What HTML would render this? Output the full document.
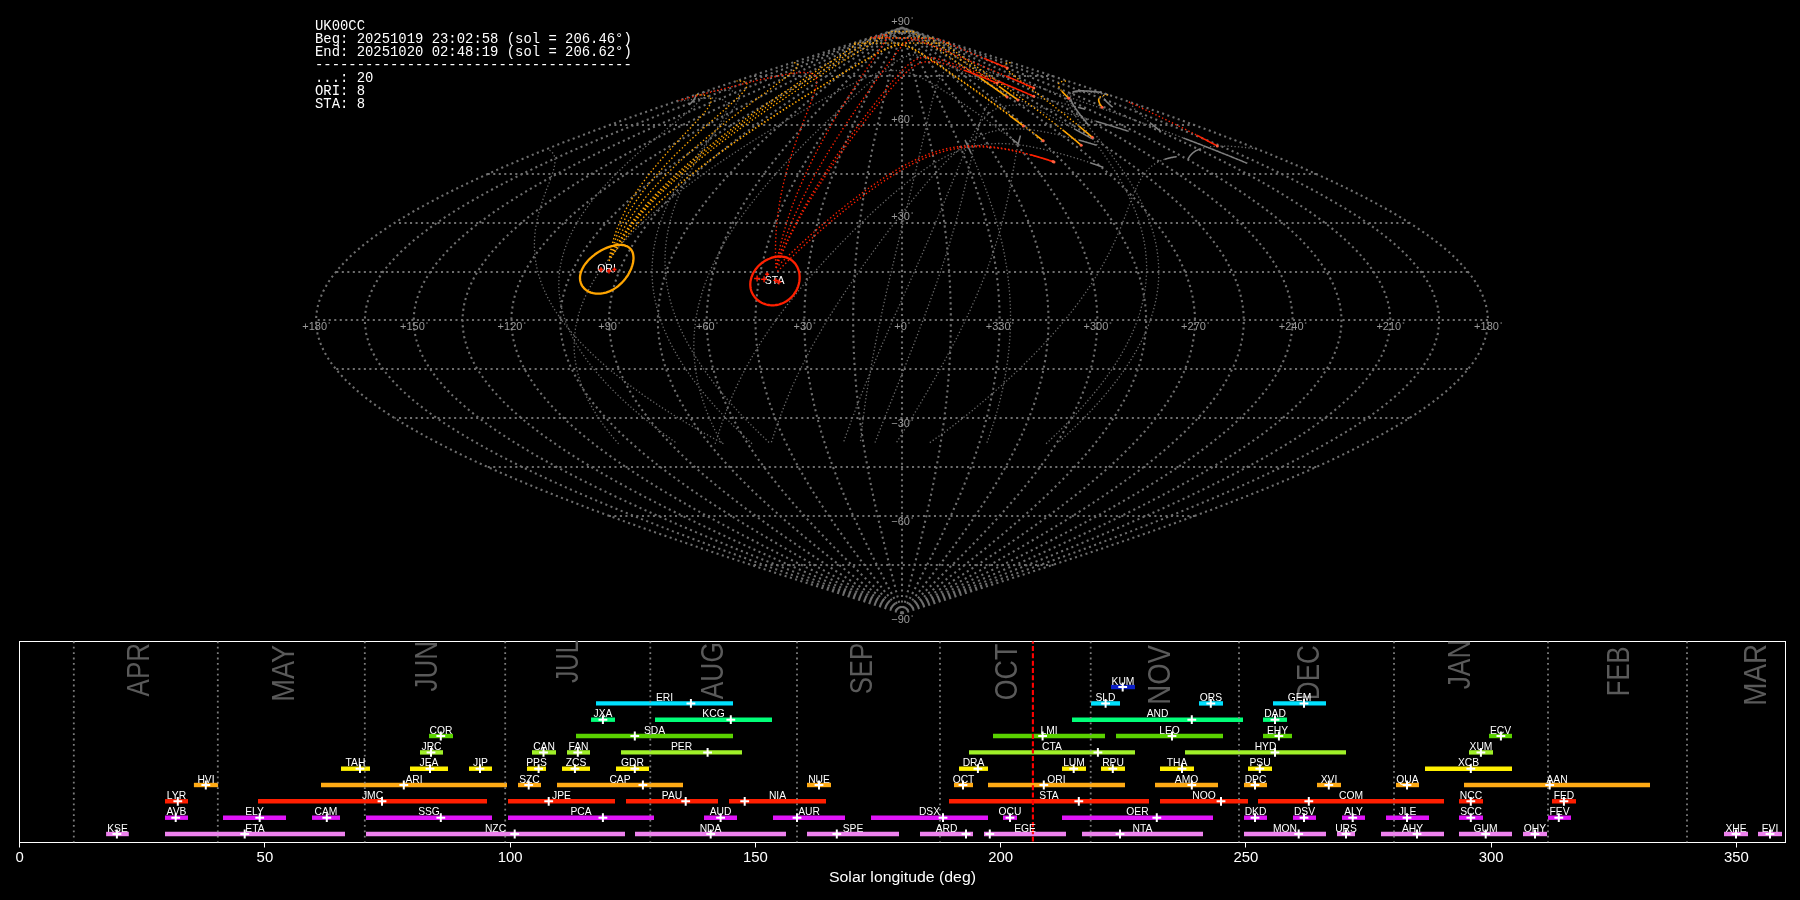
<!DOCTYPE html>
<html><head><meta charset="utf-8"><title>UK00CC</title>
<style>html,body{margin:0;padding:0;background:#000;width:1800px;height:900px;overflow:hidden}svg{display:block;will-change:transform}</style>
</head><body>
<svg width="1800" height="900" viewBox="0 0 1800 900">
<rect width="1800" height="900" fill="#000"/>
<path d="M902.0 613.5 L912.2 610.2 L922.4 606.9 L932.7 603.7 L942.9 600.4 L953.1 597.2 L963.2 593.9 L973.4 590.7 L983.5 587.4 L993.7 584.2 L1003.7 580.9 L1013.8 577.6 L1023.8 574.4 L1033.8 571.1 L1043.7 567.9 L1053.6 564.6 L1063.5 561.4 L1073.3 558.1 L1083.1 554.9 L1092.8 551.6 L1102.4 548.4 L1112.0 545.1 L1121.5 541.8 L1130.9 538.6 L1140.3 535.3 L1149.6 532.1 L1158.8 528.8 L1168.0 525.6 L1177.1 522.3 L1186.0 519.1 L1195.0 515.8 L1203.8 512.5 L1212.5 509.3 L1221.1 506.0 L1229.6 502.8 L1238.1 499.5 L1246.4 496.3 L1254.6 493.0 L1262.7 489.8 L1270.7 486.5 L1278.6 483.2 L1286.4 480.0 L1294.0 476.7 L1301.6 473.5 L1309.0 470.2 L1316.3 467.0 L1323.5 463.7 L1330.5 460.5 L1337.4 457.2 L1344.2 454.0 L1350.8 450.7 L1357.3 447.4 L1363.7 444.2 L1369.9 440.9 L1376.0 437.7 L1381.9 434.4 L1387.7 431.2 L1393.4 427.9 L1398.9 424.7 L1404.2 421.4 L1409.4 418.1 L1414.4 414.9 L1419.3 411.6 L1424.0 408.4 L1428.6 405.1 L1433.0 401.9 L1437.2 398.6 L1441.3 395.4 L1445.2 392.1 L1449.0 388.9 L1452.6 385.6 L1456.0 382.3 L1459.2 379.1 L1462.3 375.8 L1465.2 372.6 L1467.9 369.3 L1470.5 366.1 L1472.9 362.8 L1475.1 359.6 L1477.1 356.3 L1479.0 353.1 L1480.7 349.8 L1482.2 346.5 L1483.5 343.3 L1484.7 340.0 L1485.7 336.8 L1486.5 333.5 L1487.1 330.3 L1487.5 327.0 L1487.8 323.8 L1487.9 320.5 L1487.8 317.2 L1487.5 314.0 L1487.1 310.7 L1486.5 307.5 L1485.7 304.2 L1484.7 301.0 L1483.5 297.7 L1482.2 294.5 L1480.7 291.2 L1479.0 287.9 L1477.1 284.7 L1475.1 281.4 L1472.9 278.2 L1470.5 274.9 L1467.9 271.7 L1465.2 268.4 L1462.3 265.2 L1459.2 261.9 L1456.0 258.7 L1452.6 255.4 L1449.0 252.1 L1445.2 248.9 L1441.3 245.6 L1437.2 242.4 L1433.0 239.1 L1428.6 235.9 L1424.0 232.6 L1419.3 229.4 L1414.4 226.1 L1409.4 222.9 L1404.2 219.6 L1398.9 216.3 L1393.4 213.1 L1387.7 209.8 L1381.9 206.6 L1376.0 203.3 L1369.9 200.1 L1363.7 196.8 L1357.3 193.6 L1350.8 190.3 L1344.2 187.0 L1337.4 183.8 L1330.5 180.5 L1323.5 177.3 L1316.3 174.0 L1309.0 170.8 L1301.6 167.5 L1294.0 164.3 L1286.4 161.0 L1278.6 157.8 L1270.7 154.5 L1262.7 151.2 L1254.6 148.0 L1246.4 144.7 L1238.1 141.5 L1229.6 138.2 L1221.1 135.0 L1212.5 131.7 L1203.8 128.5 L1195.0 125.2 L1186.0 121.9 L1177.1 118.7 L1168.0 115.4 L1158.8 112.2 L1149.6 108.9 L1140.3 105.7 L1130.9 102.4 L1121.5 99.2 L1112.0 95.9 L1102.4 92.7 L1092.8 89.4 L1083.1 86.1 L1073.3 82.9 L1063.5 79.6 L1053.6 76.4 L1043.7 73.1 L1033.8 69.9 L1023.8 66.6 L1013.8 63.4 L1003.7 60.1 L993.7 56.8 L983.5 53.6 L973.4 50.3 L963.2 47.1 L953.1 43.8 L942.9 40.6 L932.7 37.3 L922.4 34.1 L912.2 30.8 L902.0 27.6 M902.0 613.5 L911.4 610.2 L920.7 606.9 L930.1 603.7 L939.5 600.4 L948.8 597.2 L958.1 593.9 L967.5 590.7 L976.7 587.4 L986.0 584.2 L995.3 580.9 L1004.5 577.6 L1013.7 574.4 L1022.8 571.1 L1031.9 567.9 L1041.0 564.6 L1050.0 561.4 L1059.0 558.1 L1068.0 554.9 L1076.9 551.6 L1085.7 548.4 L1094.5 545.1 L1103.2 541.8 L1111.9 538.6 L1120.4 535.3 L1129.0 532.1 L1137.4 528.8 L1145.8 525.6 L1154.1 522.3 L1162.4 519.1 L1170.5 515.8 L1178.6 512.5 L1186.6 509.3 L1194.5 506.0 L1202.3 502.8 L1210.1 499.5 L1217.7 496.3 L1225.2 493.0 L1232.7 489.8 L1240.0 486.5 L1247.2 483.2 L1254.4 480.0 L1261.4 476.7 L1268.3 473.5 L1275.1 470.2 L1281.8 467.0 L1288.3 463.7 L1294.8 460.5 L1301.1 457.2 L1307.3 454.0 L1313.4 450.7 L1319.4 447.4 L1325.2 444.2 L1330.9 440.9 L1336.5 437.7 L1341.9 434.4 L1347.3 431.2 L1352.4 427.9 L1357.5 424.7 L1362.4 421.4 L1367.1 418.1 L1371.7 414.9 L1376.2 411.6 L1380.5 408.4 L1384.7 405.1 L1388.8 401.9 L1392.6 398.6 L1396.4 395.4 L1400.0 392.1 L1403.4 388.9 L1406.7 385.6 L1409.8 382.3 L1412.8 379.1 L1415.6 375.8 L1418.3 372.6 L1420.8 369.3 L1423.1 366.1 L1425.3 362.8 L1427.3 359.6 L1429.2 356.3 L1430.9 353.1 L1432.5 349.8 L1433.8 346.5 L1435.1 343.3 L1436.1 340.0 L1437.0 336.8 L1437.8 333.5 L1438.3 330.3 L1438.7 327.0 L1439.0 323.8 L1439.1 320.5 L1439.0 317.2 L1438.7 314.0 L1438.3 310.7 L1437.8 307.5 L1437.0 304.2 L1436.1 301.0 L1435.1 297.7 L1433.8 294.5 L1432.5 291.2 L1430.9 287.9 L1429.2 284.7 L1427.3 281.4 L1425.3 278.2 L1423.1 274.9 L1420.8 271.7 L1418.3 268.4 L1415.6 265.2 L1412.8 261.9 L1409.8 258.7 L1406.7 255.4 L1403.4 252.1 L1400.0 248.9 L1396.4 245.6 L1392.6 242.4 L1388.8 239.1 L1384.7 235.9 L1380.5 232.6 L1376.2 229.4 L1371.7 226.1 L1367.1 222.9 L1362.4 219.6 L1357.5 216.3 L1352.4 213.1 L1347.3 209.8 L1341.9 206.6 L1336.5 203.3 L1330.9 200.1 L1325.2 196.8 L1319.4 193.6 L1313.4 190.3 L1307.3 187.0 L1301.1 183.8 L1294.8 180.5 L1288.3 177.3 L1281.8 174.0 L1275.1 170.8 L1268.3 167.5 L1261.4 164.3 L1254.4 161.0 L1247.2 157.8 L1240.0 154.5 L1232.7 151.2 L1225.2 148.0 L1217.7 144.7 L1210.1 141.5 L1202.3 138.2 L1194.5 135.0 L1186.6 131.7 L1178.6 128.5 L1170.5 125.2 L1162.4 121.9 L1154.1 118.7 L1145.8 115.4 L1137.4 112.2 L1129.0 108.9 L1120.4 105.7 L1111.9 102.4 L1103.2 99.2 L1094.5 95.9 L1085.7 92.7 L1076.9 89.4 L1068.0 86.1 L1059.0 82.9 L1050.0 79.6 L1041.0 76.4 L1031.9 73.1 L1022.8 69.9 L1013.7 66.6 L1004.5 63.4 L995.3 60.1 L986.0 56.8 L976.7 53.6 L967.5 50.3 L958.1 47.1 L948.8 43.8 L939.5 40.6 L930.1 37.3 L920.7 34.1 L911.4 30.8 L902.0 27.6 M902.0 613.5 L910.5 610.2 L919.0 606.9 L927.6 603.7 L936.1 600.4 L944.6 597.2 L953.0 593.9 L961.5 590.7 L970.0 587.4 L978.4 584.2 L986.8 580.9 L995.2 577.6 L1003.5 574.4 L1011.8 571.1 L1020.1 567.9 L1028.4 564.6 L1036.6 561.4 L1044.8 558.1 L1052.9 554.9 L1061.0 551.6 L1069.0 548.4 L1077.0 545.1 L1084.9 541.8 L1092.8 538.6 L1100.6 535.3 L1108.3 532.1 L1116.0 528.8 L1123.7 525.6 L1131.2 522.3 L1138.7 519.1 L1146.1 515.8 L1153.5 512.5 L1160.7 509.3 L1167.9 506.0 L1175.0 502.8 L1182.0 499.5 L1189.0 496.3 L1195.8 493.0 L1202.6 489.8 L1209.3 486.5 L1215.8 483.2 L1222.3 480.0 L1228.7 476.7 L1235.0 473.5 L1241.2 470.2 L1247.2 467.0 L1253.2 463.7 L1259.1 460.5 L1264.8 457.2 L1270.5 454.0 L1276.0 450.7 L1281.4 447.4 L1286.7 444.2 L1291.9 440.9 L1297.0 437.7 L1302.0 434.4 L1306.8 431.2 L1311.5 427.9 L1316.1 424.7 L1320.5 421.4 L1324.8 418.1 L1329.0 414.9 L1333.1 411.6 L1337.0 408.4 L1340.8 405.1 L1344.5 401.9 L1348.0 398.6 L1351.4 395.4 L1354.7 392.1 L1357.8 388.9 L1360.8 385.6 L1363.6 382.3 L1366.4 379.1 L1368.9 375.8 L1371.3 372.6 L1373.6 369.3 L1375.7 366.1 L1377.7 362.8 L1379.6 359.6 L1381.3 356.3 L1382.8 353.1 L1384.2 349.8 L1385.5 346.5 L1386.6 343.3 L1387.6 340.0 L1388.4 336.8 L1389.1 333.5 L1389.6 330.3 L1390.0 327.0 L1390.2 323.8 L1390.2 320.5 L1390.2 317.2 L1390.0 314.0 L1389.6 310.7 L1389.1 307.5 L1388.4 304.2 L1387.6 301.0 L1386.6 297.7 L1385.5 294.5 L1384.2 291.2 L1382.8 287.9 L1381.3 284.7 L1379.6 281.4 L1377.7 278.2 L1375.7 274.9 L1373.6 271.7 L1371.3 268.4 L1368.9 265.2 L1366.4 261.9 L1363.6 258.7 L1360.8 255.4 L1357.8 252.1 L1354.7 248.9 L1351.4 245.6 L1348.0 242.4 L1344.5 239.1 L1340.8 235.9 L1337.0 232.6 L1333.1 229.4 L1329.0 226.1 L1324.8 222.9 L1320.5 219.6 L1316.1 216.3 L1311.5 213.1 L1306.8 209.8 L1302.0 206.6 L1297.0 203.3 L1291.9 200.1 L1286.7 196.8 L1281.4 193.6 L1276.0 190.3 L1270.5 187.0 L1264.8 183.8 L1259.1 180.5 L1253.2 177.3 L1247.2 174.0 L1241.2 170.8 L1235.0 167.5 L1228.7 164.3 L1222.3 161.0 L1215.8 157.8 L1209.3 154.5 L1202.6 151.2 L1195.8 148.0 L1189.0 144.7 L1182.0 141.5 L1175.0 138.2 L1167.9 135.0 L1160.7 131.7 L1153.5 128.5 L1146.1 125.2 L1138.7 121.9 L1131.2 118.7 L1123.7 115.4 L1116.0 112.2 L1108.3 108.9 L1100.6 105.7 L1092.8 102.4 L1084.9 99.2 L1077.0 95.9 L1069.0 92.7 L1061.0 89.4 L1052.9 86.1 L1044.8 82.9 L1036.6 79.6 L1028.4 76.4 L1020.1 73.1 L1011.8 69.9 L1003.5 66.6 L995.2 63.4 L986.8 60.1 L978.4 56.8 L970.0 53.6 L961.5 50.3 L953.0 47.1 L944.6 43.8 L936.1 40.6 L927.6 37.3 L919.0 34.1 L910.5 30.8 L902.0 27.6 M902.0 613.5 L909.7 610.2 L917.3 606.9 L925.0 603.7 L932.7 600.4 L940.3 597.2 L947.9 593.9 L955.6 590.7 L963.2 587.4 L970.7 584.2 L978.3 580.9 L985.8 577.6 L993.4 574.4 L1000.8 571.1 L1008.3 567.9 L1015.7 564.6 L1023.1 561.4 L1030.5 558.1 L1037.8 554.9 L1045.1 551.6 L1052.3 548.4 L1059.5 545.1 L1066.6 541.8 L1073.7 538.6 L1080.7 535.3 L1087.7 532.1 L1094.6 528.8 L1101.5 525.6 L1108.3 522.3 L1115.0 519.1 L1121.7 515.8 L1128.3 512.5 L1134.9 509.3 L1141.3 506.0 L1147.7 502.8 L1154.0 499.5 L1160.3 496.3 L1166.5 493.0 L1172.5 489.8 L1178.5 486.5 L1184.5 483.2 L1190.3 480.0 L1196.0 476.7 L1201.7 473.5 L1207.3 470.2 L1212.7 467.0 L1218.1 463.7 L1223.4 460.5 L1228.6 457.2 L1233.6 454.0 L1238.6 450.7 L1243.5 447.4 L1248.3 444.2 L1252.9 440.9 L1257.5 437.7 L1262.0 434.4 L1266.3 431.2 L1270.5 427.9 L1274.7 424.7 L1278.7 421.4 L1282.6 418.1 L1286.3 414.9 L1290.0 411.6 L1293.5 408.4 L1297.0 405.1 L1300.3 401.9 L1303.4 398.6 L1306.5 395.4 L1309.4 392.1 L1312.2 388.9 L1314.9 385.6 L1317.5 382.3 L1319.9 379.1 L1322.2 375.8 L1324.4 372.6 L1326.5 369.3 L1328.4 366.1 L1330.2 362.8 L1331.8 359.6 L1333.4 356.3 L1334.7 353.1 L1336.0 349.8 L1337.1 346.5 L1338.1 343.3 L1339.0 340.0 L1339.8 336.8 L1340.4 333.5 L1340.8 330.3 L1341.2 327.0 L1341.4 323.8 L1341.4 320.5 L1341.4 317.2 L1341.2 314.0 L1340.8 310.7 L1340.4 307.5 L1339.8 304.2 L1339.0 301.0 L1338.1 297.7 L1337.1 294.5 L1336.0 291.2 L1334.7 287.9 L1333.4 284.7 L1331.8 281.4 L1330.2 278.2 L1328.4 274.9 L1326.5 271.7 L1324.4 268.4 L1322.2 265.2 L1319.9 261.9 L1317.5 258.7 L1314.9 255.4 L1312.2 252.1 L1309.4 248.9 L1306.5 245.6 L1303.4 242.4 L1300.3 239.1 L1297.0 235.9 L1293.5 232.6 L1290.0 229.4 L1286.3 226.1 L1282.6 222.9 L1278.7 219.6 L1274.7 216.3 L1270.5 213.1 L1266.3 209.8 L1262.0 206.6 L1257.5 203.3 L1252.9 200.1 L1248.3 196.8 L1243.5 193.6 L1238.6 190.3 L1233.6 187.0 L1228.6 183.8 L1223.4 180.5 L1218.1 177.3 L1212.7 174.0 L1207.3 170.8 L1201.7 167.5 L1196.0 164.3 L1190.3 161.0 L1184.5 157.8 L1178.5 154.5 L1172.5 151.2 L1166.5 148.0 L1160.3 144.7 L1154.0 141.5 L1147.7 138.2 L1141.3 135.0 L1134.9 131.7 L1128.3 128.5 L1121.7 125.2 L1115.0 121.9 L1108.3 118.7 L1101.5 115.4 L1094.6 112.2 L1087.7 108.9 L1080.7 105.7 L1073.7 102.4 L1066.6 99.2 L1059.5 95.9 L1052.3 92.7 L1045.1 89.4 L1037.8 86.1 L1030.5 82.9 L1023.1 79.6 L1015.7 76.4 L1008.3 73.1 L1000.8 69.9 L993.4 66.6 L985.8 63.4 L978.3 60.1 L970.7 56.8 L963.2 53.6 L955.6 50.3 L947.9 47.1 L940.3 43.8 L932.7 40.6 L925.0 37.3 L917.3 34.1 L909.7 30.8 L902.0 27.6 M902.0 613.5 L908.8 610.2 L915.6 606.9 L922.4 603.7 L929.2 600.4 L936.0 597.2 L942.8 593.9 L949.6 590.7 L956.4 587.4 L963.1 584.2 L969.8 580.9 L976.5 577.6 L983.2 574.4 L989.9 571.1 L996.5 567.9 L1003.1 564.6 L1009.7 561.4 L1016.2 558.1 L1022.7 554.9 L1029.2 551.6 L1035.6 548.4 L1042.0 545.1 L1048.3 541.8 L1054.6 538.6 L1060.9 535.3 L1067.1 532.1 L1073.2 528.8 L1079.3 525.6 L1085.4 522.3 L1091.4 519.1 L1097.3 515.8 L1103.2 512.5 L1109.0 509.3 L1114.7 506.0 L1120.4 502.8 L1126.0 499.5 L1131.6 496.3 L1137.1 493.0 L1142.5 489.8 L1147.8 486.5 L1153.1 483.2 L1158.3 480.0 L1163.4 476.7 L1168.4 473.5 L1173.3 470.2 L1178.2 467.0 L1183.0 463.7 L1187.7 460.5 L1192.3 457.2 L1196.8 454.0 L1201.2 450.7 L1205.6 447.4 L1209.8 444.2 L1213.9 440.9 L1218.0 437.7 L1222.0 434.4 L1225.8 431.2 L1229.6 427.9 L1233.2 424.7 L1236.8 421.4 L1240.3 418.1 L1243.6 414.9 L1246.9 411.6 L1250.0 408.4 L1253.1 405.1 L1256.0 401.9 L1258.8 398.6 L1261.5 395.4 L1264.2 392.1 L1266.7 388.9 L1269.0 385.6 L1271.3 382.3 L1273.5 379.1 L1275.5 375.8 L1277.5 372.6 L1279.3 369.3 L1281.0 366.1 L1282.6 362.8 L1284.1 359.6 L1285.4 356.3 L1286.7 353.1 L1287.8 349.8 L1288.8 346.5 L1289.7 343.3 L1290.5 340.0 L1291.1 336.8 L1291.6 333.5 L1292.1 330.3 L1292.4 327.0 L1292.5 323.8 L1292.6 320.5 L1292.5 317.2 L1292.4 314.0 L1292.1 310.7 L1291.6 307.5 L1291.1 304.2 L1290.5 301.0 L1289.7 297.7 L1288.8 294.5 L1287.8 291.2 L1286.7 287.9 L1285.4 284.7 L1284.1 281.4 L1282.6 278.2 L1281.0 274.9 L1279.3 271.7 L1277.5 268.4 L1275.5 265.2 L1273.5 261.9 L1271.3 258.7 L1269.0 255.4 L1266.7 252.1 L1264.2 248.9 L1261.5 245.6 L1258.8 242.4 L1256.0 239.1 L1253.1 235.9 L1250.0 232.6 L1246.9 229.4 L1243.6 226.1 L1240.3 222.9 L1236.8 219.6 L1233.2 216.3 L1229.6 213.1 L1225.8 209.8 L1222.0 206.6 L1218.0 203.3 L1213.9 200.1 L1209.8 196.8 L1205.6 193.6 L1201.2 190.3 L1196.8 187.0 L1192.3 183.8 L1187.7 180.5 L1183.0 177.3 L1178.2 174.0 L1173.3 170.8 L1168.4 167.5 L1163.4 164.3 L1158.3 161.0 L1153.1 157.8 L1147.8 154.5 L1142.5 151.2 L1137.1 148.0 L1131.6 144.7 L1126.0 141.5 L1120.4 138.2 L1114.7 135.0 L1109.0 131.7 L1103.2 128.5 L1097.3 125.2 L1091.4 121.9 L1085.4 118.7 L1079.3 115.4 L1073.2 112.2 L1067.1 108.9 L1060.9 105.7 L1054.6 102.4 L1048.3 99.2 L1042.0 95.9 L1035.6 92.7 L1029.2 89.4 L1022.7 86.1 L1016.2 82.9 L1009.7 79.6 L1003.1 76.4 L996.5 73.1 L989.9 69.9 L983.2 66.6 L976.5 63.4 L969.8 60.1 L963.1 56.8 L956.4 53.6 L949.6 50.3 L942.8 47.1 L936.0 43.8 L929.2 40.6 L922.4 37.3 L915.6 34.1 L908.8 30.8 L902.0 27.6 M902.0 613.5 L908.0 610.2 L913.9 606.9 L919.9 603.7 L925.8 600.4 L931.8 597.2 L937.7 593.9 L943.7 590.7 L949.6 587.4 L955.5 584.2 L961.3 580.9 L967.2 577.6 L973.1 574.4 L978.9 571.1 L984.7 567.9 L990.5 564.6 L996.2 561.4 L1001.9 558.1 L1007.6 554.9 L1013.3 551.6 L1018.9 548.4 L1024.5 545.1 L1030.0 541.8 L1035.5 538.6 L1041.0 535.3 L1046.4 532.1 L1051.8 528.8 L1057.2 525.6 L1062.5 522.3 L1067.7 519.1 L1072.9 515.8 L1078.0 512.5 L1083.1 509.3 L1088.1 506.0 L1093.1 502.8 L1098.0 499.5 L1102.9 496.3 L1107.7 493.0 L1112.4 489.8 L1117.1 486.5 L1121.7 483.2 L1126.2 480.0 L1130.7 476.7 L1135.1 473.5 L1139.4 470.2 L1143.7 467.0 L1147.9 463.7 L1152.0 460.5 L1156.0 457.2 L1159.9 454.0 L1163.8 450.7 L1167.6 447.4 L1171.3 444.2 L1175.0 440.9 L1178.5 437.7 L1182.0 434.4 L1185.3 431.2 L1188.6 427.9 L1191.8 424.7 L1195.0 421.4 L1198.0 418.1 L1200.9 414.9 L1203.8 411.6 L1206.5 408.4 L1209.2 405.1 L1211.8 401.9 L1214.2 398.6 L1216.6 395.4 L1218.9 392.1 L1221.1 388.9 L1223.2 385.6 L1225.2 382.3 L1227.0 379.1 L1228.8 375.8 L1230.5 372.6 L1232.1 369.3 L1233.6 366.1 L1235.0 362.8 L1236.3 359.6 L1237.5 356.3 L1238.6 353.1 L1239.6 349.8 L1240.4 346.5 L1241.2 343.3 L1241.9 340.0 L1242.5 336.8 L1242.9 333.5 L1243.3 330.3 L1243.6 327.0 L1243.7 323.8 L1243.8 320.5 L1243.7 317.2 L1243.6 314.0 L1243.3 310.7 L1242.9 307.5 L1242.5 304.2 L1241.9 301.0 L1241.2 297.7 L1240.4 294.5 L1239.6 291.2 L1238.6 287.9 L1237.5 284.7 L1236.3 281.4 L1235.0 278.2 L1233.6 274.9 L1232.1 271.7 L1230.5 268.4 L1228.8 265.2 L1227.0 261.9 L1225.2 258.7 L1223.2 255.4 L1221.1 252.1 L1218.9 248.9 L1216.6 245.6 L1214.2 242.4 L1211.8 239.1 L1209.2 235.9 L1206.5 232.6 L1203.8 229.4 L1200.9 226.1 L1198.0 222.9 L1195.0 219.6 L1191.8 216.3 L1188.6 213.1 L1185.3 209.8 L1182.0 206.6 L1178.5 203.3 L1175.0 200.1 L1171.3 196.8 L1167.6 193.6 L1163.8 190.3 L1159.9 187.0 L1156.0 183.8 L1152.0 180.5 L1147.9 177.3 L1143.7 174.0 L1139.4 170.8 L1135.1 167.5 L1130.7 164.3 L1126.2 161.0 L1121.7 157.8 L1117.1 154.5 L1112.4 151.2 L1107.7 148.0 L1102.9 144.7 L1098.0 141.5 L1093.1 138.2 L1088.1 135.0 L1083.1 131.7 L1078.0 128.5 L1072.9 125.2 L1067.7 121.9 L1062.5 118.7 L1057.2 115.4 L1051.8 112.2 L1046.4 108.9 L1041.0 105.7 L1035.5 102.4 L1030.0 99.2 L1024.5 95.9 L1018.9 92.7 L1013.3 89.4 L1007.6 86.1 L1001.9 82.9 L996.2 79.6 L990.5 76.4 L984.7 73.1 L978.9 69.9 L973.1 66.6 L967.2 63.4 L961.3 60.1 L955.5 56.8 L949.6 53.6 L943.7 50.3 L937.7 47.1 L931.8 43.8 L925.8 40.6 L919.9 37.3 L913.9 34.1 L908.0 30.8 L902.0 27.6 M902.0 613.5 L907.1 610.2 L912.2 606.9 L917.3 603.7 L922.4 600.4 L927.5 597.2 L932.6 593.9 L937.7 590.7 L942.8 587.4 L947.8 584.2 L952.9 580.9 L957.9 577.6 L962.9 574.4 L967.9 571.1 L972.9 567.9 L977.8 564.6 L982.7 561.4 L987.7 558.1 L992.5 554.9 L997.4 551.6 L1002.2 548.4 L1007.0 545.1 L1011.7 541.8 L1016.5 538.6 L1021.2 535.3 L1025.8 532.1 L1030.4 528.8 L1035.0 525.6 L1039.5 522.3 L1044.0 519.1 L1048.5 515.8 L1052.9 512.5 L1057.2 509.3 L1061.6 506.0 L1065.8 502.8 L1070.0 499.5 L1074.2 496.3 L1078.3 493.0 L1082.4 489.8 L1086.4 486.5 L1090.3 483.2 L1094.2 480.0 L1098.0 476.7 L1101.8 473.5 L1105.5 470.2 L1109.1 467.0 L1112.7 463.7 L1116.3 460.5 L1119.7 457.2 L1123.1 454.0 L1126.4 450.7 L1129.7 447.4 L1132.8 444.2 L1136.0 440.9 L1139.0 437.7 L1142.0 434.4 L1144.9 431.2 L1147.7 427.9 L1150.4 424.7 L1153.1 421.4 L1155.7 418.1 L1158.2 414.9 L1160.7 411.6 L1163.0 408.4 L1165.3 405.1 L1167.5 401.9 L1169.6 398.6 L1171.7 395.4 L1173.6 392.1 L1175.5 388.9 L1177.3 385.6 L1179.0 382.3 L1180.6 379.1 L1182.1 375.8 L1183.6 372.6 L1185.0 369.3 L1186.2 366.1 L1187.4 362.8 L1188.5 359.6 L1189.6 356.3 L1190.5 353.1 L1191.3 349.8 L1192.1 346.5 L1192.8 343.3 L1193.3 340.0 L1193.8 336.8 L1194.2 333.5 L1194.5 330.3 L1194.8 327.0 L1194.9 323.8 L1195.0 320.5 L1194.9 317.2 L1194.8 314.0 L1194.5 310.7 L1194.2 307.5 L1193.8 304.2 L1193.3 301.0 L1192.8 297.7 L1192.1 294.5 L1191.3 291.2 L1190.5 287.9 L1189.6 284.7 L1188.5 281.4 L1187.4 278.2 L1186.2 274.9 L1185.0 271.7 L1183.6 268.4 L1182.1 265.2 L1180.6 261.9 L1179.0 258.7 L1177.3 255.4 L1175.5 252.1 L1173.6 248.9 L1171.7 245.6 L1169.6 242.4 L1167.5 239.1 L1165.3 235.9 L1163.0 232.6 L1160.7 229.4 L1158.2 226.1 L1155.7 222.9 L1153.1 219.6 L1150.4 216.3 L1147.7 213.1 L1144.9 209.8 L1142.0 206.6 L1139.0 203.3 L1136.0 200.1 L1132.8 196.8 L1129.7 193.6 L1126.4 190.3 L1123.1 187.0 L1119.7 183.8 L1116.3 180.5 L1112.7 177.3 L1109.1 174.0 L1105.5 170.8 L1101.8 167.5 L1098.0 164.3 L1094.2 161.0 L1090.3 157.8 L1086.4 154.5 L1082.4 151.2 L1078.3 148.0 L1074.2 144.7 L1070.0 141.5 L1065.8 138.2 L1061.6 135.0 L1057.2 131.7 L1052.9 128.5 L1048.5 125.2 L1044.0 121.9 L1039.5 118.7 L1035.0 115.4 L1030.4 112.2 L1025.8 108.9 L1021.2 105.7 L1016.5 102.4 L1011.7 99.2 L1007.0 95.9 L1002.2 92.7 L997.4 89.4 L992.5 86.1 L987.7 82.9 L982.7 79.6 L977.8 76.4 L972.9 73.1 L967.9 69.9 L962.9 66.6 L957.9 63.4 L952.9 60.1 L947.8 56.8 L942.8 53.6 L937.7 50.3 L932.6 47.1 L927.5 43.8 L922.4 40.6 L917.3 37.3 L912.2 34.1 L907.1 30.8 L902.0 27.6 M902.0 613.5 L906.3 610.2 L910.5 606.9 L914.8 603.7 L919.0 600.4 L923.3 597.2 L927.5 593.9 L931.8 590.7 L936.0 587.4 L940.2 584.2 L944.4 580.9 L948.6 577.6 L952.8 574.4 L956.9 571.1 L961.1 567.9 L965.2 564.6 L969.3 561.4 L973.4 558.1 L977.4 554.9 L981.5 551.6 L985.5 548.4 L989.5 545.1 L993.5 541.8 L997.4 538.6 L1001.3 535.3 L1005.2 532.1 L1009.0 528.8 L1012.8 525.6 L1016.6 522.3 L1020.4 519.1 L1024.1 515.8 L1027.7 512.5 L1031.4 509.3 L1035.0 506.0 L1038.5 502.8 L1042.0 499.5 L1045.5 496.3 L1048.9 493.0 L1052.3 489.8 L1055.6 486.5 L1058.9 483.2 L1062.2 480.0 L1065.4 476.7 L1068.5 473.5 L1071.6 470.2 L1074.6 467.0 L1077.6 463.7 L1080.5 460.5 L1083.4 457.2 L1086.2 454.0 L1089.0 450.7 L1091.7 447.4 L1094.4 444.2 L1097.0 440.9 L1099.5 437.7 L1102.0 434.4 L1104.4 431.2 L1106.7 427.9 L1109.0 424.7 L1111.3 421.4 L1113.4 418.1 L1115.5 414.9 L1117.5 411.6 L1119.5 408.4 L1121.4 405.1 L1123.3 401.9 L1125.0 398.6 L1126.7 395.4 L1128.3 392.1 L1129.9 388.9 L1131.4 385.6 L1132.8 382.3 L1134.2 379.1 L1135.5 375.8 L1136.7 372.6 L1137.8 369.3 L1138.9 366.1 L1139.9 362.8 L1140.8 359.6 L1141.6 356.3 L1142.4 353.1 L1143.1 349.8 L1143.7 346.5 L1144.3 343.3 L1144.8 340.0 L1145.2 336.8 L1145.5 333.5 L1145.8 330.3 L1146.0 327.0 L1146.1 323.8 L1146.1 320.5 L1146.1 317.2 L1146.0 314.0 L1145.8 310.7 L1145.5 307.5 L1145.2 304.2 L1144.8 301.0 L1144.3 297.7 L1143.7 294.5 L1143.1 291.2 L1142.4 287.9 L1141.6 284.7 L1140.8 281.4 L1139.9 278.2 L1138.9 274.9 L1137.8 271.7 L1136.7 268.4 L1135.5 265.2 L1134.2 261.9 L1132.8 258.7 L1131.4 255.4 L1129.9 252.1 L1128.3 248.9 L1126.7 245.6 L1125.0 242.4 L1123.3 239.1 L1121.4 235.9 L1119.5 232.6 L1117.5 229.4 L1115.5 226.1 L1113.4 222.9 L1111.3 219.6 L1109.0 216.3 L1106.7 213.1 L1104.4 209.8 L1102.0 206.6 L1099.5 203.3 L1097.0 200.1 L1094.4 196.8 L1091.7 193.6 L1089.0 190.3 L1086.2 187.0 L1083.4 183.8 L1080.5 180.5 L1077.6 177.3 L1074.6 174.0 L1071.6 170.8 L1068.5 167.5 L1065.4 164.3 L1062.2 161.0 L1058.9 157.8 L1055.6 154.5 L1052.3 151.2 L1048.9 148.0 L1045.5 144.7 L1042.0 141.5 L1038.5 138.2 L1035.0 135.0 L1031.4 131.7 L1027.7 128.5 L1024.1 125.2 L1020.4 121.9 L1016.6 118.7 L1012.8 115.4 L1009.0 112.2 L1005.2 108.9 L1001.3 105.7 L997.4 102.4 L993.5 99.2 L989.5 95.9 L985.5 92.7 L981.5 89.4 L977.4 86.1 L973.4 82.9 L969.3 79.6 L965.2 76.4 L961.1 73.1 L956.9 69.9 L952.8 66.6 L948.6 63.4 L944.4 60.1 L940.2 56.8 L936.0 53.6 L931.8 50.3 L927.5 47.1 L923.3 43.8 L919.0 40.6 L914.8 37.3 L910.5 34.1 L906.3 30.8 L902.0 27.6 M902.0 613.5 L905.4 610.2 L908.8 606.9 L912.2 603.7 L915.6 600.4 L919.0 597.2 L922.4 593.9 L925.8 590.7 L929.2 587.4 L932.6 584.2 L935.9 580.9 L939.3 577.6 L942.6 574.4 L945.9 571.1 L949.2 567.9 L952.5 564.6 L955.8 561.4 L959.1 558.1 L962.4 554.9 L965.6 551.6 L968.8 548.4 L972.0 545.1 L975.2 541.8 L978.3 538.6 L981.4 535.3 L984.5 532.1 L987.6 528.8 L990.7 525.6 L993.7 522.3 L996.7 519.1 L999.6 515.8 L1002.6 512.5 L1005.5 509.3 L1008.4 506.0 L1011.2 502.8 L1014.0 499.5 L1016.8 496.3 L1019.5 493.0 L1022.2 489.8 L1024.9 486.5 L1027.5 483.2 L1030.1 480.0 L1032.7 476.7 L1035.2 473.5 L1037.7 470.2 L1040.1 467.0 L1042.5 463.7 L1044.8 460.5 L1047.1 457.2 L1049.4 454.0 L1051.6 450.7 L1053.8 447.4 L1055.9 444.2 L1058.0 440.9 L1060.0 437.7 L1062.0 434.4 L1063.9 431.2 L1065.8 427.9 L1067.6 424.7 L1069.4 421.4 L1071.1 418.1 L1072.8 414.9 L1074.4 411.6 L1076.0 408.4 L1077.5 405.1 L1079.0 401.9 L1080.4 398.6 L1081.8 395.4 L1083.1 392.1 L1084.3 388.9 L1085.5 385.6 L1086.7 382.3 L1087.7 379.1 L1088.8 375.8 L1089.7 372.6 L1090.6 369.3 L1091.5 366.1 L1092.3 362.8 L1093.0 359.6 L1093.7 356.3 L1094.3 353.1 L1094.9 349.8 L1095.4 346.5 L1095.8 343.3 L1096.2 340.0 L1096.6 336.8 L1096.8 333.5 L1097.0 330.3 L1097.2 327.0 L1097.3 323.8 L1097.3 320.5 L1097.3 317.2 L1097.2 314.0 L1097.0 310.7 L1096.8 307.5 L1096.6 304.2 L1096.2 301.0 L1095.8 297.7 L1095.4 294.5 L1094.9 291.2 L1094.3 287.9 L1093.7 284.7 L1093.0 281.4 L1092.3 278.2 L1091.5 274.9 L1090.6 271.7 L1089.7 268.4 L1088.8 265.2 L1087.7 261.9 L1086.7 258.7 L1085.5 255.4 L1084.3 252.1 L1083.1 248.9 L1081.8 245.6 L1080.4 242.4 L1079.0 239.1 L1077.5 235.9 L1076.0 232.6 L1074.4 229.4 L1072.8 226.1 L1071.1 222.9 L1069.4 219.6 L1067.6 216.3 L1065.8 213.1 L1063.9 209.8 L1062.0 206.6 L1060.0 203.3 L1058.0 200.1 L1055.9 196.8 L1053.8 193.6 L1051.6 190.3 L1049.4 187.0 L1047.1 183.8 L1044.8 180.5 L1042.5 177.3 L1040.1 174.0 L1037.7 170.8 L1035.2 167.5 L1032.7 164.3 L1030.1 161.0 L1027.5 157.8 L1024.9 154.5 L1022.2 151.2 L1019.5 148.0 L1016.8 144.7 L1014.0 141.5 L1011.2 138.2 L1008.4 135.0 L1005.5 131.7 L1002.6 128.5 L999.6 125.2 L996.7 121.9 L993.7 118.7 L990.7 115.4 L987.6 112.2 L984.5 108.9 L981.4 105.7 L978.3 102.4 L975.2 99.2 L972.0 95.9 L968.8 92.7 L965.6 89.4 L962.4 86.1 L959.1 82.9 L955.8 79.6 L952.5 76.4 L949.2 73.1 L945.9 69.9 L942.6 66.6 L939.3 63.4 L935.9 60.1 L932.6 56.8 L929.2 53.6 L925.8 50.3 L922.4 47.1 L919.0 43.8 L915.6 40.6 L912.2 37.3 L908.8 34.1 L905.4 30.8 L902.0 27.6 M902.0 613.5 L904.6 610.2 L907.1 606.9 L909.7 603.7 L912.2 600.4 L914.8 597.2 L917.3 593.9 L919.9 590.7 L922.4 587.4 L924.9 584.2 L927.4 580.9 L929.9 577.6 L932.5 574.4 L934.9 571.1 L937.4 567.9 L939.9 564.6 L942.4 561.4 L944.8 558.1 L947.3 554.9 L949.7 551.6 L952.1 548.4 L954.5 545.1 L956.9 541.8 L959.2 538.6 L961.6 535.3 L963.9 532.1 L966.2 528.8 L968.5 525.6 L970.8 522.3 L973.0 519.1 L975.2 515.8 L977.4 512.5 L979.6 509.3 L981.8 506.0 L983.9 502.8 L986.0 499.5 L988.1 496.3 L990.2 493.0 L992.2 489.8 L994.2 486.5 L996.2 483.2 L998.1 480.0 L1000.0 476.7 L1001.9 473.5 L1003.8 470.2 L1005.6 467.0 L1007.4 463.7 L1009.1 460.5 L1010.9 457.2 L1012.5 454.0 L1014.2 450.7 L1015.8 447.4 L1017.4 444.2 L1019.0 440.9 L1020.5 437.7 L1022.0 434.4 L1023.4 431.2 L1024.8 427.9 L1026.2 424.7 L1027.6 421.4 L1028.9 418.1 L1030.1 414.9 L1031.3 411.6 L1032.5 408.4 L1033.7 405.1 L1034.8 401.9 L1035.8 398.6 L1036.8 395.4 L1037.8 392.1 L1038.7 388.9 L1039.6 385.6 L1040.5 382.3 L1041.3 379.1 L1042.1 375.8 L1042.8 372.6 L1043.5 369.3 L1044.1 366.1 L1044.7 362.8 L1045.3 359.6 L1045.8 356.3 L1046.2 353.1 L1046.7 349.8 L1047.0 346.5 L1047.4 343.3 L1047.7 340.0 L1047.9 336.8 L1048.1 333.5 L1048.3 330.3 L1048.4 327.0 L1048.5 323.8 L1048.5 320.5 L1048.5 317.2 L1048.4 314.0 L1048.3 310.7 L1048.1 307.5 L1047.9 304.2 L1047.7 301.0 L1047.4 297.7 L1047.0 294.5 L1046.7 291.2 L1046.2 287.9 L1045.8 284.7 L1045.3 281.4 L1044.7 278.2 L1044.1 274.9 L1043.5 271.7 L1042.8 268.4 L1042.1 265.2 L1041.3 261.9 L1040.5 258.7 L1039.6 255.4 L1038.7 252.1 L1037.8 248.9 L1036.8 245.6 L1035.8 242.4 L1034.8 239.1 L1033.7 235.9 L1032.5 232.6 L1031.3 229.4 L1030.1 226.1 L1028.9 222.9 L1027.6 219.6 L1026.2 216.3 L1024.8 213.1 L1023.4 209.8 L1022.0 206.6 L1020.5 203.3 L1019.0 200.1 L1017.4 196.8 L1015.8 193.6 L1014.2 190.3 L1012.5 187.0 L1010.9 183.8 L1009.1 180.5 L1007.4 177.3 L1005.6 174.0 L1003.8 170.8 L1001.9 167.5 L1000.0 164.3 L998.1 161.0 L996.2 157.8 L994.2 154.5 L992.2 151.2 L990.2 148.0 L988.1 144.7 L986.0 141.5 L983.9 138.2 L981.8 135.0 L979.6 131.7 L977.4 128.5 L975.2 125.2 L973.0 121.9 L970.8 118.7 L968.5 115.4 L966.2 112.2 L963.9 108.9 L961.6 105.7 L959.2 102.4 L956.9 99.2 L954.5 95.9 L952.1 92.7 L949.7 89.4 L947.3 86.1 L944.8 82.9 L942.4 79.6 L939.9 76.4 L937.4 73.1 L934.9 69.9 L932.5 66.6 L929.9 63.4 L927.4 60.1 L924.9 56.8 L922.4 53.6 L919.9 50.3 L917.3 47.1 L914.8 43.8 L912.2 40.6 L909.7 37.3 L907.1 34.1 L904.6 30.8 L902.0 27.6 M902.0 613.5 L903.7 610.2 L905.4 606.9 L907.1 603.7 L908.8 600.4 L910.5 597.2 L912.2 593.9 L913.9 590.7 L915.6 587.4 L917.3 584.2 L919.0 580.9 L920.6 577.6 L922.3 574.4 L924.0 571.1 L925.6 567.9 L927.3 564.6 L928.9 561.4 L930.6 558.1 L932.2 554.9 L933.8 551.6 L935.4 548.4 L937.0 545.1 L938.6 541.8 L940.2 538.6 L941.7 535.3 L943.3 532.1 L944.8 528.8 L946.3 525.6 L947.8 522.3 L949.3 519.1 L950.8 515.8 L952.3 512.5 L953.7 509.3 L955.2 506.0 L956.6 502.8 L958.0 499.5 L959.4 496.3 L960.8 493.0 L962.1 489.8 L963.5 486.5 L964.8 483.2 L966.1 480.0 L967.3 476.7 L968.6 473.5 L969.8 470.2 L971.0 467.0 L972.2 463.7 L973.4 460.5 L974.6 457.2 L975.7 454.0 L976.8 450.7 L977.9 447.4 L978.9 444.2 L980.0 440.9 L981.0 437.7 L982.0 434.4 L983.0 431.2 L983.9 427.9 L984.8 424.7 L985.7 421.4 L986.6 418.1 L987.4 414.9 L988.2 411.6 L989.0 408.4 L989.8 405.1 L990.5 401.9 L991.2 398.6 L991.9 395.4 L992.5 392.1 L993.2 388.9 L993.8 385.6 L994.3 382.3 L994.9 379.1 L995.4 375.8 L995.9 372.6 L996.3 369.3 L996.7 366.1 L997.1 362.8 L997.5 359.6 L997.9 356.3 L998.2 353.1 L998.4 349.8 L998.7 346.5 L998.9 343.3 L999.1 340.0 L999.3 336.8 L999.4 333.5 L999.5 330.3 L999.6 327.0 L999.6 323.8 L999.6 320.5 L999.6 317.2 L999.6 314.0 L999.5 310.7 L999.4 307.5 L999.3 304.2 L999.1 301.0 L998.9 297.7 L998.7 294.5 L998.4 291.2 L998.2 287.9 L997.9 284.7 L997.5 281.4 L997.1 278.2 L996.7 274.9 L996.3 271.7 L995.9 268.4 L995.4 265.2 L994.9 261.9 L994.3 258.7 L993.8 255.4 L993.2 252.1 L992.5 248.9 L991.9 245.6 L991.2 242.4 L990.5 239.1 L989.8 235.9 L989.0 232.6 L988.2 229.4 L987.4 226.1 L986.6 222.9 L985.7 219.6 L984.8 216.3 L983.9 213.1 L983.0 209.8 L982.0 206.6 L981.0 203.3 L980.0 200.1 L978.9 196.8 L977.9 193.6 L976.8 190.3 L975.7 187.0 L974.6 183.8 L973.4 180.5 L972.2 177.3 L971.0 174.0 L969.8 170.8 L968.6 167.5 L967.3 164.3 L966.1 161.0 L964.8 157.8 L963.5 154.5 L962.1 151.2 L960.8 148.0 L959.4 144.7 L958.0 141.5 L956.6 138.2 L955.2 135.0 L953.7 131.7 L952.3 128.5 L950.8 125.2 L949.3 121.9 L947.8 118.7 L946.3 115.4 L944.8 112.2 L943.3 108.9 L941.7 105.7 L940.2 102.4 L938.6 99.2 L937.0 95.9 L935.4 92.7 L933.8 89.4 L932.2 86.1 L930.6 82.9 L928.9 79.6 L927.3 76.4 L925.6 73.1 L924.0 69.9 L922.3 66.6 L920.6 63.4 L919.0 60.1 L917.3 56.8 L915.6 53.6 L913.9 50.3 L912.2 47.1 L910.5 43.8 L908.8 40.6 L907.1 37.3 L905.4 34.1 L903.7 30.8 L902.0 27.6 M902.0 613.5 L902.9 610.2 L903.7 606.9 L904.6 603.7 L905.4 600.4 L906.3 597.2 L907.1 593.9 L908.0 590.7 L908.8 587.4 L909.6 584.2 L910.5 580.9 L911.3 577.6 L912.2 574.4 L913.0 571.1 L913.8 567.9 L914.6 564.6 L915.5 561.4 L916.3 558.1 L917.1 554.9 L917.9 551.6 L918.7 548.4 L919.5 545.1 L920.3 541.8 L921.1 538.6 L921.9 535.3 L922.6 532.1 L923.4 528.8 L924.2 525.6 L924.9 522.3 L925.7 519.1 L926.4 515.8 L927.1 512.5 L927.9 509.3 L928.6 506.0 L929.3 502.8 L930.0 499.5 L930.7 496.3 L931.4 493.0 L932.1 489.8 L932.7 486.5 L933.4 483.2 L934.0 480.0 L934.7 476.7 L935.3 473.5 L935.9 470.2 L936.5 467.0 L937.1 463.7 L937.7 460.5 L938.3 457.2 L938.8 454.0 L939.4 450.7 L939.9 447.4 L940.5 444.2 L941.0 440.9 L941.5 437.7 L942.0 434.4 L942.5 431.2 L942.9 427.9 L943.4 424.7 L943.9 421.4 L944.3 418.1 L944.7 414.9 L945.1 411.6 L945.5 408.4 L945.9 405.1 L946.3 401.9 L946.6 398.6 L946.9 395.4 L947.3 392.1 L947.6 388.9 L947.9 385.6 L948.2 382.3 L948.4 379.1 L948.7 375.8 L948.9 372.6 L949.2 369.3 L949.4 366.1 L949.6 362.8 L949.8 359.6 L949.9 356.3 L950.1 353.1 L950.2 349.8 L950.3 346.5 L950.5 343.3 L950.6 340.0 L950.6 336.8 L950.7 333.5 L950.8 330.3 L950.8 327.0 L950.8 323.8 L950.8 320.5 L950.8 317.2 L950.8 314.0 L950.8 310.7 L950.7 307.5 L950.6 304.2 L950.6 301.0 L950.5 297.7 L950.3 294.5 L950.2 291.2 L950.1 287.9 L949.9 284.7 L949.8 281.4 L949.6 278.2 L949.4 274.9 L949.2 271.7 L948.9 268.4 L948.7 265.2 L948.4 261.9 L948.2 258.7 L947.9 255.4 L947.6 252.1 L947.3 248.9 L946.9 245.6 L946.6 242.4 L946.3 239.1 L945.9 235.9 L945.5 232.6 L945.1 229.4 L944.7 226.1 L944.3 222.9 L943.9 219.6 L943.4 216.3 L942.9 213.1 L942.5 209.8 L942.0 206.6 L941.5 203.3 L941.0 200.1 L940.5 196.8 L939.9 193.6 L939.4 190.3 L938.8 187.0 L938.3 183.8 L937.7 180.5 L937.1 177.3 L936.5 174.0 L935.9 170.8 L935.3 167.5 L934.7 164.3 L934.0 161.0 L933.4 157.8 L932.7 154.5 L932.1 151.2 L931.4 148.0 L930.7 144.7 L930.0 141.5 L929.3 138.2 L928.6 135.0 L927.9 131.7 L927.1 128.5 L926.4 125.2 L925.7 121.9 L924.9 118.7 L924.2 115.4 L923.4 112.2 L922.6 108.9 L921.9 105.7 L921.1 102.4 L920.3 99.2 L919.5 95.9 L918.7 92.7 L917.9 89.4 L917.1 86.1 L916.3 82.9 L915.5 79.6 L914.6 76.4 L913.8 73.1 L913.0 69.9 L912.2 66.6 L911.3 63.4 L910.5 60.1 L909.6 56.8 L908.8 53.6 L908.0 50.3 L907.1 47.1 L906.3 43.8 L905.4 40.6 L904.6 37.3 L903.7 34.1 L902.9 30.8 L902.0 27.6 M902.0 613.5 L902.0 610.2 L902.0 606.9 L902.0 603.7 L902.0 600.4 L902.0 597.2 L902.0 593.9 L902.0 590.7 L902.0 587.4 L902.0 584.2 L902.0 580.9 L902.0 577.6 L902.0 574.4 L902.0 571.1 L902.0 567.9 L902.0 564.6 L902.0 561.4 L902.0 558.1 L902.0 554.9 L902.0 551.6 L902.0 548.4 L902.0 545.1 L902.0 541.8 L902.0 538.6 L902.0 535.3 L902.0 532.1 L902.0 528.8 L902.0 525.6 L902.0 522.3 L902.0 519.1 L902.0 515.8 L902.0 512.5 L902.0 509.3 L902.0 506.0 L902.0 502.8 L902.0 499.5 L902.0 496.3 L902.0 493.0 L902.0 489.8 L902.0 486.5 L902.0 483.2 L902.0 480.0 L902.0 476.7 L902.0 473.5 L902.0 470.2 L902.0 467.0 L902.0 463.7 L902.0 460.5 L902.0 457.2 L902.0 454.0 L902.0 450.7 L902.0 447.4 L902.0 444.2 L902.0 440.9 L902.0 437.7 L902.0 434.4 L902.0 431.2 L902.0 427.9 L902.0 424.7 L902.0 421.4 L902.0 418.1 L902.0 414.9 L902.0 411.6 L902.0 408.4 L902.0 405.1 L902.0 401.9 L902.0 398.6 L902.0 395.4 L902.0 392.1 L902.0 388.9 L902.0 385.6 L902.0 382.3 L902.0 379.1 L902.0 375.8 L902.0 372.6 L902.0 369.3 L902.0 366.1 L902.0 362.8 L902.0 359.6 L902.0 356.3 L902.0 353.1 L902.0 349.8 L902.0 346.5 L902.0 343.3 L902.0 340.0 L902.0 336.8 L902.0 333.5 L902.0 330.3 L902.0 327.0 L902.0 323.8 L902.0 320.5 L902.0 317.2 L902.0 314.0 L902.0 310.7 L902.0 307.5 L902.0 304.2 L902.0 301.0 L902.0 297.7 L902.0 294.5 L902.0 291.2 L902.0 287.9 L902.0 284.7 L902.0 281.4 L902.0 278.2 L902.0 274.9 L902.0 271.7 L902.0 268.4 L902.0 265.2 L902.0 261.9 L902.0 258.7 L902.0 255.4 L902.0 252.1 L902.0 248.9 L902.0 245.6 L902.0 242.4 L902.0 239.1 L902.0 235.9 L902.0 232.6 L902.0 229.4 L902.0 226.1 L902.0 222.9 L902.0 219.6 L902.0 216.3 L902.0 213.1 L902.0 209.8 L902.0 206.6 L902.0 203.3 L902.0 200.1 L902.0 196.8 L902.0 193.6 L902.0 190.3 L902.0 187.0 L902.0 183.8 L902.0 180.5 L902.0 177.3 L902.0 174.0 L902.0 170.8 L902.0 167.5 L902.0 164.3 L902.0 161.0 L902.0 157.8 L902.0 154.5 L902.0 151.2 L902.0 148.0 L902.0 144.7 L902.0 141.5 L902.0 138.2 L902.0 135.0 L902.0 131.7 L902.0 128.5 L902.0 125.2 L902.0 121.9 L902.0 118.7 L902.0 115.4 L902.0 112.2 L902.0 108.9 L902.0 105.7 L902.0 102.4 L902.0 99.2 L902.0 95.9 L902.0 92.7 L902.0 89.4 L902.0 86.1 L902.0 82.9 L902.0 79.6 L902.0 76.4 L902.0 73.1 L902.0 69.9 L902.0 66.6 L902.0 63.4 L902.0 60.1 L902.0 56.8 L902.0 53.6 L902.0 50.3 L902.0 47.1 L902.0 43.8 L902.0 40.6 L902.0 37.3 L902.0 34.1 L902.0 30.8 L902.0 27.6 M902.0 613.5 L901.1 610.2 L900.3 606.9 L899.4 603.7 L898.6 600.4 L897.7 597.2 L896.9 593.9 L896.0 590.7 L895.2 587.4 L894.4 584.2 L893.5 580.9 L892.7 577.6 L891.8 574.4 L891.0 571.1 L890.2 567.9 L889.4 564.6 L888.5 561.4 L887.7 558.1 L886.9 554.9 L886.1 551.6 L885.3 548.4 L884.5 545.1 L883.7 541.8 L882.9 538.6 L882.1 535.3 L881.4 532.1 L880.6 528.8 L879.8 525.6 L879.1 522.3 L878.3 519.1 L877.6 515.8 L876.9 512.5 L876.1 509.3 L875.4 506.0 L874.7 502.8 L874.0 499.5 L873.3 496.3 L872.6 493.0 L871.9 489.8 L871.3 486.5 L870.6 483.2 L870.0 480.0 L869.3 476.7 L868.7 473.5 L868.1 470.2 L867.5 467.0 L866.9 463.7 L866.3 460.5 L865.7 457.2 L865.2 454.0 L864.6 450.7 L864.1 447.4 L863.5 444.2 L863.0 440.9 L862.5 437.7 L862.0 434.4 L861.5 431.2 L861.1 427.9 L860.6 424.7 L860.1 421.4 L859.7 418.1 L859.3 414.9 L858.9 411.6 L858.5 408.4 L858.1 405.1 L857.7 401.9 L857.4 398.6 L857.1 395.4 L856.7 392.1 L856.4 388.9 L856.1 385.6 L855.8 382.3 L855.6 379.1 L855.3 375.8 L855.1 372.6 L854.8 369.3 L854.6 366.1 L854.4 362.8 L854.2 359.6 L854.1 356.3 L853.9 353.1 L853.8 349.8 L853.7 346.5 L853.5 343.3 L853.4 340.0 L853.4 336.8 L853.3 333.5 L853.2 330.3 L853.2 327.0 L853.2 323.8 L853.2 320.5 L853.2 317.2 L853.2 314.0 L853.2 310.7 L853.3 307.5 L853.4 304.2 L853.4 301.0 L853.5 297.7 L853.7 294.5 L853.8 291.2 L853.9 287.9 L854.1 284.7 L854.2 281.4 L854.4 278.2 L854.6 274.9 L854.8 271.7 L855.1 268.4 L855.3 265.2 L855.6 261.9 L855.8 258.7 L856.1 255.4 L856.4 252.1 L856.7 248.9 L857.1 245.6 L857.4 242.4 L857.7 239.1 L858.1 235.9 L858.5 232.6 L858.9 229.4 L859.3 226.1 L859.7 222.9 L860.1 219.6 L860.6 216.3 L861.1 213.1 L861.5 209.8 L862.0 206.6 L862.5 203.3 L863.0 200.1 L863.5 196.8 L864.1 193.6 L864.6 190.3 L865.2 187.0 L865.7 183.8 L866.3 180.5 L866.9 177.3 L867.5 174.0 L868.1 170.8 L868.7 167.5 L869.3 164.3 L870.0 161.0 L870.6 157.8 L871.3 154.5 L871.9 151.2 L872.6 148.0 L873.3 144.7 L874.0 141.5 L874.7 138.2 L875.4 135.0 L876.1 131.7 L876.9 128.5 L877.6 125.2 L878.3 121.9 L879.1 118.7 L879.8 115.4 L880.6 112.2 L881.4 108.9 L882.1 105.7 L882.9 102.4 L883.7 99.2 L884.5 95.9 L885.3 92.7 L886.1 89.4 L886.9 86.1 L887.7 82.9 L888.5 79.6 L889.4 76.4 L890.2 73.1 L891.0 69.9 L891.8 66.6 L892.7 63.4 L893.5 60.1 L894.4 56.8 L895.2 53.6 L896.0 50.3 L896.9 47.1 L897.7 43.8 L898.6 40.6 L899.4 37.3 L900.3 34.1 L901.1 30.8 L902.0 27.6 M902.0 613.5 L900.3 610.2 L898.6 606.9 L896.9 603.7 L895.2 600.4 L893.5 597.2 L891.8 593.9 L890.1 590.7 L888.4 587.4 L886.7 584.2 L885.0 580.9 L883.4 577.6 L881.7 574.4 L880.0 571.1 L878.4 567.9 L876.7 564.6 L875.1 561.4 L873.4 558.1 L871.8 554.9 L870.2 551.6 L868.6 548.4 L867.0 545.1 L865.4 541.8 L863.8 538.6 L862.3 535.3 L860.7 532.1 L859.2 528.8 L857.7 525.6 L856.2 522.3 L854.7 519.1 L853.2 515.8 L851.7 512.5 L850.3 509.3 L848.8 506.0 L847.4 502.8 L846.0 499.5 L844.6 496.3 L843.2 493.0 L841.9 489.8 L840.5 486.5 L839.2 483.2 L837.9 480.0 L836.7 476.7 L835.4 473.5 L834.2 470.2 L833.0 467.0 L831.8 463.7 L830.6 460.5 L829.4 457.2 L828.3 454.0 L827.2 450.7 L826.1 447.4 L825.1 444.2 L824.0 440.9 L823.0 437.7 L822.0 434.4 L821.0 431.2 L820.1 427.9 L819.2 424.7 L818.3 421.4 L817.4 418.1 L816.6 414.9 L815.8 411.6 L815.0 408.4 L814.2 405.1 L813.5 401.9 L812.8 398.6 L812.1 395.4 L811.5 392.1 L810.8 388.9 L810.2 385.6 L809.7 382.3 L809.1 379.1 L808.6 375.8 L808.1 372.6 L807.7 369.3 L807.3 366.1 L806.9 362.8 L806.5 359.6 L806.1 356.3 L805.8 353.1 L805.6 349.8 L805.3 346.5 L805.1 343.3 L804.9 340.0 L804.7 336.8 L804.6 333.5 L804.5 330.3 L804.4 327.0 L804.4 323.8 L804.4 320.5 L804.4 317.2 L804.4 314.0 L804.5 310.7 L804.6 307.5 L804.7 304.2 L804.9 301.0 L805.1 297.7 L805.3 294.5 L805.6 291.2 L805.8 287.9 L806.1 284.7 L806.5 281.4 L806.9 278.2 L807.3 274.9 L807.7 271.7 L808.1 268.4 L808.6 265.2 L809.1 261.9 L809.7 258.7 L810.2 255.4 L810.8 252.1 L811.5 248.9 L812.1 245.6 L812.8 242.4 L813.5 239.1 L814.2 235.9 L815.0 232.6 L815.8 229.4 L816.6 226.1 L817.4 222.9 L818.3 219.6 L819.2 216.3 L820.1 213.1 L821.0 209.8 L822.0 206.6 L823.0 203.3 L824.0 200.1 L825.1 196.8 L826.1 193.6 L827.2 190.3 L828.3 187.0 L829.4 183.8 L830.6 180.5 L831.8 177.3 L833.0 174.0 L834.2 170.8 L835.4 167.5 L836.7 164.3 L837.9 161.0 L839.2 157.8 L840.5 154.5 L841.9 151.2 L843.2 148.0 L844.6 144.7 L846.0 141.5 L847.4 138.2 L848.8 135.0 L850.3 131.7 L851.7 128.5 L853.2 125.2 L854.7 121.9 L856.2 118.7 L857.7 115.4 L859.2 112.2 L860.7 108.9 L862.3 105.7 L863.8 102.4 L865.4 99.2 L867.0 95.9 L868.6 92.7 L870.2 89.4 L871.8 86.1 L873.4 82.9 L875.1 79.6 L876.7 76.4 L878.4 73.1 L880.0 69.9 L881.7 66.6 L883.4 63.4 L885.0 60.1 L886.7 56.8 L888.4 53.6 L890.1 50.3 L891.8 47.1 L893.5 43.8 L895.2 40.6 L896.9 37.3 L898.6 34.1 L900.3 30.8 L902.0 27.6 M902.0 613.5 L899.4 610.2 L896.9 606.9 L894.3 603.7 L891.8 600.4 L889.2 597.2 L886.7 593.9 L884.1 590.7 L881.6 587.4 L879.1 584.2 L876.6 580.9 L874.1 577.6 L871.5 574.4 L869.1 571.1 L866.6 567.9 L864.1 564.6 L861.6 561.4 L859.2 558.1 L856.7 554.9 L854.3 551.6 L851.9 548.4 L849.5 545.1 L847.1 541.8 L844.8 538.6 L842.4 535.3 L840.1 532.1 L837.8 528.8 L835.5 525.6 L833.2 522.3 L831.0 519.1 L828.8 515.8 L826.6 512.5 L824.4 509.3 L822.2 506.0 L820.1 502.8 L818.0 499.5 L815.9 496.3 L813.8 493.0 L811.8 489.8 L809.8 486.5 L807.8 483.2 L805.9 480.0 L804.0 476.7 L802.1 473.5 L800.2 470.2 L798.4 467.0 L796.6 463.7 L794.9 460.5 L793.1 457.2 L791.5 454.0 L789.8 450.7 L788.2 447.4 L786.6 444.2 L785.0 440.9 L783.5 437.7 L782.0 434.4 L780.6 431.2 L779.2 427.9 L777.8 424.7 L776.4 421.4 L775.1 418.1 L773.9 414.9 L772.7 411.6 L771.5 408.4 L770.3 405.1 L769.2 401.9 L768.2 398.6 L767.2 395.4 L766.2 392.1 L765.3 388.9 L764.4 385.6 L763.5 382.3 L762.7 379.1 L761.9 375.8 L761.2 372.6 L760.5 369.3 L759.9 366.1 L759.3 362.8 L758.7 359.6 L758.2 356.3 L757.8 353.1 L757.3 349.8 L757.0 346.5 L756.6 343.3 L756.3 340.0 L756.1 336.8 L755.9 333.5 L755.7 330.3 L755.6 327.0 L755.5 323.8 L755.5 320.5 L755.5 317.2 L755.6 314.0 L755.7 310.7 L755.9 307.5 L756.1 304.2 L756.3 301.0 L756.6 297.7 L757.0 294.5 L757.3 291.2 L757.8 287.9 L758.2 284.7 L758.7 281.4 L759.3 278.2 L759.9 274.9 L760.5 271.7 L761.2 268.4 L761.9 265.2 L762.7 261.9 L763.5 258.7 L764.4 255.4 L765.3 252.1 L766.2 248.9 L767.2 245.6 L768.2 242.4 L769.2 239.1 L770.3 235.9 L771.5 232.6 L772.7 229.4 L773.9 226.1 L775.1 222.9 L776.4 219.6 L777.8 216.3 L779.2 213.1 L780.6 209.8 L782.0 206.6 L783.5 203.3 L785.0 200.1 L786.6 196.8 L788.2 193.6 L789.8 190.3 L791.5 187.0 L793.1 183.8 L794.9 180.5 L796.6 177.3 L798.4 174.0 L800.2 170.8 L802.1 167.5 L804.0 164.3 L805.9 161.0 L807.8 157.8 L809.8 154.5 L811.8 151.2 L813.8 148.0 L815.9 144.7 L818.0 141.5 L820.1 138.2 L822.2 135.0 L824.4 131.7 L826.6 128.5 L828.8 125.2 L831.0 121.9 L833.2 118.7 L835.5 115.4 L837.8 112.2 L840.1 108.9 L842.4 105.7 L844.8 102.4 L847.1 99.2 L849.5 95.9 L851.9 92.7 L854.3 89.4 L856.7 86.1 L859.2 82.9 L861.6 79.6 L864.1 76.4 L866.6 73.1 L869.1 69.9 L871.5 66.6 L874.1 63.4 L876.6 60.1 L879.1 56.8 L881.6 53.6 L884.1 50.3 L886.7 47.1 L889.2 43.8 L891.8 40.6 L894.3 37.3 L896.9 34.1 L899.4 30.8 L902.0 27.6 M902.0 613.5 L898.6 610.2 L895.2 606.9 L891.8 603.7 L888.4 600.4 L885.0 597.2 L881.6 593.9 L878.2 590.7 L874.8 587.4 L871.4 584.2 L868.1 580.9 L864.7 577.6 L861.4 574.4 L858.1 571.1 L854.8 567.9 L851.5 564.6 L848.2 561.4 L844.9 558.1 L841.6 554.9 L838.4 551.6 L835.2 548.4 L832.0 545.1 L828.8 541.8 L825.7 538.6 L822.6 535.3 L819.5 532.1 L816.4 528.8 L813.3 525.6 L810.3 522.3 L807.3 519.1 L804.4 515.8 L801.4 512.5 L798.5 509.3 L795.6 506.0 L792.8 502.8 L790.0 499.5 L787.2 496.3 L784.5 493.0 L781.8 489.8 L779.1 486.5 L776.5 483.2 L773.9 480.0 L771.3 476.7 L768.8 473.5 L766.3 470.2 L763.9 467.0 L761.5 463.7 L759.2 460.5 L756.9 457.2 L754.6 454.0 L752.4 450.7 L750.2 447.4 L748.1 444.2 L746.0 440.9 L744.0 437.7 L742.0 434.4 L740.1 431.2 L738.2 427.9 L736.4 424.7 L734.6 421.4 L732.9 418.1 L731.2 414.9 L729.6 411.6 L728.0 408.4 L726.5 405.1 L725.0 401.9 L723.6 398.6 L722.2 395.4 L720.9 392.1 L719.7 388.9 L718.5 385.6 L717.3 382.3 L716.3 379.1 L715.2 375.8 L714.3 372.6 L713.4 369.3 L712.5 366.1 L711.7 362.8 L711.0 359.6 L710.3 356.3 L709.7 353.1 L709.1 349.8 L708.6 346.5 L708.2 343.3 L707.8 340.0 L707.4 336.8 L707.2 333.5 L707.0 330.3 L706.8 327.0 L706.7 323.8 L706.7 320.5 L706.7 317.2 L706.8 314.0 L707.0 310.7 L707.2 307.5 L707.4 304.2 L707.8 301.0 L708.2 297.7 L708.6 294.5 L709.1 291.2 L709.7 287.9 L710.3 284.7 L711.0 281.4 L711.7 278.2 L712.5 274.9 L713.4 271.7 L714.3 268.4 L715.2 265.2 L716.3 261.9 L717.3 258.7 L718.5 255.4 L719.7 252.1 L720.9 248.9 L722.2 245.6 L723.6 242.4 L725.0 239.1 L726.5 235.9 L728.0 232.6 L729.6 229.4 L731.2 226.1 L732.9 222.9 L734.6 219.6 L736.4 216.3 L738.2 213.1 L740.1 209.8 L742.0 206.6 L744.0 203.3 L746.0 200.1 L748.1 196.8 L750.2 193.6 L752.4 190.3 L754.6 187.0 L756.9 183.8 L759.2 180.5 L761.5 177.3 L763.9 174.0 L766.3 170.8 L768.8 167.5 L771.3 164.3 L773.9 161.0 L776.5 157.8 L779.1 154.5 L781.8 151.2 L784.5 148.0 L787.2 144.7 L790.0 141.5 L792.8 138.2 L795.6 135.0 L798.5 131.7 L801.4 128.5 L804.4 125.2 L807.3 121.9 L810.3 118.7 L813.3 115.4 L816.4 112.2 L819.5 108.9 L822.6 105.7 L825.7 102.4 L828.8 99.2 L832.0 95.9 L835.2 92.7 L838.4 89.4 L841.6 86.1 L844.9 82.9 L848.2 79.6 L851.5 76.4 L854.8 73.1 L858.1 69.9 L861.4 66.6 L864.7 63.4 L868.1 60.1 L871.4 56.8 L874.8 53.6 L878.2 50.3 L881.6 47.1 L885.0 43.8 L888.4 40.6 L891.8 37.3 L895.2 34.1 L898.6 30.8 L902.0 27.6 M902.0 613.5 L897.7 610.2 L893.5 606.9 L889.2 603.7 L885.0 600.4 L880.7 597.2 L876.5 593.9 L872.2 590.7 L868.0 587.4 L863.8 584.2 L859.6 580.9 L855.4 577.6 L851.2 574.4 L847.1 571.1 L842.9 567.9 L838.8 564.6 L834.7 561.4 L830.6 558.1 L826.6 554.9 L822.5 551.6 L818.5 548.4 L814.5 545.1 L810.5 541.8 L806.6 538.6 L802.7 535.3 L798.8 532.1 L795.0 528.8 L791.2 525.6 L787.4 522.3 L783.6 519.1 L779.9 515.8 L776.3 512.5 L772.6 509.3 L769.0 506.0 L765.5 502.8 L762.0 499.5 L758.5 496.3 L755.1 493.0 L751.7 489.8 L748.4 486.5 L745.1 483.2 L741.8 480.0 L738.6 476.7 L735.5 473.5 L732.4 470.2 L729.4 467.0 L726.4 463.7 L723.5 460.5 L720.6 457.2 L717.8 454.0 L715.0 450.7 L712.3 447.4 L709.6 444.2 L707.0 440.9 L704.5 437.7 L702.0 434.4 L699.6 431.2 L697.3 427.9 L695.0 424.7 L692.7 421.4 L690.6 418.1 L688.5 414.9 L686.5 411.6 L684.5 408.4 L682.6 405.1 L680.7 401.9 L679.0 398.6 L677.3 395.4 L675.7 392.1 L674.1 388.9 L672.6 385.6 L671.2 382.3 L669.8 379.1 L668.5 375.8 L667.3 372.6 L666.2 369.3 L665.1 366.1 L664.1 362.8 L663.2 359.6 L662.4 356.3 L661.6 353.1 L660.9 349.8 L660.3 346.5 L659.7 343.3 L659.2 340.0 L658.8 336.8 L658.5 333.5 L658.2 330.3 L658.0 327.0 L657.9 323.8 L657.9 320.5 L657.9 317.2 L658.0 314.0 L658.2 310.7 L658.5 307.5 L658.8 304.2 L659.2 301.0 L659.7 297.7 L660.3 294.5 L660.9 291.2 L661.6 287.9 L662.4 284.7 L663.2 281.4 L664.1 278.2 L665.1 274.9 L666.2 271.7 L667.3 268.4 L668.5 265.2 L669.8 261.9 L671.2 258.7 L672.6 255.4 L674.1 252.1 L675.7 248.9 L677.3 245.6 L679.0 242.4 L680.7 239.1 L682.6 235.9 L684.5 232.6 L686.5 229.4 L688.5 226.1 L690.6 222.9 L692.7 219.6 L695.0 216.3 L697.3 213.1 L699.6 209.8 L702.0 206.6 L704.5 203.3 L707.0 200.1 L709.6 196.8 L712.3 193.6 L715.0 190.3 L717.8 187.0 L720.6 183.8 L723.5 180.5 L726.4 177.3 L729.4 174.0 L732.4 170.8 L735.5 167.5 L738.6 164.3 L741.8 161.0 L745.1 157.8 L748.4 154.5 L751.7 151.2 L755.1 148.0 L758.5 144.7 L762.0 141.5 L765.5 138.2 L769.0 135.0 L772.6 131.7 L776.3 128.5 L779.9 125.2 L783.6 121.9 L787.4 118.7 L791.2 115.4 L795.0 112.2 L798.8 108.9 L802.7 105.7 L806.6 102.4 L810.5 99.2 L814.5 95.9 L818.5 92.7 L822.5 89.4 L826.6 86.1 L830.6 82.9 L834.7 79.6 L838.8 76.4 L842.9 73.1 L847.1 69.9 L851.2 66.6 L855.4 63.4 L859.6 60.1 L863.8 56.8 L868.0 53.6 L872.2 50.3 L876.5 47.1 L880.7 43.8 L885.0 40.6 L889.2 37.3 L893.5 34.1 L897.7 30.8 L902.0 27.6 M902.0 613.5 L896.9 610.2 L891.8 606.9 L886.7 603.7 L881.6 600.4 L876.5 597.2 L871.4 593.9 L866.3 590.7 L861.2 587.4 L856.2 584.2 L851.1 580.9 L846.1 577.6 L841.1 574.4 L836.1 571.1 L831.1 567.9 L826.2 564.6 L821.3 561.4 L816.3 558.1 L811.5 554.9 L806.6 551.6 L801.8 548.4 L797.0 545.1 L792.3 541.8 L787.5 538.6 L782.8 535.3 L778.2 532.1 L773.6 528.8 L769.0 525.6 L764.5 522.3 L760.0 519.1 L755.5 515.8 L751.1 512.5 L746.8 509.3 L742.4 506.0 L738.2 502.8 L734.0 499.5 L729.8 496.3 L725.7 493.0 L721.6 489.8 L717.6 486.5 L713.7 483.2 L709.8 480.0 L706.0 476.7 L702.2 473.5 L698.5 470.2 L694.9 467.0 L691.3 463.7 L687.7 460.5 L684.3 457.2 L680.9 454.0 L677.6 450.7 L674.3 447.4 L671.2 444.2 L668.0 440.9 L665.0 437.7 L662.0 434.4 L659.1 431.2 L656.3 427.9 L653.6 424.7 L650.9 421.4 L648.3 418.1 L645.8 414.9 L643.3 411.6 L641.0 408.4 L638.7 405.1 L636.5 401.9 L634.4 398.6 L632.3 395.4 L630.4 392.1 L628.5 388.9 L626.7 385.6 L625.0 382.3 L623.4 379.1 L621.9 375.8 L620.4 372.6 L619.0 369.3 L617.8 366.1 L616.6 362.8 L615.5 359.6 L614.4 356.3 L613.5 353.1 L612.7 349.8 L611.9 346.5 L611.2 343.3 L610.7 340.0 L610.2 336.8 L609.8 333.5 L609.5 330.3 L609.2 327.0 L609.1 323.8 L609.0 320.5 L609.1 317.2 L609.2 314.0 L609.5 310.7 L609.8 307.5 L610.2 304.2 L610.7 301.0 L611.2 297.7 L611.9 294.5 L612.7 291.2 L613.5 287.9 L614.4 284.7 L615.5 281.4 L616.6 278.2 L617.8 274.9 L619.0 271.7 L620.4 268.4 L621.9 265.2 L623.4 261.9 L625.0 258.7 L626.7 255.4 L628.5 252.1 L630.4 248.9 L632.3 245.6 L634.4 242.4 L636.5 239.1 L638.7 235.9 L641.0 232.6 L643.3 229.4 L645.8 226.1 L648.3 222.9 L650.9 219.6 L653.6 216.3 L656.3 213.1 L659.1 209.8 L662.0 206.6 L665.0 203.3 L668.0 200.1 L671.2 196.8 L674.3 193.6 L677.6 190.3 L680.9 187.0 L684.3 183.8 L687.7 180.5 L691.3 177.3 L694.9 174.0 L698.5 170.8 L702.2 167.5 L706.0 164.3 L709.8 161.0 L713.7 157.8 L717.6 154.5 L721.6 151.2 L725.7 148.0 L729.8 144.7 L734.0 141.5 L738.2 138.2 L742.4 135.0 L746.8 131.7 L751.1 128.5 L755.5 125.2 L760.0 121.9 L764.5 118.7 L769.0 115.4 L773.6 112.2 L778.2 108.9 L782.8 105.7 L787.5 102.4 L792.3 99.2 L797.0 95.9 L801.8 92.7 L806.6 89.4 L811.5 86.1 L816.3 82.9 L821.3 79.6 L826.2 76.4 L831.1 73.1 L836.1 69.9 L841.1 66.6 L846.1 63.4 L851.1 60.1 L856.2 56.8 L861.2 53.6 L866.3 50.3 L871.4 47.1 L876.5 43.8 L881.6 40.6 L886.7 37.3 L891.8 34.1 L896.9 30.8 L902.0 27.6 M902.0 613.5 L896.0 610.2 L890.1 606.9 L884.1 603.7 L878.2 600.4 L872.2 597.2 L866.3 593.9 L860.3 590.7 L854.4 587.4 L848.5 584.2 L842.7 580.9 L836.8 577.6 L830.9 574.4 L825.1 571.1 L819.3 567.9 L813.5 564.6 L807.8 561.4 L802.1 558.1 L796.4 554.9 L790.7 551.6 L785.1 548.4 L779.5 545.1 L774.0 541.8 L768.5 538.6 L763.0 535.3 L757.6 532.1 L752.2 528.8 L746.8 525.6 L741.5 522.3 L736.3 519.1 L731.1 515.8 L726.0 512.5 L720.9 509.3 L715.9 506.0 L710.9 502.8 L706.0 499.5 L701.1 496.3 L696.3 493.0 L691.6 489.8 L686.9 486.5 L682.3 483.2 L677.8 480.0 L673.3 476.7 L668.9 473.5 L664.6 470.2 L660.3 467.0 L656.1 463.7 L652.0 460.5 L648.0 457.2 L644.1 454.0 L640.2 450.7 L636.4 447.4 L632.7 444.2 L629.0 440.9 L625.5 437.7 L622.0 434.4 L618.7 431.2 L615.4 427.9 L612.2 424.7 L609.0 421.4 L606.0 418.1 L603.1 414.9 L600.2 411.6 L597.5 408.4 L594.8 405.1 L592.2 401.9 L589.8 398.6 L587.4 395.4 L585.1 392.1 L582.9 388.9 L580.8 385.6 L578.8 382.3 L577.0 379.1 L575.2 375.8 L573.5 372.6 L571.9 369.3 L570.4 366.1 L569.0 362.8 L567.7 359.6 L566.5 356.3 L565.4 353.1 L564.4 349.8 L563.6 346.5 L562.8 343.3 L562.1 340.0 L561.5 336.8 L561.1 333.5 L560.7 330.3 L560.4 327.0 L560.3 323.8 L560.2 320.5 L560.3 317.2 L560.4 314.0 L560.7 310.7 L561.1 307.5 L561.5 304.2 L562.1 301.0 L562.8 297.7 L563.6 294.5 L564.4 291.2 L565.4 287.9 L566.5 284.7 L567.7 281.4 L569.0 278.2 L570.4 274.9 L571.9 271.7 L573.5 268.4 L575.2 265.2 L577.0 261.9 L578.8 258.7 L580.8 255.4 L582.9 252.1 L585.1 248.9 L587.4 245.6 L589.8 242.4 L592.2 239.1 L594.8 235.9 L597.5 232.6 L600.2 229.4 L603.1 226.1 L606.0 222.9 L609.0 219.6 L612.2 216.3 L615.4 213.1 L618.7 209.8 L622.0 206.6 L625.5 203.3 L629.0 200.1 L632.7 196.8 L636.4 193.6 L640.2 190.3 L644.1 187.0 L648.0 183.8 L652.0 180.5 L656.1 177.3 L660.3 174.0 L664.6 170.8 L668.9 167.5 L673.3 164.3 L677.8 161.0 L682.3 157.8 L686.9 154.5 L691.6 151.2 L696.3 148.0 L701.1 144.7 L706.0 141.5 L710.9 138.2 L715.9 135.0 L720.9 131.7 L726.0 128.5 L731.1 125.2 L736.3 121.9 L741.5 118.7 L746.8 115.4 L752.2 112.2 L757.6 108.9 L763.0 105.7 L768.5 102.4 L774.0 99.2 L779.5 95.9 L785.1 92.7 L790.7 89.4 L796.4 86.1 L802.1 82.9 L807.8 79.6 L813.5 76.4 L819.3 73.1 L825.1 69.9 L830.9 66.6 L836.8 63.4 L842.7 60.1 L848.5 56.8 L854.4 53.6 L860.3 50.3 L866.3 47.1 L872.2 43.8 L878.2 40.6 L884.1 37.3 L890.1 34.1 L896.0 30.8 L902.0 27.6 M902.0 613.5 L895.2 610.2 L888.4 606.9 L881.6 603.7 L874.8 600.4 L868.0 597.2 L861.2 593.9 L854.4 590.7 L847.6 587.4 L840.9 584.2 L834.2 580.9 L827.5 577.6 L820.8 574.4 L814.1 571.1 L807.5 567.9 L800.9 564.6 L794.3 561.4 L787.8 558.1 L781.3 554.9 L774.8 551.6 L768.4 548.4 L762.0 545.1 L755.7 541.8 L749.4 538.6 L743.1 535.3 L736.9 532.1 L730.8 528.8 L724.7 525.6 L718.6 522.3 L712.6 519.1 L706.7 515.8 L700.8 512.5 L695.0 509.3 L689.3 506.0 L683.6 502.8 L678.0 499.5 L672.4 496.3 L666.9 493.0 L661.5 489.8 L656.2 486.5 L650.9 483.2 L645.7 480.0 L640.6 476.7 L635.6 473.5 L630.7 470.2 L625.8 467.0 L621.0 463.7 L616.3 460.5 L611.7 457.2 L607.2 454.0 L602.8 450.7 L598.4 447.4 L594.2 444.2 L590.1 440.9 L586.0 437.7 L582.0 434.4 L578.2 431.2 L574.4 427.9 L570.8 424.7 L567.2 421.4 L563.7 418.1 L560.4 414.9 L557.1 411.6 L554.0 408.4 L550.9 405.1 L548.0 401.9 L545.2 398.6 L542.5 395.4 L539.8 392.1 L537.3 388.9 L535.0 385.6 L532.7 382.3 L530.5 379.1 L528.5 375.8 L526.5 372.6 L524.7 369.3 L523.0 366.1 L521.4 362.8 L519.9 359.6 L518.6 356.3 L517.3 353.1 L516.2 349.8 L515.2 346.5 L514.3 343.3 L513.5 340.0 L512.9 336.8 L512.4 333.5 L511.9 330.3 L511.6 327.0 L511.5 323.8 L511.4 320.5 L511.5 317.2 L511.6 314.0 L511.9 310.7 L512.4 307.5 L512.9 304.2 L513.5 301.0 L514.3 297.7 L515.2 294.5 L516.2 291.2 L517.3 287.9 L518.6 284.7 L519.9 281.4 L521.4 278.2 L523.0 274.9 L524.7 271.7 L526.5 268.4 L528.5 265.2 L530.5 261.9 L532.7 258.7 L535.0 255.4 L537.3 252.1 L539.8 248.9 L542.5 245.6 L545.2 242.4 L548.0 239.1 L550.9 235.9 L554.0 232.6 L557.1 229.4 L560.4 226.1 L563.7 222.9 L567.2 219.6 L570.8 216.3 L574.4 213.1 L578.2 209.8 L582.0 206.6 L586.0 203.3 L590.1 200.1 L594.2 196.8 L598.4 193.6 L602.8 190.3 L607.2 187.0 L611.7 183.8 L616.3 180.5 L621.0 177.3 L625.8 174.0 L630.7 170.8 L635.6 167.5 L640.6 164.3 L645.7 161.0 L650.9 157.8 L656.2 154.5 L661.5 151.2 L666.9 148.0 L672.4 144.7 L678.0 141.5 L683.6 138.2 L689.3 135.0 L695.0 131.7 L700.8 128.5 L706.7 125.2 L712.6 121.9 L718.6 118.7 L724.7 115.4 L730.8 112.2 L736.9 108.9 L743.1 105.7 L749.4 102.4 L755.7 99.2 L762.0 95.9 L768.4 92.7 L774.8 89.4 L781.3 86.1 L787.8 82.9 L794.3 79.6 L800.9 76.4 L807.5 73.1 L814.1 69.9 L820.8 66.6 L827.5 63.4 L834.2 60.1 L840.9 56.8 L847.6 53.6 L854.4 50.3 L861.2 47.1 L868.0 43.8 L874.8 40.6 L881.6 37.3 L888.4 34.1 L895.2 30.8 L902.0 27.6 M902.0 613.5 L894.3 610.2 L886.7 606.9 L879.0 603.7 L871.3 600.4 L863.7 597.2 L856.1 593.9 L848.4 590.7 L840.8 587.4 L833.3 584.2 L825.7 580.9 L818.2 577.6 L810.6 574.4 L803.2 571.1 L795.7 567.9 L788.3 564.6 L780.9 561.4 L773.5 558.1 L766.2 554.9 L758.9 551.6 L751.7 548.4 L744.5 545.1 L737.4 541.8 L730.3 538.6 L723.3 535.3 L716.3 532.1 L709.4 528.8 L702.5 525.6 L695.7 522.3 L689.0 519.1 L682.3 515.8 L675.7 512.5 L669.1 509.3 L662.7 506.0 L656.3 502.8 L650.0 499.5 L643.7 496.3 L637.5 493.0 L631.5 489.8 L625.5 486.5 L619.5 483.2 L613.7 480.0 L608.0 476.7 L602.3 473.5 L596.7 470.2 L591.3 467.0 L585.9 463.7 L580.6 460.5 L575.4 457.2 L570.4 454.0 L565.4 450.7 L560.5 447.4 L555.7 444.2 L551.1 440.9 L546.5 437.7 L542.0 434.4 L537.7 431.2 L533.5 427.9 L529.3 424.7 L525.3 421.4 L521.4 418.1 L517.7 414.9 L514.0 411.6 L510.5 408.4 L507.0 405.1 L503.7 401.9 L500.6 398.6 L497.5 395.4 L494.6 392.1 L491.8 388.9 L489.1 385.6 L486.5 382.3 L484.1 379.1 L481.8 375.8 L479.6 372.6 L477.5 369.3 L475.6 366.1 L473.8 362.8 L472.2 359.6 L470.6 356.3 L469.3 353.1 L468.0 349.8 L466.9 346.5 L465.9 343.3 L465.0 340.0 L464.2 336.8 L463.6 333.5 L463.2 330.3 L462.8 327.0 L462.6 323.8 L462.6 320.5 L462.6 317.2 L462.8 314.0 L463.2 310.7 L463.6 307.5 L464.2 304.2 L465.0 301.0 L465.9 297.7 L466.9 294.5 L468.0 291.2 L469.3 287.9 L470.6 284.7 L472.2 281.4 L473.8 278.2 L475.6 274.9 L477.5 271.7 L479.6 268.4 L481.8 265.2 L484.1 261.9 L486.5 258.7 L489.1 255.4 L491.8 252.1 L494.6 248.9 L497.5 245.6 L500.6 242.4 L503.7 239.1 L507.0 235.9 L510.5 232.6 L514.0 229.4 L517.7 226.1 L521.4 222.9 L525.3 219.6 L529.3 216.3 L533.5 213.1 L537.7 209.8 L542.0 206.6 L546.5 203.3 L551.1 200.1 L555.7 196.8 L560.5 193.6 L565.4 190.3 L570.4 187.0 L575.4 183.8 L580.6 180.5 L585.9 177.3 L591.3 174.0 L596.7 170.8 L602.3 167.5 L608.0 164.3 L613.7 161.0 L619.5 157.8 L625.5 154.5 L631.5 151.2 L637.5 148.0 L643.7 144.7 L650.0 141.5 L656.3 138.2 L662.7 135.0 L669.1 131.7 L675.7 128.5 L682.3 125.2 L689.0 121.9 L695.7 118.7 L702.5 115.4 L709.4 112.2 L716.3 108.9 L723.3 105.7 L730.3 102.4 L737.4 99.2 L744.5 95.9 L751.7 92.7 L758.9 89.4 L766.2 86.1 L773.5 82.9 L780.9 79.6 L788.3 76.4 L795.7 73.1 L803.2 69.9 L810.6 66.6 L818.2 63.4 L825.7 60.1 L833.3 56.8 L840.8 53.6 L848.4 50.3 L856.1 47.1 L863.7 43.8 L871.3 40.6 L879.0 37.3 L886.7 34.1 L894.3 30.8 L902.0 27.6 M902.0 613.5 L893.5 610.2 L885.0 606.9 L876.4 603.7 L867.9 600.4 L859.4 597.2 L851.0 593.9 L842.5 590.7 L834.0 587.4 L825.6 584.2 L817.2 580.9 L808.8 577.6 L800.5 574.4 L792.2 571.1 L783.9 567.9 L775.6 564.6 L767.4 561.4 L759.2 558.1 L751.1 554.9 L743.0 551.6 L735.0 548.4 L727.0 545.1 L719.1 541.8 L711.2 538.6 L703.4 535.3 L695.7 532.1 L688.0 528.8 L680.3 525.6 L672.8 522.3 L665.3 519.1 L657.9 515.8 L650.5 512.5 L643.3 509.3 L636.1 506.0 L629.0 502.8 L622.0 499.5 L615.0 496.3 L608.2 493.0 L601.4 489.8 L594.7 486.5 L588.2 483.2 L581.7 480.0 L575.3 476.7 L569.0 473.5 L562.8 470.2 L556.8 467.0 L550.8 463.7 L544.9 460.5 L539.2 457.2 L533.5 454.0 L528.0 450.7 L522.6 447.4 L517.3 444.2 L512.1 440.9 L507.0 437.7 L502.0 434.4 L497.2 431.2 L492.5 427.9 L487.9 424.7 L483.5 421.4 L479.2 418.1 L475.0 414.9 L470.9 411.6 L467.0 408.4 L463.2 405.1 L459.5 401.9 L456.0 398.6 L452.6 395.4 L449.3 392.1 L446.2 388.9 L443.2 385.6 L440.4 382.3 L437.6 379.1 L435.1 375.8 L432.7 372.6 L430.4 369.3 L428.3 366.1 L426.3 362.8 L424.4 359.6 L422.7 356.3 L421.2 353.1 L419.8 349.8 L418.5 346.5 L417.4 343.3 L416.4 340.0 L415.6 336.8 L414.9 333.5 L414.4 330.3 L414.0 327.0 L413.8 323.8 L413.8 320.5 L413.8 317.2 L414.0 314.0 L414.4 310.7 L414.9 307.5 L415.6 304.2 L416.4 301.0 L417.4 297.7 L418.5 294.5 L419.8 291.2 L421.2 287.9 L422.7 284.7 L424.4 281.4 L426.3 278.2 L428.3 274.9 L430.4 271.7 L432.7 268.4 L435.1 265.2 L437.6 261.9 L440.4 258.7 L443.2 255.4 L446.2 252.1 L449.3 248.9 L452.6 245.6 L456.0 242.4 L459.5 239.1 L463.2 235.9 L467.0 232.6 L470.9 229.4 L475.0 226.1 L479.2 222.9 L483.5 219.6 L487.9 216.3 L492.5 213.1 L497.2 209.8 L502.0 206.6 L507.0 203.3 L512.1 200.1 L517.3 196.8 L522.6 193.6 L528.0 190.3 L533.5 187.0 L539.2 183.8 L544.9 180.5 L550.8 177.3 L556.8 174.0 L562.8 170.8 L569.0 167.5 L575.3 164.3 L581.7 161.0 L588.2 157.8 L594.7 154.5 L601.4 151.2 L608.2 148.0 L615.0 144.7 L622.0 141.5 L629.0 138.2 L636.1 135.0 L643.3 131.7 L650.5 128.5 L657.9 125.2 L665.3 121.9 L672.8 118.7 L680.3 115.4 L688.0 112.2 L695.7 108.9 L703.4 105.7 L711.2 102.4 L719.1 99.2 L727.0 95.9 L735.0 92.7 L743.0 89.4 L751.1 86.1 L759.2 82.9 L767.4 79.6 L775.6 76.4 L783.9 73.1 L792.2 69.9 L800.5 66.6 L808.8 63.4 L817.2 60.1 L825.6 56.8 L834.0 53.6 L842.5 50.3 L851.0 47.1 L859.4 43.8 L867.9 40.6 L876.4 37.3 L885.0 34.1 L893.5 30.8 L902.0 27.6 M902.0 613.5 L892.6 610.2 L883.3 606.9 L873.9 603.7 L864.5 600.4 L855.2 597.2 L845.9 593.9 L836.5 590.7 L827.3 587.4 L818.0 584.2 L808.7 580.9 L799.5 577.6 L790.3 574.4 L781.2 571.1 L772.1 567.9 L763.0 564.6 L754.0 561.4 L745.0 558.1 L736.0 554.9 L727.1 551.6 L718.3 548.4 L709.5 545.1 L700.8 541.8 L692.1 538.6 L683.6 535.3 L675.0 532.1 L666.6 528.8 L658.2 525.6 L649.9 522.3 L641.6 519.1 L633.5 515.8 L625.4 512.5 L617.4 509.3 L609.5 506.0 L601.7 502.8 L593.9 499.5 L586.3 496.3 L578.8 493.0 L571.3 489.8 L564.0 486.5 L556.8 483.2 L549.6 480.0 L542.6 476.7 L535.7 473.5 L528.9 470.2 L522.2 467.0 L515.7 463.7 L509.2 460.5 L502.9 457.2 L496.7 454.0 L490.6 450.7 L484.6 447.4 L478.8 444.2 L473.1 440.9 L467.5 437.7 L462.1 434.4 L456.7 431.2 L451.6 427.9 L446.5 424.7 L441.6 421.4 L436.9 418.1 L432.3 414.9 L427.8 411.6 L423.5 408.4 L419.3 405.1 L415.2 401.9 L411.4 398.6 L407.6 395.4 L404.0 392.1 L400.6 388.9 L397.3 385.6 L394.2 382.3 L391.2 379.1 L388.4 375.8 L385.7 372.6 L383.2 369.3 L380.9 366.1 L378.7 362.8 L376.7 359.6 L374.8 356.3 L373.1 353.1 L371.5 349.8 L370.2 346.5 L368.9 343.3 L367.9 340.0 L367.0 336.8 L366.2 333.5 L365.7 330.3 L365.3 327.0 L365.0 323.8 L364.9 320.5 L365.0 317.2 L365.3 314.0 L365.7 310.7 L366.2 307.5 L367.0 304.2 L367.9 301.0 L368.9 297.7 L370.2 294.5 L371.5 291.2 L373.1 287.9 L374.8 284.7 L376.7 281.4 L378.7 278.2 L380.9 274.9 L383.2 271.7 L385.7 268.4 L388.4 265.2 L391.2 261.9 L394.2 258.7 L397.3 255.4 L400.6 252.1 L404.0 248.9 L407.6 245.6 L411.4 242.4 L415.2 239.1 L419.3 235.9 L423.5 232.6 L427.8 229.4 L432.3 226.1 L436.9 222.9 L441.6 219.6 L446.5 216.3 L451.6 213.1 L456.7 209.8 L462.1 206.6 L467.5 203.3 L473.1 200.1 L478.8 196.8 L484.6 193.6 L490.6 190.3 L496.7 187.0 L502.9 183.8 L509.2 180.5 L515.7 177.3 L522.2 174.0 L528.9 170.8 L535.7 167.5 L542.6 164.3 L549.6 161.0 L556.8 157.8 L564.0 154.5 L571.3 151.2 L578.8 148.0 L586.3 144.7 L593.9 141.5 L601.7 138.2 L609.5 135.0 L617.4 131.7 L625.4 128.5 L633.5 125.2 L641.6 121.9 L649.9 118.7 L658.2 115.4 L666.6 112.2 L675.0 108.9 L683.6 105.7 L692.1 102.4 L700.8 99.2 L709.5 95.9 L718.3 92.7 L727.1 89.4 L736.0 86.1 L745.0 82.9 L754.0 79.6 L763.0 76.4 L772.1 73.1 L781.2 69.9 L790.3 66.6 L799.5 63.4 L808.7 60.1 L818.0 56.8 L827.3 53.6 L836.5 50.3 L845.9 47.1 L855.2 43.8 L864.5 40.6 L873.9 37.3 L883.3 34.1 L892.6 30.8 L902.0 27.6 M902.0 613.5 L891.8 610.2 L881.6 606.9 L871.3 603.7 L861.1 600.4 L850.9 597.2 L840.8 593.9 L830.6 590.7 L820.5 587.4 L810.3 584.2 L800.3 580.9 L790.2 577.6 L780.2 574.4 L770.2 571.1 L760.3 567.9 L750.4 564.6 L740.5 561.4 L730.7 558.1 L720.9 554.9 L711.2 551.6 L701.6 548.4 L692.0 545.1 L682.5 541.8 L673.1 538.6 L663.7 535.3 L654.4 532.1 L645.2 528.8 L636.0 525.6 L626.9 522.3 L618.0 519.1 L609.0 515.8 L600.2 512.5 L591.5 509.3 L582.9 506.0 L574.4 502.8 L565.9 499.5 L557.6 496.3 L549.4 493.0 L541.3 489.8 L533.3 486.5 L525.4 483.2 L517.6 480.0 L510.0 476.7 L502.4 473.5 L495.0 470.2 L487.7 467.0 L480.5 463.7 L473.5 460.5 L466.6 457.2 L459.8 454.0 L453.2 450.7 L446.7 447.4 L440.3 444.2 L434.1 440.9 L428.0 437.7 L422.1 434.4 L416.3 431.2 L410.6 427.9 L405.1 424.7 L399.8 421.4 L394.6 418.1 L389.6 414.9 L384.7 411.6 L380.0 408.4 L375.4 405.1 L371.0 401.9 L366.8 398.6 L362.7 395.4 L358.8 392.1 L355.0 388.9 L351.4 385.6 L348.0 382.3 L344.8 379.1 L341.7 375.8 L338.8 372.6 L336.1 369.3 L333.5 366.1 L331.1 362.8 L328.9 359.6 L326.9 356.3 L325.0 353.1 L323.3 349.8 L321.8 346.5 L320.5 343.3 L319.3 340.0 L318.3 336.8 L317.5 333.5 L316.9 330.3 L316.5 327.0 L316.2 323.8 L316.1 320.5 L316.2 317.2 L316.5 314.0 L316.9 310.7 L317.5 307.5 L318.3 304.2 L319.3 301.0 L320.5 297.7 L321.8 294.5 L323.3 291.2 L325.0 287.9 L326.9 284.7 L328.9 281.4 L331.1 278.2 L333.5 274.9 L336.1 271.7 L338.8 268.4 L341.7 265.2 L344.8 261.9 L348.0 258.7 L351.4 255.4 L355.0 252.1 L358.8 248.9 L362.7 245.6 L366.8 242.4 L371.0 239.1 L375.4 235.9 L380.0 232.6 L384.7 229.4 L389.6 226.1 L394.6 222.9 L399.8 219.6 L405.1 216.3 L410.6 213.1 L416.3 209.8 L422.1 206.6 L428.0 203.3 L434.1 200.1 L440.3 196.8 L446.7 193.6 L453.2 190.3 L459.8 187.0 L466.6 183.8 L473.5 180.5 L480.5 177.3 L487.7 174.0 L495.0 170.8 L502.4 167.5 L510.0 164.3 L517.6 161.0 L525.4 157.8 L533.3 154.5 L541.3 151.2 L549.4 148.0 L557.6 144.7 L565.9 141.5 L574.4 138.2 L582.9 135.0 L591.5 131.7 L600.2 128.5 L609.0 125.2 L618.0 121.9 L626.9 118.7 L636.0 115.4 L645.2 112.2 L654.4 108.9 L663.7 105.7 L673.1 102.4 L682.5 99.2 L692.0 95.9 L701.6 92.7 L711.2 89.4 L720.9 86.1 L730.7 82.9 L740.5 79.6 L750.4 76.4 L760.3 73.1 L770.2 69.9 L780.2 66.6 L790.2 63.4 L800.3 60.1 L810.3 56.8 L820.5 53.6 L830.6 50.3 L840.8 47.1 L850.9 43.8 L861.1 40.6 L871.3 37.3 L881.6 34.1 L891.8 30.8 L902.0 27.6 M1053.6 565.0 L1052.0 565.0 L1050.3 565.0 L1048.6 565.0 L1046.9 565.0 L1045.2 565.0 L1043.5 565.0 L1041.8 565.0 L1040.2 565.0 L1038.5 565.0 L1036.8 565.0 L1035.1 565.0 L1033.4 565.0 L1031.7 565.0 L1030.1 565.0 L1028.4 565.0 L1026.7 565.0 L1025.0 565.0 L1023.3 565.0 L1021.6 565.0 L1019.9 565.0 L1018.3 565.0 L1016.6 565.0 L1014.9 565.0 L1013.2 565.0 L1011.5 565.0 L1009.8 565.0 L1008.1 565.0 L1006.5 565.0 L1004.8 565.0 L1003.1 565.0 L1001.4 565.0 L999.7 565.0 L998.0 565.0 L996.4 565.0 L994.7 565.0 L993.0 565.0 L991.3 565.0 L989.6 565.0 L987.9 565.0 L986.2 565.0 L984.6 565.0 L982.9 565.0 L981.2 565.0 L979.5 565.0 L977.8 565.0 L976.1 565.0 L974.5 565.0 L972.8 565.0 L971.1 565.0 L969.4 565.0 L967.7 565.0 L966.0 565.0 L964.3 565.0 L962.7 565.0 L961.0 565.0 L959.3 565.0 L957.6 565.0 L955.9 565.0 L954.2 565.0 L952.5 565.0 L950.9 565.0 L949.2 565.0 L947.5 565.0 L945.8 565.0 L944.1 565.0 L942.4 565.0 L940.8 565.0 L939.1 565.0 L937.4 565.0 L935.7 565.0 L934.0 565.0 L932.3 565.0 L930.6 565.0 L929.0 565.0 L927.3 565.0 L925.6 565.0 L923.9 565.0 L922.2 565.0 L920.5 565.0 L918.8 565.0 L917.2 565.0 L915.5 565.0 L913.8 565.0 L912.1 565.0 L910.4 565.0 L908.7 565.0 L907.1 565.0 L905.4 565.0 L903.7 565.0 L902.0 565.0 L900.3 565.0 L898.6 565.0 L896.9 565.0 L895.3 565.0 L893.6 565.0 L891.9 565.0 L890.2 565.0 L888.5 565.0 L886.8 565.0 L885.2 565.0 L883.5 565.0 L881.8 565.0 L880.1 565.0 L878.4 565.0 L876.7 565.0 L875.0 565.0 L873.4 565.0 L871.7 565.0 L870.0 565.0 L868.3 565.0 L866.6 565.0 L864.9 565.0 L863.2 565.0 L861.6 565.0 L859.9 565.0 L858.2 565.0 L856.5 565.0 L854.8 565.0 L853.1 565.0 L851.5 565.0 L849.8 565.0 L848.1 565.0 L846.4 565.0 L844.7 565.0 L843.0 565.0 L841.3 565.0 L839.7 565.0 L838.0 565.0 L836.3 565.0 L834.6 565.0 L832.9 565.0 L831.2 565.0 L829.5 565.0 L827.9 565.0 L826.2 565.0 L824.5 565.0 L822.8 565.0 L821.1 565.0 L819.4 565.0 L817.8 565.0 L816.1 565.0 L814.4 565.0 L812.7 565.0 L811.0 565.0 L809.3 565.0 L807.6 565.0 L806.0 565.0 L804.3 565.0 L802.6 565.0 L800.9 565.0 L799.2 565.0 L797.5 565.0 L795.9 565.0 L794.2 565.0 L792.5 565.0 L790.8 565.0 L789.1 565.0 L787.4 565.0 L785.7 565.0 L784.1 565.0 L782.4 565.0 L780.7 565.0 L779.0 565.0 L777.3 565.0 L775.6 565.0 L773.9 565.0 L772.3 565.0 L770.6 565.0 L768.9 565.0 L767.2 565.0 L765.5 565.0 L763.8 565.0 L762.2 565.0 L760.5 565.0 L758.8 565.0 L757.1 565.0 L755.4 565.0 L753.7 565.0 L752.0 565.0 L750.4 565.0 M1195.0 516.0 L1191.7 516.0 L1188.4 516.0 L1185.2 516.0 L1181.9 516.0 L1178.7 516.0 L1175.4 516.0 L1172.2 516.0 L1168.9 516.0 L1165.7 516.0 L1162.4 516.0 L1159.1 516.0 L1155.9 516.0 L1152.6 516.0 L1149.4 516.0 L1146.1 516.0 L1142.9 516.0 L1139.6 516.0 L1136.4 516.0 L1133.1 516.0 L1129.9 516.0 L1126.6 516.0 L1123.3 516.0 L1120.1 516.0 L1116.8 516.0 L1113.6 516.0 L1110.3 516.0 L1107.1 516.0 L1103.8 516.0 L1100.6 516.0 L1097.3 516.0 L1094.0 516.0 L1090.8 516.0 L1087.5 516.0 L1084.3 516.0 L1081.0 516.0 L1077.8 516.0 L1074.5 516.0 L1071.3 516.0 L1068.0 516.0 L1064.8 516.0 L1061.5 516.0 L1058.2 516.0 L1055.0 516.0 L1051.7 516.0 L1048.5 516.0 L1045.2 516.0 L1042.0 516.0 L1038.7 516.0 L1035.5 516.0 L1032.2 516.0 L1028.9 516.0 L1025.7 516.0 L1022.4 516.0 L1019.2 516.0 L1015.9 516.0 L1012.7 516.0 L1009.4 516.0 L1006.2 516.0 L1002.9 516.0 L999.6 516.0 L996.4 516.0 L993.1 516.0 L989.9 516.0 L986.6 516.0 L983.4 516.0 L980.1 516.0 L976.9 516.0 L973.6 516.0 L970.4 516.0 L967.1 516.0 L963.8 516.0 L960.6 516.0 L957.3 516.0 L954.1 516.0 L950.8 516.0 L947.6 516.0 L944.3 516.0 L941.1 516.0 L937.8 516.0 L934.5 516.0 L931.3 516.0 L928.0 516.0 L924.8 516.0 L921.5 516.0 L918.3 516.0 L915.0 516.0 L911.8 516.0 L908.5 516.0 L905.3 516.0 L902.0 516.0 L898.7 516.0 L895.5 516.0 L892.2 516.0 L889.0 516.0 L885.7 516.0 L882.5 516.0 L879.2 516.0 L876.0 516.0 L872.7 516.0 L869.5 516.0 L866.2 516.0 L862.9 516.0 L859.7 516.0 L856.4 516.0 L853.2 516.0 L849.9 516.0 L846.7 516.0 L843.4 516.0 L840.2 516.0 L836.9 516.0 L833.6 516.0 L830.4 516.0 L827.1 516.0 L823.9 516.0 L820.6 516.0 L817.4 516.0 L814.1 516.0 L810.9 516.0 L807.6 516.0 L804.4 516.0 L801.1 516.0 L797.8 516.0 L794.6 516.0 L791.3 516.0 L788.1 516.0 L784.8 516.0 L781.6 516.0 L778.3 516.0 L775.1 516.0 L771.8 516.0 L768.5 516.0 L765.3 516.0 L762.0 516.0 L758.8 516.0 L755.5 516.0 L752.3 516.0 L749.0 516.0 L745.8 516.0 L742.5 516.0 L739.2 516.0 L736.0 516.0 L732.7 516.0 L729.5 516.0 L726.2 516.0 L723.0 516.0 L719.7 516.0 L716.5 516.0 L713.2 516.0 L710.0 516.0 L706.7 516.0 L703.4 516.0 L700.2 516.0 L696.9 516.0 L693.7 516.0 L690.4 516.0 L687.2 516.0 L683.9 516.0 L680.7 516.0 L677.4 516.0 L674.1 516.0 L670.9 516.0 L667.6 516.0 L664.4 516.0 L661.1 516.0 L657.9 516.0 L654.6 516.0 L651.4 516.0 L648.1 516.0 L644.9 516.0 L641.6 516.0 L638.3 516.0 L635.1 516.0 L631.8 516.0 L628.6 516.0 L625.3 516.0 L622.1 516.0 L618.8 516.0 L615.6 516.0 L612.3 516.0 L609.0 516.0 M1316.3 467.0 L1311.7 467.0 L1307.1 467.0 L1302.5 467.0 L1297.9 467.0 L1293.3 467.0 L1288.7 467.0 L1284.1 467.0 L1279.5 467.0 L1274.9 467.0 L1270.3 467.0 L1265.7 467.0 L1261.1 467.0 L1256.5 467.0 L1251.8 467.0 L1247.2 467.0 L1242.6 467.0 L1238.0 467.0 L1233.4 467.0 L1228.8 467.0 L1224.2 467.0 L1219.6 467.0 L1215.0 467.0 L1210.4 467.0 L1205.8 467.0 L1201.2 467.0 L1196.6 467.0 L1192.0 467.0 L1187.4 467.0 L1182.8 467.0 L1178.2 467.0 L1173.6 467.0 L1169.0 467.0 L1164.4 467.0 L1159.8 467.0 L1155.2 467.0 L1150.6 467.0 L1146.0 467.0 L1141.4 467.0 L1136.8 467.0 L1132.2 467.0 L1127.6 467.0 L1123.0 467.0 L1118.4 467.0 L1113.8 467.0 L1109.1 467.0 L1104.5 467.0 L1099.9 467.0 L1095.3 467.0 L1090.7 467.0 L1086.1 467.0 L1081.5 467.0 L1076.9 467.0 L1072.3 467.0 L1067.7 467.0 L1063.1 467.0 L1058.5 467.0 L1053.9 467.0 L1049.3 467.0 L1044.7 467.0 L1040.1 467.0 L1035.5 467.0 L1030.9 467.0 L1026.3 467.0 L1021.7 467.0 L1017.1 467.0 L1012.5 467.0 L1007.9 467.0 L1003.3 467.0 L998.7 467.0 L994.1 467.0 L989.5 467.0 L984.9 467.0 L980.3 467.0 L975.7 467.0 L971.0 467.0 L966.4 467.0 L961.8 467.0 L957.2 467.0 L952.6 467.0 L948.0 467.0 L943.4 467.0 L938.8 467.0 L934.2 467.0 L929.6 467.0 L925.0 467.0 L920.4 467.0 L915.8 467.0 L911.2 467.0 L906.6 467.0 L902.0 467.0 L897.4 467.0 L892.8 467.0 L888.2 467.0 L883.6 467.0 L879.0 467.0 L874.4 467.0 L869.8 467.0 L865.2 467.0 L860.6 467.0 L856.0 467.0 L851.4 467.0 L846.8 467.0 L842.2 467.0 L837.6 467.0 L833.0 467.0 L828.3 467.0 L823.7 467.0 L819.1 467.0 L814.5 467.0 L809.9 467.0 L805.3 467.0 L800.7 467.0 L796.1 467.0 L791.5 467.0 L786.9 467.0 L782.3 467.0 L777.7 467.0 L773.1 467.0 L768.5 467.0 L763.9 467.0 L759.3 467.0 L754.7 467.0 L750.1 467.0 L745.5 467.0 L740.9 467.0 L736.3 467.0 L731.7 467.0 L727.1 467.0 L722.5 467.0 L717.9 467.0 L713.3 467.0 L708.7 467.0 L704.1 467.0 L699.5 467.0 L694.9 467.0 L690.2 467.0 L685.6 467.0 L681.0 467.0 L676.4 467.0 L671.8 467.0 L667.2 467.0 L662.6 467.0 L658.0 467.0 L653.4 467.0 L648.8 467.0 L644.2 467.0 L639.6 467.0 L635.0 467.0 L630.4 467.0 L625.8 467.0 L621.2 467.0 L616.6 467.0 L612.0 467.0 L607.4 467.0 L602.8 467.0 L598.2 467.0 L593.6 467.0 L589.0 467.0 L584.4 467.0 L579.8 467.0 L575.2 467.0 L570.6 467.0 L566.0 467.0 L561.4 467.0 L556.8 467.0 L552.2 467.0 L547.5 467.0 L542.9 467.0 L538.3 467.0 L533.7 467.0 L529.1 467.0 L524.5 467.0 L519.9 467.0 L515.3 467.0 L510.7 467.0 L506.1 467.0 L501.5 467.0 L496.9 467.0 L492.3 467.0 L487.7 467.0 M1409.4 418.0 L1403.8 418.0 L1398.1 418.0 L1392.5 418.0 L1386.9 418.0 L1381.2 418.0 L1375.6 418.0 L1369.9 418.0 L1364.3 418.0 L1358.7 418.0 L1353.0 418.0 L1347.4 418.0 L1341.8 418.0 L1336.1 418.0 L1330.5 418.0 L1324.8 418.0 L1319.2 418.0 L1313.6 418.0 L1307.9 418.0 L1302.3 418.0 L1296.6 418.0 L1291.0 418.0 L1285.4 418.0 L1279.7 418.0 L1274.1 418.0 L1268.5 418.0 L1262.8 418.0 L1257.2 418.0 L1251.5 418.0 L1245.9 418.0 L1240.3 418.0 L1234.6 418.0 L1229.0 418.0 L1223.4 418.0 L1217.7 418.0 L1212.1 418.0 L1206.4 418.0 L1200.8 418.0 L1195.2 418.0 L1189.5 418.0 L1183.9 418.0 L1178.3 418.0 L1172.6 418.0 L1167.0 418.0 L1161.3 418.0 L1155.7 418.0 L1150.1 418.0 L1144.4 418.0 L1138.8 418.0 L1133.2 418.0 L1127.5 418.0 L1121.9 418.0 L1116.2 418.0 L1110.6 418.0 L1105.0 418.0 L1099.3 418.0 L1093.7 418.0 L1088.0 418.0 L1082.4 418.0 L1076.8 418.0 L1071.1 418.0 L1065.5 418.0 L1059.9 418.0 L1054.2 418.0 L1048.6 418.0 L1042.9 418.0 L1037.3 418.0 L1031.7 418.0 L1026.0 418.0 L1020.4 418.0 L1014.8 418.0 L1009.1 418.0 L1003.5 418.0 L997.8 418.0 L992.2 418.0 L986.6 418.0 L980.9 418.0 L975.3 418.0 L969.7 418.0 L964.0 418.0 L958.4 418.0 L952.7 418.0 L947.1 418.0 L941.5 418.0 L935.8 418.0 L930.2 418.0 L924.6 418.0 L918.9 418.0 L913.3 418.0 L907.6 418.0 L902.0 418.0 L896.4 418.0 L890.7 418.0 L885.1 418.0 L879.4 418.0 L873.8 418.0 L868.2 418.0 L862.5 418.0 L856.9 418.0 L851.3 418.0 L845.6 418.0 L840.0 418.0 L834.3 418.0 L828.7 418.0 L823.1 418.0 L817.4 418.0 L811.8 418.0 L806.2 418.0 L800.5 418.0 L794.9 418.0 L789.2 418.0 L783.6 418.0 L778.0 418.0 L772.3 418.0 L766.7 418.0 L761.1 418.0 L755.4 418.0 L749.8 418.0 L744.1 418.0 L738.5 418.0 L732.9 418.0 L727.2 418.0 L721.6 418.0 L716.0 418.0 L710.3 418.0 L704.7 418.0 L699.0 418.0 L693.4 418.0 L687.8 418.0 L682.1 418.0 L676.5 418.0 L670.8 418.0 L665.2 418.0 L659.6 418.0 L653.9 418.0 L648.3 418.0 L642.7 418.0 L637.0 418.0 L631.4 418.0 L625.7 418.0 L620.1 418.0 L614.5 418.0 L608.8 418.0 L603.2 418.0 L597.6 418.0 L591.9 418.0 L586.3 418.0 L580.6 418.0 L575.0 418.0 L569.4 418.0 L563.7 418.0 L558.1 418.0 L552.5 418.0 L546.8 418.0 L541.2 418.0 L535.5 418.0 L529.9 418.0 L524.3 418.0 L518.6 418.0 L513.0 418.0 L507.4 418.0 L501.7 418.0 L496.1 418.0 L490.4 418.0 L484.8 418.0 L479.2 418.0 L473.5 418.0 L467.9 418.0 L462.2 418.0 L456.6 418.0 L451.0 418.0 L445.3 418.0 L439.7 418.0 L434.1 418.0 L428.4 418.0 L422.8 418.0 L417.1 418.0 L411.5 418.0 L405.9 418.0 L400.2 418.0 L394.6 418.0 M1467.9 369.0 L1461.6 369.0 L1455.4 369.0 L1449.1 369.0 L1442.8 369.0 L1436.5 369.0 L1430.2 369.0 L1423.9 369.0 L1417.6 369.0 L1411.3 369.0 L1405.1 369.0 L1398.8 369.0 L1392.5 369.0 L1386.2 369.0 L1379.9 369.0 L1373.6 369.0 L1367.3 369.0 L1361.0 369.0 L1354.7 369.0 L1348.5 369.0 L1342.2 369.0 L1335.9 369.0 L1329.6 369.0 L1323.3 369.0 L1317.0 369.0 L1310.7 369.0 L1304.4 369.0 L1298.2 369.0 L1291.9 369.0 L1285.6 369.0 L1279.3 369.0 L1273.0 369.0 L1266.7 369.0 L1260.4 369.0 L1254.1 369.0 L1247.8 369.0 L1241.6 369.0 L1235.3 369.0 L1229.0 369.0 L1222.7 369.0 L1216.4 369.0 L1210.1 369.0 L1203.8 369.0 L1197.5 369.0 L1191.3 369.0 L1185.0 369.0 L1178.7 369.0 L1172.4 369.0 L1166.1 369.0 L1159.8 369.0 L1153.5 369.0 L1147.2 369.0 L1141.0 369.0 L1134.7 369.0 L1128.4 369.0 L1122.1 369.0 L1115.8 369.0 L1109.5 369.0 L1103.2 369.0 L1096.9 369.0 L1090.6 369.0 L1084.4 369.0 L1078.1 369.0 L1071.8 369.0 L1065.5 369.0 L1059.2 369.0 L1052.9 369.0 L1046.6 369.0 L1040.3 369.0 L1034.1 369.0 L1027.8 369.0 L1021.5 369.0 L1015.2 369.0 L1008.9 369.0 L1002.6 369.0 L996.3 369.0 L990.0 369.0 L983.7 369.0 L977.5 369.0 L971.2 369.0 L964.9 369.0 L958.6 369.0 L952.3 369.0 L946.0 369.0 L939.7 369.0 L933.4 369.0 L927.2 369.0 L920.9 369.0 L914.6 369.0 L908.3 369.0 L902.0 369.0 L895.7 369.0 L889.4 369.0 L883.1 369.0 L876.8 369.0 L870.6 369.0 L864.3 369.0 L858.0 369.0 L851.7 369.0 L845.4 369.0 L839.1 369.0 L832.8 369.0 L826.5 369.0 L820.3 369.0 L814.0 369.0 L807.7 369.0 L801.4 369.0 L795.1 369.0 L788.8 369.0 L782.5 369.0 L776.2 369.0 L769.9 369.0 L763.7 369.0 L757.4 369.0 L751.1 369.0 L744.8 369.0 L738.5 369.0 L732.2 369.0 L725.9 369.0 L719.6 369.0 L713.4 369.0 L707.1 369.0 L700.8 369.0 L694.5 369.0 L688.2 369.0 L681.9 369.0 L675.6 369.0 L669.3 369.0 L663.0 369.0 L656.8 369.0 L650.5 369.0 L644.2 369.0 L637.9 369.0 L631.6 369.0 L625.3 369.0 L619.0 369.0 L612.7 369.0 L606.5 369.0 L600.2 369.0 L593.9 369.0 L587.6 369.0 L581.3 369.0 L575.0 369.0 L568.7 369.0 L562.4 369.0 L556.2 369.0 L549.9 369.0 L543.6 369.0 L537.3 369.0 L531.0 369.0 L524.7 369.0 L518.4 369.0 L512.1 369.0 L505.8 369.0 L499.6 369.0 L493.3 369.0 L487.0 369.0 L480.7 369.0 L474.4 369.0 L468.1 369.0 L461.8 369.0 L455.5 369.0 L449.3 369.0 L443.0 369.0 L436.7 369.0 L430.4 369.0 L424.1 369.0 L417.8 369.0 L411.5 369.0 L405.2 369.0 L398.9 369.0 L392.7 369.0 L386.4 369.0 L380.1 369.0 L373.8 369.0 L367.5 369.0 L361.2 369.0 L354.9 369.0 L348.6 369.0 L342.4 369.0 L336.1 369.0 M1487.9 320.0 L1481.4 320.0 L1474.9 320.0 L1468.4 320.0 L1461.9 320.0 L1455.3 320.0 L1448.8 320.0 L1442.3 320.0 L1435.8 320.0 L1429.3 320.0 L1422.8 320.0 L1416.3 320.0 L1409.8 320.0 L1403.3 320.0 L1396.8 320.0 L1390.2 320.0 L1383.7 320.0 L1377.2 320.0 L1370.7 320.0 L1364.2 320.0 L1357.7 320.0 L1351.2 320.0 L1344.7 320.0 L1338.2 320.0 L1331.7 320.0 L1325.2 320.0 L1318.6 320.0 L1312.1 320.0 L1305.6 320.0 L1299.1 320.0 L1292.6 320.0 L1286.1 320.0 L1279.6 320.0 L1273.1 320.0 L1266.6 320.0 L1260.0 320.0 L1253.5 320.0 L1247.0 320.0 L1240.5 320.0 L1234.0 320.0 L1227.5 320.0 L1221.0 320.0 L1214.5 320.0 L1208.0 320.0 L1201.5 320.0 L1195.0 320.0 L1188.4 320.0 L1181.9 320.0 L1175.4 320.0 L1168.9 320.0 L1162.4 320.0 L1155.9 320.0 L1149.4 320.0 L1142.9 320.0 L1136.4 320.0 L1129.8 320.0 L1123.3 320.0 L1116.8 320.0 L1110.3 320.0 L1103.8 320.0 L1097.3 320.0 L1090.8 320.0 L1084.3 320.0 L1077.8 320.0 L1071.3 320.0 L1064.8 320.0 L1058.2 320.0 L1051.7 320.0 L1045.2 320.0 L1038.7 320.0 L1032.2 320.0 L1025.7 320.0 L1019.2 320.0 L1012.7 320.0 L1006.2 320.0 L999.6 320.0 L993.1 320.0 L986.6 320.0 L980.1 320.0 L973.6 320.0 L967.1 320.0 L960.6 320.0 L954.1 320.0 L947.6 320.0 L941.1 320.0 L934.5 320.0 L928.0 320.0 L921.5 320.0 L915.0 320.0 L908.5 320.0 L902.0 320.0 L895.5 320.0 L889.0 320.0 L882.5 320.0 L876.0 320.0 L869.5 320.0 L862.9 320.0 L856.4 320.0 L849.9 320.0 L843.4 320.0 L836.9 320.0 L830.4 320.0 L823.9 320.0 L817.4 320.0 L810.9 320.0 L804.4 320.0 L797.8 320.0 L791.3 320.0 L784.8 320.0 L778.3 320.0 L771.8 320.0 L765.3 320.0 L758.8 320.0 L752.3 320.0 L745.8 320.0 L739.2 320.0 L732.7 320.0 L726.2 320.0 L719.7 320.0 L713.2 320.0 L706.7 320.0 L700.2 320.0 L693.7 320.0 L687.2 320.0 L680.7 320.0 L674.1 320.0 L667.6 320.0 L661.1 320.0 L654.6 320.0 L648.1 320.0 L641.6 320.0 L635.1 320.0 L628.6 320.0 L622.1 320.0 L615.6 320.0 L609.0 320.0 L602.5 320.0 L596.0 320.0 L589.5 320.0 L583.0 320.0 L576.5 320.0 L570.0 320.0 L563.5 320.0 L557.0 320.0 L550.5 320.0 L544.0 320.0 L537.4 320.0 L530.9 320.0 L524.4 320.0 L517.9 320.0 L511.4 320.0 L504.9 320.0 L498.4 320.0 L491.9 320.0 L485.4 320.0 L478.9 320.0 L472.3 320.0 L465.8 320.0 L459.3 320.0 L452.8 320.0 L446.3 320.0 L439.8 320.0 L433.3 320.0 L426.8 320.0 L420.3 320.0 L413.8 320.0 L407.2 320.0 L400.7 320.0 L394.2 320.0 L387.7 320.0 L381.2 320.0 L374.7 320.0 L368.2 320.0 L361.7 320.0 L355.2 320.0 L348.6 320.0 L342.1 320.0 L335.6 320.0 L329.1 320.0 L322.6 320.0 L316.1 320.0 M1467.9 272.0 L1461.6 272.0 L1455.4 272.0 L1449.1 272.0 L1442.8 272.0 L1436.5 272.0 L1430.2 272.0 L1423.9 272.0 L1417.6 272.0 L1411.3 272.0 L1405.1 272.0 L1398.8 272.0 L1392.5 272.0 L1386.2 272.0 L1379.9 272.0 L1373.6 272.0 L1367.3 272.0 L1361.0 272.0 L1354.7 272.0 L1348.5 272.0 L1342.2 272.0 L1335.9 272.0 L1329.6 272.0 L1323.3 272.0 L1317.0 272.0 L1310.7 272.0 L1304.4 272.0 L1298.2 272.0 L1291.9 272.0 L1285.6 272.0 L1279.3 272.0 L1273.0 272.0 L1266.7 272.0 L1260.4 272.0 L1254.1 272.0 L1247.8 272.0 L1241.6 272.0 L1235.3 272.0 L1229.0 272.0 L1222.7 272.0 L1216.4 272.0 L1210.1 272.0 L1203.8 272.0 L1197.5 272.0 L1191.3 272.0 L1185.0 272.0 L1178.7 272.0 L1172.4 272.0 L1166.1 272.0 L1159.8 272.0 L1153.5 272.0 L1147.2 272.0 L1141.0 272.0 L1134.7 272.0 L1128.4 272.0 L1122.1 272.0 L1115.8 272.0 L1109.5 272.0 L1103.2 272.0 L1096.9 272.0 L1090.6 272.0 L1084.4 272.0 L1078.1 272.0 L1071.8 272.0 L1065.5 272.0 L1059.2 272.0 L1052.9 272.0 L1046.6 272.0 L1040.3 272.0 L1034.1 272.0 L1027.8 272.0 L1021.5 272.0 L1015.2 272.0 L1008.9 272.0 L1002.6 272.0 L996.3 272.0 L990.0 272.0 L983.7 272.0 L977.5 272.0 L971.2 272.0 L964.9 272.0 L958.6 272.0 L952.3 272.0 L946.0 272.0 L939.7 272.0 L933.4 272.0 L927.2 272.0 L920.9 272.0 L914.6 272.0 L908.3 272.0 L902.0 272.0 L895.7 272.0 L889.4 272.0 L883.1 272.0 L876.8 272.0 L870.6 272.0 L864.3 272.0 L858.0 272.0 L851.7 272.0 L845.4 272.0 L839.1 272.0 L832.8 272.0 L826.5 272.0 L820.3 272.0 L814.0 272.0 L807.7 272.0 L801.4 272.0 L795.1 272.0 L788.8 272.0 L782.5 272.0 L776.2 272.0 L769.9 272.0 L763.7 272.0 L757.4 272.0 L751.1 272.0 L744.8 272.0 L738.5 272.0 L732.2 272.0 L725.9 272.0 L719.6 272.0 L713.4 272.0 L707.1 272.0 L700.8 272.0 L694.5 272.0 L688.2 272.0 L681.9 272.0 L675.6 272.0 L669.3 272.0 L663.0 272.0 L656.8 272.0 L650.5 272.0 L644.2 272.0 L637.9 272.0 L631.6 272.0 L625.3 272.0 L619.0 272.0 L612.7 272.0 L606.5 272.0 L600.2 272.0 L593.9 272.0 L587.6 272.0 L581.3 272.0 L575.0 272.0 L568.7 272.0 L562.4 272.0 L556.2 272.0 L549.9 272.0 L543.6 272.0 L537.3 272.0 L531.0 272.0 L524.7 272.0 L518.4 272.0 L512.1 272.0 L505.8 272.0 L499.6 272.0 L493.3 272.0 L487.0 272.0 L480.7 272.0 L474.4 272.0 L468.1 272.0 L461.8 272.0 L455.5 272.0 L449.3 272.0 L443.0 272.0 L436.7 272.0 L430.4 272.0 L424.1 272.0 L417.8 272.0 L411.5 272.0 L405.2 272.0 L398.9 272.0 L392.7 272.0 L386.4 272.0 L380.1 272.0 L373.8 272.0 L367.5 272.0 L361.2 272.0 L354.9 272.0 L348.6 272.0 L342.4 272.0 L336.1 272.0 M1409.4 223.0 L1403.8 223.0 L1398.1 223.0 L1392.5 223.0 L1386.9 223.0 L1381.2 223.0 L1375.6 223.0 L1369.9 223.0 L1364.3 223.0 L1358.7 223.0 L1353.0 223.0 L1347.4 223.0 L1341.8 223.0 L1336.1 223.0 L1330.5 223.0 L1324.8 223.0 L1319.2 223.0 L1313.6 223.0 L1307.9 223.0 L1302.3 223.0 L1296.6 223.0 L1291.0 223.0 L1285.4 223.0 L1279.7 223.0 L1274.1 223.0 L1268.5 223.0 L1262.8 223.0 L1257.2 223.0 L1251.5 223.0 L1245.9 223.0 L1240.3 223.0 L1234.6 223.0 L1229.0 223.0 L1223.4 223.0 L1217.7 223.0 L1212.1 223.0 L1206.4 223.0 L1200.8 223.0 L1195.2 223.0 L1189.5 223.0 L1183.9 223.0 L1178.3 223.0 L1172.6 223.0 L1167.0 223.0 L1161.3 223.0 L1155.7 223.0 L1150.1 223.0 L1144.4 223.0 L1138.8 223.0 L1133.2 223.0 L1127.5 223.0 L1121.9 223.0 L1116.2 223.0 L1110.6 223.0 L1105.0 223.0 L1099.3 223.0 L1093.7 223.0 L1088.0 223.0 L1082.4 223.0 L1076.8 223.0 L1071.1 223.0 L1065.5 223.0 L1059.9 223.0 L1054.2 223.0 L1048.6 223.0 L1042.9 223.0 L1037.3 223.0 L1031.7 223.0 L1026.0 223.0 L1020.4 223.0 L1014.8 223.0 L1009.1 223.0 L1003.5 223.0 L997.8 223.0 L992.2 223.0 L986.6 223.0 L980.9 223.0 L975.3 223.0 L969.7 223.0 L964.0 223.0 L958.4 223.0 L952.7 223.0 L947.1 223.0 L941.5 223.0 L935.8 223.0 L930.2 223.0 L924.6 223.0 L918.9 223.0 L913.3 223.0 L907.6 223.0 L902.0 223.0 L896.4 223.0 L890.7 223.0 L885.1 223.0 L879.4 223.0 L873.8 223.0 L868.2 223.0 L862.5 223.0 L856.9 223.0 L851.3 223.0 L845.6 223.0 L840.0 223.0 L834.3 223.0 L828.7 223.0 L823.1 223.0 L817.4 223.0 L811.8 223.0 L806.2 223.0 L800.5 223.0 L794.9 223.0 L789.2 223.0 L783.6 223.0 L778.0 223.0 L772.3 223.0 L766.7 223.0 L761.1 223.0 L755.4 223.0 L749.8 223.0 L744.1 223.0 L738.5 223.0 L732.9 223.0 L727.2 223.0 L721.6 223.0 L716.0 223.0 L710.3 223.0 L704.7 223.0 L699.0 223.0 L693.4 223.0 L687.8 223.0 L682.1 223.0 L676.5 223.0 L670.8 223.0 L665.2 223.0 L659.6 223.0 L653.9 223.0 L648.3 223.0 L642.7 223.0 L637.0 223.0 L631.4 223.0 L625.7 223.0 L620.1 223.0 L614.5 223.0 L608.8 223.0 L603.2 223.0 L597.6 223.0 L591.9 223.0 L586.3 223.0 L580.6 223.0 L575.0 223.0 L569.4 223.0 L563.7 223.0 L558.1 223.0 L552.5 223.0 L546.8 223.0 L541.2 223.0 L535.5 223.0 L529.9 223.0 L524.3 223.0 L518.6 223.0 L513.0 223.0 L507.4 223.0 L501.7 223.0 L496.1 223.0 L490.4 223.0 L484.8 223.0 L479.2 223.0 L473.5 223.0 L467.9 223.0 L462.2 223.0 L456.6 223.0 L451.0 223.0 L445.3 223.0 L439.7 223.0 L434.1 223.0 L428.4 223.0 L422.8 223.0 L417.1 223.0 L411.5 223.0 L405.9 223.0 L400.2 223.0 L394.6 223.0 M1316.3 174.0 L1311.7 174.0 L1307.1 174.0 L1302.5 174.0 L1297.9 174.0 L1293.3 174.0 L1288.7 174.0 L1284.1 174.0 L1279.5 174.0 L1274.9 174.0 L1270.3 174.0 L1265.7 174.0 L1261.1 174.0 L1256.5 174.0 L1251.8 174.0 L1247.2 174.0 L1242.6 174.0 L1238.0 174.0 L1233.4 174.0 L1228.8 174.0 L1224.2 174.0 L1219.6 174.0 L1215.0 174.0 L1210.4 174.0 L1205.8 174.0 L1201.2 174.0 L1196.6 174.0 L1192.0 174.0 L1187.4 174.0 L1182.8 174.0 L1178.2 174.0 L1173.6 174.0 L1169.0 174.0 L1164.4 174.0 L1159.8 174.0 L1155.2 174.0 L1150.6 174.0 L1146.0 174.0 L1141.4 174.0 L1136.8 174.0 L1132.2 174.0 L1127.6 174.0 L1123.0 174.0 L1118.4 174.0 L1113.8 174.0 L1109.1 174.0 L1104.5 174.0 L1099.9 174.0 L1095.3 174.0 L1090.7 174.0 L1086.1 174.0 L1081.5 174.0 L1076.9 174.0 L1072.3 174.0 L1067.7 174.0 L1063.1 174.0 L1058.5 174.0 L1053.9 174.0 L1049.3 174.0 L1044.7 174.0 L1040.1 174.0 L1035.5 174.0 L1030.9 174.0 L1026.3 174.0 L1021.7 174.0 L1017.1 174.0 L1012.5 174.0 L1007.9 174.0 L1003.3 174.0 L998.7 174.0 L994.1 174.0 L989.5 174.0 L984.9 174.0 L980.3 174.0 L975.7 174.0 L971.0 174.0 L966.4 174.0 L961.8 174.0 L957.2 174.0 L952.6 174.0 L948.0 174.0 L943.4 174.0 L938.8 174.0 L934.2 174.0 L929.6 174.0 L925.0 174.0 L920.4 174.0 L915.8 174.0 L911.2 174.0 L906.6 174.0 L902.0 174.0 L897.4 174.0 L892.8 174.0 L888.2 174.0 L883.6 174.0 L879.0 174.0 L874.4 174.0 L869.8 174.0 L865.2 174.0 L860.6 174.0 L856.0 174.0 L851.4 174.0 L846.8 174.0 L842.2 174.0 L837.6 174.0 L833.0 174.0 L828.3 174.0 L823.7 174.0 L819.1 174.0 L814.5 174.0 L809.9 174.0 L805.3 174.0 L800.7 174.0 L796.1 174.0 L791.5 174.0 L786.9 174.0 L782.3 174.0 L777.7 174.0 L773.1 174.0 L768.5 174.0 L763.9 174.0 L759.3 174.0 L754.7 174.0 L750.1 174.0 L745.5 174.0 L740.9 174.0 L736.3 174.0 L731.7 174.0 L727.1 174.0 L722.5 174.0 L717.9 174.0 L713.3 174.0 L708.7 174.0 L704.1 174.0 L699.5 174.0 L694.9 174.0 L690.2 174.0 L685.6 174.0 L681.0 174.0 L676.4 174.0 L671.8 174.0 L667.2 174.0 L662.6 174.0 L658.0 174.0 L653.4 174.0 L648.8 174.0 L644.2 174.0 L639.6 174.0 L635.0 174.0 L630.4 174.0 L625.8 174.0 L621.2 174.0 L616.6 174.0 L612.0 174.0 L607.4 174.0 L602.8 174.0 L598.2 174.0 L593.6 174.0 L589.0 174.0 L584.4 174.0 L579.8 174.0 L575.2 174.0 L570.6 174.0 L566.0 174.0 L561.4 174.0 L556.8 174.0 L552.2 174.0 L547.5 174.0 L542.9 174.0 L538.3 174.0 L533.7 174.0 L529.1 174.0 L524.5 174.0 L519.9 174.0 L515.3 174.0 L510.7 174.0 L506.1 174.0 L501.5 174.0 L496.9 174.0 L492.3 174.0 L487.7 174.0 M1195.0 125.0 L1191.7 125.0 L1188.4 125.0 L1185.2 125.0 L1181.9 125.0 L1178.7 125.0 L1175.4 125.0 L1172.2 125.0 L1168.9 125.0 L1165.7 125.0 L1162.4 125.0 L1159.1 125.0 L1155.9 125.0 L1152.6 125.0 L1149.4 125.0 L1146.1 125.0 L1142.9 125.0 L1139.6 125.0 L1136.4 125.0 L1133.1 125.0 L1129.9 125.0 L1126.6 125.0 L1123.3 125.0 L1120.1 125.0 L1116.8 125.0 L1113.6 125.0 L1110.3 125.0 L1107.1 125.0 L1103.8 125.0 L1100.6 125.0 L1097.3 125.0 L1094.0 125.0 L1090.8 125.0 L1087.5 125.0 L1084.3 125.0 L1081.0 125.0 L1077.8 125.0 L1074.5 125.0 L1071.3 125.0 L1068.0 125.0 L1064.8 125.0 L1061.5 125.0 L1058.2 125.0 L1055.0 125.0 L1051.7 125.0 L1048.5 125.0 L1045.2 125.0 L1042.0 125.0 L1038.7 125.0 L1035.5 125.0 L1032.2 125.0 L1028.9 125.0 L1025.7 125.0 L1022.4 125.0 L1019.2 125.0 L1015.9 125.0 L1012.7 125.0 L1009.4 125.0 L1006.2 125.0 L1002.9 125.0 L999.6 125.0 L996.4 125.0 L993.1 125.0 L989.9 125.0 L986.6 125.0 L983.4 125.0 L980.1 125.0 L976.9 125.0 L973.6 125.0 L970.4 125.0 L967.1 125.0 L963.8 125.0 L960.6 125.0 L957.3 125.0 L954.1 125.0 L950.8 125.0 L947.6 125.0 L944.3 125.0 L941.1 125.0 L937.8 125.0 L934.5 125.0 L931.3 125.0 L928.0 125.0 L924.8 125.0 L921.5 125.0 L918.3 125.0 L915.0 125.0 L911.8 125.0 L908.5 125.0 L905.3 125.0 L902.0 125.0 L898.7 125.0 L895.5 125.0 L892.2 125.0 L889.0 125.0 L885.7 125.0 L882.5 125.0 L879.2 125.0 L876.0 125.0 L872.7 125.0 L869.5 125.0 L866.2 125.0 L862.9 125.0 L859.7 125.0 L856.4 125.0 L853.2 125.0 L849.9 125.0 L846.7 125.0 L843.4 125.0 L840.2 125.0 L836.9 125.0 L833.6 125.0 L830.4 125.0 L827.1 125.0 L823.9 125.0 L820.6 125.0 L817.4 125.0 L814.1 125.0 L810.9 125.0 L807.6 125.0 L804.4 125.0 L801.1 125.0 L797.8 125.0 L794.6 125.0 L791.3 125.0 L788.1 125.0 L784.8 125.0 L781.6 125.0 L778.3 125.0 L775.1 125.0 L771.8 125.0 L768.5 125.0 L765.3 125.0 L762.0 125.0 L758.8 125.0 L755.5 125.0 L752.3 125.0 L749.0 125.0 L745.8 125.0 L742.5 125.0 L739.2 125.0 L736.0 125.0 L732.7 125.0 L729.5 125.0 L726.2 125.0 L723.0 125.0 L719.7 125.0 L716.5 125.0 L713.2 125.0 L710.0 125.0 L706.7 125.0 L703.4 125.0 L700.2 125.0 L696.9 125.0 L693.7 125.0 L690.4 125.0 L687.2 125.0 L683.9 125.0 L680.7 125.0 L677.4 125.0 L674.1 125.0 L670.9 125.0 L667.6 125.0 L664.4 125.0 L661.1 125.0 L657.9 125.0 L654.6 125.0 L651.4 125.0 L648.1 125.0 L644.9 125.0 L641.6 125.0 L638.3 125.0 L635.1 125.0 L631.8 125.0 L628.6 125.0 L625.3 125.0 L622.1 125.0 L618.8 125.0 L615.6 125.0 L612.3 125.0 L609.0 125.0 M1053.6 76.0 L1052.0 76.0 L1050.3 76.0 L1048.6 76.0 L1046.9 76.0 L1045.2 76.0 L1043.5 76.0 L1041.8 76.0 L1040.2 76.0 L1038.5 76.0 L1036.8 76.0 L1035.1 76.0 L1033.4 76.0 L1031.7 76.0 L1030.1 76.0 L1028.4 76.0 L1026.7 76.0 L1025.0 76.0 L1023.3 76.0 L1021.6 76.0 L1019.9 76.0 L1018.3 76.0 L1016.6 76.0 L1014.9 76.0 L1013.2 76.0 L1011.5 76.0 L1009.8 76.0 L1008.1 76.0 L1006.5 76.0 L1004.8 76.0 L1003.1 76.0 L1001.4 76.0 L999.7 76.0 L998.0 76.0 L996.4 76.0 L994.7 76.0 L993.0 76.0 L991.3 76.0 L989.6 76.0 L987.9 76.0 L986.2 76.0 L984.6 76.0 L982.9 76.0 L981.2 76.0 L979.5 76.0 L977.8 76.0 L976.1 76.0 L974.5 76.0 L972.8 76.0 L971.1 76.0 L969.4 76.0 L967.7 76.0 L966.0 76.0 L964.3 76.0 L962.7 76.0 L961.0 76.0 L959.3 76.0 L957.6 76.0 L955.9 76.0 L954.2 76.0 L952.5 76.0 L950.9 76.0 L949.2 76.0 L947.5 76.0 L945.8 76.0 L944.1 76.0 L942.4 76.0 L940.8 76.0 L939.1 76.0 L937.4 76.0 L935.7 76.0 L934.0 76.0 L932.3 76.0 L930.6 76.0 L929.0 76.0 L927.3 76.0 L925.6 76.0 L923.9 76.0 L922.2 76.0 L920.5 76.0 L918.8 76.0 L917.2 76.0 L915.5 76.0 L913.8 76.0 L912.1 76.0 L910.4 76.0 L908.7 76.0 L907.1 76.0 L905.4 76.0 L903.7 76.0 L902.0 76.0 L900.3 76.0 L898.6 76.0 L896.9 76.0 L895.3 76.0 L893.6 76.0 L891.9 76.0 L890.2 76.0 L888.5 76.0 L886.8 76.0 L885.2 76.0 L883.5 76.0 L881.8 76.0 L880.1 76.0 L878.4 76.0 L876.7 76.0 L875.0 76.0 L873.4 76.0 L871.7 76.0 L870.0 76.0 L868.3 76.0 L866.6 76.0 L864.9 76.0 L863.2 76.0 L861.6 76.0 L859.9 76.0 L858.2 76.0 L856.5 76.0 L854.8 76.0 L853.1 76.0 L851.5 76.0 L849.8 76.0 L848.1 76.0 L846.4 76.0 L844.7 76.0 L843.0 76.0 L841.3 76.0 L839.7 76.0 L838.0 76.0 L836.3 76.0 L834.6 76.0 L832.9 76.0 L831.2 76.0 L829.5 76.0 L827.9 76.0 L826.2 76.0 L824.5 76.0 L822.8 76.0 L821.1 76.0 L819.4 76.0 L817.8 76.0 L816.1 76.0 L814.4 76.0 L812.7 76.0 L811.0 76.0 L809.3 76.0 L807.6 76.0 L806.0 76.0 L804.3 76.0 L802.6 76.0 L800.9 76.0 L799.2 76.0 L797.5 76.0 L795.9 76.0 L794.2 76.0 L792.5 76.0 L790.8 76.0 L789.1 76.0 L787.4 76.0 L785.7 76.0 L784.1 76.0 L782.4 76.0 L780.7 76.0 L779.0 76.0 L777.3 76.0 L775.6 76.0 L773.9 76.0 L772.3 76.0 L770.6 76.0 L768.9 76.0 L767.2 76.0 L765.5 76.0 L763.8 76.0 L762.2 76.0 L760.5 76.0 L758.8 76.0 L757.1 76.0 L755.4 76.0 L753.7 76.0 L752.0 76.0 L750.4 76.0" fill="none" stroke="#6e6e6e" stroke-width="2.08" stroke-dasharray="2.08 3.43"/>
<text x="902.3" y="25.1" text-anchor="middle" style="font-family:&quot;Liberation Sans&quot;,sans-serif;font-size:11px;fill:#9a9a9a">+90<tspan dx="1" dy="-4" style="font-size:6px">&#176;</tspan></text>
<text x="902.3" y="122.7" text-anchor="middle" style="font-family:&quot;Liberation Sans&quot;,sans-serif;font-size:11px;fill:#9a9a9a">+60<tspan dx="1" dy="-4" style="font-size:6px">&#176;</tspan></text>
<text x="902.3" y="220.4" text-anchor="middle" style="font-family:&quot;Liberation Sans&quot;,sans-serif;font-size:11px;fill:#9a9a9a">+30<tspan dx="1" dy="-4" style="font-size:6px">&#176;</tspan></text>
<text x="902.3" y="329.7" text-anchor="middle" style="font-family:&quot;Liberation Sans&quot;,sans-serif;font-size:11px;fill:#9a9a9a">+0<tspan dx="1" dy="-4" style="font-size:6px">&#176;</tspan></text>
<text x="902.3" y="427.3" text-anchor="middle" style="font-family:&quot;Liberation Sans&quot;,sans-serif;font-size:11px;fill:#9a9a9a">&#8722;30<tspan dx="1" dy="-4" style="font-size:6px">&#176;</tspan></text>
<text x="902.3" y="525.0" text-anchor="middle" style="font-family:&quot;Liberation Sans&quot;,sans-serif;font-size:11px;fill:#9a9a9a">&#8722;60<tspan dx="1" dy="-4" style="font-size:6px">&#176;</tspan></text>
<text x="902.3" y="622.7" text-anchor="middle" style="font-family:&quot;Liberation Sans&quot;,sans-serif;font-size:11px;fill:#9a9a9a">&#8722;90<tspan dx="1" dy="-4" style="font-size:6px">&#176;</tspan></text>
<text x="1488.2" y="329.7" text-anchor="middle" style="font-family:&quot;Liberation Sans&quot;,sans-serif;font-size:11px;fill:#9a9a9a">+180<tspan dx="1" dy="-4" style="font-size:6px">&#176;</tspan></text>
<text x="1390.5" y="329.7" text-anchor="middle" style="font-family:&quot;Liberation Sans&quot;,sans-serif;font-size:11px;fill:#9a9a9a">+210<tspan dx="1" dy="-4" style="font-size:6px">&#176;</tspan></text>
<text x="1292.9" y="329.7" text-anchor="middle" style="font-family:&quot;Liberation Sans&quot;,sans-serif;font-size:11px;fill:#9a9a9a">+240<tspan dx="1" dy="-4" style="font-size:6px">&#176;</tspan></text>
<text x="1195.2" y="329.7" text-anchor="middle" style="font-family:&quot;Liberation Sans&quot;,sans-serif;font-size:11px;fill:#9a9a9a">+270<tspan dx="1" dy="-4" style="font-size:6px">&#176;</tspan></text>
<text x="1097.6" y="329.7" text-anchor="middle" style="font-family:&quot;Liberation Sans&quot;,sans-serif;font-size:11px;fill:#9a9a9a">+300<tspan dx="1" dy="-4" style="font-size:6px">&#176;</tspan></text>
<text x="999.9" y="329.7" text-anchor="middle" style="font-family:&quot;Liberation Sans&quot;,sans-serif;font-size:11px;fill:#9a9a9a">+330<tspan dx="1" dy="-4" style="font-size:6px">&#176;</tspan></text>
<text x="804.6" y="329.7" text-anchor="middle" style="font-family:&quot;Liberation Sans&quot;,sans-serif;font-size:11px;fill:#9a9a9a">+30<tspan dx="1" dy="-4" style="font-size:6px">&#176;</tspan></text>
<text x="707.0" y="329.7" text-anchor="middle" style="font-family:&quot;Liberation Sans&quot;,sans-serif;font-size:11px;fill:#9a9a9a">+60<tspan dx="1" dy="-4" style="font-size:6px">&#176;</tspan></text>
<text x="609.3" y="329.7" text-anchor="middle" style="font-family:&quot;Liberation Sans&quot;,sans-serif;font-size:11px;fill:#9a9a9a">+90<tspan dx="1" dy="-4" style="font-size:6px">&#176;</tspan></text>
<text x="511.7" y="329.7" text-anchor="middle" style="font-family:&quot;Liberation Sans&quot;,sans-serif;font-size:11px;fill:#9a9a9a">+120<tspan dx="1" dy="-4" style="font-size:6px">&#176;</tspan></text>
<text x="414.1" y="329.7" text-anchor="middle" style="font-family:&quot;Liberation Sans&quot;,sans-serif;font-size:11px;fill:#9a9a9a">+150<tspan dx="1" dy="-4" style="font-size:6px">&#176;</tspan></text>
<text x="316.4" y="329.7" text-anchor="middle" style="font-family:&quot;Liberation Sans&quot;,sans-serif;font-size:11px;fill:#9a9a9a">+180<tspan dx="1" dy="-4" style="font-size:6px">&#176;</tspan></text>
<path d="M1059.5 441.5 L1061.1 440.0 L1062.7 438.6 L1064.3 437.1 L1065.9 435.6 L1067.5 434.1 L1069.0 432.6 L1070.6 431.1 L1072.2 429.7 L1073.7 428.2 L1075.2 426.7 L1076.7 425.2 L1078.3 423.7 L1079.8 422.2 L1081.2 420.7 L1082.7 419.2 L1084.2 417.7 L1085.6 416.2 L1087.1 414.7 L1088.5 413.2 L1090.0 411.7 L1091.4 410.2 L1092.8 408.7 L1094.1 407.2 L1095.5 405.7 L1096.9 404.2 L1098.2 402.7 L1099.6 401.2 L1100.9 399.7 L1102.2 398.2 L1103.5 396.7 L1104.8 395.2 L1106.1 393.6 L1107.3 392.1 L1108.6 390.6 L1109.8 389.1 L1111.0 387.6 L1112.3 386.1 L1113.4 384.6 L1114.6 383.0 L1115.8 381.5 L1117.0 380.0 L1118.1 378.5 L1119.2 377.0 L1120.3 375.4 L1121.4 373.9 L1122.5 372.4 L1123.6 370.9 L1124.6 369.4 L1125.7 367.8 L1126.7 366.3 L1127.7 364.8 L1128.7 363.3 L1129.7 361.8 L1130.6 360.2 L1131.6 358.7 L1132.5 357.2 L1133.4 355.7 L1134.3 354.1 L1135.2 352.6 L1136.1 351.1 L1136.9 349.5 L1137.8 348.0 L1138.6 346.5 L1139.4 345.0 L1140.2 343.4 L1141.0 341.9 L1141.8 340.4 L1142.5 338.9 L1143.2 337.3 L1143.9 335.8 L1144.6 334.3 L1145.3 332.7 L1146.0 331.2 L1146.6 329.7 L1147.3 328.2 L1147.9 326.6 L1148.5 325.1 L1149.0 323.6 L1149.6 322.0 L1150.2 320.5 L1150.7 319.0 L1151.2 317.5 L1151.7 315.9 L1152.2 314.4 L1152.6 312.9 L1153.1 311.3 L1153.5 309.8 L1153.9 308.3 L1154.3 306.8 L1154.7 305.2 L1155.1 303.7 L1155.4 302.2 L1155.8 300.7 L1156.1 299.1 L1156.4 297.6 L1156.6 296.1 L1156.9 294.5 L1157.1 293.0 L1157.4 291.5 L1157.6 290.0 L1157.8 288.4 L1158.0 286.9 L1158.1 285.4 L1158.3 283.9 L1158.4 282.3 L1158.5 280.8 L1158.6 279.3 L1158.6 277.8 L1158.7 276.2 L1158.7 274.7 L1158.8 273.2 L1158.8 271.7 L1158.8 270.2 L1158.7 268.6 L1158.7 267.1 L1158.6 265.6 L1158.5 264.1 L1158.4 262.6 L1158.3 261.0 L1158.2 259.5 L1158.1 258.0 L1157.9 256.5 L1157.7 255.0 L1157.5 253.4 L1157.3 251.9 L1157.1 250.4 L1156.8 248.9 L1156.6 247.4 L1156.3 245.9 L1156.0 244.4 L1155.7 242.9 L1155.4 241.4 L1155.0 239.8 L1154.7 238.3 L1154.3 236.8 L1153.9 235.3 L1153.5 233.8 L1153.1 232.3 L1152.6 230.8 L1152.2 229.3 L1151.7 227.8 L1151.2 226.3 L1150.7 224.8 L1150.2 223.3 L1149.7 221.8 L1149.1 220.3 L1148.6 218.8 L1148.0 217.3 L1147.4 215.8 L1146.8 214.4 L1146.2 212.9 L1145.6 211.4 L1144.9 209.9 L1144.3 208.4 L1143.6 206.9 L1142.9 205.4 L1142.2 204.0 L1141.5 202.5 L1140.8 201.0 L1140.0 199.5 L1139.3 198.1 L1138.5 196.6 L1137.7 195.1 L1136.9 193.7 L1136.1 192.2 L1135.3 190.7 L1134.5 189.3 L1133.6 187.8 L1132.8 186.4 L1131.9 184.9 L1131.0 183.5 L1130.2 182.0 L1129.3 180.6 L1128.3 179.1 L1127.4 177.7 L1126.5 176.2 L1125.6 174.8 L1124.6 173.4 L1123.7 172.0 L1122.7 170.5 L1121.7 169.1 L1120.7 167.7 L1119.7 166.3 L1118.7 164.9 L1117.7 163.5 L1116.7 162.1 L1115.7 160.7 L1114.7 159.3 L1113.7 157.9 L1112.6 156.5 L1111.6 155.1 L1110.5 153.7 L1109.5 152.4 L1108.4 151.0 L1107.4 149.6 L1106.3 148.3 L1105.2 146.9 L1104.2 145.6 L1103.1 144.3 L1102.0 142.9 L1101.0 141.6 L1099.9 140.3 L1098.8 139.0 L1097.7 137.7 L1096.7 136.4 L1095.6 135.1 L1094.6 133.8 L1093.5 132.5 L1092.5 131.3 L1091.4 130.0 L1090.4 128.8 L1089.4 127.5 L1088.3 126.3 L1087.3 125.1 L1086.3 123.9 L1085.3 122.7 L1084.4 121.5 L1083.4 120.4 L1082.5 119.2 L1081.5 118.1 L1080.6 116.9 L1079.7 115.8 L1078.9 114.7 L1078.0 113.6 L1077.2 112.6 L1076.4 111.5 L1075.6 110.5 L1074.9 109.5 L1074.2 108.5 L1073.5 107.5 L1072.9 106.5 L1072.3 105.6 L1071.7 104.7 L1071.2 103.8 L1070.7 102.9 L1070.3 102.0 L1069.9 101.2 L1069.6 100.4 L1069.3 99.6 L1069.1 98.9 L1068.9 98.2 L1068.8 97.5 L1068.8 96.8 L1068.8 96.2 L1069.0 95.6 L1069.1 95.0 L1069.4 94.5 L1069.7 94.0 L1070.1 93.5 L1070.7 93.1 L1071.2 92.7 L1071.9 92.3 L1072.7 92.0 M675.4 442.2 L673.4 440.8 L671.3 439.3 L669.3 437.8 L667.3 436.3 L665.3 434.9 L663.3 433.4 L661.4 431.9 L659.4 430.4 L657.5 428.9 L655.5 427.5 L653.6 426.0 L651.7 424.5 L649.9 423.0 L648.0 421.5 L646.1 420.0 L644.3 418.5 L642.5 417.0 L640.7 415.5 L638.9 414.0 L637.1 412.5 L635.4 411.0 L633.6 409.5 L631.9 408.0 L630.2 406.5 L628.5 405.0 L626.8 403.5 L625.2 402.0 L623.6 400.5 L621.9 399.0 L620.3 397.5 L618.8 396.0 L617.2 394.5 L615.6 392.9 L614.1 391.4 L612.6 389.9 L611.1 388.4 L609.6 386.9 L608.2 385.4 L606.7 383.9 L605.3 382.3 L603.9 380.8 L602.6 379.3 L601.2 377.8 L599.9 376.3 L598.5 374.8 L597.2 373.2 L596.0 371.7 L594.7 370.2 L593.5 368.7 L592.3 367.2 L591.1 365.6 L589.9 364.1 L588.7 362.6 L587.6 361.1 L586.5 359.5 L585.4 358.0 L584.3 356.5 L583.3 355.0 L582.2 353.5 L581.2 351.9 L580.2 350.4 L579.3 348.9 L578.3 347.4 L577.4 345.8 L576.5 344.3 L575.6 342.8 L574.8 341.2 L573.9 339.7 L573.1 338.2 L572.3 336.7 L571.5 335.1 L570.8 333.6 L570.1 332.1 L569.4 330.6 L568.7 329.0 L568.0 327.5 L567.4 326.0 L566.8 324.4 L566.2 322.9 L565.6 321.4 L565.1 319.9 L564.5 318.3 L564.0 316.8 L563.6 315.3 L563.1 313.8 L562.7 312.2 L562.3 310.7 L561.9 309.2 L561.5 307.6 L561.2 306.1 L560.9 304.6 L560.6 303.1 L560.3 301.5 L560.0 300.0 L559.8 298.5 L559.6 297.0 L559.4 295.4 L559.3 293.9 L559.1 292.4 L559.0 290.9 L558.9 289.3 L558.9 287.8 L558.8 286.3 L558.8 284.8 L558.8 283.2 L558.8 281.7 L558.9 280.2 L558.9 278.7 L559.0 277.1 L559.1 275.6 L559.3 274.1 L559.4 272.6 L559.6 271.1 L559.8 269.5 L560.1 268.0 L560.3 266.5 L560.6 265.0 L560.9 263.5 L561.2 261.9 L561.5 260.4 L561.9 258.9 L562.3 257.4 L562.7 255.9 L563.1 254.4 L563.6 252.9 L564.0 251.3 L564.5 249.8 L565.0 248.3 L565.6 246.8 L566.1 245.3 L566.7 243.8 L567.3 242.3 L567.9 240.8 L568.6 239.3 L569.2 237.8 L569.9 236.2 L570.6 234.7 L571.4 233.2 L572.1 231.7 L572.9 230.2 L573.7 228.7 L574.5 227.2 L575.3 225.7 L576.1 224.2 L577.0 222.7 L577.9 221.3 L578.8 219.8 L579.7 218.3 L580.7 216.8 L581.6 215.3 L582.6 213.8 L583.6 212.3 L584.6 210.8 L585.7 209.3 L586.7 207.9 L587.8 206.4 L588.9 204.9 L590.0 203.4 L591.1 202.0 L592.3 200.5 L593.4 199.0 L594.6 197.5 L595.8 196.1 L597.0 194.6 L598.3 193.1 L599.5 191.7 L600.8 190.2 L602.0 188.8 L603.3 187.3 L604.6 185.9 L605.9 184.4 L607.3 183.0 L608.6 181.5 L610.0 180.1 L611.4 178.6 L612.7 177.2 L614.1 175.8 L615.6 174.3 L617.0 172.9 L618.4 171.5 L619.9 170.1 L621.3 168.7 L622.8 167.2 L624.3 165.8 L625.7 164.4 L627.2 163.0 L628.7 161.6 L630.3 160.2 L631.8 158.9 L633.3 157.5 L634.8 156.1 L636.4 154.7 L637.9 153.3 L639.5 152.0 L641.0 150.6 L642.6 149.3 L644.2 147.9 L645.7 146.6 L647.3 145.2 L648.9 143.9 L650.4 142.6 L652.0 141.3 L653.6 140.0 L655.2 138.7 L656.7 137.4 L658.3 136.1 L659.8 134.8 L661.4 133.5 L662.9 132.3 L664.5 131.0 L666.0 129.8 L667.5 128.5 L669.0 127.3 L670.5 126.1 L672.0 124.9 L673.5 123.7 L675.0 122.5 L676.4 121.3 L677.8 120.2 L679.2 119.0 L680.6 117.9 L682.0 116.8 L683.3 115.7 L684.6 114.6 L685.9 113.5 L687.1 112.5 L688.3 111.4 L689.5 110.4 L690.6 109.4 L691.7 108.4 L692.8 107.4 L693.8 106.5 L694.8 105.6 L695.7 104.7 L696.6 103.8 L697.4 102.9 L698.1 102.1 L698.8 101.3 L699.5 100.5 L700.0 99.8 L700.5 99.0 L700.9 98.3 L701.3 97.7 L701.6 97.0 L701.7 96.4 L701.8 95.8 L701.9 95.3 L701.8 94.8 L701.6 94.3 L701.3 93.8 L701.0 93.4 L700.5 93.0 M1101.0 92.7 L1098.6 92.4 L1096.2 92.1 L1093.9 91.9 L1091.8 91.7 L1089.8 91.6 L1087.8 91.5 L1086.0 91.4 L1084.3 91.4 L1082.7 91.4 L1081.3 91.4 L1079.9 91.5 L1078.6 91.7 L1077.4 91.8 L1076.4 92.0 L1075.4 92.3 L1074.5 92.6 L1073.7 92.9 L1073.1 93.2 L1072.5 93.6 L1072.0 94.1 L1071.5 94.5 L1071.2 95.0 L1070.9 95.6 L1070.7 96.1 L1070.6 96.7 L1070.6 97.4 L1070.6 98.0 L1070.7 98.7 M843.9 441.4 L844.3 440.0 L844.8 438.6 L845.3 437.2 L845.8 435.8 L846.3 434.4 L846.8 433.0 L847.4 431.6 L847.9 430.2 L848.4 428.7 L848.9 427.3 L849.4 425.9 L849.9 424.5 L850.5 423.1 L851.0 421.6 L851.5 420.2 L852.1 418.8 L852.6 417.3 L853.1 415.9 L853.7 414.4 L854.2 413.0 L854.8 411.6 L855.3 410.1 L855.9 408.7 L856.4 407.2 L857.0 405.8 L857.5 404.3 L858.1 402.9 L858.7 401.4 L859.2 400.0 L859.8 398.5 L860.4 397.1 L860.9 395.6 L861.5 394.2 L862.1 392.7 L862.7 391.2 L863.3 389.8 L863.9 388.3 L864.4 386.8 L865.0 385.4 L865.6 383.9 L866.2 382.5 L866.8 381.0 L867.4 379.5 L868.0 378.1 L868.6 376.6 L869.2 375.1 L869.8 373.6 L870.4 372.2 L871.1 370.7 L871.7 369.2 L872.3 367.7 L872.9 366.3 L873.5 364.8 L874.1 363.3 L874.8 361.8 L875.4 360.4 L876.0 358.9 L876.6 357.4 L877.3 355.9 L877.9 354.5 L878.5 353.0 L879.2 351.5 L879.8 350.0 L880.4 348.5 L881.1 347.1 L881.7 345.6 L882.3 344.1 L883.0 342.6 L883.6 341.1 L884.3 339.7 L884.9 338.2 L885.6 336.7 L886.2 335.2 L886.9 333.7 L887.5 332.2 L888.2 330.8 L888.8 329.3 L889.5 327.8 L890.1 326.3 L890.8 324.8 L891.4 323.3 L892.1 321.9 L892.7 320.4 L893.4 318.9 L894.0 317.4 L894.7 315.9 L895.3 314.4 L896.0 312.9 L896.7 311.5 L897.3 310.0 L898.0 308.5 L898.6 307.0 L899.3 305.5 L900.0 304.1 L900.6 302.6 L901.3 301.1 L901.9 299.6 L902.6 298.1 L903.3 296.6 L903.9 295.2 L904.6 293.7 L905.2 292.2 L905.9 290.7 L906.5 289.2 L907.2 287.8 L907.9 286.3 L908.5 284.8 L909.2 283.3 L909.8 281.8 L910.5 280.4 L911.1 278.9 L911.8 277.4 L912.5 275.9 L913.1 274.5 L913.8 273.0 L914.4 271.5 L915.1 270.0 L915.7 268.6 L916.4 267.1 L917.0 265.6 L917.7 264.2 L918.3 262.7 L919.0 261.2 L919.6 259.8 L920.2 258.3 L920.9 256.8 L921.5 255.4 L922.2 253.9 L922.8 252.4 L923.5 251.0 L924.1 249.5 L924.7 248.0 L925.4 246.6 L926.0 245.1 L926.6 243.7 L927.3 242.2 L927.9 240.8 L928.5 239.3 L929.1 237.9 L929.8 236.4 L930.4 235.0 L931.0 233.5 L931.6 232.1 L932.2 230.6 L932.9 229.2 L933.5 227.7 L934.1 226.3 L934.7 224.9 L935.3 223.4 L935.9 222.0 L936.5 220.6 L937.1 219.1 L937.7 217.7 L938.3 216.3 L938.9 214.8 L939.5 213.4 L940.1 212.0 L940.7 210.6 L941.3 209.2 L941.9 207.7 L942.5 206.3 L943.1 204.9 L943.6 203.5 L944.2 202.1 L944.8 200.7 L945.4 199.3 L945.9 197.9 L946.5 196.5 L947.1 195.1 L947.7 193.7 L948.2 192.4 L948.8 191.0 L949.4 189.6 L949.9 188.2 L950.5 186.9 L951.0 185.5 L951.6 184.1 L952.1 182.8 L952.7 181.4 L953.2 180.1 L953.8 178.7 L954.3 177.4 L954.9 176.0 L955.4 174.7 L956.0 173.4 L956.5 172.0 L957.1 170.7 L957.6 169.4 L958.1 168.1 L958.7 166.8 L959.2 165.5 L959.7 164.2 L960.3 162.9 L960.8 161.6 L961.3 160.3 L961.9 159.0 L962.4 157.8 L962.9 156.5 L963.5 155.3 L964.0 154.0 L964.5 152.8 L965.1 151.6 L965.6 150.3 L966.1 149.1 L966.7 147.9 L967.2 146.7 L967.7 145.5 L968.3 144.4 L968.8 143.2 L969.4 142.0 L969.9 140.9 L970.5 139.7 L971.0 138.6 L971.6 137.5 L972.1 136.4 L972.7 135.3 L973.3 134.2 L973.8 133.1 L974.4 132.1 L975.0 131.0 L975.6 130.0 L976.2 128.9 L976.8 127.9 L977.4 126.9 L978.0 126.0 L978.6 125.0 L979.3 124.1 L979.9 123.1 L980.6 122.2 L981.3 121.3 L981.9 120.5 L982.6 119.6 L983.3 118.8 L984.1 117.9 L984.8 117.1 L985.6 116.4 L986.3 115.6 L987.1 114.9 L987.9 114.2 L988.8 113.5 L989.6 112.8 L990.5 112.2 L991.4 111.5 L992.3 111.0 L993.2 110.4 L994.2 109.8 L995.2 109.3 L996.2 108.8 L997.3 108.4 L998.4 108.0 L999.5 107.6 L1000.6 107.2 L1001.8 106.8 L1003.0 106.5 L1004.3 106.2 L1005.6 106.0 L1006.9 105.8 L1008.3 105.6 L1009.7 105.4 L1011.1 105.3 L1012.6 105.2 L1014.1 105.1 L1015.7 105.1 L1017.3 105.1 L1019.0 105.1 L1020.7 105.2 L1022.5 105.3 L1024.3 105.4 L1026.1 105.6 L1028.0 105.8 L1030.0 106.0 L1032.0 106.2 L1034.0 106.5 L1036.1 106.8 L1038.2 107.2 L1040.4 107.5 L1042.6 107.9 L1044.9 108.4 L1047.2 108.8 L1049.6 109.3 L1052.0 109.8 L1054.4 110.4 L1056.9 110.9 L1059.5 111.5 L1062.0 112.1 L1064.7 112.8 L1067.3 113.4 L1070.0 114.1 L1072.8 114.8 L1075.6 115.6 L1078.4 116.3 L1081.2 117.1 L1084.1 117.9 L1087.0 118.7 L1090.0 119.6 L1093.0 120.4 L1096.0 121.3 M752.0 443.7 L750.4 442.2 L748.9 440.7 L747.3 439.2 L745.7 437.7 L744.1 436.3 L742.6 434.8 L741.1 433.3 L739.5 431.8 L738.0 430.3 L736.5 428.8 L735.0 427.3 L733.5 425.9 L732.0 424.4 L730.5 422.9 L729.1 421.4 L727.6 419.9 L726.2 418.4 L724.7 416.9 L723.3 415.4 L721.9 413.9 L720.5 412.4 L719.1 410.9 L717.7 409.4 L716.4 407.9 L715.0 406.3 L713.7 404.8 L712.3 403.3 L711.0 401.8 L709.7 400.3 L708.4 398.8 L707.1 397.3 L705.9 395.8 L704.6 394.3 L703.4 392.7 L702.1 391.2 L700.9 389.7 L699.7 388.2 L698.5 386.7 L697.4 385.2 L696.2 383.6 L695.0 382.1 L693.9 380.6 L692.8 379.1 L691.7 377.6 L690.6 376.0 L689.5 374.5 L688.4 373.0 L687.4 371.5 L686.3 370.0 L685.3 368.4 L684.3 366.9 L683.3 365.4 L682.3 363.9 L681.3 362.3 L680.4 360.8 L679.4 359.3 L678.5 357.7 L677.6 356.2 L676.7 354.7 L675.8 353.2 L675.0 351.6 L674.1 350.1 L673.3 348.6 L672.5 347.1 L671.7 345.5 L670.9 344.0 L670.1 342.5 L669.3 340.9 L668.6 339.4 L667.9 337.9 L667.2 336.3 L666.5 334.8 L665.8 333.3 L665.1 331.8 L664.5 330.2 L663.8 328.7 L663.2 327.2 L662.6 325.6 L662.1 324.1 L661.5 322.6 L660.9 321.0 L660.4 319.5 L659.9 318.0 L659.4 316.5 L658.9 314.9 L658.4 313.4 L658.0 311.9 L657.5 310.3 L657.1 308.8 L656.7 307.3 L656.3 305.7 L656.0 304.2 L655.6 302.7 L655.3 301.2 L655.0 299.6 L654.7 298.1 L654.4 296.6 L654.1 295.0 L653.8 293.5 L653.6 292.0 L653.4 290.4 L653.2 288.9 L653.0 287.4 L652.8 285.9 L652.7 284.3 L652.5 282.8 L652.4 281.3 L652.3 279.8 L652.2 278.2 L652.2 276.7 L652.1 275.2 L652.1 273.7 L652.0 272.1 L652.0 270.6 L652.1 269.1 L652.1 267.6 L652.1 266.0 L652.2 264.5 L652.3 263.0 L652.4 261.5 L652.5 260.0 L652.6 258.4 L652.7 256.9 L652.9 255.4 L653.1 253.9 L653.3 252.4 L653.5 250.8 L653.7 249.3 L653.9 247.8 L654.2 246.3 L654.5 244.8 L654.8 243.3 L655.1 241.8 L655.4 240.3 L655.7 238.7 L656.1 237.2 L656.4 235.7 L656.8 234.2 L657.2 232.7 L657.6 231.2 L658.0 229.7 L658.5 228.2 L658.9 226.7 L659.4 225.2 L659.9 223.7 L660.4 222.2 L660.9 220.7 L661.5 219.2 L662.0 217.7 L662.6 216.2 L663.1 214.7 L663.7 213.2 L664.3 211.7 L664.9 210.2 L665.6 208.8 L666.2 207.3 L666.9 205.8 L667.6 204.3 L668.2 202.8 L668.9 201.4 L669.6 199.9 L670.4 198.4 L671.1 196.9 L671.9 195.5 L672.6 194.0 L673.4 192.5 L674.2 191.1 L675.0 189.6 L675.8 188.1 L676.6 186.7 L677.4 185.2 L678.3 183.8 L679.1 182.3 L680.0 180.9 L680.9 179.4 L681.8 178.0 L682.6 176.5 L683.6 175.1 L684.5 173.7 L685.4 172.2 L686.3 170.8 L687.3 169.4 L688.2 168.0 L689.2 166.5 L690.1 165.1 L691.1 163.7 L692.1 162.3 L693.1 160.9 L694.1 159.5 L695.1 158.1 L696.1 156.7 L697.1 155.3 L698.1 154.0 L699.1 152.6 L700.1 151.2 L701.2 149.8 L702.2 148.5 L703.2 147.1 L704.3 145.8 L705.3 144.4 L706.3 143.1 L707.4 141.8 L708.4 140.4 L709.4 139.1 L710.5 137.8 L711.5 136.5 L712.6 135.2 L713.6 133.9 L714.6 132.7 L715.6 131.4 L716.6 130.1 L717.6 128.9 L718.6 127.6 L719.6 126.4 L720.6 125.2 L721.6 124.0 L722.6 122.8 L723.5 121.6 L724.4 120.4 L725.4 119.2 L726.3 118.1 L727.2 116.9 L728.0 115.8 L728.9 114.7 L729.7 113.6 L730.5 112.5 L731.3 111.5 L732.0 110.4 L732.8 109.4 L733.5 108.4 L734.1 107.4 L734.7 106.4 L735.3 105.5 L735.9 104.5 L736.4 103.6 L736.9 102.8 L737.3 101.9 L737.7 101.1 L738.0 100.2 L738.3 99.5 L738.5 98.7 L738.7 98.0 L738.8 97.3 L738.8 96.6 L738.8 95.9 L738.7 95.3 L738.5 94.7 L738.3 94.2 L737.9 93.7 L737.5 93.2 L737.0 92.8 L736.5 92.3 L735.8 92.0 L735.1 91.6 L734.2 91.3 L733.3 91.1 L732.2 90.9 L731.1 90.7 L729.8 90.5 L728.5 90.4 L727.0 90.4 L725.4 90.4 L723.8 90.4 L722.0 90.4 L720.1 90.6 L718.1 90.7 L715.9 90.9 L713.7 91.1 L711.4 91.3 L708.9 91.6 L706.4 92.0 L703.7 92.4 M1102.4 92.8 L1102.1 93.2 L1102.0 93.7 L1101.9 94.2 L1101.9 94.7 L1102.1 95.3 L1102.3 95.9 L1102.6 96.6 L1103.0 97.3 L1103.5 98.0 L1104.0 98.7 M875.0 442.6 L875.6 441.1 L876.1 439.7 L876.7 438.2 L877.3 436.7 L877.8 435.3 L878.4 433.8 L879.0 432.3 L879.6 430.9 L880.1 429.4 L880.7 427.9 L881.3 426.5 L881.9 425.0 L882.4 423.5 L883.0 422.0 L883.6 420.6 L884.2 419.1 L884.8 417.6 L885.3 416.1 L885.9 414.6 L886.5 413.2 L887.1 411.7 L887.7 410.2 L888.3 408.7 L888.9 407.2 L889.4 405.7 L890.0 404.2 L890.6 402.7 L891.2 401.2 L891.8 399.8 L892.4 398.3 L893.0 396.8 L893.6 395.3 L894.2 393.8 L894.8 392.3 L895.4 390.8 L896.0 389.3 L896.6 387.8 L897.2 386.3 L897.8 384.8 L898.4 383.3 L899.0 381.8 L899.6 380.2 L900.2 378.7 L900.7 377.2 L901.3 375.7 L901.9 374.2 L902.5 372.7 L903.1 371.2 L903.7 369.7 L904.3 368.2 L904.9 366.7 L905.5 365.2 L906.1 363.7 L906.7 362.1 L907.3 360.6 L907.9 359.1 L908.5 357.6 L909.1 356.1 L909.7 354.6 L910.3 353.1 L910.9 351.6 L911.5 350.0 L912.1 348.5 L912.7 347.0 L913.3 345.5 L913.9 344.0 L914.4 342.5 L915.0 341.0 L915.6 339.4 L916.2 337.9 L916.8 336.4 L917.4 334.9 L918.0 333.4 L918.5 331.9 L919.1 330.3 L919.7 328.8 L920.3 327.3 L920.9 325.8 L921.4 324.3 L922.0 322.8 L922.6 321.2 L923.2 319.7 L923.7 318.2 L924.3 316.7 L924.9 315.2 L925.4 313.6 L926.0 312.1 L926.6 310.6 L927.1 309.1 L927.7 307.6 L928.3 306.1 L928.8 304.5 L929.4 303.0 L929.9 301.5 L930.5 300.0 L931.0 298.5 L931.6 297.0 L932.1 295.5 L932.7 293.9 L933.2 292.4 L933.8 290.9 L934.3 289.4 L934.8 287.9 L935.4 286.4 L935.9 284.9 L936.4 283.3 L937.0 281.8 L937.5 280.3 L938.0 278.8 L938.5 277.3 L939.0 275.8 L939.6 274.3 L940.1 272.8 L940.6 271.3 L941.1 269.7 L941.6 268.2 L942.1 266.7 L942.6 265.2 L943.1 263.7 L943.6 262.2 L944.1 260.7 L944.6 259.2 L945.1 257.7 L945.5 256.2 L946.0 254.7 L946.5 253.2 L947.0 251.7 L947.5 250.2 L947.9 248.7 L948.4 247.2 L948.9 245.7 L949.3 244.2 L949.8 242.7 L950.2 241.2 L950.7 239.7 L951.1 238.2 L951.6 236.7 L952.0 235.2 L952.5 233.7 L952.9 232.3 L953.3 230.8 L953.8 229.3 L954.2 227.8 L954.6 226.3 L955.0 224.8 L955.5 223.3 L955.9 221.9 L956.3 220.4 L956.7 218.9 L957.1 217.4 L957.5 216.0 L957.9 214.5 L958.3 213.0 L958.7 211.5 L959.1 210.1 L959.5 208.6 L959.9 207.1 L960.2 205.7 L960.6 204.2 L961.0 202.8 L961.4 201.3 L961.7 199.8 L962.1 198.4 L962.5 196.9 L962.8 195.5 L963.2 194.0 L963.5 192.6 L963.9 191.2 L964.2 189.7 L964.6 188.3 L964.9 186.9 L965.3 185.4 L965.6 184.0 L965.9 182.6 L966.3 181.1 L966.6 179.7 L966.9 178.3 L967.2 176.9 L967.5 175.5 L967.9 174.1 L968.2 172.7 L968.5 171.3 L968.8 169.9 L969.1 168.5 L969.4 167.1 L969.7 165.7 L970.0 164.3 L970.3 163.0 L970.6 161.6 L970.9 160.2 L971.2 158.9 L971.5 157.5 L971.8 156.2 L972.1 154.8 L972.3 153.5 L972.6 152.1 L972.9 150.8 L973.2 149.5 L973.5 148.2 L973.8 146.9 L974.1 145.6 L974.3 144.3 L974.6 143.0 L974.9 141.7 L975.2 140.4 L975.5 139.1 L975.8 137.9 L976.1 136.6 L976.4 135.4 L976.7 134.2 L977.0 132.9 L977.3 131.7 L977.6 130.5 L977.9 129.3 L978.2 128.2 L978.5 127.0 L978.8 125.8 L979.1 124.7 L979.5 123.5 L979.8 122.4 L980.2 121.3 L980.5 120.2 L980.9 119.1 L981.2 118.1 L981.6 117.0 L982.0 116.0 L982.4 115.0 L982.8 114.0 L983.3 113.0 L983.7 112.0 L984.2 111.1 L984.6 110.1 L985.1 109.2 L985.6 108.4 L986.2 107.5 L986.7 106.6 L987.3 105.8 L987.9 105.0 L988.5 104.3 L989.1 103.5 L989.8 102.8 L990.5 102.1 L991.2 101.4 L992.0 100.8 L992.8 100.2 L993.6 99.6 L994.5 99.1 L995.4 98.6 L996.3 98.1 L997.3 97.6 L998.3 97.2 L999.4 96.8 L1000.5 96.5 L1001.6 96.2 L1002.8 95.9 L1004.1 95.6 L1005.4 95.4 L1006.8 95.3 L1008.2 95.1 L1009.7 95.0 L1011.2 95.0 L1012.8 94.9 L1014.4 95.0 L1016.1 95.0 L1017.9 95.1 L1019.7 95.2 L1021.6 95.4 L1023.5 95.6 L1025.6 95.8 L1027.6 96.1 L1029.8 96.4 L1032.0 96.7 L1034.2 97.1 L1036.5 97.5 L1038.9 98.0 L1041.3 98.5 L1043.8 99.0 L1046.4 99.5 L1049.0 100.1 L1051.7 100.7 L1054.4 101.3 L1057.2 102.0 L1060.0 102.6 L1062.9 103.4 L1065.8 104.1 L1068.8 104.9 L1071.8 105.7 L1074.9 106.5 L1078.0 107.3 M721.4 442.6 L720.6 441.0 L719.7 439.4 L718.8 437.8 L718.0 436.2 L717.2 434.6 L716.4 433.0 L715.6 431.4 L714.8 429.8 L714.0 428.2 L713.3 426.6 L712.5 425.0 L711.8 423.4 L711.1 421.8 L710.4 420.2 L709.7 418.6 L709.0 417.0 L708.3 415.4 L707.7 413.8 L707.1 412.2 L706.4 410.6 L705.8 409.0 L705.2 407.4 L704.7 405.8 L704.1 404.2 L703.6 402.6 L703.0 401.0 L702.5 399.4 L702.0 397.8 L701.5 396.2 L701.0 394.6 L700.6 393.0 L700.1 391.4 L699.7 389.8 L699.3 388.2 L698.9 386.6 L698.5 385.0 L698.1 383.4 L697.8 381.8 L697.4 380.2 L697.1 378.6 L696.8 377.0 L696.5 375.4 L696.2 373.8 L696.0 372.2 L695.7 370.6 L695.5 369.0 L695.3 367.3 L695.1 365.7 L694.9 364.1 L694.7 362.5 L694.6 360.9 L694.4 359.3 L694.3 357.7 L694.2 356.1 L694.1 354.5 L694.0 352.9 L693.9 351.3 L693.9 349.7 L693.9 348.1 L693.8 346.5 L693.8 344.9 L693.8 343.3 L693.9 341.7 L693.9 340.1 L694.0 338.5 L694.0 336.9 L694.1 335.3 L694.2 333.7 L694.4 332.1 L694.5 330.4 L694.6 328.8 L694.8 327.2 L695.0 325.6 L695.2 324.0 L695.4 322.4 L695.6 320.8 L695.9 319.2 L696.1 317.6 L696.4 316.0 L696.7 314.4 L697.0 312.8 L697.3 311.2 L697.6 309.6 L698.0 308.0 L698.4 306.4 L698.7 304.8 L699.1 303.2 L699.5 301.6 L700.0 300.0 L700.4 298.4 L700.9 296.7 L701.3 295.1 L701.8 293.5 L702.3 291.9 L702.8 290.3 L703.3 288.7 L703.9 287.1 L704.4 285.5 L705.0 283.9 L705.6 282.3 L706.2 280.7 L706.8 279.1 L707.5 277.5 L708.1 275.9 L708.8 274.3 L709.4 272.7 L710.1 271.1 L710.8 269.5 L711.5 267.9 L712.3 266.3 L713.0 264.7 L713.8 263.1 L714.5 261.5 L715.3 259.9 L716.1 258.3 L716.9 256.7 L717.8 255.1 L718.6 253.5 L719.4 251.8 L720.3 250.2 L721.2 248.6 L722.1 247.0 L723.0 245.4 L723.9 243.8 L724.8 242.2 L725.8 240.6 L726.7 239.0 L727.7 237.4 L728.7 235.8 L729.7 234.2 L730.7 232.6 L731.7 231.0 L732.8 229.4 L733.8 227.8 L734.9 226.2 L735.9 224.6 L737.0 223.0 L738.1 221.4 L739.2 219.8 L740.3 218.2 L741.5 216.6 L742.6 215.0 L743.8 213.4 L744.9 211.8 L746.1 210.3 L747.3 208.7 L748.5 207.1 L749.7 205.5 L750.9 203.9 L752.2 202.3 L753.4 200.7 L754.7 199.1 L755.9 197.5 L757.2 195.9 L758.5 194.3 L759.8 192.7 L761.1 191.1 L762.4 189.5 L763.7 187.9 L765.1 186.3 L766.4 184.7 L767.8 183.2 L769.1 181.6 L770.5 180.0 L771.9 178.4 L773.3 176.8 L774.7 175.2 L776.1 173.6 L777.5 172.0 L778.9 170.5 L780.4 168.9 L781.8 167.3 L783.3 165.7 L784.7 164.1 L786.2 162.5 L787.7 160.9 L789.1 159.4 L790.6 157.8 L792.1 156.2 L793.6 154.6 L795.1 153.1 L796.7 151.5 L798.2 149.9 L799.7 148.3 L801.3 146.8 L802.8 145.2 L804.4 143.6 L805.9 142.0 L807.5 140.5 L809.0 138.9 L810.6 137.3 L812.2 135.8 L813.8 134.2 L815.4 132.7 L817.0 131.1 L818.6 129.5 L820.2 128.0 L821.8 126.4 L823.4 124.9 L825.0 123.3 L826.6 121.8 L828.2 120.2 L829.9 118.7 L831.5 117.2 L833.1 115.6 L834.8 114.1 L836.4 112.6 L838.0 111.0 L839.7 109.5 L841.3 108.0 L843.0 106.5 L844.6 104.9 L846.3 103.4 L847.9 101.9 L849.6 100.4 L851.2 98.9 L852.8 97.4 L854.5 96.0 L856.1 94.5 L857.8 93.0 L859.4 91.6 L861.1 90.1 L862.7 88.6 L864.3 87.2 L866.0 85.8 L867.6 84.4 L869.2 82.9 L870.8 81.5 L872.4 80.2 L874.0 78.8 L875.6 77.4 L877.2 76.1 L878.8 74.8 L880.4 73.5 L882.0 72.2 L883.5 70.9 L885.1 69.7 L886.6 68.5 L888.1 67.3 L889.7 66.1 L891.2 65.0 L892.7 63.9 L894.2 62.9 L895.7 61.9 L897.1 60.9 L898.6 60.0 L900.1 59.2 L901.5 58.4 L903.0 57.7 L904.4 57.1 L905.9 56.5 L907.4 56.1 L908.8 55.7 L910.4 55.4 L911.9 55.1 L913.5 55.0 L915.1 55.0 L916.7 55.1 L918.4 55.2 L920.2 55.5 L922.0 55.8 L923.9 56.3 L925.8 56.8 L927.8 57.4 L929.9 58.0 L932.0 58.8 L934.2 59.6 L936.5 60.5 L938.8 61.4 L941.2 62.3 L943.6 63.4 L946.0 64.4 L948.5 65.5 L951.1 66.7 L953.7 67.8 L956.3 69.0 L959.0 70.2 L961.6 71.5 L964.4 72.8 L967.1 74.1 L969.9 75.4 L972.6 76.7 L975.4 78.1 L978.3 79.4 L981.1 80.8 L984.0 82.2 L986.8 83.6 L989.7 85.0 L992.6 86.4 L995.5 87.9 L998.4 89.3 L1001.3 90.8 L1004.2 92.2 L1007.1 93.7 L1010.1 95.2 L1013.0 96.6 L1015.9 98.1 L1018.9 99.6 L1021.8 101.1 L1024.7 102.6 L1027.7 104.1 L1030.6 105.6 L1033.5 107.2 L1036.4 108.7 L1039.4 110.2 L1042.3 111.7 L1045.2 113.3 L1048.1 114.8 L1051.0 116.3 L1053.9 117.9 L1056.8 119.4 L1059.7 120.9 L1062.6 122.5 L1065.4 124.0 L1068.3 125.6 L1071.2 127.1 L1074.0 128.7 M771.4 442.2 L771.8 440.9 L772.2 439.7 L772.6 438.5 L773.0 437.2 L773.4 436.0 L773.8 434.7 L774.3 433.4 L774.7 432.2 L775.1 430.9 L775.5 429.6 L776.0 428.4 L776.4 427.1 L776.9 425.8 L777.3 424.5 L777.8 423.2 L778.2 421.9 L778.7 420.7 L779.1 419.4 L779.6 418.1 L780.1 416.8 L780.6 415.4 L781.1 414.1 L781.6 412.8 L782.1 411.5 L782.6 410.2 L783.1 408.9 L783.6 407.6 L784.1 406.2 L784.6 404.9 L785.2 403.6 L785.7 402.2 L786.2 400.9 L786.8 399.6 L787.3 398.2 L787.9 396.9 L788.4 395.6 L789.0 394.2 L789.6 392.9 L790.1 391.5 L790.7 390.2 L791.3 388.8 L791.9 387.5 L792.5 386.1 L793.1 384.8 L793.7 383.4 L794.3 382.0 L795.0 380.7 L795.6 379.3 L796.2 378.0 L796.8 376.6 L797.5 375.2 L798.1 373.9 L798.8 372.5 L799.4 371.1 L800.1 369.8 L800.8 368.4 L801.5 367.0 L802.1 365.7 L802.8 364.3 L803.5 362.9 L804.2 361.5 L804.9 360.2 L805.6 358.8 L806.3 357.4 L807.0 356.0 L807.8 354.6 L808.5 353.3 L809.2 351.9 L809.9 350.5 L810.7 349.1 L811.4 347.7 L812.2 346.3 L812.9 345.0 L813.7 343.6 L814.5 342.2 L815.2 340.8 L816.0 339.4 L816.8 338.0 L817.6 336.6 L818.4 335.3 L819.2 333.9 L820.0 332.5 L820.8 331.1 L821.6 329.7 L822.4 328.3 L823.2 326.9 L824.0 325.5 L824.8 324.2 L825.7 322.8 L826.5 321.4 L827.3 320.0 L828.2 318.6 L829.0 317.2 L829.9 315.8 L830.7 314.4 L831.6 313.0 L832.5 311.7 L833.3 310.3 L834.2 308.9 L835.1 307.5 L835.9 306.1 L836.8 304.7 L837.7 303.3 L838.6 301.9 L839.5 300.6 L840.4 299.2 L841.3 297.8 L842.2 296.4 L843.1 295.0 L844.0 293.6 L844.9 292.3 L845.8 290.9 L846.7 289.5 L847.6 288.1 L848.6 286.7 L849.5 285.3 L850.4 284.0 L851.4 282.6 L852.3 281.2 L853.2 279.8 L854.2 278.5 L855.1 277.1 L856.1 275.7 L857.0 274.3 L858.0 273.0 L858.9 271.6 L859.9 270.2 L860.8 268.9 L861.8 267.5 L862.7 266.1 L863.7 264.8 L864.7 263.4 L865.6 262.0 L866.6 260.7 L867.6 259.3 L868.5 257.9 L869.5 256.6 L870.5 255.2 L871.5 253.9 L872.4 252.5 L873.4 251.2 L874.4 249.8 L875.4 248.5 L876.4 247.1 L877.4 245.8 L878.3 244.5 L879.3 243.1 L880.3 241.8 L881.3 240.4 L882.3 239.1 L883.3 237.8 L884.3 236.4 L885.3 235.1 L886.3 233.8 L887.3 232.5 L888.2 231.2 L889.2 229.8 L890.2 228.5 L891.2 227.2 L892.2 225.9 L893.2 224.6 L894.2 223.3 L895.2 222.0 L896.2 220.7 L897.2 219.4 L898.2 218.1 L899.2 216.8 L900.2 215.5 L901.2 214.2 L902.2 213.0 L903.2 211.7 L904.2 210.4 L905.2 209.1 L906.2 207.9 L907.2 206.6 L908.2 205.4 L909.2 204.1 L910.2 202.9 L911.2 201.6 L912.2 200.4 L913.2 199.1 L914.2 197.9 L915.2 196.7 L916.2 195.5 L917.2 194.2 L918.2 193.0 L919.2 191.8 L920.2 190.6 L921.2 189.4 L922.2 188.2 L923.2 187.1 L924.1 185.9 L925.1 184.7 L926.1 183.5 L927.1 182.4 L928.1 181.2 L929.1 180.1 L930.1 178.9 L931.1 177.8 L932.1 176.7 L933.1 175.5 L934.1 174.4 L935.1 173.3 L936.1 172.2 L937.1 171.1 L938.0 170.0 L939.0 169.0 L940.0 167.9 L941.0 166.9 L942.0 165.8 L943.0 164.8 L944.0 163.7 L945.0 162.7 L946.0 161.7 L947.0 160.7 L948.0 159.7 L949.0 158.7 L950.0 157.8 L951.0 156.8 L952.1 155.8 L953.1 154.9 L954.1 154.0 L955.1 153.1 L956.1 152.2 L957.2 151.3 L958.2 150.4 L959.2 149.5 L960.3 148.7 L961.3 147.9 L962.3 147.0 L963.4 146.2 L964.4 145.4 L965.5 144.7 L966.6 143.9 L967.7 143.1 L968.7 142.4 L969.8 141.7 L970.9 141.0 L972.0 140.3 L973.1 139.6 L974.3 139.0 L975.4 138.4 L976.5 137.7 L977.7 137.1 L978.8 136.6 L980.0 136.0 L981.2 135.5 L982.4 134.9 L983.6 134.4 L984.8 134.0 L986.0 133.5 L987.3 133.1 L988.5 132.6 L989.8 132.2 L991.1 131.9 L992.4 131.5 L993.7 131.2 L995.1 130.8 L996.4 130.6 L997.8 130.3 L999.2 130.0 L1000.6 129.8 L1002.0 129.6 L1003.5 129.4 L1005.0 129.3 L1006.5 129.1 L1008.0 129.0 L1009.5 128.9 L1011.1 128.9 L1012.7 128.8 L1014.3 128.8 L1015.9 128.8 L1017.6 128.9 L1019.2 128.9 L1020.9 129.0 L1022.7 129.1 L1024.4 129.2 L1026.2 129.4 L1028.0 129.5 L1029.8 129.7 L1031.7 129.9 L1033.5 130.2 L1035.4 130.4 L1037.4 130.7 L1039.3 131.0 L1041.3 131.3 L1043.3 131.7 L1045.3 132.1 L1047.4 132.4 L1049.5 132.9 L1051.6 133.3 L1053.7 133.7 L1055.8 134.2 L1058.0 134.7 L1060.2 135.2 L1062.5 135.8 L1064.7 136.3 L1067.0 136.9 L1069.3 137.5 L1071.6 138.1 L1073.9 138.7 L1076.3 139.3 L1078.7 140.0 M769.0 442.4 L767.5 441.0 L766.0 439.5 L764.5 438.1 L763.0 436.6 L761.4 435.2 L759.9 433.7 L758.5 432.3 L757.0 430.8 L755.5 429.4 L754.0 427.9 L752.6 426.5 L751.1 425.0 L749.7 423.6 L748.2 422.1 L746.8 420.6 L745.4 419.2 L744.0 417.7 L742.6 416.2 L741.2 414.8 L739.8 413.3 L738.4 411.8 L737.1 410.3 L735.7 408.9 L734.4 407.4 L733.1 405.9 L731.7 404.4 L730.4 402.9 L729.1 401.5 L727.8 400.0 L726.5 398.5 L725.3 397.0 L724.0 395.5 L722.8 394.0 L721.5 392.6 L720.3 391.1 L719.1 389.6 L717.9 388.1 L716.7 386.6 L715.5 385.1 L714.3 383.6 L713.2 382.1 L712.0 380.6 L710.9 379.1 L709.8 377.6 L708.7 376.1 L707.6 374.6 L706.5 373.1 L705.4 371.6 L704.4 370.1 L703.3 368.6 L702.3 367.1 L701.3 365.6 L700.3 364.1 L699.3 362.6 L698.3 361.1 L697.3 359.6 L696.4 358.1 L695.4 356.6 L694.5 355.1 L693.6 353.6 L692.7 352.1 L691.8 350.6 L690.9 349.1 L690.0 347.6 L689.2 346.1 L688.4 344.6 L687.5 343.1 L686.7 341.6 L685.9 340.1 L685.2 338.6 L684.4 337.1 L683.6 335.6 L682.9 334.0 L682.2 332.5 L681.5 331.0 L680.8 329.5 L680.1 328.0 L679.4 326.5 L678.8 325.0 L678.2 323.5 L677.5 322.0 L676.9 320.5 L676.3 319.0 L675.8 317.5 L675.2 316.0 L674.7 314.5 L674.1 312.9 L673.6 311.4 L673.1 309.9 L672.6 308.4 L672.1 306.9 L671.7 305.4 L671.2 303.9 L670.8 302.4 L670.4 300.9 L670.0 299.4 L669.6 297.9 L669.3 296.4 L668.9 294.9 L668.6 293.4 L668.3 291.9 L667.9 290.3 L667.7 288.8 L667.4 287.3 L667.1 285.8 L666.9 284.3 L666.6 282.8 L666.4 281.3 L666.2 279.8 L666.0 278.3 L665.9 276.8 L665.7 275.3 L665.6 273.8 L665.5 272.3 L665.4 270.8 L665.3 269.3 L665.2 267.8 L665.1 266.3 L665.1 264.8 L665.0 263.3 L665.0 261.8 L665.0 260.3 L665.0 258.9 L665.1 257.4 L665.1 255.9 L665.1 254.4 L665.2 252.9 L665.3 251.4 L665.4 249.9 L665.5 248.4 L665.6 246.9 L665.8 245.4 L665.9 244.0 L666.1 242.5 L666.3 241.0 L666.5 239.5 L666.7 238.0 L667.0 236.5 L667.2 235.1 L667.5 233.6 L667.7 232.1 L668.0 230.6 L668.3 229.2 L668.6 227.7 L669.0 226.2 L669.3 224.7 L669.6 223.3 L670.0 221.8 L670.4 220.3 L670.8 218.9 L671.2 217.4 L671.6 216.0 L672.0 214.5 L672.5 213.0 L673.0 211.6 L673.4 210.1 L673.9 208.7 L674.4 207.2 L674.9 205.8 L675.4 204.3 L676.0 202.9 L676.5 201.4 L677.0 200.0 L677.6 198.6 L678.2 197.1 L678.8 195.7 L679.4 194.3 L680.0 192.8 L680.6 191.4 L681.2 190.0 L681.9 188.6 L682.5 187.2 L683.2 185.7 L683.8 184.3 L684.5 182.9 L685.2 181.5 L685.9 180.1 L686.6 178.7 L687.3 177.3 L688.0 175.9 L688.8 174.5 L689.5 173.2 L690.2 171.8 L691.0 170.4 L691.8 169.0 L692.5 167.7 L693.3 166.3 L694.1 164.9 L694.8 163.6 L695.6 162.2 L696.4 160.9 L697.2 159.6 L698.0 158.2 L698.8 156.9 L699.6 155.6 L700.4 154.3 L701.2 153.0 L702.0 151.6 L702.8 150.4 L703.6 149.1 L704.4 147.8 L705.2 146.5 L706.1 145.2 L706.9 144.0 L707.7 142.7 L708.5 141.5 L709.3 140.2 L710.0 139.0 L710.8 137.8 L711.6 136.6 L712.4 135.4 L713.2 134.2 L713.9 133.0 L714.7 131.8 L715.4 130.7 L716.1 129.5 L716.8 128.4 L717.5 127.3 L718.2 126.1 L718.9 125.0 L719.6 124.0 L720.2 122.9 L720.8 121.8 L721.4 120.8 L722.0 119.7 L722.5 118.7 L723.1 117.7 L723.6 116.8 L724.1 115.8 L724.5 114.9 L724.9 113.9 L725.3 113.0 L725.7 112.1 L726.0 111.3 L726.3 110.4 L726.5 109.6 L726.7 108.8 L726.8 108.0 L726.9 107.3 L727.0 106.5 L727.0 105.8 L727.0 105.2 L726.9 104.5 L726.7 103.9 L726.5 103.3 L726.2 102.7 L725.9 102.2 L725.5 101.7 L725.0 101.2 L724.5 100.8 L723.9 100.3 L723.2 100.0 L722.4 99.6 L721.6 99.3 L720.7 99.0 L719.7 98.8 L718.6 98.6 L717.4 98.4 L716.2 98.2 L714.8 98.1 L713.4 98.0 L711.9 98.0 L710.3 98.0 L708.5 98.0 L706.7 98.1 L704.9 98.2 L702.9 98.3 L700.8 98.5 L698.6 98.7 L696.3 99.0 L694.0 99.2 L691.5 99.6 L689.0 99.9 L686.4 100.3 L683.6 100.7 L680.8 101.1 L677.9 101.6 L674.9 102.1 M1131.0 102.6 L1131.1 103.2 L1131.3 103.8 L1131.5 104.4 L1131.9 105.1 L1132.3 105.7 L1132.7 106.4 L1133.3 107.2 L1133.8 107.9 L1134.5 108.7 L1135.2 109.5 L1136.0 110.3 L1136.8 111.1 L1137.7 112.0 L1138.6 112.9 L1139.6 113.8 L1140.6 114.7 L1141.6 115.6 L1142.7 116.6 L1143.9 117.6 L1145.0 118.6 L1146.2 119.6 L1147.5 120.6 L1148.7 121.6 L1150.0 122.7 M860.5 441.1 L860.7 439.5 L860.9 438.0 L861.0 436.4 L861.2 434.8 L861.4 433.3 L861.5 431.7 L861.7 430.1 L861.9 428.6 L862.1 427.0 L862.3 425.4 L862.5 423.8 L862.7 422.3 L862.9 420.7 L863.1 419.1 L863.3 417.6 L863.5 416.0 L863.7 414.4 L863.9 412.8 L864.1 411.2 L864.3 409.7 L864.5 408.1 L864.7 406.5 L865.0 404.9 L865.2 403.4 L865.4 401.8 L865.6 400.2 L865.9 398.6 L866.1 397.0 L866.4 395.5 L866.6 393.9 L866.8 392.3 L867.1 390.7 L867.3 389.1 L867.6 387.6 L867.8 386.0 L868.1 384.4 L868.3 382.8 L868.6 381.2 L868.9 379.6 L869.1 378.1 L869.4 376.5 L869.7 374.9 L869.9 373.3 L870.2 371.7 L870.5 370.1 L870.8 368.6 L871.1 367.0 L871.3 365.4 L871.6 363.8 L871.9 362.2 L872.2 360.6 L872.5 359.1 L872.8 357.5 L873.1 355.9 L873.4 354.3 L873.7 352.7 L874.0 351.1 L874.3 349.5 L874.6 348.0 L874.9 346.4 L875.2 344.8 L875.5 343.2 L875.8 341.6 L876.2 340.0 L876.5 338.4 L876.8 336.9 L877.1 335.3 L877.4 333.7 L877.8 332.1 L878.1 330.5 L878.4 328.9 L878.8 327.3 L879.1 325.7 L879.4 324.2 L879.8 322.6 L880.1 321.0 L880.4 319.4 L880.8 317.8 L881.1 316.2 L881.5 314.6 L881.8 313.1 L882.2 311.5 L882.5 309.9 L882.8 308.3 L883.2 306.7 L883.6 305.1 L883.9 303.5 L884.3 301.9 L884.6 300.4 L885.0 298.8 L885.3 297.2 L885.7 295.6 L886.1 294.0 L886.4 292.4 L886.8 290.8 L887.1 289.3 L887.5 287.7 L887.9 286.1 L888.2 284.5 L888.6 282.9 L889.0 281.3 L889.3 279.7 L889.7 278.2 L890.1 276.6 L890.5 275.0 L890.8 273.4 L891.2 271.8 L891.6 270.2 L892.0 268.7 L892.3 267.1 L892.7 265.5 L893.1 263.9 L893.5 262.3 L893.9 260.7 L894.2 259.2 L894.6 257.6 L895.0 256.0 L895.4 254.4 L895.8 252.8 L896.1 251.2 L896.5 249.7 L896.9 248.1 L897.3 246.5 L897.7 244.9 L898.1 243.3 L898.4 241.8 L898.8 240.2 L899.2 238.6 L899.6 237.0 L900.0 235.4 L900.4 233.9 L900.8 232.3 L901.1 230.7 L901.5 229.1 L901.9 227.6 L902.3 226.0 L902.7 224.4 L903.1 222.8 L903.5 221.3 L903.8 219.7 L904.2 218.1 L904.6 216.5 L905.0 215.0 L905.4 213.4 L905.8 211.8 L906.1 210.3 L906.5 208.7 L906.9 207.1 L907.3 205.5 L907.7 204.0 L908.1 202.4 L908.4 200.8 L908.8 199.3 L909.2 197.7 L909.6 196.2 L910.0 194.6 L910.3 193.0 L910.7 191.5 L911.1 189.9 L911.5 188.3 L911.9 186.8 L912.2 185.2 L912.6 183.7 L913.0 182.1 L913.4 180.6 L913.7 179.0 L914.1 177.4 L914.5 175.9 L914.9 174.3 L915.2 172.8 L915.6 171.2 L916.0 169.7 L916.3 168.1 L916.7 166.6 L917.1 165.1 L917.4 163.5 L917.8 162.0 L918.2 160.4 L918.5 158.9 L918.9 157.4 L919.3 155.8 L919.6 154.3 L920.0 152.8 L920.3 151.2 L920.7 149.7 L921.0 148.2 L921.4 146.7 L921.8 145.2 L922.1 143.6 L922.5 142.1 L922.8 140.6 L923.2 139.1 L923.5 137.6 L923.9 136.1 L924.2 134.6 L924.6 133.1 L924.9 131.6 L925.2 130.1 L925.6 128.6 L925.9 127.2 L926.3 125.7 L926.6 124.2 L927.0 122.7 L927.3 121.3 L927.6 119.8 L928.0 118.4 L928.3 116.9 L928.7 115.5 L929.0 114.0 L929.4 112.6 L929.7 111.2 L930.0 109.7 L930.4 108.3 L930.7 106.9 L931.1 105.5 L931.4 104.1 L931.8 102.8 L932.1 101.4 L932.5 100.0 L932.8 98.7 L933.2 97.4 L933.5 96.0 L933.9 94.7 L934.3 93.4 L934.6 92.1 L935.0 90.9 L935.4 89.6 L935.8 88.4 L936.2 87.1 L936.6 85.9 L937.0 84.7 L937.5 83.6 L937.9 82.4 L938.4 81.3 L938.8 80.2 L939.3 79.2 L939.8 78.1 L940.4 77.1 L940.9 76.2 L941.5 75.2 L942.1 74.3 L942.8 73.5 L943.4 72.7 L944.1 71.9 L944.9 71.2 L945.7 70.5 L946.6 69.8 L947.5 69.3 L948.4 68.7 L949.5 68.3 L950.6 67.9 L951.7 67.5 L953.0 67.2 L954.3 67.0 L955.7 66.9 L957.2 66.8 L958.8 66.7 L960.5 66.8 L962.2 66.9 L964.1 67.1 L966.1 67.3 L968.2 67.6 L970.4 68.0 L972.6 68.4 L975.0 68.9 L977.5 69.4 L980.1 70.0 L982.7 70.7 L985.5 71.3 L988.3 72.1 L991.2 72.9 L994.3 73.7 L997.3 74.6 L1000.5 75.5 L1003.7 76.4 L1007.0 77.4 L1010.4 78.4 L1013.8 79.5 L1017.3 80.5 L1020.8 81.6 L1024.4 82.7 L1028.0 83.9 L1031.7 85.1 L1035.4 86.2 L1039.1 87.5 L1042.9 88.7 L1046.7 89.9 L1050.6 91.2 L1054.4 92.5 L1058.3 93.8 L1062.2 95.1 L1066.2 96.4 L1070.1 97.7 L1074.1 99.0 L1078.1 100.4 L1082.1 101.8 L1086.1 103.1 L1090.2 104.5 L1094.2 105.9 L1098.3 107.3 L1102.3 108.7 L1106.4 110.1 L1110.5 111.5 L1114.5 113.0 L1118.6 114.4 L1122.7 115.8 L1126.7 117.3 L1130.8 118.7 L1134.9 120.2 L1139.0 121.7 L1143.0 123.1 L1147.1 124.6 L1151.1 126.1 L1155.2 127.5 L1159.2 129.0 L1163.3 130.5 L1167.3 132.0 L1171.3 133.5 L1175.3 135.0 L1179.3 136.5 L1183.3 138.0 M723.4 443.7 L721.4 442.6 L719.4 441.5 L717.4 440.5 L715.4 439.4 L713.4 438.3 L711.4 437.2 L709.4 436.1 L707.4 434.9 L705.4 433.8 L703.4 432.7 L701.4 431.6 L699.4 430.4 L697.4 429.3 L695.4 428.2 L693.5 427.0 L691.5 425.9 L689.5 424.7 L687.6 423.5 L685.6 422.4 L683.7 421.2 L681.7 420.0 L679.8 418.9 L677.9 417.7 L676.0 416.5 L674.0 415.3 L672.1 414.1 L670.2 412.9 L668.3 411.7 L666.4 410.5 L664.6 409.3 L662.7 408.1 L660.8 406.9 L659.0 405.7 L657.1 404.5 L655.3 403.2 L653.5 402.0 L651.6 400.8 L649.8 399.6 L648.0 398.3 L646.2 397.1 L644.4 395.9 L642.7 394.6 L640.9 393.4 L639.2 392.1 L637.4 390.9 L635.7 389.6 L634.0 388.4 L632.3 387.1 L630.6 385.9 L628.9 384.6 L627.2 383.4 L625.5 382.1 L623.9 380.8 L622.2 379.6 L620.6 378.3 L619.0 377.0 L617.4 375.8 L615.8 374.5 L614.2 373.2 L612.6 371.9 L611.1 370.7 L609.5 369.4 L608.0 368.1 L606.5 366.8 L605.0 365.5 L603.5 364.2 L602.0 363.0 L600.6 361.7 L599.1 360.4 L597.7 359.1 L596.3 357.8 L594.9 356.5 L593.5 355.2 L592.1 353.9 L590.7 352.6 L589.4 351.3 L588.1 350.0 L586.7 348.7 L585.4 347.4 L584.2 346.2 L582.9 344.9 L581.6 343.6 L580.4 342.3 L579.2 341.0 L578.0 339.6 L576.8 338.3 L575.6 337.0 L574.4 335.7 L573.3 334.4 L572.2 333.1 L571.0 331.8 L569.9 330.5 L568.9 329.2 L567.8 327.9 L566.7 326.6 L565.7 325.3 L564.7 324.0 L563.7 322.7 L562.7 321.4 L561.8 320.1 L560.8 318.8 L559.9 317.5 L559.0 316.2 L558.1 314.9 L557.2 313.6 L556.3 312.3 L555.5 311.0 L554.6 309.6 L553.8 308.3 L553.0 307.0 L552.2 305.7 L551.5 304.4 L550.7 303.1 L550.0 301.8 L549.3 300.5 L548.6 299.2 L547.9 297.9 L547.3 296.6 L546.6 295.3 L546.0 294.0 L545.4 292.7 L544.8 291.4 L544.2 290.1 L543.6 288.8 L543.1 287.5 L542.6 286.3 L542.1 285.0 L541.6 283.7 L541.1 282.4 L540.6 281.1 L540.2 279.8 L539.8 278.5 L539.4 277.2 L539.0 275.9 L538.6 274.7 L538.3 273.4 L537.9 272.1 L537.6 270.8 L537.3 269.5 L537.0 268.3 L536.7 267.0 L536.5 265.7 L536.2 264.4 L536.0 263.2 L535.8 261.9 L535.6 260.6 L535.4 259.4 L535.2 258.1 L535.1 256.8 L535.0 255.6 L534.8 254.3 L534.7 253.1 L534.6 251.8 L534.6 250.6 L534.5 249.3 L534.5 248.1 L534.4 246.8 L534.4 245.6 L534.4 244.4 L534.4 243.1 L534.5 241.9 L534.5 240.7 L534.6 239.4 L534.6 238.2 L534.7 237.0 L534.8 235.8 L534.9 234.5 L535.0 233.3 L535.2 232.1 L535.3 230.9 L535.4 229.7 L535.6 228.5 L535.8 227.3 L536.0 226.1 L536.2 224.9 L536.4 223.7 L536.6 222.6 L536.8 221.4 L537.1 220.2 L537.3 219.0 L537.6 217.9 L537.9 216.7 L538.2 215.6 L538.4 214.4 L538.7 213.3 L539.0 212.1 L539.4 211.0 L539.7 209.8 L540.0 208.7 L540.3 207.6 L540.7 206.5 L541.0 205.3 L541.4 204.2 L541.7 203.1 L542.1 202.0 L542.4 200.9 L542.8 199.9 L543.2 198.8 L543.6 197.7 L543.9 196.6 L544.3 195.6 L544.7 194.5 L545.1 193.5 L545.5 192.4 L545.9 191.4 L546.2 190.4 L546.6 189.3 L547.0 188.3 L547.4 187.3 L547.8 186.3 L548.1 185.3 L548.5 184.3 L548.9 183.4 L549.3 182.4 L549.6 181.4 L550.0 180.5 L550.3 179.5 L550.7 178.6 L551.0 177.7 L551.3 176.8 L551.6 175.9 L551.9 175.0 L552.2 174.1 L552.5 173.2 L552.8 172.3 L553.1 171.5 L553.3 170.6 L553.6 169.8 L553.8 169.0 L554.0 168.1 L554.2 167.3 L554.3 166.6 L554.5 165.8 L554.6 165.0 L554.8 164.3 L554.9 163.5 L554.9 162.8 L555.0 162.1 L555.0 161.4 L555.0 160.7 L555.0 160.0 L555.0 159.3 L554.9 158.7 L554.8 158.0 L554.7 157.4 L554.6 156.8 L554.4 156.2 L554.2 155.6 L554.0 155.1 L553.7 154.5 L553.4 154.0 L553.1 153.5 L552.7 153.0 L552.3 152.5 L551.8 152.0 L551.4 151.6 L550.9 151.1 L550.3 150.7 L549.7 150.3 L549.1 149.9 L548.4 149.6 L547.7 149.2 M1256.6 148.9 L1254.3 148.6 L1251.9 148.3 L1249.6 148.0 L1247.4 147.7 L1245.2 147.5 L1243.0 147.3 L1240.9 147.1 L1238.9 146.9 L1236.9 146.7 L1234.9 146.6 L1233.0 146.4 L1231.1 146.3 L1229.2 146.2 L1227.4 146.2 L1225.7 146.1 L1224.0 146.1 L1222.3 146.1 L1220.7 146.1 L1219.2 146.1 L1217.6 146.1 L1216.2 146.2 L1214.7 146.3 L1213.3 146.4 L1212.0 146.5 L1210.7 146.6 L1209.4 146.8 L1208.2 147.0 L1207.0 147.2 L1205.8 147.4 L1204.7 147.6 L1203.7 147.8 L1202.6 148.1 L1201.7 148.4 L1200.7 148.7 M929.8 442.6 L931.2 441.7 L932.6 440.7 L934.0 439.7 L935.4 438.7 L936.8 437.7 L938.2 436.7 L939.7 435.7 L941.1 434.6 L942.5 433.6 L943.9 432.6 L945.3 431.6 L946.7 430.5 L948.1 429.5 L949.5 428.4 L950.9 427.3 L952.3 426.3 L953.7 425.2 L955.1 424.1 L956.5 423.1 L957.9 422.0 L959.3 420.9 L960.7 419.8 L962.1 418.7 L963.5 417.6 L964.9 416.5 L966.3 415.4 L967.7 414.3 L969.1 413.1 L970.5 412.0 L971.9 410.9 L973.2 409.8 L974.6 408.6 L976.0 407.5 L977.4 406.3 L978.8 405.2 L980.1 404.1 L981.5 402.9 L982.9 401.7 L984.3 400.6 L985.6 399.4 L987.0 398.3 L988.3 397.1 L989.7 395.9 L991.1 394.7 L992.4 393.6 L993.8 392.4 L995.1 391.2 L996.4 390.0 L997.8 388.8 L999.1 387.6 L1000.5 386.5 L1001.8 385.3 L1003.1 384.1 L1004.4 382.9 L1005.7 381.7 L1007.1 380.5 L1008.4 379.2 L1009.7 378.0 L1011.0 376.8 L1012.3 375.6 L1013.6 374.4 L1014.8 373.2 L1016.1 372.0 L1017.4 370.8 L1018.7 369.5 L1020.0 368.3 L1021.2 367.1 L1022.5 365.9 L1023.7 364.6 L1025.0 363.4 L1026.2 362.2 L1027.5 360.9 L1028.7 359.7 L1029.9 358.5 L1031.2 357.2 L1032.4 356.0 L1033.6 354.8 L1034.8 353.5 L1036.0 352.3 L1037.2 351.1 L1038.4 349.8 L1039.6 348.6 L1040.7 347.3 L1041.9 346.1 L1043.1 344.8 L1044.2 343.6 L1045.4 342.3 L1046.5 341.1 L1047.7 339.9 L1048.8 338.6 L1049.9 337.4 L1051.1 336.1 L1052.2 334.9 L1053.3 333.6 L1054.4 332.4 L1055.5 331.1 L1056.6 329.9 L1057.6 328.6 L1058.7 327.4 L1059.8 326.1 L1060.8 324.8 L1061.9 323.6 L1062.9 322.3 L1064.0 321.1 L1065.0 319.8 L1066.0 318.6 L1067.0 317.3 L1068.0 316.1 L1069.0 314.8 L1070.0 313.6 L1071.0 312.3 L1072.0 311.1 L1073.0 309.8 L1073.9 308.6 L1074.9 307.3 L1075.8 306.1 L1076.8 304.8 L1077.7 303.6 L1078.6 302.3 L1079.5 301.1 L1080.4 299.8 L1081.3 298.6 L1082.2 297.3 L1083.1 296.1 L1084.0 294.8 L1084.8 293.6 L1085.7 292.4 L1086.6 291.1 L1087.4 289.9 L1088.2 288.6 L1089.1 287.4 L1089.9 286.2 L1090.7 284.9 L1091.5 283.7 L1092.3 282.4 L1093.1 281.2 L1093.9 280.0 L1094.6 278.7 L1095.4 277.5 L1096.1 276.3 L1096.9 275.1 L1097.6 273.8 L1098.4 272.6 L1099.1 271.4 L1099.8 270.2 L1100.5 269.0 L1101.2 267.7 L1101.9 266.5 L1102.6 265.3 L1103.2 264.1 L1103.9 262.9 L1104.6 261.7 L1105.2 260.5 L1105.9 259.3 L1106.5 258.1 L1107.1 256.9 L1107.8 255.7 L1108.4 254.5 L1109.0 253.3 L1109.6 252.1 L1110.2 250.9 L1110.7 249.7 L1111.3 248.5 L1111.9 247.4 L1112.5 246.2 L1113.0 245.0 L1113.6 243.8 L1114.1 242.7 L1114.6 241.5 L1115.2 240.3 L1115.7 239.2 L1116.2 238.0 L1116.7 236.9 L1117.2 235.7 L1117.7 234.6 L1118.2 233.4 L1118.7 232.3 L1119.2 231.2 L1119.6 230.0 L1120.1 228.9 L1120.6 227.8 L1121.0 226.7 L1121.5 225.6 L1121.9 224.4 L1122.4 223.3 L1122.8 222.2 L1123.2 221.1 L1123.6 220.0 L1124.1 219.0 L1124.5 217.9 L1124.9 216.8 L1125.3 215.7 L1125.7 214.7 L1126.1 213.6 L1126.5 212.5 L1126.9 211.5 L1127.3 210.4 L1127.7 209.4 L1128.1 208.3 L1128.5 207.3 L1128.9 206.3 L1129.3 205.3 L1129.6 204.3 L1130.0 203.2 L1130.4 202.2 L1130.8 201.3 L1131.2 200.3 L1131.5 199.3 L1131.9 198.3 L1132.3 197.3 L1132.7 196.4 L1133.0 195.4 L1133.4 194.5 L1133.8 193.5 L1134.2 192.6 L1134.6 191.7 L1135.0 190.8 L1135.4 189.9 L1135.8 189.0 L1136.2 188.1 L1136.6 187.2 L1137.0 186.3 L1137.4 185.5 L1137.8 184.6 L1138.2 183.8 L1138.7 182.9 L1139.1 182.1 L1139.5 181.3 L1140.0 180.5 L1140.4 179.7 L1140.9 178.9 L1141.4 178.1 L1141.8 177.3 L1142.3 176.6 L1142.8 175.8 L1143.3 175.1 L1143.9 174.4 L1144.4 173.7 L1144.9 173.0 L1145.5 172.3 L1146.1 171.6 L1146.6 170.9 L1147.2 170.3 L1147.8 169.6 L1148.5 169.0 L1149.1 168.4 L1149.7 167.8 L1150.4 167.2 L1151.1 166.6 L1151.8 166.0 L1152.5 165.5 L1153.2 165.0 L1154.0 164.4 L1154.8 163.9 L1155.6 163.4 L1156.4 163.0 L1157.2 162.5 L1158.1 162.0 L1159.0 161.6 L1159.9 161.2 L1160.8 160.8 L1161.7 160.4 L1162.7 160.0 L1163.7 159.6 L1164.7 159.3 M715.2 443.9 L715.5 442.8 L715.9 441.7 L716.2 440.6 L716.6 439.5 L716.9 438.3 L717.3 437.2 L717.7 436.1 L718.0 434.9 L718.4 433.8 L718.8 432.7 L719.1 431.5 L719.5 430.3 L719.9 429.2 L720.3 428.0 L720.7 426.9 L721.1 425.7 L721.5 424.5 L721.9 423.3 L722.3 422.1 L722.7 420.9 L723.1 419.8 L723.5 418.6 L724.0 417.4 L724.4 416.2 L724.8 414.9 L725.3 413.7 L725.7 412.5 L726.2 411.3 L726.7 410.1 L727.1 408.9 L727.6 407.6 L728.1 406.4 L728.6 405.2 L729.1 403.9 L729.6 402.7 L730.1 401.4 L730.6 400.2 L731.1 398.9 L731.6 397.7 L732.2 396.4 L732.7 395.2 L733.2 393.9 L733.8 392.7 L734.4 391.4 L734.9 390.1 L735.5 388.9 L736.1 387.6 L736.7 386.3 L737.3 385.1 L737.9 383.8 L738.5 382.5 L739.1 381.2 L739.7 380.0 L740.4 378.7 L741.0 377.4 L741.6 376.1 L742.3 374.8 L743.0 373.5 L743.6 372.2 L744.3 370.9 L745.0 369.7 L745.7 368.4 L746.4 367.1 L747.1 365.8 L747.8 364.5 L748.5 363.2 L749.2 361.9 L749.9 360.6 L750.7 359.3 L751.4 358.0 L752.2 356.7 L752.9 355.3 L753.7 354.0 L754.5 352.7 L755.3 351.4 L756.1 350.1 L756.9 348.8 L757.7 347.5 L758.5 346.2 L759.3 344.9 L760.1 343.6 L760.9 342.2 L761.8 340.9 L762.6 339.6 L763.5 338.3 L764.3 337.0 L765.2 335.7 L766.1 334.3 L767.0 333.0 L767.9 331.7 L768.7 330.4 L769.6 329.1 L770.6 327.8 L771.5 326.4 L772.4 325.1 L773.3 323.8 L774.2 322.5 L775.2 321.2 L776.1 319.8 L777.1 318.5 L778.0 317.2 L779.0 315.9 L780.0 314.6 L780.9 313.3 L781.9 311.9 L782.9 310.6 L783.9 309.3 L784.9 308.0 L785.9 306.7 L786.9 305.3 L787.9 304.0 L789.0 302.7 L790.0 301.4 L791.0 300.1 L792.1 298.8 L793.1 297.5 L794.2 296.1 L795.2 294.8 L796.3 293.5 L797.3 292.2 L798.4 290.9 L799.5 289.6 L800.6 288.3 L801.7 287.0 L802.8 285.7 L803.8 284.4 L805.0 283.1 L806.1 281.7 L807.2 280.4 L808.3 279.1 L809.4 277.8 L810.5 276.5 L811.6 275.2 L812.8 273.9 L813.9 272.7 L815.1 271.4 L816.2 270.1 L817.3 268.8 L818.5 267.5 L819.7 266.2 L820.8 264.9 L822.0 263.6 L823.1 262.3 L824.3 261.1 L825.5 259.8 L826.7 258.5 L827.8 257.2 L829.0 255.9 L830.2 254.7 L831.4 253.4 L832.6 252.1 L833.8 250.9 L835.0 249.6 L836.2 248.3 L837.4 247.1 L838.6 245.8 L839.8 244.6 L841.0 243.3 L842.2 242.1 L843.4 240.8 L844.7 239.6 L845.9 238.3 L847.1 237.1 L848.3 235.9 L849.6 234.6 L850.8 233.4 L852.0 232.2 L853.2 230.9 L854.5 229.7 L855.7 228.5 L856.9 227.3 L858.2 226.1 L859.4 224.9 L860.7 223.7 L861.9 222.5 L863.1 221.3 L864.4 220.1 L865.6 218.9 L866.9 217.7 L868.1 216.5 L869.4 215.3 L870.6 214.2 L871.9 213.0 L873.1 211.8 L874.4 210.7 L875.6 209.5 L876.9 208.4 L878.1 207.2 L879.4 206.1 L880.6 204.9 L881.9 203.8 L883.2 202.7 L884.4 201.6 L885.7 200.4 L886.9 199.3 L888.2 198.2 L889.4 197.1 L890.7 196.0 L891.9 195.0 L893.2 193.9 L894.4 192.8 L895.7 191.7 L897.0 190.7 L898.2 189.6 L899.5 188.6 L900.7 187.5 L902.0 186.5 L903.2 185.5 L904.5 184.5 L905.7 183.5 L907.0 182.5 L908.3 181.5 L909.5 180.5 L910.8 179.5 L912.0 178.5 L913.3 177.6 L914.5 176.6 L915.8 175.7 L917.1 174.8 L918.3 173.8 L919.6 172.9 L920.8 172.0 L922.1 171.1 L923.3 170.2 L924.6 169.4 L925.9 168.5 L927.1 167.7 L928.4 166.8 L929.7 166.0 L930.9 165.2 L932.2 164.4 L933.5 163.6 L934.7 162.8 L936.0 162.0 L937.3 161.3 L938.6 160.5 L939.8 159.8 L941.1 159.1 L942.4 158.4 L943.7 157.7 L945.0 157.0 L946.3 156.3 L947.6 155.7 L948.9 155.1 L950.2 154.4 L951.5 153.8 L952.8 153.2 L954.1 152.7 L955.4 152.1 L956.8 151.6 L958.1 151.0 L959.4 150.5 L960.8 150.0 L962.1 149.6 L963.5 149.1 L964.9 148.7 L966.2 148.2 L967.6 147.8 L969.0 147.4 L970.4 147.1 L971.8 146.7 L973.2 146.4 L974.7 146.0 L976.1 145.7 L977.5 145.5 L979.0 145.2 L980.5 145.0 L981.9 144.7 L983.4 144.5 L984.9 144.3 L986.4 144.2 L987.9 144.0 L989.5 143.9 L991.0 143.8 L992.6 143.7 L994.2 143.6 L995.8 143.6 L997.4 143.5 L999.0 143.5 L1000.6 143.5 L1002.2 143.6 L1003.9 143.6 L1005.6 143.7 L1007.3 143.8 L1009.0 143.9 L1010.7 144.0 L1012.4 144.2 L1014.2 144.3 L1015.9 144.5 L1017.7 144.7 L1019.5 144.9 L1021.3 145.2 L1023.2 145.4 L1025.0 145.7 L1026.9 146.0 L1028.8 146.3 L1030.6 146.7 L1032.6 147.0 L1034.5 147.4 L1036.4 147.8 L1038.4 148.2 L1040.4 148.6 L1042.4 149.0 L1044.4 149.5 L1046.4 150.0 L1048.5 150.5 L1050.5 151.0 L1052.6 151.5 L1054.7 152.0 L1056.8 152.6 L1058.9 153.2 L1061.0 153.8 L1063.2 154.4 L1065.3 155.0 L1067.5 155.6 L1069.7 156.3 L1071.9 156.9 L1074.1 157.6 L1076.4 158.3 L1078.6 159.0 L1080.9 159.7 L1083.1 160.4 L1085.4 161.2 L1087.7 161.9 L1090.0 162.7 M1046.1 443.7 L1047.7 442.2 L1049.3 440.8 L1050.8 439.3 L1052.4 437.8 L1053.9 436.3 L1055.4 434.9 L1057.0 433.4 L1058.5 431.9 L1060.0 430.4 L1061.5 428.9 L1063.0 427.5 L1064.4 426.0 L1065.9 424.5 L1067.4 423.0 L1068.8 421.5 L1070.2 420.0 L1071.7 418.5 L1073.1 417.0 L1074.5 415.5 L1075.9 414.0 L1077.3 412.5 L1078.6 411.0 L1080.0 409.5 L1081.3 408.0 L1082.7 406.5 L1084.0 405.0 L1085.3 403.5 L1086.6 402.0 L1087.9 400.5 L1089.2 399.0 L1090.5 397.5 L1091.8 396.0 L1093.0 394.5 L1094.2 393.0 L1095.5 391.5 L1096.7 390.0 L1097.9 388.5 L1099.1 386.9 L1100.2 385.4 L1101.4 383.9 L1102.5 382.4 L1103.7 380.9 L1104.8 379.4 L1105.9 377.9 L1107.0 376.3 L1108.1 374.8 L1109.1 373.3 L1110.2 371.8 L1111.2 370.3 L1112.3 368.7 L1113.3 367.2 L1114.3 365.7 L1115.3 364.2 L1116.2 362.7 L1117.2 361.1 L1118.1 359.6 L1119.1 358.1 L1120.0 356.6 L1120.9 355.1 L1121.8 353.5 L1122.6 352.0 L1123.5 350.5 L1124.3 349.0 L1125.1 347.4 L1126.0 345.9 L1126.8 344.4 L1127.5 342.9 L1128.3 341.3 L1129.0 339.8 L1129.8 338.3 L1130.5 336.8 L1131.2 335.2 L1131.9 333.7 L1132.6 332.2 L1133.2 330.7 L1133.9 329.1 L1134.5 327.6 L1135.1 326.1 L1135.7 324.6 L1136.3 323.0 L1136.9 321.5 L1137.4 320.0 L1138.0 318.5 L1138.5 316.9 L1139.0 315.4 L1139.5 313.9 L1139.9 312.3 L1140.4 310.8 L1140.8 309.3 L1141.2 307.8 L1141.7 306.2 L1142.0 304.7 L1142.4 303.2 L1142.8 301.7 L1143.1 300.1 L1143.4 298.6 L1143.8 297.1 L1144.1 295.6 L1144.3 294.0 L1144.6 292.5 L1144.8 291.0 L1145.1 289.5 L1145.3 287.9 L1145.5 286.4 L1145.7 284.9 L1145.8 283.4 L1146.0 281.9 L1146.1 280.3 L1146.2 278.8 L1146.3 277.3 L1146.4 275.8 L1146.5 274.3 L1146.5 272.7 L1146.6 271.2 L1146.6 269.7 L1146.6 268.2 L1146.6 266.7 L1146.6 265.1 L1146.5 263.6 L1146.5 262.1 L1146.4 260.6 L1146.3 259.1 L1146.2 257.6 L1146.1 256.1 L1145.9 254.5 L1145.8 253.0 L1145.6 251.5 L1145.4 250.0 L1145.2 248.5 L1145.0 247.0 L1144.8 245.5 L1144.5 244.0 L1144.2 242.5 L1144.0 241.0 L1143.7 239.4 L1143.4 237.9 L1143.0 236.4 L1142.7 234.9 L1142.3 233.4 L1142.0 231.9 L1141.6 230.4 L1141.2 228.9 L1140.8 227.4 L1140.3 225.9 L1139.9 224.4 L1139.4 223.0 L1139.0 221.5 L1138.5 220.0 L1138.0 218.5 L1137.5 217.0 L1137.0 215.5 L1136.4 214.0 L1135.9 212.5 L1135.3 211.0 L1134.7 209.6 L1134.1 208.1 L1133.5 206.6 L1132.9 205.1 L1132.2 203.7 L1131.6 202.2 L1130.9 200.7 L1130.3 199.2 L1129.6 197.8 L1128.9 196.3 L1128.2 194.8 L1127.5 193.4 L1126.7 191.9 L1126.0 190.5 L1125.2 189.0 L1124.5 187.6 L1123.7 186.1 L1122.9 184.7 L1122.1 183.2 L1121.3 181.8 L1120.5 180.3 L1119.6 178.9 L1118.8 177.5 L1117.9 176.0 L1117.1 174.6 L1116.2 173.2 L1115.3 171.8 L1114.5 170.4 L1113.6 168.9 L1112.7 167.5 L1111.8 166.1 L1110.8 164.7 L1109.9 163.3 L1109.0 161.9 L1108.1 160.5 L1107.1 159.1 L1106.2 157.8 L1105.2 156.4 L1104.3 155.0 L1103.3 153.6 L1102.3 152.3 L1101.4 150.9 L1100.4 149.6 L1099.4 148.2 L1098.5 146.9 L1097.5 145.6 L1096.5 144.2 L1095.5 142.9 L1094.6 141.6 L1093.6 140.3 L1092.6 139.0 L1091.6 137.7 L1090.7 136.4 L1089.7 135.1 L1088.7 133.9 L1087.8 132.6 L1086.8 131.3 L1085.9 130.1 L1084.9 128.9 L1084.0 127.6 L1083.1 126.4 L1082.2 125.2 L1081.3 124.0 L1080.4 122.9 L1079.5 121.7 L1078.7 120.5 L1077.8 119.4 L1077.0 118.3 L1076.2 117.2 L1075.4 116.1 L1074.6 115.0 L1073.9 113.9 L1073.2 112.9 L1072.5 111.8 L1071.8 110.8 L1071.2 109.8 L1070.5 108.8 L1070.0 107.8 L1069.4 106.9 L1068.9 106.0 L1068.5 105.1 L1068.0 104.2 L1067.7 103.4 L1067.3 102.5 L1067.1 101.7 L1066.8 100.9 L1066.6 100.2 L1066.5 99.5 L1066.5 98.8 L1066.5 98.1 L1066.5 97.4 L1066.6 96.8 L1066.8 96.3 L1067.1 95.7 L1067.4 95.2 L1067.9 94.7 L1068.4 94.3 L1069.0 93.9 L1069.6 93.5 L1070.4 93.1 L1071.2 92.8 L1072.2 92.6 L1073.2 92.4 L1074.3 92.2 L1075.6 92.0 L1076.9 91.9 L1078.3 91.8 L1079.9 91.8 L1081.5 91.8 L1083.2 91.9 L1085.1 91.9 L1087.1 92.1 L1089.1 92.2 L1091.3 92.4 L1093.6 92.7 L1096.0 92.9 L1098.4 93.3 L1101.0 93.6 L1103.7 94.0 M986.9 442.7 L987.5 441.1 L988.1 439.4 L988.7 437.8 L989.2 436.2 L989.8 434.6 L990.3 433.0 L990.9 431.3 L991.4 429.7 L991.9 428.1 L992.5 426.5 L993.0 424.9 L993.5 423.3 L994.0 421.6 L994.5 420.0 L995.0 418.4 L995.5 416.8 L995.9 415.2 L996.4 413.5 L996.9 411.9 L997.3 410.3 L997.8 408.7 L998.2 407.1 L998.6 405.5 L999.1 403.8 L999.5 402.2 L999.9 400.6 L1000.3 399.0 L1000.7 397.4 L1001.1 395.7 L1001.5 394.1 L1001.8 392.5 L1002.2 390.9 L1002.6 389.3 L1002.9 387.7 L1003.2 386.0 L1003.6 384.4 L1003.9 382.8 L1004.2 381.2 L1004.5 379.6 L1004.8 377.9 L1005.1 376.3 L1005.4 374.7 L1005.7 373.1 L1006.0 371.5 L1006.2 369.9 L1006.5 368.2 L1006.8 366.6 L1007.0 365.0 L1007.2 363.4 L1007.5 361.8 L1007.7 360.1 L1007.9 358.5 L1008.1 356.9 L1008.3 355.3 L1008.5 353.7 L1008.6 352.1 L1008.8 350.4 L1009.0 348.8 L1009.1 347.2 L1009.3 345.6 L1009.4 344.0 L1009.5 342.3 L1009.7 340.7 L1009.8 339.1 L1009.9 337.5 L1010.0 335.9 L1010.1 334.3 L1010.1 332.6 L1010.2 331.0 L1010.3 329.4 L1010.3 327.8 L1010.4 326.2 L1010.4 324.5 L1010.5 322.9 L1010.5 321.3 L1010.5 319.7 L1010.5 318.1 L1010.5 316.4 L1010.5 314.8 L1010.5 313.2 L1010.5 311.6 L1010.4 310.0 L1010.4 308.4 L1010.3 306.7 L1010.3 305.1 L1010.2 303.5 L1010.1 301.9 L1010.0 300.3 L1010.0 298.6 L1009.9 297.0 L1009.8 295.4 L1009.6 293.8 L1009.5 292.2 L1009.4 290.6 L1009.2 288.9 L1009.1 287.3 L1008.9 285.7 L1008.8 284.1 L1008.6 282.5 L1008.4 280.8 L1008.2 279.2 L1008.0 277.6 L1007.8 276.0 L1007.6 274.4 L1007.4 272.8 L1007.2 271.1 L1006.9 269.5 L1006.7 267.9 L1006.5 266.3 L1006.2 264.7 L1005.9 263.0 L1005.7 261.4 L1005.4 259.8 L1005.1 258.2 L1004.8 256.6 L1004.5 255.0 L1004.2 253.3 L1003.8 251.7 L1003.5 250.1 L1003.2 248.5 L1002.8 246.9 L1002.5 245.2 L1002.1 243.6 L1001.8 242.0 L1001.4 240.4 L1001.0 238.8 L1000.6 237.2 L1000.2 235.5 L999.8 233.9 L999.4 232.3 L999.0 230.7 L998.6 229.1 L998.1 227.4 L997.7 225.8 L997.2 224.2 L996.8 222.6 L996.3 221.0 L995.8 219.3 L995.4 217.7 L994.9 216.1 L994.4 214.5 L993.9 212.9 L993.4 211.3 L992.9 209.6 L992.4 208.0 L991.8 206.4 L991.3 204.8 L990.8 203.2 L990.2 201.5 L989.7 199.9 L989.1 198.3 L988.6 196.7 L988.0 195.1 L987.4 193.5 L986.8 191.8 L986.2 190.2 L985.6 188.6 L985.0 187.0 L984.4 185.4 L983.8 183.7 L983.2 182.1 L982.6 180.5 L981.9 178.9 L981.3 177.3 L980.6 175.7 L980.0 174.0 L979.3 172.4 L978.7 170.8 L978.0 169.2 L977.3 167.6 L976.6 165.9 L976.0 164.3 L975.3 162.7 L974.6 161.1 L973.9 159.5 L973.2 157.9 L972.4 156.2 L971.7 154.6 L971.0 153.0 M618.6 443.8 L617.3 442.3 L615.9 440.7 L614.6 439.2 L613.3 437.6 L612.0 436.1 L610.8 434.5 L609.5 432.9 L608.3 431.4 L607.1 429.8 L605.9 428.3 L604.7 426.7 L603.6 425.1 L602.5 423.6 L601.4 422.0 L600.3 420.4 L599.2 418.9 L598.2 417.3 L597.1 415.8 L596.1 414.2 L595.2 412.6 L594.2 411.1 L593.3 409.5 L592.4 407.9 L591.5 406.3 L590.6 404.8 L589.7 403.2 L588.9 401.6 L588.1 400.1 L587.3 398.5 L586.6 396.9 L585.8 395.4 L585.1 393.8 L584.4 392.2 L583.7 390.6 L583.1 389.1 L582.5 387.5 L581.8 385.9 L581.3 384.3 L580.7 382.8 L580.2 381.2 L579.6 379.6 L579.2 378.0 L578.7 376.5 L578.2 374.9 L577.8 373.3 L577.4 371.7 L577.0 370.2 L576.7 368.6 L576.4 367.0 L576.0 365.4 L575.8 363.9 L575.5 362.3 L575.3 360.7 L575.0 359.1 L574.9 357.5 L574.7 356.0 L574.5 354.4 L574.4 352.8 L574.3 351.2 L574.2 349.7 L574.2 348.1 L574.2 346.5 L574.2 344.9 L574.2 343.3 L574.2 341.8 L574.3 340.2 L574.4 338.6 L574.5 337.0 L574.6 335.4 L574.8 333.9 L575.0 332.3 L575.2 330.7 L575.4 329.1 L575.7 327.5 L575.9 326.0 L576.2 324.4 L576.6 322.8 L576.9 321.2 L577.3 319.6 L577.7 318.1 L578.1 316.5 L578.5 314.9 L579.0 313.3 L579.5 311.7 L580.0 310.2 L580.5 308.6 L581.1 307.0 L581.7 305.4 L582.3 303.8 L582.9 302.3 L583.5 300.7 L584.2 299.1 L584.9 297.5 L585.6 296.0 L586.4 294.4 L587.1 292.8 L587.9 291.2 L588.7 289.6 L589.5 288.1 L590.4 286.5 L591.3 284.9 L592.2 283.3 L593.1 281.7 L594.0 280.2 L595.0 278.6 L596.0 277.0 L597.0 275.4 L598.0 273.9 L599.1 272.3 L600.1 270.7 L601.2 269.1 L602.3 267.6 L603.5 266.0 L604.6 264.4 L605.8 262.8 L607.0 261.2 L608.2 259.7 L609.5 258.1 L610.7 256.5 L612.0 255.0 L613.3 253.4 L614.6 251.8 L616.0 250.2 L617.3 248.7 L618.7 247.1 L620.1 245.5 L621.5 243.9 L623.0 242.4 L624.4 240.8 L625.9 239.2 L627.4 237.7 L628.9 236.1 L630.5 234.5 L632.0 233.0 L633.6 231.4 L635.2 229.8 L636.8 228.2 L638.4 226.7 L640.1 225.1 L641.8 223.5 L643.4 222.0 L645.1 220.4 L646.9 218.9 L648.6 217.3 L650.4 215.7 L652.1 214.2 L653.9 212.6 L655.7 211.0 L657.6 209.5 L659.4 207.9 L661.2 206.4 L663.1 204.8 L665.0 203.3 L666.9 201.7 L668.8 200.1 L670.8 198.6 L672.7 197.0 L674.7 195.5 L676.7 193.9 L678.7 192.4 L680.7 190.8 L682.7 189.3 L684.7 187.7 L686.8 186.2 L688.8 184.6 L690.9 183.1 L693.0 181.5 L695.1 180.0 L697.2 178.5 L699.4 176.9 L701.5 175.4 L703.6 173.9 L705.8 172.3 L708.0 170.8 L710.2 169.3 L712.4 167.7 L714.6 166.2 L716.8 164.7 L719.0 163.1 L721.3 161.6 L723.5 160.1 L725.8 158.6 L728.1 157.1 L730.4 155.5 L732.6 154.0 L734.9 152.5 L737.2 151.0 L739.6 149.5 L741.9 148.0 L744.2 146.5 L746.5 145.0 L748.9 143.5 L751.2 142.0 L753.6 140.5 L755.9 139.0 L758.3 137.6 L760.7 136.1 L763.1 134.6 L765.4 133.1 L767.8 131.7 L770.2 130.2 L772.6 128.8 L775.0 127.3 L777.4 125.9 L779.8 124.4 L782.2 123.0 L784.6 121.5 L787.0 120.1 L789.4 118.7 L791.8 117.3 L794.2 115.9 L796.6 114.5 L799.0 113.1 L801.4 111.7 L803.7 110.3 L806.1 108.9 L808.5 107.6 L810.9 106.2 L813.2 104.9 L815.6 103.5 L818.0 102.2 L820.3 100.9 L822.6 99.6 L825.0 98.3 L827.3 97.1 L829.6 95.8 L831.9 94.6 L834.2 93.3 L836.4 92.1 L838.7 90.9 L840.9 89.7 L843.2 88.6 L845.4 87.5 L847.5 86.3 L849.7 85.3 L851.9 84.2 L854.0 83.2 L856.1 82.1 L858.2 81.2 L860.2 80.2 L862.3 79.3 L864.3 78.4 L866.3 77.6 L868.2 76.8 L870.2 76.0 L872.1 75.3 L873.9 74.6 L875.8 73.9 L877.6 73.4 L879.4 72.8 L881.2 72.3 L883.0 71.9 L884.7 71.5 L886.4 71.2 L888.1 70.9 L889.8 70.7 L891.4 70.6 L893.1 70.5 L894.7 70.4 L896.3 70.5 L897.9 70.6 L899.5 70.7 L901.1 70.9 L902.7 71.2 L904.3 71.5 L905.9 71.9 L907.5 72.3 L909.1 72.8 L910.8 73.3 L912.4 73.9 L914.0 74.6 L915.7 75.2 L917.4 76.0 L919.0 76.7 L920.7 77.5 L922.4 78.4 L924.2 79.3 L925.9 80.2 L927.6 81.1 L929.4 82.1 L931.2 83.1 L933.0 84.2 L934.8 85.2 L936.6 86.3 L938.4 87.4 L940.2 88.6 L942.1 89.7 L943.9 90.9 L945.8 92.1 L947.7 93.3 L949.6 94.5 L951.5 95.8 L953.4 97.0 L955.3 98.3 L957.2 99.6 L959.1 100.9 L961.1 102.2 L963.0 103.5 L964.9 104.8 L966.9 106.2 L968.8 107.5 L970.8 108.9 L972.7 110.3 L974.7 111.6 L976.7 113.0 L978.6 114.4 L980.6 115.8 L982.6 117.2 L984.5 118.6 L986.5 120.1 L988.5 121.5 L990.5 122.9 L992.4 124.4 L994.4 125.8 L996.4 127.3 L998.3 128.7 L1000.3 130.2 L1002.2 131.6 L1004.2 133.1 L1006.2 134.6 L1008.1 136.0 L1010.1 137.5 L1012.0 139.0 M896.7 442.3 L897.5 440.9 L898.4 439.6 L899.2 438.2 L900.1 436.8 L900.9 435.5 L901.8 434.1 L902.6 432.7 L903.5 431.3 L904.3 430.0 L905.2 428.6 L906.0 427.2 L906.9 425.8 L907.7 424.4 L908.6 423.0 L909.4 421.6 L910.3 420.2 L911.1 418.8 L912.0 417.4 L912.8 416.0 L913.7 414.6 L914.5 413.2 L915.4 411.8 L916.2 410.3 L917.1 408.9 L917.9 407.5 L918.8 406.1 L919.6 404.7 L920.5 403.3 L921.3 401.8 L922.1 400.4 L923.0 399.0 L923.8 397.6 L924.6 396.1 L925.5 394.7 L926.3 393.3 L927.1 391.8 L928.0 390.4 L928.8 389.0 L929.6 387.5 L930.5 386.1 L931.3 384.6 L932.1 383.2 L932.9 381.8 L933.8 380.3 L934.6 378.9 L935.4 377.4 L936.2 376.0 L937.0 374.5 L937.8 373.1 L938.6 371.7 L939.4 370.2 L940.2 368.8 L941.0 367.3 L941.8 365.9 L942.6 364.4 L943.4 363.0 L944.2 361.5 L945.0 360.0 L945.8 358.6 L946.6 357.1 L947.4 355.7 L948.1 354.2 L948.9 352.8 L949.7 351.3 L950.5 349.9 L951.2 348.4 L952.0 346.9 L952.8 345.5 L953.5 344.0 L954.3 342.6 L955.0 341.1 L955.8 339.7 L956.5 338.2 L957.2 336.7 L958.0 335.3 L958.7 333.8 L959.5 332.4 L960.2 330.9 L960.9 329.4 L961.6 328.0 L962.3 326.5 L963.1 325.1 L963.8 323.6 L964.5 322.1 L965.2 320.7 L965.9 319.2 L966.6 317.7 L967.3 316.3 L967.9 314.8 L968.6 313.4 L969.3 311.9 L970.0 310.4 L970.6 309.0 L971.3 307.5 L972.0 306.1 L972.6 304.6 L973.3 303.1 L973.9 301.7 L974.6 300.2 L975.2 298.8 L975.9 297.3 L976.5 295.8 L977.1 294.4 L977.7 292.9 L978.3 291.5 L979.0 290.0 L979.6 288.6 L980.2 287.1 L980.8 285.7 L981.4 284.2 L981.9 282.7 L982.5 281.3 L983.1 279.8 L983.7 278.4 L984.3 276.9 L984.8 275.5 L985.4 274.0 L985.9 272.6 L986.5 271.1 L987.0 269.7 L987.6 268.2 L988.1 266.8 L988.6 265.3 L989.2 263.9 L989.7 262.5 L990.2 261.0 L990.7 259.6 L991.2 258.1 L991.7 256.7 L992.2 255.2 L992.7 253.8 L993.2 252.4 L993.6 250.9 L994.1 249.5 L994.6 248.1 L995.0 246.6 L995.5 245.2 L996.0 243.8 L996.4 242.3 L996.8 240.9 L997.3 239.5 L997.7 238.1 L998.1 236.7 L998.6 235.2 L999.0 233.8 L999.4 232.4 L999.8 231.0 L1000.2 229.6 L1000.6 228.2 L1001.0 226.7 L1001.4 225.3 L1001.7 223.9 L1002.1 222.5 L1002.5 221.1 L1002.8 219.7 L1003.2 218.3 L1003.6 216.9 L1003.9 215.5 L1004.2 214.1 L1004.6 212.8 L1004.9 211.4 L1005.3 210.0 L1005.6 208.6 L1005.9 207.2 L1006.2 205.8 L1006.5 204.5 L1006.8 203.1 L1007.1 201.7 L1007.4 200.4 L1007.7 199.0 L1008.0 197.6 L1008.3 196.3 L1008.6 194.9 L1008.9 193.6 L1009.1 192.2 L1009.4 190.9 L1009.7 189.6 L1009.9 188.2 L1010.2 186.9 L1010.4 185.6 L1010.7 184.3 L1010.9 182.9 L1011.2 181.6 L1011.4 180.3 L1011.7 179.0 L1011.9 177.7 L1012.1 176.4 L1012.4 175.1 L1012.6 173.8 L1012.8 172.6 L1013.1 171.3 L1013.3 170.0 L1013.5 168.8 L1013.7 167.5 L1013.9 166.3 L1014.2 165.0 L1014.4 163.8 L1014.6 162.5 L1014.8 161.3 L1015.0 160.1 L1015.3 158.9 L1015.5 157.7 L1015.7 156.5 L1015.9 155.3 L1016.1 154.1 L1016.4 152.9 L1016.6 151.8 L1016.8 150.6 L1017.0 149.5 L1017.3 148.3 L1017.5 147.2 L1017.8 146.1 L1018.0 145.0" fill="none" stroke="#6a6a6a" stroke-width="1.3" stroke-dasharray="1.3 2.2"/>
<path d="M1072.7 92.0 L1072.9 91.9 L1073.0 91.9 L1073.2 91.8 L1073.4 91.8 L1073.6 91.7 L1073.8 91.7 L1074.0 91.6 L1074.1 91.6 L1074.3 91.5 L1074.5 91.5 L1074.8 91.4 L1075.0 91.4 L1075.2 91.3 L1075.4 91.3 L1075.6 91.3 L1075.8 91.2 L1076.1 91.2 L1076.3 91.2 L1076.6 91.1 L1076.8 91.1 L1077.0 91.1 L1077.3 91.0 L1077.6 91.0 L1077.8 91.0 L1078.1 91.0 L1078.3 90.9 L1078.6 90.9 L1078.9 90.9 L1079.2 90.9 L1079.5 90.9 L1079.8 90.9 L1080.1 90.9 L1080.4 90.8 L1080.7 90.8 L1081.0 90.8 L1081.3 90.8 L1081.6 90.8 L1081.9 90.8 L1082.2 90.8 L1082.6 90.8 L1082.9 90.8 L1083.2 90.8 L1083.6 90.8 L1083.9 90.8 L1084.3 90.9 L1084.6 90.9 L1085.0 90.9 L1085.4 90.9 L1085.7 90.9 L1086.1 90.9 L1086.5 90.9 L1086.9 91.0 L1087.3 91.0 L1087.7 91.0 L1088.1 91.0 L1088.5 91.1 L1088.9 91.1 L1089.3 91.1 L1089.7 91.2 L1090.1 91.2 L1090.5 91.2 L1091.0 91.3 L1091.4 91.3 L1091.8 91.3 L1092.3 91.4 L1092.7 91.4 L1093.2 91.5 L1093.6 91.5 L1094.1 91.6 L1094.5 91.6 L1095.0 91.7 L1095.5 91.7 L1096.0 91.8 L1096.4 91.8 L1096.9 91.9 L1097.4 91.9 L1097.9 92.0 L1098.4 92.1 L1098.9 92.1 L1099.4 92.2 L1099.9 92.3 L1100.5 92.3 L1101.0 92.4 L1101.5 92.5 L1102.0 92.5 M702.0 92.6 L702.1 92.7 L702.2 92.8 L702.3 92.8 L702.4 92.9 L702.5 93.0 M1070.7 98.7 L1070.7 98.8 L1070.8 99.0 L1070.8 99.1 L1070.8 99.3 L1070.9 99.4 L1070.9 99.6 L1070.9 99.7 L1071.0 99.9 L1071.0 100.0 L1071.1 100.2 L1071.1 100.3 L1071.2 100.5 L1071.2 100.6 L1071.3 100.8 L1071.3 100.9 L1071.4 101.1 L1071.5 101.2 L1071.5 101.4 L1071.6 101.6 L1071.7 101.7 L1071.7 101.9 L1071.8 102.1 L1071.9 102.2 L1071.9 102.4 L1072.0 102.6 L1072.1 102.7 L1072.2 102.9 L1072.3 103.1 L1072.4 103.2 L1072.4 103.4 L1072.5 103.6 L1072.6 103.7 L1072.7 103.9 L1072.8 104.1 L1072.9 104.3 L1073.0 104.4 L1073.1 104.6 L1073.2 104.8 L1073.3 105.0 L1073.4 105.2 L1073.5 105.3 L1073.6 105.5 L1073.8 105.7 L1073.9 105.9 L1074.0 106.1 L1074.1 106.3 L1074.2 106.4 L1074.3 106.6 L1074.5 106.8 L1074.6 107.0 L1074.7 107.2 L1074.8 107.4 L1074.9 107.6 L1075.1 107.8 L1075.2 108.0 L1075.3 108.2 L1075.5 108.4 L1075.6 108.6 L1075.7 108.8 L1075.9 108.9 L1076.0 109.1 L1076.1 109.3 L1076.3 109.5 L1076.4 109.7 L1076.6 109.9 L1076.7 110.1 L1076.9 110.3 L1077.0 110.5 L1077.2 110.8 L1077.3 111.0 L1077.5 111.2 L1077.6 111.4 L1077.8 111.6 L1077.9 111.8 L1078.1 112.0 L1078.2 112.2 L1078.4 112.4 L1078.5 112.6 L1078.7 112.8 L1078.9 113.0 L1079.0 113.2 L1079.2 113.5 L1079.3 113.7 L1079.5 113.9 L1079.7 114.1 L1079.8 114.3 L1080.0 114.5 L1080.2 114.8 L1080.3 115.0 L1080.5 115.2 L1080.7 115.4 L1080.8 115.6 L1081.0 115.8 L1081.2 116.1 L1081.4 116.3 L1081.5 116.5 L1081.7 116.7 L1081.9 116.9 L1082.1 117.2 L1082.2 117.4 L1082.4 117.6 L1082.6 117.8 L1082.8 118.1 L1083.0 118.3 L1083.1 118.5 L1083.3 118.7 L1083.5 119.0 L1083.7 119.2 L1083.9 119.4 L1084.1 119.7 L1084.3 119.9 L1084.4 120.1 L1084.6 120.3 L1084.8 120.6 L1085.0 120.8 L1085.2 121.0 L1085.4 121.3 L1085.6 121.5 L1085.8 121.7 L1086.0 122.0 L1086.2 122.2 L1086.3 122.4 L1086.5 122.7 L1086.7 122.9 L1086.9 123.2 L1087.1 123.4 L1087.3 123.6 L1087.5 123.9 L1087.7 124.1 L1087.9 124.3 L1088.1 124.6 L1088.3 124.8 L1088.5 125.1 L1088.7 125.3 M1096.0 121.3 L1096.6 121.5 L1097.2 121.7 L1097.8 121.8 L1098.4 122.0 L1099.0 122.2 L1099.6 122.4 L1100.2 122.5 L1100.9 122.7 L1101.5 122.9 L1102.1 123.1 L1102.7 123.3 L1103.3 123.5 L1103.9 123.6 L1104.5 123.8 L1105.2 124.0 L1105.8 124.2 L1106.4 124.4 L1107.0 124.6 L1107.6 124.8 L1108.3 124.9 L1108.9 125.1 L1109.5 125.3 L1110.1 125.5 L1110.8 125.7 L1111.4 125.9 L1112.0 126.1 L1112.7 126.3 L1113.3 126.5 L1113.9 126.7 L1114.6 126.9 L1115.2 127.1 L1115.8 127.3 L1116.5 127.5 L1117.1 127.7 L1117.7 127.9 L1118.4 128.1 L1119.0 128.2 L1119.7 128.4 L1120.3 128.6 L1120.9 128.8 L1121.6 129.1 L1122.2 129.3 L1122.9 129.5 L1123.5 129.7 L1124.2 129.9 L1124.8 130.1 L1125.5 130.3 L1126.1 130.5 L1126.7 130.7 L1127.4 130.9 L1128.0 131.1 L1128.7 131.3 M1104.0 98.7 L1104.1 98.8 L1104.2 99.0 L1104.4 99.1 L1104.5 99.3 L1104.6 99.5 L1104.7 99.6 L1104.9 99.8 L1105.0 99.9 L1105.1 100.1 L1105.3 100.2 L1105.4 100.4 L1105.6 100.5 L1105.7 100.7 L1105.9 100.9 L1106.0 101.0 L1106.2 101.2 L1106.3 101.4 L1106.5 101.5 L1106.6 101.7 L1106.8 101.9 L1107.0 102.0 L1107.1 102.2 L1107.3 102.4 L1107.5 102.5 L1107.7 102.7 L1107.8 102.9 L1108.0 103.1 L1108.2 103.2 L1108.4 103.4 L1108.6 103.6 L1108.8 103.8 L1108.9 103.9 L1109.1 104.1 L1109.3 104.3 L1109.5 104.5 L1109.7 104.7 L1109.9 104.8 L1110.1 105.0 L1110.3 105.2 L1110.5 105.4 L1110.7 105.6 L1111.0 105.8 L1111.2 106.0 L1111.4 106.2 L1111.6 106.3 L1111.8 106.5 L1112.0 106.7 L1112.3 106.9 L1112.5 107.1 L1112.7 107.3 M1078.0 107.3 L1078.6 107.5 L1079.2 107.6 L1079.8 107.8 L1080.4 108.0 L1081.0 108.1 L1081.6 108.3 L1082.2 108.5 L1082.8 108.6 L1083.5 108.8 L1084.1 109.0 L1084.7 109.1 L1085.3 109.3 M1074.0 128.7 L1074.6 129.0 L1075.1 129.3 L1075.7 129.6 L1076.3 129.9 L1076.8 130.3 L1077.4 130.6 L1078.0 130.9 L1078.5 131.2 L1079.1 131.5 L1079.7 131.8 L1080.2 132.1 L1080.8 132.4 L1081.4 132.8 L1081.9 133.1 L1082.5 133.4 L1083.1 133.7 L1083.6 134.0 L1084.2 134.3 L1084.7 134.6 L1085.3 134.9 L1085.9 135.3 L1086.4 135.6 L1087.0 135.9 L1087.5 136.2 L1088.1 136.5 L1088.7 136.8 L1089.2 137.1 L1089.8 137.4 L1090.3 137.8 L1090.9 138.1 L1091.4 138.4 L1092.0 138.7 M1078.7 140.0 L1079.2 140.1 L1079.6 140.3 L1080.1 140.4 L1080.6 140.5 L1081.1 140.7 L1081.5 140.8 L1082.0 140.9 L1082.5 141.1 L1083.0 141.2 L1083.5 141.3 L1083.9 141.5 L1084.4 141.6 L1084.9 141.8 L1085.4 141.9 L1085.9 142.0 L1086.4 142.2 L1086.8 142.3 L1087.3 142.5 L1087.8 142.6 L1088.3 142.8 L1088.8 142.9 L1089.3 143.1 L1089.8 143.2 L1090.3 143.3 L1090.8 143.5 L1091.2 143.6 L1091.7 143.8 L1092.2 143.9 L1092.7 144.1 L1093.2 144.2 L1093.7 144.4 L1094.2 144.5 L1094.7 144.7 L1095.2 144.8 L1095.7 145.0 L1096.2 145.1 L1096.7 145.3 M1150.0 122.7 L1150.3 122.9 L1150.5 123.1 L1150.8 123.3 L1151.0 123.5 L1151.3 123.8 L1151.6 124.0 L1151.8 124.2 L1152.1 124.4 L1152.4 124.6 L1152.6 124.8 L1152.9 125.0 L1153.2 125.3 L1153.4 125.5 L1153.7 125.7 L1154.0 125.9 L1154.2 126.1 L1154.5 126.4 L1154.8 126.6 L1155.1 126.8 L1155.3 127.0 L1155.6 127.2 L1155.9 127.5 L1156.2 127.7 L1156.4 127.9 L1156.7 128.1 L1157.0 128.4 L1157.3 128.6 L1157.6 128.8 L1157.8 129.0 L1158.1 129.3 L1158.4 129.5 L1158.7 129.7 L1159.0 129.9 L1159.3 130.2 L1159.6 130.4 L1159.8 130.6 L1160.1 130.8 L1160.4 131.1 L1160.7 131.3 M1183.3 138.0 L1184.1 138.3 L1184.9 138.6 L1185.7 138.9 L1186.5 139.2 L1187.3 139.5 L1188.1 139.8 L1188.9 140.1 L1189.7 140.4 L1190.4 140.7 L1191.2 141.0 L1192.0 141.3 L1192.8 141.6 L1193.6 141.9 L1194.4 142.2 L1195.2 142.5 L1196.0 142.8 L1196.8 143.1 L1197.5 143.4 L1198.3 143.7 L1199.1 144.0 L1199.9 144.3 L1200.7 144.6 L1201.5 144.9 L1202.3 145.3 L1203.0 145.6 L1203.8 145.9 L1204.6 146.2 L1205.4 146.5 L1206.2 146.8 L1206.9 147.1 L1207.7 147.4 L1208.5 147.7 L1209.3 148.0 L1210.1 148.3 L1210.8 148.6 L1211.6 148.9 L1212.4 149.2 L1213.2 149.5 L1213.9 149.8 L1214.7 150.1 L1215.5 150.4 L1216.2 150.7 L1217.0 151.0 L1217.8 151.3 L1218.6 151.6 L1219.3 152.0 L1220.1 152.3 L1220.9 152.6 L1221.6 152.9 L1222.4 153.2 L1223.2 153.5 L1223.9 153.8 L1224.7 154.1 L1225.5 154.4 L1226.2 154.7 L1227.0 155.0 L1227.8 155.3 L1228.5 155.6 L1229.3 155.9 L1230.0 156.2 L1230.8 156.5 L1231.6 156.8 L1232.3 157.2 L1233.1 157.5 L1233.8 157.8 L1234.6 158.1 L1235.3 158.4 L1236.1 158.7 L1236.8 159.0 L1237.6 159.3 L1238.3 159.6 L1239.1 159.9 L1239.8 160.2 L1240.6 160.5 L1241.3 160.8 L1242.1 161.1 L1242.8 161.5 L1243.6 161.8 L1244.3 162.1 L1245.1 162.4 L1245.8 162.7 L1246.6 163.0 L1247.3 163.3 M1200.7 148.7 L1200.5 148.8 L1200.3 148.8 L1200.1 148.9 L1200.0 149.0 L1199.8 149.0 L1199.6 149.1 L1199.4 149.2 L1199.3 149.2 L1199.1 149.3 L1198.9 149.4 L1198.7 149.4 L1198.6 149.5 L1198.4 149.6 L1198.2 149.6 L1198.1 149.7 L1197.9 149.8 L1197.7 149.9 L1197.6 149.9 L1197.4 150.0 L1197.3 150.1 L1197.1 150.2 L1197.0 150.2 L1196.8 150.3 L1196.6 150.4 L1196.5 150.5 L1196.3 150.6 L1196.2 150.6 L1196.0 150.7 L1195.9 150.8 L1195.8 150.9 L1195.6 151.0 L1195.5 151.1 L1195.3 151.1 L1195.2 151.2 L1195.0 151.3 L1194.9 151.4 L1194.8 151.5 L1194.6 151.6 L1194.5 151.7 L1194.4 151.7 L1194.2 151.8 L1194.1 151.9 L1194.0 152.0 L1193.9 152.1 L1193.7 152.2 L1193.6 152.3 L1193.5 152.4 L1193.4 152.5 L1193.2 152.6 L1193.1 152.7 L1193.0 152.8 L1192.9 152.9 L1192.8 153.0 L1192.7 153.1 L1192.5 153.2 L1192.4 153.3 L1192.3 153.4 L1192.2 153.5 L1192.1 153.6 L1192.0 153.7 L1191.9 153.8 L1191.8 153.9 L1191.7 154.0 L1191.6 154.1 L1191.5 154.2 L1191.4 154.3 L1191.3 154.4 L1191.2 154.5 L1191.1 154.6 L1191.0 154.7 L1190.9 154.8 L1190.8 155.0 L1190.7 155.1 L1190.6 155.2 L1190.5 155.3 L1190.4 155.4 L1190.3 155.5 L1190.2 155.6 L1190.1 155.7 L1190.0 155.9 L1190.0 156.0 L1189.9 156.1 L1189.8 156.2 L1189.7 156.3 L1189.6 156.4 L1189.5 156.6 L1189.5 156.7 L1189.4 156.8 L1189.3 156.9 L1189.2 157.0 L1189.2 157.2 L1189.1 157.3 L1189.0 157.4 L1188.9 157.5 L1188.9 157.6 L1188.8 157.8 L1188.7 157.9 L1188.6 158.0 L1188.6 158.1 L1188.5 158.3 L1188.4 158.4 L1188.4 158.5 L1188.3 158.7 L1188.2 158.8 L1188.2 158.9 L1188.1 159.0 L1188.1 159.2 L1188.0 159.3 M1164.7 159.3 L1164.9 159.2 L1165.1 159.2 L1165.3 159.1 L1165.5 159.0 L1165.7 159.0 L1165.9 158.9 L1166.1 158.9 L1166.4 158.8 L1166.6 158.7 L1166.8 158.7 L1167.0 158.6 L1167.2 158.5 L1167.4 158.5 L1167.6 158.4 L1167.9 158.4 L1168.1 158.3 L1168.3 158.3 L1168.5 158.2 L1168.8 158.2 L1169.0 158.1 L1169.2 158.0 L1169.4 158.0 L1169.7 157.9 L1169.9 157.9 L1170.1 157.8 L1170.3 157.8 L1170.6 157.7 L1170.8 157.7 L1171.0 157.6 L1171.3 157.6 L1171.5 157.5 L1171.7 157.5 L1172.0 157.4 L1172.2 157.4 L1172.5 157.4 L1172.7 157.3 L1172.9 157.3 L1173.2 157.2 L1173.4 157.2 L1173.7 157.1 L1173.9 157.1 L1174.2 157.1 L1174.4 157.0 L1174.7 157.0 L1174.9 156.9 L1175.2 156.9 L1175.4 156.9 L1175.7 156.8 L1175.9 156.8 L1176.2 156.8 L1176.4 156.7 L1176.7 156.7 M1090.0 162.7 L1090.5 162.9 L1090.9 163.0 L1091.4 163.2 L1091.8 163.3 L1092.3 163.5 L1092.7 163.6 L1093.2 163.8 L1093.6 163.9 L1094.1 164.1 L1094.5 164.2 L1095.0 164.4 L1095.5 164.6 L1095.9 164.7 L1096.4 164.9 L1096.8 165.0 L1097.3 165.2 L1097.8 165.4 L1098.2 165.5 L1098.7 165.7 L1099.1 165.8 L1099.6 166.0 L1100.1 166.2 L1100.5 166.3 L1101.0 166.5 L1101.4 166.6 L1101.9 166.8 L1102.4 167.0 L1102.8 167.1 L1103.3 167.3 M1103.7 94.0 L1104.3 94.1 L1104.8 94.2 L1105.4 94.2 L1106.0 94.3 L1106.5 94.4 L1107.1 94.5 L1107.7 94.6 L1108.3 94.7 M695.5 94.8 L695.5 94.9 L695.5 95.0 L695.6 95.1 L695.6 95.2 L695.6 95.3 L695.6 95.4 L695.6 95.5 L695.6 95.6 L695.6 95.7 L695.6 95.8 L695.6 95.9 L695.6 96.0 L695.6 96.1 L695.6 96.2 L695.6 96.3 L695.6 96.4 L695.5 96.6 L695.5 96.7 L695.5 96.8 L695.4 96.9 L695.4 97.0 L695.3 97.2 L695.3 97.3 L695.2 97.4 L695.2 97.5 L695.1 97.7 L695.1 97.8 L695.0 97.9 L694.9 98.0 L694.9 98.2 L694.8 98.3 L694.7 98.4 L694.6 98.6 L694.6 98.7 L694.5 98.8 L694.4 99.0 L694.3 99.1 L694.2 99.3 L694.1 99.4 L694.0 99.5 L693.9 99.7 L693.8 99.8 L693.7 100.0 L693.6 100.1 L693.5 100.3 L693.3 100.4 L693.2 100.6 L693.1 100.7 L693.0 100.9 L692.8 101.0 L692.7 101.2 L692.6 101.3 L692.4 101.5 L692.3 101.6 L692.2 101.8 L692.0 102.0 L691.9 102.1 L691.7 102.3 L691.6 102.5 L691.4 102.6 L691.3 102.8 L691.1 102.9 L690.9 103.1 L690.8 103.3 L690.6 103.4 L690.4 103.6 L690.3 103.8 L690.1 104.0 L689.9 104.1 L689.7 104.3 L689.6 104.5 L689.4 104.6 L689.2 104.8 L689.0 105.0 M971.0 153.0 L970.9 152.7 L970.7 152.3 L970.6 152.0 L970.4 151.7 L970.3 151.4 L970.1 151.0 L970.0 150.7 L969.8 150.4 L969.7 150.1 L969.5 149.7 L969.4 149.4 L969.2 149.1 L969.1 148.8 L968.9 148.4 L968.8 148.1 L968.6 147.8 L968.5 147.5 L968.3 147.1 L968.2 146.8 L968.0 146.5 L967.9 146.2 L967.7 145.8 L967.6 145.5 L967.4 145.2 L967.3 144.9 L967.1 144.5 L967.0 144.2 L966.8 143.9 L966.7 143.6 L966.5 143.2 L966.4 142.9 L966.2 142.6 L966.1 142.3 L965.9 141.9 L965.8 141.6 L965.6 141.3 L965.5 141.0 L965.3 140.6 L965.2 140.3 L965.0 140.0 M1012.0 139.0 L1012.4 139.3 L1012.8 139.6 L1013.2 139.9 L1013.5 140.2 L1013.9 140.5 L1014.3 140.8 L1014.7 141.1 L1015.1 141.3 L1015.4 141.6 L1015.8 141.9 L1016.2 142.2 L1016.6 142.5 L1017.0 142.8 L1017.4 143.1 L1017.7 143.4 L1018.1 143.7 L1018.5 144.0 M1018.0 145.0 L1018.0 144.8 L1018.1 144.6 L1018.1 144.4 L1018.2 144.1 L1018.2 143.9 L1018.3 143.7 L1018.3 143.5 L1018.4 143.3 L1018.4 143.1 L1018.5 142.9 L1018.5 142.6 L1018.6 142.4 L1018.7 142.2 L1018.7 142.0 L1018.8 141.8 L1018.8 141.6 L1018.9 141.4 L1018.9 141.2 L1019.0 141.0 L1019.0 140.8 L1019.1 140.5 L1019.1 140.3 L1019.2 140.1 L1019.2 139.9 L1019.3 139.7 L1019.3 139.5 L1019.4 139.3 L1019.5 139.1 L1019.5 138.9 L1019.6 138.7 L1019.6 138.5 L1019.7 138.3 L1019.7 138.1 L1019.8 137.9 L1019.8 137.7 L1019.9 137.5 L1020.0 137.3 L1020.0 137.1 L1020.1 136.9 L1020.1 136.7 L1020.2 136.5 L1020.3 136.3 L1020.3 136.1 L1020.4 135.9 L1020.4 135.7 L1020.5 135.5" fill="none" stroke="#808080" stroke-width="1.5"/>
<path d="M609.0 261.0 L609.8 259.4 L610.7 257.8 L611.5 256.1 L612.4 254.5 L613.3 252.9 L614.2 251.3 L615.2 249.6 L616.2 248.0 L617.2 246.4 L618.2 244.8 L619.2 243.1 L620.3 241.5 L621.3 239.9 L622.4 238.3 L623.6 236.7 L624.7 235.0 L625.9 233.4 L627.1 231.8 L628.3 230.2 L629.5 228.5 L630.7 226.9 L632.0 225.3 L633.3 223.7 L634.6 222.0 L635.9 220.4 L637.3 218.8 L638.6 217.2 L640.0 215.6 L641.4 213.9 L642.9 212.3 L644.3 210.7 L645.8 209.1 L647.3 207.4 L648.8 205.8 L650.3 204.2 L651.8 202.6 L653.4 201.0 L655.0 199.3 L656.6 197.7 L658.2 196.1 L659.8 194.5 L661.5 192.8 L663.2 191.2 L664.9 189.6 L666.6 188.0 L668.3 186.3 L670.0 184.7 L671.8 183.1 L673.6 181.5 L675.4 179.9 L677.2 178.2 L679.0 176.6 L680.9 175.0 L682.7 173.4 L684.6 171.7 L686.5 170.1 L688.4 168.5 L690.4 166.9 L692.3 165.3 L694.3 163.6 L696.3 162.0 L698.2 160.4 L700.3 158.8 L702.3 157.1 L704.3 155.5 L706.4 153.9 L708.4 152.3 L710.5 150.7 L712.6 149.0 L714.7 147.4 L716.9 145.8 L719.0 144.2 L721.2 142.5 L723.3 140.9 L725.5 139.3 L727.7 137.7 L729.9 136.0 L732.1 134.4 L734.4 132.8 L736.6 131.2 L738.9 129.6 L741.1 127.9 L743.4 126.3 L745.7 124.7 L748.0 123.1 L750.4 121.5 L752.7 119.8 L755.0 118.2 L757.4 116.6 L759.7 115.0 L762.1 113.3 L764.5 111.7 L766.9 110.1 L769.3 108.5 L771.7 106.9 L774.1 105.2 L776.6 103.6 L779.0 102.0 L781.5 100.4 L783.9 98.8 L786.4 97.1 L788.9 95.5 L791.4 93.9 L793.9 92.3 L796.4 90.6 L798.9 89.0 L801.4 87.4 L803.9 85.8 L806.5 84.2 L809.0 82.5 L811.5 80.9 L814.1 79.3 L816.6 77.7 L819.2 76.1 L821.8 74.5 L824.4 72.8 L826.9 71.2 L829.5 69.6 L832.1 68.0 L834.7 66.4 L837.3 64.8 L839.9 63.1 L842.5 61.5 L845.1 59.9 L847.7 58.3 L850.3 56.7 L853.0 55.1 L855.6 53.5 L858.2 51.9 L860.8 50.3 L863.4 48.7 L866.0 47.1 L868.6 45.5 L871.2 43.9 L873.8 42.3 L876.3 40.8 L878.8 39.2 L881.3 37.7 L883.7 36.2 L886.0 34.8 L888.0 33.5 L889.6 32.4 L890.2 31.6 L913.5 31.4 L913.2 31.9 L914.2 32.8 L915.8 34.0 L917.7 35.4 L919.8 36.8 L922.0 38.3 L924.3 39.9 L926.6 41.4 L928.9 43.0 L931.2 44.6 L933.6 46.1 L935.9 47.7 L938.3 49.3 L940.7 50.9 L943.0 52.5 L945.4 54.1 L947.8 55.7 L950.1 57.3 L952.5 59.0 L954.9 60.6 L957.2 62.2 L959.6 63.8 L961.9 65.4 L964.3 67.0 L966.7 68.6 L969.0 70.3 L971.3 71.9 L973.7 73.5 L976.0 75.1 L978.3 76.7 L980.7 78.3 M609.0 261.0 L609.8 259.4 L610.5 257.8 L611.3 256.1 L612.2 254.5 L613.0 252.9 L613.9 251.3 L614.8 249.6 L615.7 248.0 L616.6 246.4 L617.6 244.8 L618.6 243.1 L619.6 241.5 L620.6 239.9 L621.6 238.3 L622.7 236.6 L623.8 235.0 L624.9 233.4 L626.0 231.8 L627.2 230.1 L628.3 228.5 L629.5 226.9 L630.7 225.3 L632.0 223.6 L633.2 222.0 L634.5 220.4 L635.8 218.8 L637.1 217.1 L638.4 215.5 L639.8 213.9 L641.1 212.3 L642.5 210.7 L643.9 209.0 L645.4 207.4 L646.8 205.8 L648.3 204.2 L649.8 202.5 L651.3 200.9 L652.8 199.3 L654.4 197.7 L655.9 196.0 L657.5 194.4 L659.1 192.8 L660.7 191.2 L662.4 189.6 L664.0 187.9 L665.7 186.3 L667.4 184.7 L669.1 183.1 L670.8 181.4 L672.6 179.8 L674.3 178.2 L676.1 176.6 L677.9 175.0 L679.7 173.3 L681.5 171.7 L683.4 170.1 L685.2 168.5 L687.1 166.8 L689.0 165.2 L690.9 163.6 L692.9 162.0 L694.8 160.4 L696.7 158.7 L698.7 157.1 L700.7 155.5 L702.7 153.9 L704.7 152.2 L706.8 150.6 L708.8 149.0 L710.9 147.4 L712.9 145.8 L715.0 144.1 L717.1 142.5 L719.3 140.9 L721.4 139.3 L723.5 137.7 L725.7 136.1 L727.9 134.4 L730.0 132.8 L732.2 131.2 L734.4 129.6 L736.7 128.0 L738.9 126.3 L741.1 124.7 L743.4 123.1 L745.7 121.5 L747.9 119.9 L750.2 118.3 L752.5 116.6 L754.8 115.0 L757.2 113.4 L759.5 111.8 L761.8 110.2 L764.2 108.6 L766.5 107.0 L768.9 105.3 L771.3 103.7 L773.7 102.1 L776.1 100.5 L778.5 98.9 L780.9 97.3 L783.3 95.7 L785.7 94.1 L788.2 92.5 L790.6 90.9 L793.1 89.3 L795.5 87.7 L798.0 86.1 L800.4 84.5 L802.9 82.9 L805.4 81.3 L807.9 79.7 L810.3 78.1 L812.8 76.5 L815.3 74.9 L817.8 73.3 L820.3 71.7 L822.8 70.1 L825.3 68.6 L827.7 67.0 L830.2 65.4 L832.7 63.9 L835.2 62.3 L837.6 60.8 L840.1 59.2 L842.5 57.7 L845.0 56.2 L847.4 54.7 L849.7 53.2 L852.1 51.7 L854.4 50.2 L856.7 48.8 L858.9 47.4 L861.0 46.0 L863.0 44.7 L864.9 43.4 L866.7 42.2 L868.2 41.1 L869.4 40.1 L870.3 39.2 L870.7 38.6 L870.5 38.1 L869.6 37.9 L932.8 37.9 L932.0 38.2 L931.9 38.7 L932.3 39.4 L933.1 40.3 L934.3 41.3 L935.7 42.4 L937.3 43.6 L939.0 44.9 L940.9 46.2 L942.9 47.6 L944.9 49.0 L947.0 50.5 L949.1 51.9 L951.3 53.4 L953.5 54.9 L955.7 56.4 L957.9 57.9 L960.2 59.5 L962.4 61.0 L964.7 62.6 L967.0 64.1 L969.2 65.7 L971.5 67.3 L973.8 68.8 L976.1 70.4 L978.4 72.0 L980.7 73.6 L982.9 75.2 L985.2 76.8 L987.5 78.3 L989.8 79.9 L992.1 81.5 L994.3 83.1 L996.6 84.7 L998.9 86.3 M609.0 261.0 L610.0 259.4 L611.0 257.8 L612.1 256.2 L613.2 254.5 L614.3 252.9 L615.4 251.3 L616.5 249.7 L617.7 248.1 L618.9 246.5 L620.1 244.8 L621.3 243.2 L622.6 241.6 L623.8 240.0 L625.1 238.4 L626.4 236.8 L627.7 235.2 L629.1 233.5 L630.5 231.9 L631.9 230.3 L633.3 228.7 L634.7 227.1 L636.2 225.5 L637.6 223.9 L639.1 222.3 L640.6 220.6 L642.2 219.0 L643.7 217.4 L645.3 215.8 L646.9 214.2 L648.5 212.6 L650.1 211.0 L651.7 209.3 L653.4 207.7 L655.1 206.1 L656.8 204.5 L658.5 202.9 L660.2 201.3 L662.0 199.7 L663.8 198.1 L665.5 196.4 L667.3 194.8 L669.2 193.2 L671.0 191.6 L672.9 190.0 L674.7 188.4 L676.6 186.8 L678.5 185.2 L680.5 183.6 L682.4 182.0 L684.4 180.3 L686.3 178.7 L688.3 177.1 L690.3 175.5 L692.4 173.9 L694.4 172.3 L696.4 170.7 L698.5 169.1 L700.6 167.5 L702.7 165.9 L704.8 164.3 L706.9 162.6 L709.1 161.0 L711.2 159.4 L713.4 157.8 L715.5 156.2 L717.7 154.6 L719.9 153.0 L722.2 151.4 L724.4 149.8 L726.6 148.2 L728.9 146.6 L731.2 145.0 L733.4 143.4 L735.7 141.8 L738.0 140.2 L740.4 138.6 L742.7 137.0 L745.0 135.4 L747.4 133.8 L749.7 132.2 L752.1 130.6 L754.5 129.0 L756.9 127.4 L759.3 125.8 L761.7 124.2 L764.1 122.6 L766.5 121.0 L768.9 119.4 L771.4 117.9 L773.8 116.3 L776.3 114.7 L778.8 113.1 L781.2 111.5 L783.7 109.9 L786.2 108.3 L788.7 106.8 L791.2 105.2 L793.7 103.6 L796.2 102.0 L798.7 100.4 L801.2 98.9 L803.8 97.3 L806.3 95.7 L808.8 94.2 L811.3 92.6 L813.9 91.1 L816.4 89.5 L818.9 87.9 L821.5 86.4 L824.0 84.9 L826.6 83.3 L829.1 81.8 L831.6 80.3 L834.2 78.7 L836.7 77.2 L839.2 75.7 L841.7 74.2 L844.3 72.7 L846.8 71.2 L849.3 69.7 L851.8 68.3 L854.2 66.8 L856.7 65.4 L859.1 63.9 L861.6 62.5 L864.0 61.1 L866.4 59.8 L868.7 58.4 L871.1 57.1 L873.4 55.8 L875.6 54.6 L877.9 53.4 L880.1 52.2 L882.2 51.1 L884.3 50.1 L886.3 49.1 L888.3 48.2 L890.2 47.4 L892.1 46.7 L893.9 46.1 L895.6 45.7 L897.3 45.4 L898.9 45.2 L900.6 45.2 L902.2 45.3 L903.8 45.6 L905.4 46.0 L907.1 46.6 L908.8 47.2 L910.5 48.0 L912.2 48.8 L914.0 49.8 L915.9 50.8 L917.8 51.9 L919.7 53.0 L921.6 54.2 L923.6 55.5 L925.6 56.8 L927.6 58.1 L929.7 59.4 L931.8 60.8 L933.8 62.1 L936.0 63.5 L938.1 65.0 L940.2 66.4 L942.4 67.9 L944.5 69.3 L946.7 70.8 L948.8 72.3 L951.0 73.8 L953.2 75.3 L955.4 76.8 L957.6 78.3 L959.8 79.8 L962.0 81.4 L964.2 82.9 L966.4 84.4 L968.6 86.0 L970.8 87.5 L973.0 89.1 L975.2 90.6 L977.4 92.2 L979.6 93.7 L981.8 95.3 L984.0 96.9 L986.1 98.4 L988.3 100.0 L990.5 101.6 L992.7 103.2 L994.9 104.7 L997.0 106.3 L999.2 107.9 L1001.3 109.5 L1003.5 111.1 L1005.6 112.6 L1007.8 114.2 L1009.9 115.8 M609.0 261.0 L610.0 259.4 L611.0 257.8 L612.1 256.2 L613.1 254.5 L614.2 252.9 L615.3 251.3 L616.5 249.7 L617.6 248.1 L618.8 246.5 L620.0 244.9 L621.2 243.2 L622.5 241.6 L623.7 240.0 L625.0 238.4 L626.3 236.8 L627.6 235.2 L629.0 233.6 L630.3 231.9 L631.7 230.3 L633.1 228.7 L634.5 227.1 L636.0 225.5 L637.4 223.9 L638.9 222.3 L640.4 220.6 L641.9 219.0 L643.5 217.4 L645.0 215.8 L646.6 214.2 L648.2 212.6 L649.8 211.0 L651.5 209.4 L653.1 207.7 L654.8 206.1 L656.5 204.5 L658.2 202.9 L659.9 201.3 L661.7 199.7 L663.4 198.1 L665.2 196.5 L667.0 194.8 L668.8 193.2 L670.7 191.6 L672.5 190.0 L674.4 188.4 L676.3 186.8 L678.2 185.2 L680.1 183.6 L682.0 182.0 L684.0 180.3 L685.9 178.7 L687.9 177.1 L689.9 175.5 L691.9 173.9 L694.0 172.3 L696.0 170.7 L698.1 169.1 L700.1 167.5 L702.2 165.9 L704.3 164.3 L706.5 162.7 L708.6 161.0 L710.7 159.4 L712.9 157.8 L715.1 156.2 L717.2 154.6 L719.4 153.0 L721.7 151.4 L723.9 149.8 L726.1 148.2 L728.4 146.6 L730.6 145.0 L732.9 143.4 L735.2 141.8 L737.5 140.2 L739.8 138.6 L742.1 137.0 L744.5 135.4 L746.8 133.8 L749.2 132.2 L751.5 130.6 L753.9 129.0 L756.3 127.4 L758.7 125.8 L761.1 124.2 L763.5 122.6 L765.9 121.0 L768.3 119.4 L770.8 117.8 L773.2 116.2 L775.7 114.6 L778.2 113.1 L780.6 111.5 L783.1 109.9 L785.6 108.3 L788.1 106.7 L790.6 105.1 L793.1 103.6 L795.6 102.0 L798.1 100.4 L800.6 98.8 L803.1 97.2 L805.7 95.7 L808.2 94.1 L810.7 92.5 L813.3 91.0 L815.8 89.4 L818.3 87.9 L820.9 86.3 L823.4 84.8 L826.0 83.2 L828.5 81.7 L831.1 80.1 L833.6 78.6 L836.1 77.1 L838.7 75.5 L841.2 74.0 L843.7 72.5 L846.2 71.0 L848.7 69.5 L851.2 68.1 L853.7 66.6 L856.2 65.1 L858.7 63.7 L861.1 62.3 L863.6 60.9 L866.0 59.5 L868.3 58.1 L870.7 56.8 L873.0 55.5 L875.3 54.2 L877.6 52.9 L879.8 51.8 L882.0 50.6 L884.1 49.5 L886.1 48.5 L888.1 47.6 L890.1 46.8 L891.9 46.0 L893.8 45.4 L895.5 44.9 L897.2 44.6 L898.9 44.4 L900.5 44.4 L902.1 44.5 L903.7 44.7 L905.3 45.2 L907.0 45.7 L908.7 46.4 L910.4 47.2 L912.2 48.0 L914.0 49.0 L915.9 50.1 L917.7 51.2 L919.7 52.3 L921.6 53.5 L923.6 54.8 L925.6 56.1 L927.7 57.4 L929.8 58.8 L931.9 60.1 L934.0 61.5 L936.1 63.0 L938.2 64.4 L940.4 65.8 L942.5 67.3 L944.7 68.8 L946.9 70.3 L949.0 71.8 L951.2 73.3 L953.4 74.8 L955.6 76.3 L957.8 77.8 L960.0 79.3 L962.2 80.9 L964.4 82.4 L966.6 84.0 L968.9 85.5 L971.1 87.1 L973.3 88.6 L975.5 90.2 L977.7 91.7 L979.9 93.3 L982.1 94.9 L984.3 96.4 L986.5 98.0 L988.7 99.6 L990.8 101.2 L993.0 102.7 L995.2 104.3 L997.4 105.9 L999.5 107.5 L1001.7 109.1 L1003.9 110.7 L1006.0 112.2 L1008.1 113.8 L1010.3 115.4 L1012.4 117.0 L1014.5 118.6 L1016.6 120.2 L1018.8 121.8 L1020.9 123.4 L1023.0 125.0 L1025.0 126.6 L1027.1 128.2 L1029.2 129.8 L1031.2 131.4 L1033.3 133.0 L1035.3 134.6 M609.0 261.0 L609.7 259.4 L610.4 257.8 L611.2 256.1 L612.0 254.5 L612.8 252.9 L613.6 251.3 L614.4 249.7 L615.3 248.1 L616.2 246.4 L617.1 244.8 L618.0 243.2 L618.9 241.6 L619.9 240.0 L620.9 238.4 L621.9 236.7 L622.9 235.1 L624.0 233.5 L625.1 231.9 L626.1 230.3 L627.3 228.7 L628.4 227.1 L629.5 225.4 L630.7 223.8 L631.9 222.2 L633.1 220.6 L634.4 219.0 L635.6 217.4 L636.9 215.7 L638.2 214.1 L639.5 212.5 L640.8 210.9 L642.2 209.3 L643.6 207.7 L645.0 206.1 L646.4 204.4 L647.8 202.8 L649.3 201.2 L650.7 199.6 L652.2 198.0 L653.7 196.4 L655.2 194.8 L656.8 193.1 L658.4 191.5 L659.9 189.9 L661.5 188.3 L663.1 186.7 L664.8 185.1 L666.4 183.5 L668.1 181.8 L669.8 180.2 L671.5 178.6 L673.2 177.0 L674.9 175.4 L676.7 173.8 L678.5 172.2 L680.2 170.6 L682.1 168.9 L683.9 167.3 L685.7 165.7 L687.6 164.1 L689.4 162.5 L691.3 160.9 L693.2 159.3 L695.1 157.7 L697.0 156.1 L699.0 154.5 L700.9 152.8 L702.9 151.2 L704.9 149.6 L706.9 148.0 L708.9 146.4 L710.9 144.8 L713.0 143.2 L715.0 141.6 L717.1 140.0 L719.2 138.4 L721.3 136.8 L723.4 135.2 L725.5 133.6 L727.6 132.0 L729.8 130.4 L731.9 128.8 L734.1 127.2 L736.3 125.6 L738.5 124.0 L740.7 122.4 L742.9 120.8 L745.1 119.2 L747.3 117.6 L749.6 116.0 L751.8 114.4 L754.1 112.8 L756.4 111.2 L758.6 109.6 L760.9 108.0 L763.2 106.4 L765.5 104.8 L767.8 103.2 L770.2 101.6 L772.5 100.1 L774.8 98.5 L777.2 96.9 L779.5 95.3 L781.8 93.7 L784.2 92.2 L786.6 90.6 L788.9 89.0 L791.3 87.5 L793.7 85.9 L796.0 84.3 L798.4 82.8 L800.8 81.2 L803.1 79.7 L805.5 78.1 L807.9 76.6 L810.2 75.0 L812.6 73.5 L814.9 72.0 L817.3 70.5 L819.6 69.0 L821.9 67.5 L824.2 66.0 L826.5 64.5 L828.8 63.0 L831.0 61.6 L833.3 60.2 L835.4 58.7 L837.6 57.3 L839.7 56.0 L841.7 54.6 L843.7 53.3 L845.6 52.0 L847.4 50.8 L849.0 49.6 L850.6 48.5 L851.9 47.5 L853.1 46.5 L854.0 45.6 L854.7 44.8 L855.0 44.2 L854.9 43.7 L854.4 43.3 L853.4 43.1 L949.4 43.1 L948.1 43.2 L947.4 43.5 L947.1 44.0 L947.2 44.6 L947.7 45.3 L948.4 46.1 L949.4 47.1 L950.6 48.1 L952.0 49.2 L953.5 50.4 L955.1 51.6 L956.8 52.8 L958.6 54.1 L960.4 55.5 L962.4 56.8 L964.3 58.2 L966.3 59.6 L968.4 61.1 L970.5 62.5 L972.6 64.0 L974.7 65.4 L976.8 66.9 L979.0 68.4 L981.1 69.9 L983.3 71.4 L985.5 73.0 L987.7 74.5 L989.9 76.0 L992.1 77.6 L994.3 79.1 L996.5 80.6 L998.7 82.2 L1000.9 83.8 L1003.1 85.3 L1005.3 86.9 L1007.5 88.4 L1009.7 90.0 L1011.9 91.6 L1014.1 93.2 L1016.3 94.7 L1018.4 96.3 L1020.6 97.9 L1022.8 99.5 L1024.9 101.1 L1027.1 102.6 L1029.3 104.2 L1031.4 105.8 L1033.5 107.4 L1035.7 109.0 L1037.8 110.6 L1039.9 112.2 L1042.0 113.8 L1044.1 115.4 L1046.2 117.0 L1048.3 118.6 L1050.3 120.2 L1052.4 121.8 L1054.4 123.4 L1056.5 125.0 L1058.5 126.6 L1060.5 128.2 L1062.5 129.8 M609.0 261.0 L609.5 259.4 L610.1 257.8 L610.6 256.2 L611.2 254.6 L611.8 253.0 L612.4 251.4 L613.1 249.8 L613.7 248.3 L614.4 246.7 L615.1 245.1 L615.9 243.5 L616.6 241.9 L617.4 240.3 L618.2 238.7 L619.0 237.1 L619.8 235.5 L620.7 233.9 L621.5 232.3 L622.4 230.7 L623.3 229.2 L624.3 227.6 L625.2 226.0 L626.2 224.4 L627.2 222.8 L628.2 221.2 L629.2 219.6 L630.3 218.0 L631.3 216.5 L632.4 214.9 L633.5 213.3 L634.7 211.7 L635.8 210.1 L637.0 208.5 L638.1 206.9 L639.3 205.4 L640.6 203.8 L641.8 202.2 L643.1 200.6 L644.3 199.0 L645.6 197.4 L646.9 195.9 L648.3 194.3 L649.6 192.7 L651.0 191.1 L652.3 189.6 L653.7 188.0 L655.1 186.4 L656.6 184.8 L658.0 183.3 L659.5 181.7 L661.0 180.1 L662.5 178.5 L664.0 177.0 L665.5 175.4 L667.0 173.8 L668.6 172.3 L670.2 170.7 L671.8 169.1 L673.4 167.6 L675.0 166.0 L676.6 164.4 L678.2 162.9 L679.9 161.3 L681.6 159.8 L683.3 158.2 L685.0 156.6 L686.7 155.1 L688.4 153.5 L690.1 152.0 L691.9 150.4 L693.7 148.9 L695.4 147.3 L697.2 145.8 L699.0 144.3 L700.8 142.7 L702.6 141.2 L704.5 139.6 L706.3 138.1 L708.1 136.6 L710.0 135.0 L711.9 133.5 L713.7 132.0 L715.6 130.5 L717.5 129.0 L719.4 127.4 L721.3 125.9 L723.2 124.4 L725.1 122.9 L727.1 121.4 L729.0 119.9 L730.9 118.4 L732.8 116.9 L734.8 115.5 L736.7 114.0 L738.7 112.5 L740.6 111.0 L742.5 109.6 L744.5 108.1 L746.4 106.7 L748.4 105.2 L750.3 103.8 L752.2 102.3 L754.1 100.9 L756.0 99.5 L758.0 98.1 L759.9 96.7 L761.7 95.3 L763.6 93.9 L765.5 92.6 L767.3 91.2 L769.1 89.9 L770.9 88.5 L772.7 87.2 L774.5 85.9 L776.2 84.6 L777.9 83.4 L779.6 82.1 L781.2 80.9 L782.8 79.7 L784.3 78.5 L785.8 77.4 L787.2 76.2 L788.6 75.1 L789.9 74.0 L791.1 73.0 L792.3 72.0 L793.3 71.0 L794.3 70.1 L795.2 69.2 L796.0 68.3 L796.6 67.5 L797.1 66.8 L797.5 66.1 L797.7 65.5 L797.8 64.9 L797.7 64.4 L797.4 63.9 L796.9 63.5 L796.3 63.2 L795.4 62.9 L794.3 62.8 L793.0 62.7 M1010.6 62.6 L1009.2 62.7 L1007.9 62.8 L1006.9 63.0 L1006.0 63.3 L1005.4 63.6 L1005.0 64.0 L1004.7 64.5 L1004.7 65.0 L1004.8 65.6 L1005.0 66.3 L1005.4 67.0 L1005.9 67.8 L1006.6 68.6 L1007.3 69.4 L1008.2 70.3 L1009.1 71.3 L1010.2 72.3 L1011.3 73.3 L1012.6 74.3 L1013.8 75.4 L1015.2 76.5 L1016.6 77.7 L1018.0 78.9 L1019.5 80.0 L1021.1 81.3 L1022.7 82.5 L1024.3 83.7 L1025.9 85.0 L1027.6 86.3 L1029.3 87.6 L1031.1 88.9 L1032.8 90.3 L1034.6 91.6 L1036.4 93.0 L1038.2 94.3 L1040.0 95.7 L1041.9 97.1 L1043.7 98.5 L1045.6 99.9 L1047.4 101.3 L1049.3 102.8 L1051.2 104.2 L1053.1 105.6 L1054.9 107.1 L1056.8 108.5 L1058.7 110.0 L1060.6 111.5 L1062.5 112.9 L1064.4 114.4 L1066.2 115.9 L1068.1 117.4 L1070.0 118.9 L1071.9 120.4 L1073.7 121.9 L1075.6 123.4 L1077.5 124.9 L1079.3 126.4 M609.0 261.0 L609.3 259.5 L609.7 257.9 L610.1 256.4 L610.4 254.8 L610.9 253.3 L611.3 251.7 L611.7 250.2 L612.2 248.6 L612.7 247.1 L613.2 245.6 L613.7 244.0 L614.3 242.5 L614.8 240.9 L615.4 239.4 L616.0 237.9 L616.6 236.3 L617.3 234.8 L617.9 233.3 L618.6 231.7 L619.3 230.2 L620.0 228.7 L620.8 227.1 L621.5 225.6 L622.3 224.1 L623.1 222.5 L623.9 221.0 L624.7 219.5 L625.6 217.9 L626.4 216.4 L627.3 214.9 L628.2 213.4 L629.1 211.8 L630.0 210.3 L631.0 208.8 L631.9 207.3 L632.9 205.8 L633.9 204.2 L634.9 202.7 L636.0 201.2 L637.0 199.7 L638.1 198.2 L639.2 196.7 L640.3 195.1 L641.4 193.6 L642.5 192.1 L643.6 190.6 L644.8 189.1 L646.0 187.6 L647.1 186.1 L648.3 184.6 L649.5 183.1 L650.8 181.6 L652.0 180.1 L653.3 178.6 L654.5 177.1 L655.8 175.7 L657.1 174.2 L658.4 172.7 L659.7 171.2 L661.1 169.7 L662.4 168.3 L663.8 166.8 L665.1 165.3 L666.5 163.8 L667.9 162.4 L669.3 160.9 L670.7 159.5 L672.1 158.0 L673.5 156.5 L675.0 155.1 L676.4 153.6 L677.9 152.2 L679.3 150.8 L680.8 149.3 L682.3 147.9 L683.7 146.5 L685.2 145.1 L686.7 143.6 L688.2 142.2 L689.7 140.8 L691.2 139.4 L692.7 138.0 L694.2 136.6 L695.8 135.2 L697.3 133.8 L698.8 132.5 L700.3 131.1 L701.8 129.7 L703.3 128.4 L704.8 127.0 L706.4 125.7 L707.9 124.3 L709.4 123.0 L710.9 121.7 L712.4 120.4 L713.8 119.1 L715.3 117.8 L716.8 116.5 L718.2 115.2 L719.7 114.0 L721.1 112.7 L722.5 111.5 L723.9 110.3 L725.3 109.1 L726.6 107.9 L728.0 106.7 L729.3 105.5 L730.5 104.3 L731.8 103.2 L733.0 102.1 L734.2 101.0 L735.4 99.9 L736.5 98.8 L737.6 97.8 L738.7 96.8 L739.7 95.8 L740.6 94.8 L741.5 93.8 L742.4 92.9 L743.2 92.0 L743.9 91.1 L744.6 90.2 L745.2 89.4 L745.7 88.6 L746.1 87.9 L746.5 87.1 L746.8 86.5 L747.0 85.8 L747.1 85.2 L747.1 84.6 L747.0 84.1 L746.8 83.6 L746.5 83.1 L746.1 82.7 L745.6 82.3 L744.9 82.0 L744.1 81.7 L743.2 81.4 L742.1 81.3 L741.0 81.1 L739.6 81.0 L738.2 81.0 L736.6 81.0 M1066.0 81.0 L1064.7 81.1 L1063.5 81.2 L1062.4 81.4 L1061.5 81.6 L1060.7 81.9 L1060.0 82.2 L1059.5 82.6 L1059.0 83.0 L1058.7 83.5 L1058.5 84.0 L1058.4 84.5 L1058.4 85.1 L1058.5 85.7 L1058.7 86.4 L1059.0 87.0 L1059.4 87.8 L1059.9 88.5 L1060.4 89.3 L1061.0 90.1 L1061.7 91.0 M609.0 261.0 L609.2 259.5 L609.4 258.0 L609.6 256.5 L609.9 255.0 L610.1 253.5 L610.4 252.0 L610.7 250.5 L611.0 249.0 L611.4 247.5 L611.7 246.0 L612.1 244.5 L612.5 243.0 L612.9 241.5 L613.3 240.0 L613.7 238.6 L614.2 237.1 L614.7 235.6 L615.2 234.1 L615.7 232.6 L616.2 231.1 L616.8 229.6 L617.3 228.1 L617.9 226.7 L618.5 225.2 L619.1 223.7 L619.8 222.2 L620.4 220.8 L621.1 219.3 L621.7 217.8 L622.4 216.3 L623.2 214.9 L623.9 213.4 L624.6 211.9 L625.4 210.5 L626.2 209.0 L627.0 207.5 L627.8 206.1 L628.6 204.6 L629.4 203.2 L630.3 201.7 L631.1 200.3 L632.0 198.8 L632.9 197.4 L633.8 195.9 L634.7 194.5 L635.7 193.0 L636.6 191.6 L637.6 190.1 L638.5 188.7 L639.5 187.3 L640.5 185.8 L641.5 184.4 L642.5 183.0 L643.6 181.6 L644.6 180.2 L645.7 178.7 L646.7 177.3 L647.8 175.9 L648.9 174.5 L650.0 173.1 L651.1 171.7 L652.2 170.3 L653.3 168.9 L654.4 167.5 L655.6 166.2 L656.7 164.8 L657.9 163.4 L659.0 162.0 L660.2 160.7 L661.4 159.3 L662.6 158.0 L663.7 156.6 L664.9 155.3 L666.1 153.9 L667.3 152.6 L668.5 151.3 L669.7 149.9 L670.9 148.6 L672.1 147.3 L673.3 146.0 L674.5 144.7 L675.7 143.4 L676.9 142.1 L678.1 140.9 L679.3 139.6 L680.5 138.3 L681.7 137.1 L682.8 135.8 L684.0 134.6 L685.2 133.4 L686.3 132.2 L687.5 131.0 L688.6 129.8 L689.8 128.6 L690.9 127.4 L692.0 126.2 L693.1 125.1 L694.1 124.0 L695.2 122.8 L696.2 121.7 L697.3 120.6 L698.3 119.5 L699.2 118.5 L700.2 117.4 L701.1 116.4 L702.0 115.3 L702.9 114.3 L703.7 113.3 L704.5 112.4 L705.3 111.4 L706.0 110.5 L706.7 109.6 L707.4 108.7 L708.0 107.8 L708.5 106.9 L709.0 106.1 L709.5 105.3 L709.9 104.5 L710.3 103.8 L710.6 103.0 L710.8 102.3 L711.0 101.7 L711.1 101.0 L711.1 100.4 L711.1 99.8 L711.0 99.2 L710.8 98.7 L710.6 98.2 L710.2 97.7 L709.8 97.3 L709.3 96.9 L708.7 96.5 L708.0 96.2 L707.2 95.9 L706.4 95.6 L705.4 95.4 L704.3 95.2 L703.1 95.1 L701.8 94.9 L700.5 94.9 L699.0 94.8 L697.4 94.8 L695.7 94.9 M1108.0 94.9 L1106.7 95.0 L1105.5 95.2 L1104.4 95.3 L1103.4 95.6 L1102.5 95.8 L1101.7 96.1 L1101.0 96.4 L1100.4 96.8 L1099.9 97.2 L1099.5 97.6 L1099.2 98.1 L1098.9 98.5" fill="none" stroke="#ffa500" stroke-width="1.39" stroke-dasharray="1.39 2.29"/>
<path d="M980.7 78.3 L981.1 78.7 L981.6 79.0 L982.0 79.3 L982.5 79.6 L983.0 80.0 L983.4 80.3 L983.9 80.6 L984.4 80.9 L984.8 81.3 L985.3 81.6 L985.7 81.9 L986.2 82.2 L986.7 82.5 L987.1 82.9 L987.6 83.2 L988.0 83.5 L988.5 83.8 L989.0 84.2 L989.4 84.5 L989.9 84.8 L990.3 85.1 L990.8 85.5 L991.3 85.8 L991.7 86.1 L992.2 86.4 L992.6 86.7 L993.1 87.1 L993.5 87.4 L994.0 87.7 L994.4 88.0 L994.9 88.4 L995.4 88.7 L995.8 89.0 L996.3 89.3 L996.7 89.7 L997.2 90.0 L997.6 90.3 L998.1 90.6 L998.5 91.0 L999.0 91.3 L999.4 91.6 L999.9 91.9 L1000.4 92.2 L1000.8 92.6 L1001.3 92.9 L1001.7 93.2 L1002.2 93.5 L1002.6 93.9 L1003.1 94.2 L1003.5 94.5 L1004.0 94.8 L1004.4 95.2 L1004.9 95.5 L1005.3 95.8 L1005.8 96.1 L1006.2 96.5 L1006.7 96.8 L1007.1 97.1 M998.9 86.3 L999.3 86.6 L999.8 87.0 L1000.2 87.3 L1000.7 87.6 L1001.1 87.9 L1001.5 88.2 L1002.0 88.5 L1002.4 88.9 L1002.9 89.2 L1003.3 89.5 L1003.8 89.8 L1004.2 90.1 L1004.7 90.5 L1005.1 90.8 L1005.6 91.1 L1006.0 91.4 L1006.4 91.7 L1006.9 92.0 L1007.3 92.4 L1007.8 92.7 L1008.2 93.0 L1008.7 93.3 L1009.1 93.6 L1009.5 93.9 L1010.0 94.3 L1010.4 94.6 L1010.9 94.9 L1011.3 95.2 L1011.8 95.5 L1012.2 95.9 L1012.6 96.2 L1013.1 96.5 L1013.5 96.8 L1014.0 97.1 L1014.4 97.5 L1014.8 97.8 L1015.3 98.1 L1015.7 98.4 L1016.1 98.7 L1016.6 99.0 L1017.0 99.4 L1017.5 99.7 L1017.9 100.0 M1009.9 115.8 L1010.3 116.1 L1010.8 116.5 L1011.2 116.8 L1011.6 117.1 L1012.0 117.4 L1012.5 117.7 L1012.9 118.0 L1013.3 118.4 L1013.7 118.7 L1014.2 119.0 L1014.6 119.3 L1015.0 119.6 L1015.4 120.0 L1015.9 120.3 L1016.3 120.6 L1016.7 120.9 L1017.1 121.2 L1017.5 121.5 L1018.0 121.9 L1018.4 122.2 L1018.8 122.5 L1019.2 122.8 L1019.6 123.1 L1020.1 123.5 L1020.5 123.8 L1020.9 124.1 L1021.3 124.4 L1021.7 124.7 L1022.1 125.0 L1022.6 125.4 L1023.0 125.7 L1023.4 126.0 M1035.3 134.6 L1035.7 134.9 L1036.1 135.2 L1036.5 135.5 L1036.9 135.8 L1037.3 136.1 L1037.7 136.4 L1038.1 136.8 L1038.5 137.1 L1038.9 137.4 L1039.3 137.7 L1039.7 138.0 L1040.1 138.3 L1040.5 138.6 L1040.9 138.9 L1041.2 139.2 L1041.6 139.6 L1042.0 139.9 L1042.4 140.2 L1042.8 140.5 L1043.2 140.8 M1062.5 129.8 L1062.9 130.1 L1063.3 130.4 L1063.7 130.7 L1064.1 131.1 L1064.5 131.4 L1064.9 131.7 L1065.3 132.0 L1065.7 132.3 L1066.1 132.7 L1066.5 133.0 L1066.9 133.3 L1067.3 133.6 L1067.7 133.9 L1068.1 134.3 L1068.5 134.6 L1068.9 134.9 L1069.3 135.2 L1069.7 135.6 L1070.0 135.9 L1070.4 136.2 L1070.8 136.5 L1071.2 136.8 L1071.6 137.2 L1072.0 137.5 L1072.4 137.8 L1072.8 138.1 L1073.2 138.4 L1073.5 138.8 L1073.9 139.1 L1074.3 139.4 L1074.7 139.7 L1075.1 140.1 L1075.5 140.4 L1075.9 140.7 L1076.2 141.0 L1076.6 141.3 L1077.0 141.7 L1077.4 142.0 L1077.8 142.3 L1078.2 142.6 L1078.5 142.9 L1078.9 143.3 L1079.3 143.6 L1079.7 143.9 L1080.1 144.2 L1080.4 144.6 L1080.8 144.9 L1081.2 145.2 M1079.3 126.4 L1079.7 126.7 L1080.0 127.0 L1080.4 127.3 L1080.8 127.6 L1081.1 127.9 L1081.5 128.2 L1081.9 128.5 L1082.2 128.8 L1082.6 129.1 L1083.0 129.4 L1083.3 129.7 L1083.7 130.0 L1084.0 130.3 L1084.4 130.6 L1084.8 130.9 L1085.1 131.2 L1085.5 131.5 L1085.9 131.8 L1086.2 132.1 L1086.6 132.4 L1086.9 132.7 L1087.3 133.0 L1087.7 133.3 L1088.0 133.6 L1088.4 133.9 L1088.7 134.2 L1089.1 134.5 L1089.4 134.8 L1089.8 135.1 L1090.2 135.4 L1090.5 135.7 L1090.9 136.0 L1091.2 136.3 L1091.6 136.6 L1091.9 136.9 L1092.3 137.2 M1061.7 91.0 L1061.8 91.1 L1062.0 91.3 L1062.1 91.5 L1062.3 91.7 L1062.4 91.8 L1062.6 92.0 L1062.7 92.2 L1062.9 92.4 L1063.1 92.5 L1063.2 92.7 L1063.4 92.9 L1063.6 93.1 L1063.7 93.3 L1063.9 93.5 L1064.1 93.7 L1064.3 93.8 L1064.5 94.0 L1064.6 94.2 L1064.8 94.4 L1065.0 94.6 L1065.2 94.8 L1065.4 95.0 L1065.6 95.2 L1065.8 95.4 L1066.0 95.6 L1066.2 95.8 L1066.4 96.0 L1066.6 96.2 L1066.8 96.4 L1067.0 96.6 L1067.2 96.8 L1067.4 97.0 L1067.6 97.2 L1067.8 97.4 L1068.0 97.6 L1068.3 97.8 L1068.5 98.0 L1068.7 98.2 M1098.9 98.5 L1098.9 98.6 L1098.9 98.8 L1098.8 98.9 L1098.8 99.0 L1098.8 99.1 L1098.8 99.2 L1098.7 99.3 L1098.7 99.4 L1098.7 99.5 L1098.7 99.6 L1098.7 99.7 L1098.7 99.9 L1098.7 100.0 L1098.7 100.1 L1098.7 100.2 L1098.7 100.3 L1098.7 100.4 L1098.7 100.6 L1098.7 100.7 L1098.8 100.8 L1098.8 100.9 L1098.8 101.1 L1098.8 101.2 L1098.9 101.3 L1098.9 101.5 L1098.9 101.6 L1099.0 101.7 L1099.0 101.9 L1099.1 102.0 L1099.1 102.1 L1099.2 102.3 L1099.2 102.4 L1099.3 102.5 L1099.3 102.7 L1099.4 102.8 L1099.4 103.0 L1099.5 103.1 L1099.6 103.3 L1099.6 103.4 L1099.7 103.5 L1099.8 103.7 L1099.9 103.8 L1099.9 104.0 L1100.0 104.1 L1100.1 104.3 L1100.2 104.5 L1100.3 104.6 L1100.4 104.8 L1100.5 104.9 L1100.6 105.1 L1100.7 105.2 L1100.8 105.4 L1100.9 105.6 L1101.0 105.7 L1101.1 105.9 L1101.2 106.0 L1101.3 106.2 L1101.4 106.4 L1101.5 106.5 L1101.6 106.7 L1101.8 106.9 L1101.9 107.0 L1102.0 107.2" fill="none" stroke="#ffa500" stroke-width="1.6"/>
<circle cx="1007.1" cy="97.1" r="1.5" fill="#ff6040"/>
<circle cx="1017.9" cy="100.0" r="1.5" fill="#ff6040"/>
<circle cx="1023.4" cy="126.0" r="1.5" fill="#ff6040"/>
<circle cx="1043.2" cy="140.8" r="1.5" fill="#ff6040"/>
<circle cx="1081.2" cy="145.2" r="1.5" fill="#ff6040"/>
<circle cx="1092.3" cy="137.2" r="1.5" fill="#ff6040"/>
<circle cx="1068.7" cy="98.2" r="1.5" fill="#ff6040"/>
<circle cx="1102.0" cy="107.2" r="1.5" fill="#ff6040"/>
<path d="M776.0 268.0 L776.3 266.4 L776.5 264.8 L776.8 263.1 L777.1 261.5 L777.4 259.9 L777.7 258.3 L778.0 256.7 L778.3 255.1 L778.6 253.5 L779.0 251.8 L779.3 250.2 L779.7 248.6 L780.1 247.0 L780.4 245.4 L780.8 243.8 L781.2 242.1 L781.6 240.5 L782.0 238.9 L782.5 237.3 L782.9 235.7 L783.3 234.1 L783.8 232.4 L784.2 230.8 L784.7 229.2 L785.2 227.6 L785.7 226.0 L786.2 224.4 L786.7 222.7 L787.2 221.1 L787.7 219.5 L788.2 217.9 L788.8 216.3 L789.3 214.7 L789.8 213.0 L790.4 211.4 L791.0 209.8 L791.6 208.2 L792.1 206.6 L792.7 205.0 L793.3 203.3 L794.0 201.7 L794.6 200.1 L795.2 198.5 L795.8 196.9 L796.5 195.3 L797.1 193.6 L797.8 192.0 L798.5 190.4 L799.1 188.8 L799.8 187.2 L800.5 185.6 L801.2 183.9 L801.9 182.3 L802.6 180.7 L803.3 179.1 L804.1 177.5 L804.8 175.9 L805.5 174.3 L806.3 172.6 L807.1 171.0 L807.8 169.4 L808.6 167.8 L809.4 166.2 L810.1 164.6 L810.9 162.9 L811.7 161.3 L812.5 159.7 L813.4 158.1 L814.2 156.5 L815.0 154.9 L815.8 153.3 L816.7 151.6 L817.5 150.0 L818.4 148.4 L819.2 146.8 L820.1 145.2 L820.9 143.6 L821.8 142.0 L822.7 140.3 L823.6 138.7 L824.5 137.1 L825.4 135.5 L826.3 133.9 L827.2 132.3 L828.1 130.7 L829.0 129.0 L830.0 127.4 L830.9 125.8 L831.8 124.2 L832.8 122.6 L833.7 121.0 L834.7 119.4 L835.6 117.7 L836.6 116.1 L837.5 114.5 L838.5 112.9 L839.5 111.3 L840.5 109.7 L841.5 108.1 L842.4 106.5 L843.4 104.9 L844.4 103.2 L845.4 101.6 L846.4 100.0 L847.5 98.4 L848.5 96.8 L849.5 95.2 L850.5 93.6 L851.5 92.0 L852.6 90.4 L853.6 88.8 L854.6 87.2 L855.7 85.6 L856.7 84.0 L857.7 82.3 L858.8 80.7 L859.8 79.1 L860.9 77.5 L861.9 75.9 L863.0 74.3 L864.0 72.7 L865.1 71.1 L866.2 69.6 L867.2 68.0 L868.3 66.4 L869.3 64.8 L870.4 63.2 L871.5 61.6 L872.5 60.0 L873.6 58.5 L874.6 56.9 L875.7 55.3 L876.7 53.8 L877.8 52.2 L878.8 50.7 L879.8 49.1 L880.9 47.6 L881.9 46.1 L882.8 44.6 L883.8 43.2 L884.7 41.8 L885.5 40.4 L886.3 39.1 L887.0 37.9 L887.4 36.8 L887.6 35.8 L887.4 35.2 L886.6 34.8 L885.1 34.7 L882.7 35.1 L879.5 35.7 L875.6 36.6 L871.2 37.7 L937.4 38.9 L940.5 40.2 L943.7 41.5 L947.1 42.9 L950.5 44.4 L954.1 45.9 L957.7 47.4 L961.4 48.9 L965.1 50.4 L968.8 51.9 L972.5 53.5 L976.3 55.1 L980.1 56.6 L983.8 58.2 M776.0 268.0 L776.4 266.4 L776.9 264.8 L777.3 263.1 L777.8 261.5 L778.3 259.9 L778.7 258.3 L779.2 256.7 L779.7 255.0 L780.2 253.4 L780.7 251.8 L781.3 250.2 L781.8 248.6 L782.3 246.9 L782.9 245.3 L783.5 243.7 L784.0 242.1 L784.6 240.5 L785.2 238.9 L785.8 237.2 L786.4 235.6 L787.0 234.0 L787.6 232.4 L788.3 230.8 L788.9 229.1 L789.6 227.5 L790.2 225.9 L790.9 224.3 L791.6 222.7 L792.2 221.0 L792.9 219.4 L793.6 217.8 L794.3 216.2 L795.0 214.6 L795.8 213.0 L796.5 211.3 L797.2 209.7 L798.0 208.1 L798.7 206.5 L799.5 204.9 L800.3 203.2 L801.0 201.6 L801.8 200.0 L802.6 198.4 L803.4 196.8 L804.2 195.2 L805.0 193.5 L805.9 191.9 L806.7 190.3 L807.5 188.7 L808.4 187.1 L809.2 185.4 L810.1 183.8 L811.0 182.2 L811.8 180.6 L812.7 179.0 L813.6 177.4 L814.5 175.7 L815.4 174.1 L816.3 172.5 L817.2 170.9 L818.1 169.3 L819.0 167.7 L820.0 166.1 L820.9 164.4 L821.8 162.8 L822.8 161.2 L823.7 159.6 L824.7 158.0 L825.7 156.4 L826.6 154.7 L827.6 153.1 L828.6 151.5 L829.6 149.9 L830.6 148.3 L831.6 146.7 L832.6 145.1 L833.6 143.4 L834.6 141.8 L835.6 140.2 L836.6 138.6 L837.6 137.0 L838.7 135.4 L839.7 133.8 L840.8 132.2 L841.8 130.6 L842.8 128.9 L843.9 127.3 L845.0 125.7 L846.0 124.1 L847.1 122.5 L848.2 120.9 L849.2 119.3 L850.3 117.7 L851.4 116.1 L852.5 114.5 L853.6 112.9 L854.6 111.3 L855.7 109.7 L856.8 108.1 L857.9 106.4 L859.0 104.8 L860.1 103.2 L861.2 101.6 L862.4 100.0 L863.5 98.4 L864.6 96.8 L865.7 95.3 L866.8 93.7 L867.9 92.1 L869.1 90.5 L870.2 88.9 L871.3 87.3 L872.4 85.7 L873.6 84.1 L874.7 82.5 L875.8 81.0 L877.0 79.4 L878.1 77.8 L879.2 76.2 L880.3 74.7 L881.5 73.1 L882.6 71.5 L883.7 70.0 L884.9 68.4 L886.0 66.9 L887.1 65.4 L888.2 63.8 L889.4 62.3 L890.5 60.8 L891.6 59.3 L892.7 57.8 L893.8 56.3 L894.9 54.9 L896.0 53.4 L897.1 52.0 L898.2 50.6 L899.3 49.3 L900.4 47.9 L901.5 46.7 L902.5 45.5 L903.6 44.3 L904.7 43.3 L905.8 42.3 L906.9 41.5 L908.1 40.8 L909.4 40.3 L910.8 39.9 L912.3 39.8 L914.0 39.9 L915.9 40.2 L918.1 40.7 L920.4 41.4 L922.9 42.2 L925.6 43.2 L928.5 44.2 L931.5 45.3 L934.6 46.6 L937.9 47.8 L941.1 49.1 L944.5 50.5 L947.9 51.9 L951.4 53.3 L954.9 54.7 L958.5 56.2 L962.1 57.7 L965.7 59.2 L969.3 60.7 L972.9 62.2 L976.6 63.7 L980.3 65.2 L983.9 66.8 L987.6 68.3 L991.3 69.8 L995.0 71.4 L998.7 73.0 L1002.4 74.5 L1006.1 76.1 M776.0 268.0 L776.6 266.4 L777.3 264.8 L777.9 263.2 L778.5 261.6 L779.2 260.0 L779.9 258.4 L780.6 256.8 L781.2 255.2 L781.9 253.6 L782.6 252.0 L783.4 250.4 L784.1 248.9 L784.8 247.3 L785.5 245.7 L786.3 244.1 L787.0 242.5 L787.8 240.9 L788.6 239.3 L789.4 237.7 L790.2 236.1 L790.9 234.5 L791.8 232.9 L792.6 231.3 L793.4 229.7 L794.2 228.1 L795.1 226.6 L795.9 225.0 L796.7 223.4 L797.6 221.8 L798.5 220.2 L799.3 218.6 L800.2 217.0 L801.1 215.4 L802.0 213.8 L802.9 212.2 L803.8 210.7 L804.7 209.1 L805.7 207.5 L806.6 205.9 L807.5 204.3 L808.5 202.7 L809.4 201.1 L810.4 199.6 L811.3 198.0 L812.3 196.4 L813.3 194.8 L814.3 193.2 L815.3 191.7 L816.2 190.1 L817.2 188.5 L818.3 186.9 L819.3 185.3 L820.3 183.8 L821.3 182.2 L822.3 180.6 L823.4 179.0 L824.4 177.5 L825.4 175.9 L826.5 174.3 L827.5 172.7 L828.6 171.2 L829.7 169.6 L830.7 168.0 L831.8 166.5 L832.9 164.9 L834.0 163.3 L835.1 161.8 L836.1 160.2 L837.2 158.6 L838.3 157.1 L839.4 155.5 L840.5 154.0 L841.6 152.4 L842.8 150.9 L843.9 149.3 L845.0 147.8 L846.1 146.2 L847.2 144.7 L848.4 143.1 L849.5 141.6 L850.6 140.0 L851.8 138.5 L852.9 137.0 L854.1 135.4 L855.2 133.9 L856.4 132.4 L857.5 130.8 L858.7 129.3 L859.8 127.8 L861.0 126.3 L862.1 124.7 L863.3 123.2 L864.4 121.7 L865.6 120.2 L866.8 118.7 L867.9 117.2 L869.1 115.7 L870.2 114.2 L871.4 112.8 L872.6 111.3 L873.7 109.8 L874.9 108.3 L876.1 106.9 L877.2 105.4 L878.4 104.0 L879.5 102.5 L880.7 101.1 L881.9 99.6 L883.0 98.2 L884.2 96.8 L885.3 95.4 L886.5 94.0 L887.7 92.6 L888.8 91.3 L890.0 89.9 L891.1 88.5 L892.3 87.2 L893.4 85.9 L894.6 84.6 L895.7 83.3 L896.8 82.0 L898.0 80.8 L899.1 79.5 L900.3 78.3 L901.4 77.1 L902.5 76.0 L903.7 74.8 L904.8 73.7 L905.9 72.7 L907.1 71.6 L908.2 70.6 L909.4 69.6 L910.5 68.7 L911.7 67.8 L912.9 67.0 L914.1 66.2 L915.3 65.4 L916.5 64.8 L917.8 64.1 L919.0 63.6 L920.3 63.1 L921.7 62.6 L923.1 62.3 L924.5 62.0 L925.9 61.8 L927.5 61.6 L929.0 61.6 L930.7 61.6 L932.4 61.7 L934.2 61.9 L936.0 62.1 L937.9 62.4 L939.9 62.8 L941.9 63.3 L944.1 63.8 L946.3 64.4 L948.5 65.0 L950.9 65.7 L953.3 66.5 L955.8 67.3 L958.3 68.1 L960.9 69.0 L963.6 70.0 M776.0 268.0 L776.6 266.4 L777.2 264.8 L777.8 263.2 L778.4 261.6 L779.0 260.0 L779.6 258.4 L780.3 256.8 L780.9 255.2 L781.6 253.6 L782.2 252.0 L782.9 250.4 L783.6 248.8 L784.3 247.3 L785.0 245.7 L785.7 244.1 L786.4 242.5 L787.1 240.9 L787.9 239.3 L788.6 237.7 L789.4 236.1 L790.1 234.5 L790.9 232.9 L791.7 231.3 L792.5 229.7 L793.2 228.1 L794.0 226.5 L794.8 224.9 L795.7 223.4 L796.5 221.8 L797.3 220.2 L798.1 218.6 L799.0 217.0 L799.8 215.4 L800.7 213.8 L801.6 212.2 L802.4 210.6 L803.3 209.0 L804.2 207.4 L805.1 205.9 L806.0 204.3 L806.9 202.7 L807.8 201.1 L808.7 199.5 L809.7 197.9 L810.6 196.3 L811.5 194.8 L812.5 193.2 L813.4 191.6 L814.4 190.0 L815.4 188.4 L816.3 186.8 L817.3 185.3 L818.3 183.7 L819.3 182.1 L820.3 180.5 L821.3 178.9 L822.3 177.3 L823.3 175.8 L824.3 174.2 L825.3 172.6 L826.4 171.0 L827.4 169.5 L828.4 167.9 L829.5 166.3 L830.5 164.7 L831.6 163.2 L832.6 161.6 L833.7 160.0 L834.8 158.5 L835.8 156.9 L836.9 155.3 L838.0 153.7 L839.1 152.2 L840.2 150.6 L841.2 149.1 L842.3 147.5 L843.4 145.9 L844.5 144.4 L845.6 142.8 L846.7 141.3 L847.9 139.7 L849.0 138.2 L850.1 136.6 L851.2 135.1 L852.3 133.5 L853.4 132.0 L854.6 130.4 L855.7 128.9 L856.8 127.3 L858.0 125.8 L859.1 124.3 L860.2 122.7 L861.4 121.2 L862.5 119.7 L863.7 118.1 L864.8 116.6 L866.0 115.1 L867.1 113.6 L868.3 112.1 L869.4 110.6 L870.6 109.1 L871.7 107.6 L872.8 106.1 L874.0 104.6 L875.1 103.1 L876.3 101.6 L877.4 100.2 L878.6 98.7 L879.7 97.2 L880.9 95.8 L882.0 94.3 L883.2 92.9 L884.3 91.5 L885.5 90.0 L886.6 88.6 L887.8 87.2 L888.9 85.8 L890.0 84.4 L891.2 83.1 L892.3 81.7 L893.4 80.4 L894.6 79.1 L895.7 77.7 L896.8 76.5 L897.9 75.2 L899.1 73.9 L900.2 72.7 L901.3 71.5 L902.4 70.3 L903.5 69.2 L904.7 68.1 L905.8 67.0 L906.9 66.0 L908.0 65.0 L909.2 64.0 L910.3 63.1 L911.5 62.3 L912.7 61.4 L913.9 60.7 L915.1 60.0 L916.3 59.4 L917.6 58.9 L918.9 58.4 L920.2 58.0 L921.6 57.7 L923.1 57.5 L924.6 57.4 L926.2 57.3 L927.8 57.3 L929.6 57.5 L931.4 57.7 L933.2 58.0 L935.2 58.3 L937.3 58.8 L939.4 59.3 L941.6 59.9 L943.9 60.6 L946.3 61.3 L948.8 62.1 L951.3 63.0 L953.9 63.9 L956.5 64.8 L959.3 65.8 L962.1 66.8 L964.9 67.9 L967.8 69.0 L970.7 70.2 L973.7 71.3 L976.8 72.5 L979.8 73.7 L982.9 75.0 L986.1 76.3 L989.2 77.5 L992.4 78.8 L995.6 80.2 L998.9 81.5 M776.0 268.0 L777.3 266.7 L778.5 265.4 L779.8 264.2 L781.0 262.9 L782.3 261.6 L783.6 260.4 L784.9 259.1 L786.2 257.8 L787.5 256.6 L788.8 255.3 L790.1 254.0 L791.4 252.8 L792.7 251.5 L794.0 250.3 L795.4 249.0 L796.7 247.8 L798.0 246.5 L799.3 245.3 L800.7 244.0 L802.0 242.8 L803.4 241.5 L804.7 240.3 L806.1 239.1 L807.4 237.9 L808.8 236.6 L810.2 235.4 L811.5 234.2 L812.9 233.0 L814.3 231.8 L815.7 230.5 L817.0 229.3 L818.4 228.1 L819.8 226.9 L821.2 225.7 L822.6 224.5 L824.0 223.3 L825.4 222.2 L826.8 221.0 L828.2 219.8 L829.6 218.6 L831.0 217.5 L832.4 216.3 L833.8 215.1 L835.2 214.0 L836.6 212.8 L838.0 211.7 L839.4 210.5 L840.8 209.4 L842.3 208.3 L843.7 207.1 L845.1 206.0 L846.5 204.9 L847.9 203.8 L849.3 202.7 L850.8 201.6 L852.2 200.5 L853.6 199.4 L855.0 198.3 L856.5 197.2 L857.9 196.2 L859.3 195.1 L860.7 194.0 L862.1 193.0 L863.6 191.9 L865.0 190.9 L866.4 189.9 L867.8 188.8 L869.3 187.8 L870.7 186.8 L872.1 185.8 L873.5 184.8 L875.0 183.8 L876.4 182.8 L877.8 181.9 L879.2 180.9 L880.6 180.0 L882.1 179.0 L883.5 178.1 L884.9 177.2 L886.3 176.2 L887.7 175.3 L889.2 174.4 L890.6 173.5 L892.0 172.7 L893.4 171.8 L894.8 170.9 L896.2 170.1 L897.7 169.3 L899.1 168.4 L900.5 167.6 L901.9 166.8 L903.3 166.0 L904.7 165.2 L906.2 164.5 L907.6 163.7 L909.0 163.0 L910.4 162.2 L911.8 161.5 L913.2 160.8 L914.7 160.1 L916.1 159.5 L917.5 158.8 L918.9 158.1 L920.4 157.5 L921.8 156.9 L923.2 156.3 L924.6 155.7 L926.1 155.1 L927.5 154.6 L928.9 154.0 L930.4 153.5 L931.8 153.0 L933.3 152.5 L934.7 152.0 L936.2 151.5 L937.6 151.1 L939.1 150.6 L940.5 150.2 L942.0 149.8 L943.5 149.4 L944.9 149.1 L946.4 148.7 L947.9 148.4 L949.4 148.1 L950.9 147.8 L952.4 147.5 L953.9 147.3 L955.4 147.0 L957.0 146.8 L958.5 146.6 L960.0 146.4 L961.6 146.3 L963.1 146.1 L964.7 146.0 L966.3 145.9 L967.9 145.8 L969.5 145.8 L971.1 145.7 L972.7 145.7 L974.3 145.7 L975.9 145.7 L977.6 145.7 L979.2 145.8 L980.9 145.8 L982.5 145.9 L984.2 146.0 L985.9 146.2 L987.6 146.3 L989.4 146.5 L991.1 146.7 L992.8 146.9 L994.6 147.1 L996.4 147.3 L998.1 147.6 L999.9 147.9 L1001.7 148.2 L1003.6 148.5 L1005.4 148.8 L1007.2 149.1 L1009.1 149.5 L1010.9 149.9 L1012.8 150.3 L1014.7 150.7 L1016.6 151.1 L1018.5 151.6 L1020.5 152.1 L1022.4 152.6 L1024.4 153.1 L1026.3 153.6 L1028.3 154.1 L1030.3 154.7 M777.5 271.5 L778.7 270.2 L780.0 269.0 L781.2 267.7 L782.5 266.4 L783.7 265.1 L785.0 263.9 L786.3 262.6 L787.5 261.3 L788.8 260.1 L790.1 258.8 L791.4 257.6 L792.7 256.3 L794.0 255.1 L795.3 253.8 L796.6 252.6 L797.9 251.3 L799.2 250.1 L800.5 248.8 L801.8 247.6 L803.1 246.3 L804.5 245.1 L805.8 243.9 L807.1 242.6 L808.5 241.4 L809.8 240.2 L811.2 239.0 L812.5 237.7 L813.9 236.5 L815.2 235.3 L816.6 234.1 L817.9 232.9 L819.3 231.7 L820.7 230.5 L822.0 229.3 L823.4 228.1 L824.8 226.9 L826.2 225.7 L827.5 224.5 L828.9 223.4 L830.3 222.2 L831.7 221.0 L833.1 219.9 L834.5 218.7 L835.8 217.5 L837.2 216.4 L838.6 215.2 L840.0 214.1 L841.4 212.9 L842.8 211.8 L844.2 210.7 L845.6 209.5 L847.0 208.4 L848.4 207.3 L849.8 206.2 L851.2 205.1 L852.6 204.0 L854.0 202.9 L855.4 201.8 L856.8 200.7 L858.2 199.6 L859.6 198.6 L861.1 197.5 L862.5 196.4 L863.9 195.4 L865.3 194.3 L866.7 193.3 L868.1 192.3 L869.5 191.2 L870.9 190.2 L872.3 189.2 L873.7 188.2 L875.1 187.2 L876.5 186.2 L877.9 185.2 L879.3 184.2 L880.8 183.3 L882.2 182.3 L883.6 181.4 L885.0 180.4 L886.4 179.5 L887.8 178.6 L889.2 177.7 L890.6 176.8 L892.0 175.9 L893.4 175.0 L894.8 174.1 L896.2 173.2 L897.6 172.4 L899.0 171.5 L900.4 170.7 L901.8 169.9 L903.2 169.1 L904.6 168.3 L906.0 167.5 L907.4 166.7 L908.8 165.9 L910.2 165.2 L911.6 164.4 L913.0 163.7 L914.4 163.0 L915.8 162.3 L917.3 161.6 L918.7 160.9 L920.1 160.2 L921.5 159.6 L922.9 159.0 L924.3 158.3 L925.7 157.7 L927.1 157.1 L928.6 156.6 L930.0 156.0 L931.4 155.4 L932.8 154.9 L934.3 154.4 L935.7 153.9 L937.1 153.4 L938.6 152.9 L940.0 152.5 L941.5 152.0 L942.9 151.6 L944.4 151.2 L945.8 150.8 L947.3 150.4 L948.8 150.1 L950.2 149.8 L951.7 149.4 L953.2 149.1 L954.7 148.9 L956.2 148.6 L957.7 148.4 L959.2 148.1 L960.8 147.9 L962.3 147.7 L963.8 147.5 L965.4 147.4 L966.9 147.3 L968.5 147.1 L970.1 147.0 L971.6 147.0 L973.2 146.9 L974.8 146.9 L976.4 146.8 L978.1 146.8 L979.7 146.9 L981.3 146.9 L983.0 147.0 L984.7 147.0 L986.3 147.1 L988.0 147.2 L989.7 147.4 L991.4 147.5 L993.1 147.7 L994.9 147.9 L996.6 148.1 L998.4 148.3 L1000.2 148.5 L1001.9 148.8 L1003.7 149.1 L1005.5 149.4 L1007.4 149.7 L1009.2 150.0 L1011.0 150.3 L1012.9 150.7 L1014.8 151.1 L1016.7 151.5 L1018.6 151.9 L1020.5 152.3 L1022.4 152.8 L1024.3 153.3 L1026.3 153.7 L1028.2 154.2 L1030.2 154.8 L1032.2 155.3 L1034.2 155.8 L1036.2 156.4 M776.0 268.0 L775.9 266.4 L775.8 264.9 L775.8 263.3 L775.7 261.7 L775.6 260.1 L775.6 258.6 L775.5 257.0 L775.5 255.4 L775.5 253.9 L775.5 252.3 L775.5 250.7 L775.5 249.2 L775.5 247.6 L775.5 246.0 L775.6 244.5 L775.6 242.9 L775.6 241.3 L775.7 239.8 L775.8 238.2 L775.8 236.6 L775.9 235.1 L776.0 233.5 L776.1 231.9 L776.2 230.4 L776.4 228.8 L776.5 227.2 L776.6 225.7 L776.8 224.1 L776.9 222.6 L777.1 221.0 L777.3 219.4 L777.4 217.9 L777.6 216.3 L777.8 214.8 L778.0 213.2 L778.2 211.7 L778.5 210.1 L778.7 208.5 L778.9 207.0 L779.2 205.4 L779.4 203.9 L779.7 202.3 L780.0 200.8 L780.2 199.2 L780.5 197.7 L780.8 196.1 L781.1 194.6 L781.4 193.1 L781.7 191.5 L782.1 190.0 L782.4 188.4 L782.7 186.9 L783.1 185.3 L783.4 183.8 L783.8 182.3 L784.2 180.7 L784.6 179.2 L784.9 177.7 L785.3 176.1 L785.7 174.6 L786.1 173.1 L786.5 171.6 L787.0 170.0 L787.4 168.5 L787.8 167.0 L788.2 165.5 L788.7 164.0 L789.1 162.4 L789.6 160.9 L790.1 159.4 L790.5 157.9 L791.0 156.4 L791.5 154.9 L792.0 153.4 L792.4 151.9 L792.9 150.4 L793.4 148.9 L793.9 147.4 L794.4 145.9 L795.0 144.4 L795.5 143.0 L796.0 141.5 L796.5 140.0 L797.0 138.5 L797.6 137.1 L798.1 135.6 L798.6 134.2 L799.2 132.7 L799.7 131.3 L800.3 129.8 L800.8 128.4 L801.4 126.9 L801.9 125.5 L802.5 124.1 L803.0 122.7 L803.6 121.2 L804.1 119.8 L804.7 118.4 L805.2 117.0 L805.7 115.7 L806.3 114.3 L806.8 112.9 L807.4 111.6 L807.9 110.2 L808.4 108.9 L808.9 107.5 L809.5 106.2 L810.0 104.9 L810.5 103.6 L811.0 102.3 L811.4 101.0 L811.9 99.8 L812.4 98.5 L812.8 97.3 L813.2 96.0 L813.6 94.8 L814.0 93.7 L814.4 92.5 L814.8 91.3 L815.1 90.2 L815.4 89.1 L815.7 88.0 L815.9 87.0 L816.1 85.9 L816.3 84.9 L816.5 83.9 L816.6 83.0 L816.6 82.0 L816.6 81.1 L816.6 80.3 L816.5 79.5 L816.4 78.7 L816.1 77.9 L815.9 77.2 L815.5 76.6 L815.1 76.0 L814.6 75.4 L814.0 74.9 L813.3 74.4 L812.5 74.0 L811.7 73.6 L810.7 73.3 L809.6 73.0 L808.4 72.8 L807.1 72.6 L805.7 72.6 L804.1 72.5 L802.5 72.5 L800.7 72.6 L798.8 72.8 L796.7 72.9 L794.6 73.2 L792.3 73.5 L789.8 73.8 L787.3 74.3 L784.6 74.7 L781.8 75.2 L778.9 75.8 L775.9 76.4 L772.8 77.0 L769.5 77.7 L766.2 78.5 L762.7 79.2 L759.2 80.0 L755.5 80.9 L751.8 81.8 L748.0 82.7 L744.1 83.6 L740.2 84.6 L736.1 85.6 L732.0 86.6 L727.8 87.7 L723.6 88.8 L719.3 89.9 L714.9 91.0 L710.5 92.1 L706.1 93.3 L701.6 94.5 L697.1 95.7 L692.5 96.9 L687.9 98.1 L683.3 99.4 L678.6 100.6 M1128.8 101.9 L1131.5 103.2 L1134.3 104.5 L1137.0 105.8 L1139.8 107.1 L1142.6 108.5 L1145.4 109.8 L1148.2 111.1 L1151.0 112.5 L1153.9 113.9 L1156.7 115.2 L1159.6 116.6 L1162.4 118.0 L1165.3 119.4 L1168.2 120.8 L1171.0 122.2 L1173.9 123.7 L1176.8 125.1 L1179.6 126.5 L1182.5 127.9 L1185.4 129.4 L1188.2 130.8 L1191.1 132.3 L1193.9 133.7 L1196.8 135.2" fill="none" stroke="#ff2000" stroke-width="1.39" stroke-dasharray="1.39 2.29"/>
<path d="M983.8 58.2 L984.6 58.5 L985.3 58.8 L986.1 59.1 L986.8 59.4 L987.6 59.7 L988.3 60.1 L989.1 60.4 L989.8 60.7 L990.6 61.0 L991.3 61.3 L992.1 61.6 L992.8 61.9 L993.6 62.2 L994.3 62.6 L995.1 62.9 L995.8 63.2 L996.6 63.5 L997.3 63.8 L998.1 64.1 L998.8 64.4 L999.6 64.8 L1000.3 65.1 L1001.1 65.4 L1001.8 65.7 L1002.6 66.0 L1003.3 66.3 L1004.1 66.6 L1004.8 67.0 L1005.6 67.3 L1006.3 67.6 L1007.1 67.9 M1006.1 76.1 L1006.9 76.4 L1007.6 76.7 L1008.3 77.0 L1009.0 77.3 L1009.8 77.6 L1010.5 77.9 L1011.2 78.3 L1012.0 78.6 L1012.7 78.9 L1013.4 79.2 L1014.1 79.5 L1014.9 79.8 L1015.6 80.1 L1016.3 80.4 L1017.1 80.7 L1017.8 81.0 L1018.5 81.4 L1019.2 81.7 L1020.0 82.0 L1020.7 82.3 L1021.4 82.6 L1022.1 82.9 L1022.9 83.2 L1023.6 83.5 L1024.3 83.8 L1025.0 84.2 L1025.8 84.5 L1026.5 84.8 L1027.2 85.1 L1028.0 85.4 L1028.7 85.7 L1029.4 86.0 L1030.1 86.3 L1030.9 86.7 L1031.6 87.0 L1032.3 87.3 L1033.0 87.6 L1033.8 87.9 M963.6 70.0 L964.1 70.2 L964.6 70.4 L965.2 70.6 L965.7 70.8 L966.3 71.0 L966.8 71.2 L967.4 71.4 L967.9 71.6 L968.5 71.8 L969.0 72.0 L969.6 72.2 L970.2 72.4 L970.7 72.6 L971.3 72.8 L971.8 73.1 L972.4 73.3 L973.0 73.5 L973.6 73.7 L974.1 73.9 L974.7 74.1 L975.3 74.4 L975.9 74.6 L976.4 74.8 L977.0 75.0 L977.6 75.3 L978.2 75.5 L978.8 75.7 L979.4 75.9 L980.0 76.2 L980.5 76.4 L981.1 76.6 L981.7 76.9 L982.3 77.1 L982.9 77.3 L983.5 77.6 L984.1 77.8 L984.7 78.1 L985.3 78.3 L985.9 78.5 L986.5 78.8 L987.1 79.0 L987.7 79.3 L988.4 79.5 L989.0 79.7 L989.6 80.0 L990.2 80.2 L990.8 80.5 L991.4 80.7 L992.0 81.0 L992.6 81.2 L993.3 81.5 L993.9 81.7 L994.5 82.0 L995.1 82.2 L995.8 82.5 L996.4 82.7 L997.0 83.0 M998.9 81.5 L999.5 81.8 L1000.2 82.0 L1000.8 82.3 L1001.4 82.6 L1002.1 82.8 L1002.7 83.1 L1003.4 83.4 L1004.0 83.7 L1004.7 83.9 L1005.3 84.2 L1006.0 84.5 L1006.6 84.7 L1007.3 85.0 L1007.9 85.3 L1008.6 85.6 L1009.2 85.8 L1009.9 86.1 L1010.6 86.4 L1011.2 86.7 L1011.9 86.9 L1012.5 87.2 L1013.2 87.5 L1013.8 87.8 L1014.5 88.0 L1015.2 88.3 L1015.8 88.6 L1016.5 88.9 L1017.1 89.2 L1017.8 89.4 L1018.5 89.7 L1019.1 90.0 L1019.8 90.3 L1020.4 90.6 L1021.1 90.8 L1021.8 91.1 L1022.4 91.4 L1023.1 91.7 L1023.8 92.0 L1024.4 92.3 L1025.1 92.5 L1025.8 92.8 L1026.4 93.1 L1027.1 93.4 L1027.7 93.7 L1028.4 94.0 L1029.1 94.2 L1029.7 94.5 L1030.4 94.8 L1031.1 95.1 L1031.7 95.4 L1032.4 95.7 L1033.1 96.0 L1033.8 96.2 M1030.3 154.7 L1030.7 154.8 L1031.1 154.9 L1031.5 155.0 L1031.9 155.1 L1032.3 155.2 L1032.7 155.3 L1033.1 155.4 L1033.5 155.6 L1033.9 155.7 L1034.3 155.8 L1034.7 155.9 L1035.1 156.0 L1035.5 156.1 L1035.9 156.3 L1036.3 156.4 L1036.7 156.5 L1037.1 156.6 L1037.5 156.7 L1037.9 156.9 L1038.3 157.0 L1038.7 157.1 L1039.1 157.2 L1039.5 157.3 L1039.9 157.5 L1040.3 157.6 L1040.8 157.7 L1041.2 157.8 L1041.6 158.0 L1042.0 158.1 L1042.4 158.2 L1042.8 158.3 L1043.2 158.5 L1043.6 158.6 L1044.0 158.7 L1044.4 158.9 L1044.8 159.0 L1045.3 159.1 L1045.7 159.3 L1046.1 159.4 L1046.5 159.5 L1046.9 159.7 L1047.3 159.8 L1047.7 159.9 L1048.2 160.1 L1048.6 160.2 L1049.0 160.3 L1049.4 160.5 L1049.8 160.6 L1050.2 160.7 L1050.6 160.9 L1051.1 161.0 L1051.5 161.2 L1051.9 161.3 L1052.3 161.4 L1052.7 161.6 L1053.2 161.7 L1053.6 161.9 L1054.0 162.0 M1036.2 156.4 L1036.6 156.5 L1037.0 156.6 L1037.4 156.7 L1037.8 156.8 L1038.2 157.0 L1038.6 157.1 L1039.0 157.2 L1039.4 157.3 L1039.8 157.4 L1040.2 157.5 L1040.6 157.7 L1041.0 157.8 L1041.4 157.9 L1041.8 158.0 L1042.3 158.1 L1042.7 158.3 L1043.1 158.4 L1043.5 158.5 L1043.9 158.6 L1044.3 158.8 L1044.7 158.9 L1045.1 159.0 L1045.5 159.1 L1045.9 159.3 L1046.4 159.4 L1046.8 159.5 L1047.2 159.6 L1047.6 159.8 L1048.0 159.9 L1048.4 160.0 L1048.8 160.2 L1049.2 160.3 L1049.7 160.4 L1050.1 160.6 L1050.5 160.7 L1050.9 160.8 L1051.3 161.0 L1051.7 161.1 L1052.2 161.2 L1052.6 161.4 L1053.0 161.5 M1196.8 135.2 L1197.3 135.5 L1197.9 135.8 L1198.4 136.0 L1199.0 136.3 L1199.6 136.6 L1200.1 136.9 L1200.7 137.2 L1201.2 137.5 L1201.8 137.8 L1202.4 138.1 L1202.9 138.4 L1203.5 138.7 L1204.0 139.0 L1204.6 139.3 L1205.2 139.5 L1205.7 139.8 L1206.3 140.1 L1206.8 140.4 L1207.4 140.7 L1207.9 141.0 L1208.5 141.3 L1209.0 141.6 L1209.6 141.9 L1210.1 142.2 L1210.7 142.5 L1211.3 142.8 L1211.8 143.1 L1212.4 143.4 L1212.9 143.6 L1213.5 143.9 L1214.0 144.2 L1214.6 144.5 L1215.1 144.8 L1215.7 145.1 L1216.2 145.4 L1216.8 145.7 L1217.3 146.0" fill="none" stroke="#ff2000" stroke-width="1.6"/>
<circle cx="1007.1" cy="67.9" r="1.5" fill="#ff6040"/>
<circle cx="1033.8" cy="87.9" r="1.5" fill="#ff6040"/>
<circle cx="997.0" cy="83.0" r="1.5" fill="#ff6040"/>
<circle cx="1033.8" cy="96.2" r="1.5" fill="#ff6040"/>
<circle cx="1054.0" cy="162.0" r="1.5" fill="#ff6040"/>
<circle cx="1053.0" cy="161.5" r="1.5" fill="#ff6040"/>
<circle cx="1217.3" cy="146.0" r="1.5" fill="#ff6040"/>
<path d="M581.9 269.7 L582.5 268.5 L583.2 267.2 L583.9 265.9 L584.8 264.7 L585.7 263.4 L586.7 262.2 L587.7 261.0 L588.8 259.8 L590.0 258.6 L591.2 257.5 L592.5 256.4 L593.9 255.3 L595.2 254.2 L596.6 253.2 L598.1 252.3 L599.5 251.4 L601.0 250.5 L602.5 249.7 L604.0 249.0 L605.5 248.3 L607.1 247.7 L608.6 247.1 L610.1 246.6 L611.6 246.1 L613.0 245.8 L614.5 245.4 L615.9 245.2 L617.3 245.0 L618.6 244.9 L619.9 244.9 L621.1 244.9 L622.3 245.0 L623.5 245.2 L624.6 245.4 L625.6 245.8 L626.6 246.1 L627.5 246.6 L628.4 247.1 L629.2 247.7 L629.9 248.3 L630.6 249.0 L631.2 249.7 L631.7 250.5 L632.2 251.4 L632.5 252.3 L632.9 253.2 L633.1 254.2 L633.3 255.3 L633.4 256.4 L633.5 257.5 L633.5 258.6 L633.4 259.8 L633.3 261.0 L633.1 262.2 L632.9 263.4 L632.5 264.7 L632.2 265.9 L631.7 267.2 L631.3 268.5 L630.7 269.7 L630.1 271.0 L629.5 272.3 L628.8 273.5 L628.1 274.8 L627.3 276.0 L626.4 277.2 L625.6 278.4 L624.7 279.6 L623.7 280.7 L622.7 281.8 L621.7 282.9 L620.6 283.9 L619.5 284.9 L618.4 285.9 L617.3 286.8 L616.1 287.6 L614.9 288.4 L613.6 289.2 L612.4 289.9 L611.1 290.5 L609.9 291.1 L608.6 291.7 L607.3 292.1 L606.0 292.6 L604.7 292.9 L603.3 293.2 L602.0 293.4 L600.7 293.6 L599.4 293.7 L598.2 293.7 L596.9 293.7 L595.7 293.6 L594.4 293.4 L593.2 293.2 L592.1 292.9 L590.9 292.6 L589.8 292.1 L588.8 291.7 L587.7 291.1 L586.8 290.5 L585.9 289.9 L585.0 289.2 L584.2 288.4 L583.5 287.6 L582.8 286.8 L582.2 285.9 L581.6 284.9 L581.2 283.9 L580.8 282.9 L580.5 281.8 L580.2 280.7 L580.1 279.6 L580.0 278.4 L580.0 277.2 L580.1 276.0 L580.3 274.8 L580.6 273.5 L580.9 272.3 L581.4 271.0 L581.9 269.7" fill="none" stroke="#ffa500" stroke-width="2.3"/>
<path d="M750.5 281.2 L750.8 280.0 L751.1 278.7 L751.4 277.4 L751.9 276.2 L752.4 274.9 L752.9 273.7 L753.6 272.5 L754.3 271.3 L755.1 270.1 L755.9 269.0 L756.8 267.9 L757.7 266.8 L758.7 265.8 L759.7 264.8 L760.8 263.8 L761.9 262.9 L763.1 262.1 L764.3 261.3 L765.5 260.5 L766.7 259.9 L768.0 259.2 L769.3 258.7 L770.5 258.2 L771.8 257.7 L773.2 257.3 L774.5 257.0 L775.8 256.8 L777.1 256.6 L778.4 256.5 L779.7 256.5 L780.9 256.5 L782.2 256.6 L783.4 256.8 L784.6 257.0 L785.8 257.3 L786.9 257.7 L788.0 258.2 L789.1 258.7 L790.1 259.2 L791.1 259.9 L792.0 260.5 L792.9 261.3 L793.7 262.1 L794.5 262.9 L795.3 263.8 L796.0 264.8 L796.6 265.8 L797.2 266.8 L797.7 267.9 L798.1 269.0 L798.5 270.1 L798.9 271.3 L799.2 272.5 L799.4 273.7 L799.5 274.9 L799.6 276.2 L799.6 277.4 L799.6 278.7 L799.5 280.0 L799.4 281.2 L799.1 282.5 L798.9 283.8 L798.5 285.0 L798.1 286.3 L797.7 287.5 L797.2 288.7 L796.6 289.9 L796.0 291.1 L795.3 292.2 L794.6 293.3 L793.8 294.4 L793.0 295.4 L792.1 296.4 L791.2 297.4 L790.2 298.3 L789.2 299.2 L788.2 300.0 L787.1 300.7 L786.0 301.5 L784.9 302.1 L783.7 302.7 L782.5 303.2 L781.3 303.7 L780.1 304.1 L778.9 304.5 L777.6 304.8 L776.3 305.0 L775.1 305.2 L773.8 305.3 L772.5 305.3 L771.2 305.3 L770.0 305.2 L768.7 305.0 L767.5 304.8 L766.3 304.5 L765.1 304.1 L763.9 303.7 L762.7 303.2 L761.6 302.7 L760.5 302.1 L759.5 301.5 L758.5 300.7 L757.5 300.0 L756.6 299.2 L755.8 298.3 L755.0 297.4 L754.2 296.4 L753.5 295.4 L752.9 294.4 L752.3 293.3 L751.8 292.2 L751.4 291.1 L751.0 289.9 L750.7 288.7 L750.5 287.5 L750.4 286.3 L750.3 285.0 L750.3 283.8 L750.4 282.5 L750.5 281.2" fill="none" stroke="#ff2000" stroke-width="2.3"/>
<text x="606.5" y="272" text-anchor="middle" style="font-family:&quot;Liberation Sans&quot;,sans-serif;font-size:10.5px;fill:#ffffff">ORI</text>
<text x="774.6" y="284.3" text-anchor="middle" style="font-family:&quot;Liberation Sans&quot;,sans-serif;font-size:10.5px;fill:#ffffff">STA</text>
<path d="M754.1 278.5h6.0M757.1 275.5v6.0" stroke="#ff1a00" stroke-width="1.4" fill="none"/>
<path d="M761.1 279.3h6.0M764.1 276.3v6.0" stroke="#ff1a00" stroke-width="1.4" fill="none"/>
<path d="M773.3 280.4h5.0M775.8 277.9v5.0" stroke="#ff1a00" stroke-width="1.4" fill="none"/>
<path d="M776.4 282.0h5.0M778.9 279.5v5.0" stroke="#ff1a00" stroke-width="1.4" fill="none"/>
<path d="M765.2 274.2h4.0M767.2 272.2v4.0" stroke="#ff1a00" stroke-width="1.4" fill="none"/>
<path d="M598.5 269.5h5.0M601.0 267.0v5.0" stroke="#ff1a00" stroke-width="1.4" fill="none"/>
<path d="M606.5 271.0h5.0M609.0 268.5v5.0" stroke="#ff1a00" stroke-width="1.4" fill="none"/>
<path d="M612.5 269.5h4.0M614.5 267.5v4.0" stroke="#ff1a00" stroke-width="1.4" fill="none"/>
<rect x="19.5" y="641.5" width="1766" height="201" fill="none" stroke="#ffffff" stroke-width="1.0"/>
<text transform="translate(149.30,696.40) rotate(-90) scale(0.8525,1)" style="font-family:&quot;Liberation Sans&quot;,sans-serif;font-size:30.5px;fill:#5a5a5a">APR</text>
<text transform="translate(294.20,701.80) rotate(-90) scale(0.8934,1)" style="font-family:&quot;Liberation Sans&quot;,sans-serif;font-size:30.5px;fill:#5a5a5a">MAY</text>
<text transform="translate(437.00,691.40) rotate(-90) scale(0.8518,1)" style="font-family:&quot;Liberation Sans&quot;,sans-serif;font-size:30.5px;fill:#5a5a5a">JUN</text>
<text transform="translate(577.60,682.70) rotate(-90) scale(0.7904,1)" style="font-family:&quot;Liberation Sans&quot;,sans-serif;font-size:30.5px;fill:#5a5a5a">JUL</text>
<text transform="translate(723.30,699.30) rotate(-90) scale(0.8672,1)" style="font-family:&quot;Liberation Sans&quot;,sans-serif;font-size:30.5px;fill:#5a5a5a">AUG</text>
<text transform="translate(872.20,694.30) rotate(-90) scale(0.8431,1)" style="font-family:&quot;Liberation Sans&quot;,sans-serif;font-size:30.5px;fill:#5a5a5a">SEP</text>
<text transform="translate(1016.70,700.30) rotate(-90) scale(0.8810,1)" style="font-family:&quot;Liberation Sans&quot;,sans-serif;font-size:30.5px;fill:#5a5a5a">OCT</text>
<text transform="translate(1170.00,704.70) rotate(-90) scale(0.9031,1)" style="font-family:&quot;Liberation Sans&quot;,sans-serif;font-size:30.5px;fill:#5a5a5a">NOV</text>
<text transform="translate(1318.90,700.20) rotate(-90) scale(0.8557,1)" style="font-family:&quot;Liberation Sans&quot;,sans-serif;font-size:30.5px;fill:#5a5a5a">DEC</text>
<text transform="translate(1470.40,689.30) rotate(-90) scale(0.8630,1)" style="font-family:&quot;Liberation Sans&quot;,sans-serif;font-size:30.5px;fill:#5a5a5a">JAN</text>
<text transform="translate(1628.90,696.20) rotate(-90) scale(0.8411,1)" style="font-family:&quot;Liberation Sans&quot;,sans-serif;font-size:30.5px;fill:#5a5a5a">FEB</text>
<text transform="translate(1766.20,705.80) rotate(-90) scale(0.9141,1)" style="font-family:&quot;Liberation Sans&quot;,sans-serif;font-size:30.5px;fill:#5a5a5a">MAR</text>
<line x1="106.1" y1="834.0" x2="128.8" y2="834.0" stroke="#ee82ee" stroke-width="4.4"/>
<line x1="165.0" y1="834.0" x2="345.0" y2="834.0" stroke="#ee82ee" stroke-width="4.4"/>
<line x1="366.0" y1="834.0" x2="625.0" y2="834.0" stroke="#ee82ee" stroke-width="4.4"/>
<line x1="635.0" y1="834.0" x2="786.0" y2="834.0" stroke="#ee82ee" stroke-width="4.4"/>
<line x1="807.0" y1="834.0" x2="899.0" y2="834.0" stroke="#ee82ee" stroke-width="4.4"/>
<line x1="920.0" y1="834.0" x2="973.0" y2="834.0" stroke="#ee82ee" stroke-width="4.4"/>
<line x1="984.0" y1="834.0" x2="1066.0" y2="834.0" stroke="#ee82ee" stroke-width="4.4"/>
<line x1="1082.0" y1="834.0" x2="1203.0" y2="834.0" stroke="#ee82ee" stroke-width="4.4"/>
<line x1="1244.0" y1="834.0" x2="1326.0" y2="834.0" stroke="#ee82ee" stroke-width="4.4"/>
<line x1="1337.0" y1="834.0" x2="1355.0" y2="834.0" stroke="#ee82ee" stroke-width="4.4"/>
<line x1="1381.0" y1="834.0" x2="1444.0" y2="834.0" stroke="#ee82ee" stroke-width="4.4"/>
<line x1="1459.0" y1="834.0" x2="1512.0" y2="834.0" stroke="#ee82ee" stroke-width="4.4"/>
<line x1="1523.0" y1="834.0" x2="1547.0" y2="834.0" stroke="#ee82ee" stroke-width="4.4"/>
<line x1="1724.0" y1="834.0" x2="1748.0" y2="834.0" stroke="#ee82ee" stroke-width="4.4"/>
<line x1="1758.0" y1="834.0" x2="1782.0" y2="834.0" stroke="#ee82ee" stroke-width="4.4"/>
<line x1="165.0" y1="817.7" x2="188.0" y2="817.7" stroke="#e014f8" stroke-width="4.4"/>
<line x1="223.0" y1="817.7" x2="286.0" y2="817.7" stroke="#e014f8" stroke-width="4.4"/>
<line x1="312.0" y1="817.7" x2="340.0" y2="817.7" stroke="#e014f8" stroke-width="4.4"/>
<line x1="366.0" y1="817.7" x2="492.0" y2="817.7" stroke="#e014f8" stroke-width="4.4"/>
<line x1="508.0" y1="817.7" x2="654.0" y2="817.7" stroke="#e014f8" stroke-width="4.4"/>
<line x1="704.0" y1="817.7" x2="737.0" y2="817.7" stroke="#e014f8" stroke-width="4.4"/>
<line x1="773.0" y1="817.7" x2="845.0" y2="817.7" stroke="#e014f8" stroke-width="4.4"/>
<line x1="871.0" y1="817.7" x2="988.0" y2="817.7" stroke="#e014f8" stroke-width="4.4"/>
<line x1="1003.0" y1="817.7" x2="1017.0" y2="817.7" stroke="#e014f8" stroke-width="4.4"/>
<line x1="1062.0" y1="817.7" x2="1213.0" y2="817.7" stroke="#e014f8" stroke-width="4.4"/>
<line x1="1244.0" y1="817.7" x2="1267.0" y2="817.7" stroke="#e014f8" stroke-width="4.4"/>
<line x1="1293.0" y1="817.7" x2="1316.0" y2="817.7" stroke="#e014f8" stroke-width="4.4"/>
<line x1="1342.0" y1="817.7" x2="1365.0" y2="817.7" stroke="#e014f8" stroke-width="4.4"/>
<line x1="1386.0" y1="817.7" x2="1429.0" y2="817.7" stroke="#e014f8" stroke-width="4.4"/>
<line x1="1459.0" y1="817.7" x2="1483.0" y2="817.7" stroke="#e014f8" stroke-width="4.4"/>
<line x1="1548.0" y1="817.7" x2="1571.0" y2="817.7" stroke="#e014f8" stroke-width="4.4"/>
<line x1="165.0" y1="801.3" x2="188.0" y2="801.3" stroke="#ff1e00" stroke-width="4.4"/>
<line x1="258.0" y1="801.3" x2="487.0" y2="801.3" stroke="#ff1e00" stroke-width="4.4"/>
<line x1="508.0" y1="801.3" x2="615.0" y2="801.3" stroke="#ff1e00" stroke-width="4.4"/>
<line x1="626.0" y1="801.3" x2="718.0" y2="801.3" stroke="#ff1e00" stroke-width="4.4"/>
<line x1="729.0" y1="801.3" x2="826.0" y2="801.3" stroke="#ff1e00" stroke-width="4.4"/>
<line x1="949.0" y1="801.3" x2="1149.0" y2="801.3" stroke="#ff1e00" stroke-width="4.4"/>
<line x1="1160.0" y1="801.3" x2="1248.0" y2="801.3" stroke="#ff1e00" stroke-width="4.4"/>
<line x1="1258.0" y1="801.3" x2="1444.0" y2="801.3" stroke="#ff1e00" stroke-width="4.4"/>
<line x1="1459.0" y1="801.3" x2="1483.0" y2="801.3" stroke="#ff1e00" stroke-width="4.4"/>
<line x1="1552.0" y1="801.3" x2="1576.0" y2="801.3" stroke="#ff1e00" stroke-width="4.4"/>
<line x1="193.9" y1="785.0" x2="218.1" y2="785.0" stroke="#ffaa14" stroke-width="4.4"/>
<line x1="321.0" y1="785.0" x2="507.0" y2="785.0" stroke="#ffaa14" stroke-width="4.4"/>
<line x1="518.0" y1="785.0" x2="541.0" y2="785.0" stroke="#ffaa14" stroke-width="4.4"/>
<line x1="557.0" y1="785.0" x2="683.0" y2="785.0" stroke="#ffaa14" stroke-width="4.4"/>
<line x1="807.0" y1="785.0" x2="831.0" y2="785.0" stroke="#ffaa14" stroke-width="4.4"/>
<line x1="954.0" y1="785.0" x2="973.0" y2="785.0" stroke="#ffaa14" stroke-width="4.4"/>
<line x1="988.0" y1="785.0" x2="1125.0" y2="785.0" stroke="#ffaa14" stroke-width="4.4"/>
<line x1="1155.0" y1="785.0" x2="1218.0" y2="785.0" stroke="#ffaa14" stroke-width="4.4"/>
<line x1="1244.0" y1="785.0" x2="1267.0" y2="785.0" stroke="#ffaa14" stroke-width="4.4"/>
<line x1="1317.0" y1="785.0" x2="1341.0" y2="785.0" stroke="#ffaa14" stroke-width="4.4"/>
<line x1="1396.0" y1="785.0" x2="1419.0" y2="785.0" stroke="#ffaa14" stroke-width="4.4"/>
<line x1="1464.0" y1="785.0" x2="1650.0" y2="785.0" stroke="#ffaa14" stroke-width="4.4"/>
<line x1="341.0" y1="768.7" x2="370.0" y2="768.7" stroke="#fff000" stroke-width="4.4"/>
<line x1="410.0" y1="768.7" x2="448.0" y2="768.7" stroke="#fff000" stroke-width="4.4"/>
<line x1="469.0" y1="768.7" x2="492.0" y2="768.7" stroke="#fff000" stroke-width="4.4"/>
<line x1="527.0" y1="768.7" x2="546.0" y2="768.7" stroke="#fff000" stroke-width="4.4"/>
<line x1="562.0" y1="768.7" x2="590.0" y2="768.7" stroke="#fff000" stroke-width="4.4"/>
<line x1="616.0" y1="768.7" x2="649.0" y2="768.7" stroke="#fff000" stroke-width="4.4"/>
<line x1="959.0" y1="768.7" x2="988.0" y2="768.7" stroke="#fff000" stroke-width="4.4"/>
<line x1="1062.0" y1="768.7" x2="1086.0" y2="768.7" stroke="#fff000" stroke-width="4.4"/>
<line x1="1101.0" y1="768.7" x2="1125.0" y2="768.7" stroke="#fff000" stroke-width="4.4"/>
<line x1="1160.0" y1="768.7" x2="1194.0" y2="768.7" stroke="#fff000" stroke-width="4.4"/>
<line x1="1248.0" y1="768.7" x2="1272.0" y2="768.7" stroke="#fff000" stroke-width="4.4"/>
<line x1="1425.0" y1="768.7" x2="1512.0" y2="768.7" stroke="#fff000" stroke-width="4.4"/>
<line x1="420.0" y1="752.4" x2="443.0" y2="752.4" stroke="#a0f028" stroke-width="4.4"/>
<line x1="532.0" y1="752.4" x2="556.0" y2="752.4" stroke="#a0f028" stroke-width="4.4"/>
<line x1="567.0" y1="752.4" x2="590.0" y2="752.4" stroke="#a0f028" stroke-width="4.4"/>
<line x1="621.0" y1="752.4" x2="742.0" y2="752.4" stroke="#a0f028" stroke-width="4.4"/>
<line x1="969.0" y1="752.4" x2="1135.0" y2="752.4" stroke="#a0f028" stroke-width="4.4"/>
<line x1="1185.0" y1="752.4" x2="1346.0" y2="752.4" stroke="#a0f028" stroke-width="4.4"/>
<line x1="1469.0" y1="752.4" x2="1493.0" y2="752.4" stroke="#a0f028" stroke-width="4.4"/>
<line x1="429.0" y1="736.0" x2="453.0" y2="736.0" stroke="#5ad200" stroke-width="4.4"/>
<line x1="576.0" y1="736.0" x2="733.0" y2="736.0" stroke="#5ad200" stroke-width="4.4"/>
<line x1="993.0" y1="736.0" x2="1105.0" y2="736.0" stroke="#5ad200" stroke-width="4.4"/>
<line x1="1116.0" y1="736.0" x2="1223.0" y2="736.0" stroke="#5ad200" stroke-width="4.4"/>
<line x1="1263.0" y1="736.0" x2="1292.0" y2="736.0" stroke="#5ad200" stroke-width="4.4"/>
<line x1="1489.0" y1="736.0" x2="1512.0" y2="736.0" stroke="#5ad200" stroke-width="4.4"/>
<line x1="591.0" y1="719.7" x2="615.0" y2="719.7" stroke="#00ff78" stroke-width="4.4"/>
<line x1="655.0" y1="719.7" x2="772.0" y2="719.7" stroke="#00ff78" stroke-width="4.4"/>
<line x1="1072.0" y1="719.7" x2="1243.0" y2="719.7" stroke="#00ff78" stroke-width="4.4"/>
<line x1="1263.0" y1="719.7" x2="1287.0" y2="719.7" stroke="#00ff78" stroke-width="4.4"/>
<line x1="596.0" y1="703.4" x2="733.0" y2="703.4" stroke="#00e1ff" stroke-width="4.4"/>
<line x1="1091.0" y1="703.4" x2="1120.0" y2="703.4" stroke="#00e1ff" stroke-width="4.4"/>
<line x1="1199.0" y1="703.4" x2="1223.0" y2="703.4" stroke="#00e1ff" stroke-width="4.4"/>
<line x1="1273.0" y1="703.4" x2="1326.0" y2="703.4" stroke="#00e1ff" stroke-width="4.4"/>
<line x1="1111.0" y1="687.0" x2="1135.0" y2="687.0" stroke="#0a1ec8" stroke-width="4.4"/>
<line x1="73.8" y1="641.4" x2="73.8" y2="842.2" stroke="#8a8a8a" stroke-width="1.8" stroke-dasharray="1.8 3.6" opacity="0.9"/>
<line x1="217.8" y1="641.4" x2="217.8" y2="842.2" stroke="#8a8a8a" stroke-width="1.8" stroke-dasharray="1.8 3.6" opacity="0.9"/>
<line x1="364.8" y1="641.4" x2="364.8" y2="842.2" stroke="#8a8a8a" stroke-width="1.8" stroke-dasharray="1.8 3.6" opacity="0.9"/>
<line x1="505.2" y1="641.4" x2="505.2" y2="842.2" stroke="#8a8a8a" stroke-width="1.8" stroke-dasharray="1.8 3.6" opacity="0.9"/>
<line x1="650.3" y1="641.4" x2="650.3" y2="842.2" stroke="#8a8a8a" stroke-width="1.8" stroke-dasharray="1.8 3.6" opacity="0.9"/>
<line x1="797.0" y1="641.4" x2="797.0" y2="842.2" stroke="#8a8a8a" stroke-width="1.8" stroke-dasharray="1.8 3.6" opacity="0.9"/>
<line x1="940.0" y1="641.4" x2="940.0" y2="842.2" stroke="#8a8a8a" stroke-width="1.8" stroke-dasharray="1.8 3.6" opacity="0.9"/>
<line x1="1090.7" y1="641.4" x2="1090.7" y2="842.2" stroke="#8a8a8a" stroke-width="1.8" stroke-dasharray="1.8 3.6" opacity="0.9"/>
<line x1="1239.0" y1="641.4" x2="1239.0" y2="842.2" stroke="#8a8a8a" stroke-width="1.8" stroke-dasharray="1.8 3.6" opacity="0.9"/>
<line x1="1394.0" y1="641.4" x2="1394.0" y2="842.2" stroke="#8a8a8a" stroke-width="1.8" stroke-dasharray="1.8 3.6" opacity="0.9"/>
<line x1="1548.0" y1="641.4" x2="1548.0" y2="842.2" stroke="#8a8a8a" stroke-width="1.8" stroke-dasharray="1.8 3.6" opacity="0.9"/>
<line x1="1687.0" y1="641.4" x2="1687.0" y2="842.2" stroke="#8a8a8a" stroke-width="1.8" stroke-dasharray="1.8 3.6" opacity="0.9"/>
<line x1="1032.9" y1="641.4" x2="1032.9" y2="842.2" stroke="#ff0000" stroke-width="2.1" stroke-dasharray="5.0 2.33" stroke-dashoffset="2.73"/>
<text x="117.5" y="831.7" text-anchor="middle" style="font-family:&quot;Liberation Sans&quot;,sans-serif;font-size:10.3px;fill:#ffffff">KSE</text>
<text x="255.0" y="831.7" text-anchor="middle" style="font-family:&quot;Liberation Sans&quot;,sans-serif;font-size:10.3px;fill:#ffffff">ETA</text>
<text x="495.5" y="831.7" text-anchor="middle" style="font-family:&quot;Liberation Sans&quot;,sans-serif;font-size:10.3px;fill:#ffffff">NZC</text>
<text x="710.5" y="831.7" text-anchor="middle" style="font-family:&quot;Liberation Sans&quot;,sans-serif;font-size:10.3px;fill:#ffffff">NDA</text>
<text x="853.0" y="831.7" text-anchor="middle" style="font-family:&quot;Liberation Sans&quot;,sans-serif;font-size:10.3px;fill:#ffffff">SPE</text>
<text x="946.5" y="831.7" text-anchor="middle" style="font-family:&quot;Liberation Sans&quot;,sans-serif;font-size:10.3px;fill:#ffffff">ARD</text>
<text x="1025.0" y="831.7" text-anchor="middle" style="font-family:&quot;Liberation Sans&quot;,sans-serif;font-size:10.3px;fill:#ffffff">EGE</text>
<text x="1142.5" y="831.7" text-anchor="middle" style="font-family:&quot;Liberation Sans&quot;,sans-serif;font-size:10.3px;fill:#ffffff">NTA</text>
<text x="1285.0" y="831.7" text-anchor="middle" style="font-family:&quot;Liberation Sans&quot;,sans-serif;font-size:10.3px;fill:#ffffff">MON</text>
<text x="1346.0" y="831.7" text-anchor="middle" style="font-family:&quot;Liberation Sans&quot;,sans-serif;font-size:10.3px;fill:#ffffff">URS</text>
<text x="1412.5" y="831.7" text-anchor="middle" style="font-family:&quot;Liberation Sans&quot;,sans-serif;font-size:10.3px;fill:#ffffff">AHY</text>
<text x="1485.5" y="831.7" text-anchor="middle" style="font-family:&quot;Liberation Sans&quot;,sans-serif;font-size:10.3px;fill:#ffffff">GUM</text>
<text x="1535.0" y="831.7" text-anchor="middle" style="font-family:&quot;Liberation Sans&quot;,sans-serif;font-size:10.3px;fill:#ffffff">OHY</text>
<text x="1736.0" y="831.7" text-anchor="middle" style="font-family:&quot;Liberation Sans&quot;,sans-serif;font-size:10.3px;fill:#ffffff">XHE</text>
<text x="1770.0" y="831.7" text-anchor="middle" style="font-family:&quot;Liberation Sans&quot;,sans-serif;font-size:10.3px;fill:#ffffff">EVI</text>
<text x="176.5" y="815.4" text-anchor="middle" style="font-family:&quot;Liberation Sans&quot;,sans-serif;font-size:10.3px;fill:#ffffff">AVB</text>
<text x="254.5" y="815.4" text-anchor="middle" style="font-family:&quot;Liberation Sans&quot;,sans-serif;font-size:10.3px;fill:#ffffff">ELY</text>
<text x="326.0" y="815.4" text-anchor="middle" style="font-family:&quot;Liberation Sans&quot;,sans-serif;font-size:10.3px;fill:#ffffff">CAM</text>
<text x="429.0" y="815.4" text-anchor="middle" style="font-family:&quot;Liberation Sans&quot;,sans-serif;font-size:10.3px;fill:#ffffff">SSG</text>
<text x="581.0" y="815.4" text-anchor="middle" style="font-family:&quot;Liberation Sans&quot;,sans-serif;font-size:10.3px;fill:#ffffff">PCA</text>
<text x="720.5" y="815.4" text-anchor="middle" style="font-family:&quot;Liberation Sans&quot;,sans-serif;font-size:10.3px;fill:#ffffff">AUD</text>
<text x="809.0" y="815.4" text-anchor="middle" style="font-family:&quot;Liberation Sans&quot;,sans-serif;font-size:10.3px;fill:#ffffff">AUR</text>
<text x="929.5" y="815.4" text-anchor="middle" style="font-family:&quot;Liberation Sans&quot;,sans-serif;font-size:10.3px;fill:#ffffff">DSX</text>
<text x="1010.0" y="815.4" text-anchor="middle" style="font-family:&quot;Liberation Sans&quot;,sans-serif;font-size:10.3px;fill:#ffffff">OCU</text>
<text x="1137.5" y="815.4" text-anchor="middle" style="font-family:&quot;Liberation Sans&quot;,sans-serif;font-size:10.3px;fill:#ffffff">OER</text>
<text x="1255.5" y="815.4" text-anchor="middle" style="font-family:&quot;Liberation Sans&quot;,sans-serif;font-size:10.3px;fill:#ffffff">DKD</text>
<text x="1304.5" y="815.4" text-anchor="middle" style="font-family:&quot;Liberation Sans&quot;,sans-serif;font-size:10.3px;fill:#ffffff">DSV</text>
<text x="1353.5" y="815.4" text-anchor="middle" style="font-family:&quot;Liberation Sans&quot;,sans-serif;font-size:10.3px;fill:#ffffff">ALY</text>
<text x="1407.5" y="815.4" text-anchor="middle" style="font-family:&quot;Liberation Sans&quot;,sans-serif;font-size:10.3px;fill:#ffffff">JLE</text>
<text x="1471.0" y="815.4" text-anchor="middle" style="font-family:&quot;Liberation Sans&quot;,sans-serif;font-size:10.3px;fill:#ffffff">SCC</text>
<text x="1559.5" y="815.4" text-anchor="middle" style="font-family:&quot;Liberation Sans&quot;,sans-serif;font-size:10.3px;fill:#ffffff">FEV</text>
<text x="176.5" y="799.0" text-anchor="middle" style="font-family:&quot;Liberation Sans&quot;,sans-serif;font-size:10.3px;fill:#ffffff">LYR</text>
<text x="372.5" y="799.0" text-anchor="middle" style="font-family:&quot;Liberation Sans&quot;,sans-serif;font-size:10.3px;fill:#ffffff">JMC</text>
<text x="561.5" y="799.0" text-anchor="middle" style="font-family:&quot;Liberation Sans&quot;,sans-serif;font-size:10.3px;fill:#ffffff">JPE</text>
<text x="672.0" y="799.0" text-anchor="middle" style="font-family:&quot;Liberation Sans&quot;,sans-serif;font-size:10.3px;fill:#ffffff">PAU</text>
<text x="777.5" y="799.0" text-anchor="middle" style="font-family:&quot;Liberation Sans&quot;,sans-serif;font-size:10.3px;fill:#ffffff">NIA</text>
<text x="1049.0" y="799.0" text-anchor="middle" style="font-family:&quot;Liberation Sans&quot;,sans-serif;font-size:10.3px;fill:#ffffff">STA</text>
<text x="1204.0" y="799.0" text-anchor="middle" style="font-family:&quot;Liberation Sans&quot;,sans-serif;font-size:10.3px;fill:#ffffff">NOO</text>
<text x="1351.0" y="799.0" text-anchor="middle" style="font-family:&quot;Liberation Sans&quot;,sans-serif;font-size:10.3px;fill:#ffffff">COM</text>
<text x="1471.0" y="799.0" text-anchor="middle" style="font-family:&quot;Liberation Sans&quot;,sans-serif;font-size:10.3px;fill:#ffffff">NCC</text>
<text x="1564.0" y="799.0" text-anchor="middle" style="font-family:&quot;Liberation Sans&quot;,sans-serif;font-size:10.3px;fill:#ffffff">FED</text>
<text x="206.0" y="782.7" text-anchor="middle" style="font-family:&quot;Liberation Sans&quot;,sans-serif;font-size:10.3px;fill:#ffffff">HVI</text>
<text x="414.0" y="782.7" text-anchor="middle" style="font-family:&quot;Liberation Sans&quot;,sans-serif;font-size:10.3px;fill:#ffffff">ARI</text>
<text x="529.5" y="782.7" text-anchor="middle" style="font-family:&quot;Liberation Sans&quot;,sans-serif;font-size:10.3px;fill:#ffffff">SZC</text>
<text x="620.0" y="782.7" text-anchor="middle" style="font-family:&quot;Liberation Sans&quot;,sans-serif;font-size:10.3px;fill:#ffffff">CAP</text>
<text x="819.0" y="782.7" text-anchor="middle" style="font-family:&quot;Liberation Sans&quot;,sans-serif;font-size:10.3px;fill:#ffffff">NUE</text>
<text x="963.5" y="782.7" text-anchor="middle" style="font-family:&quot;Liberation Sans&quot;,sans-serif;font-size:10.3px;fill:#ffffff">OCT</text>
<text x="1056.5" y="782.7" text-anchor="middle" style="font-family:&quot;Liberation Sans&quot;,sans-serif;font-size:10.3px;fill:#ffffff">ORI</text>
<text x="1186.5" y="782.7" text-anchor="middle" style="font-family:&quot;Liberation Sans&quot;,sans-serif;font-size:10.3px;fill:#ffffff">AMO</text>
<text x="1255.5" y="782.7" text-anchor="middle" style="font-family:&quot;Liberation Sans&quot;,sans-serif;font-size:10.3px;fill:#ffffff">DPC</text>
<text x="1329.0" y="782.7" text-anchor="middle" style="font-family:&quot;Liberation Sans&quot;,sans-serif;font-size:10.3px;fill:#ffffff">XVI</text>
<text x="1407.5" y="782.7" text-anchor="middle" style="font-family:&quot;Liberation Sans&quot;,sans-serif;font-size:10.3px;fill:#ffffff">QUA</text>
<text x="1557.0" y="782.7" text-anchor="middle" style="font-family:&quot;Liberation Sans&quot;,sans-serif;font-size:10.3px;fill:#ffffff">AAN</text>
<text x="355.5" y="766.4" text-anchor="middle" style="font-family:&quot;Liberation Sans&quot;,sans-serif;font-size:10.3px;fill:#ffffff">TAH</text>
<text x="429.0" y="766.4" text-anchor="middle" style="font-family:&quot;Liberation Sans&quot;,sans-serif;font-size:10.3px;fill:#ffffff">JEA</text>
<text x="480.5" y="766.4" text-anchor="middle" style="font-family:&quot;Liberation Sans&quot;,sans-serif;font-size:10.3px;fill:#ffffff">JIP</text>
<text x="536.5" y="766.4" text-anchor="middle" style="font-family:&quot;Liberation Sans&quot;,sans-serif;font-size:10.3px;fill:#ffffff">PPS</text>
<text x="576.0" y="766.4" text-anchor="middle" style="font-family:&quot;Liberation Sans&quot;,sans-serif;font-size:10.3px;fill:#ffffff">ZCS</text>
<text x="632.5" y="766.4" text-anchor="middle" style="font-family:&quot;Liberation Sans&quot;,sans-serif;font-size:10.3px;fill:#ffffff">GDR</text>
<text x="973.5" y="766.4" text-anchor="middle" style="font-family:&quot;Liberation Sans&quot;,sans-serif;font-size:10.3px;fill:#ffffff">DRA</text>
<text x="1074.0" y="766.4" text-anchor="middle" style="font-family:&quot;Liberation Sans&quot;,sans-serif;font-size:10.3px;fill:#ffffff">LUM</text>
<text x="1113.0" y="766.4" text-anchor="middle" style="font-family:&quot;Liberation Sans&quot;,sans-serif;font-size:10.3px;fill:#ffffff">RPU</text>
<text x="1177.0" y="766.4" text-anchor="middle" style="font-family:&quot;Liberation Sans&quot;,sans-serif;font-size:10.3px;fill:#ffffff">THA</text>
<text x="1260.0" y="766.4" text-anchor="middle" style="font-family:&quot;Liberation Sans&quot;,sans-serif;font-size:10.3px;fill:#ffffff">PSU</text>
<text x="1468.5" y="766.4" text-anchor="middle" style="font-family:&quot;Liberation Sans&quot;,sans-serif;font-size:10.3px;fill:#ffffff">XCB</text>
<text x="431.5" y="750.1" text-anchor="middle" style="font-family:&quot;Liberation Sans&quot;,sans-serif;font-size:10.3px;fill:#ffffff">JRC</text>
<text x="544.0" y="750.1" text-anchor="middle" style="font-family:&quot;Liberation Sans&quot;,sans-serif;font-size:10.3px;fill:#ffffff">CAN</text>
<text x="578.5" y="750.1" text-anchor="middle" style="font-family:&quot;Liberation Sans&quot;,sans-serif;font-size:10.3px;fill:#ffffff">FAN</text>
<text x="681.5" y="750.1" text-anchor="middle" style="font-family:&quot;Liberation Sans&quot;,sans-serif;font-size:10.3px;fill:#ffffff">PER</text>
<text x="1052.0" y="750.1" text-anchor="middle" style="font-family:&quot;Liberation Sans&quot;,sans-serif;font-size:10.3px;fill:#ffffff">CTA</text>
<text x="1265.5" y="750.1" text-anchor="middle" style="font-family:&quot;Liberation Sans&quot;,sans-serif;font-size:10.3px;fill:#ffffff">HYD</text>
<text x="1481.0" y="750.1" text-anchor="middle" style="font-family:&quot;Liberation Sans&quot;,sans-serif;font-size:10.3px;fill:#ffffff">XUM</text>
<text x="441.0" y="733.7" text-anchor="middle" style="font-family:&quot;Liberation Sans&quot;,sans-serif;font-size:10.3px;fill:#ffffff">COR</text>
<text x="654.5" y="733.7" text-anchor="middle" style="font-family:&quot;Liberation Sans&quot;,sans-serif;font-size:10.3px;fill:#ffffff">SDA</text>
<text x="1049.0" y="733.7" text-anchor="middle" style="font-family:&quot;Liberation Sans&quot;,sans-serif;font-size:10.3px;fill:#ffffff">LMI</text>
<text x="1169.5" y="733.7" text-anchor="middle" style="font-family:&quot;Liberation Sans&quot;,sans-serif;font-size:10.3px;fill:#ffffff">LEO</text>
<text x="1277.5" y="733.7" text-anchor="middle" style="font-family:&quot;Liberation Sans&quot;,sans-serif;font-size:10.3px;fill:#ffffff">EHY</text>
<text x="1500.5" y="733.7" text-anchor="middle" style="font-family:&quot;Liberation Sans&quot;,sans-serif;font-size:10.3px;fill:#ffffff">ECV</text>
<text x="603.0" y="717.4" text-anchor="middle" style="font-family:&quot;Liberation Sans&quot;,sans-serif;font-size:10.3px;fill:#ffffff">JXA</text>
<text x="713.5" y="717.4" text-anchor="middle" style="font-family:&quot;Liberation Sans&quot;,sans-serif;font-size:10.3px;fill:#ffffff">KCG</text>
<text x="1157.5" y="717.4" text-anchor="middle" style="font-family:&quot;Liberation Sans&quot;,sans-serif;font-size:10.3px;fill:#ffffff">AND</text>
<text x="1275.0" y="717.4" text-anchor="middle" style="font-family:&quot;Liberation Sans&quot;,sans-serif;font-size:10.3px;fill:#ffffff">DAD</text>
<text x="664.5" y="701.1" text-anchor="middle" style="font-family:&quot;Liberation Sans&quot;,sans-serif;font-size:10.3px;fill:#ffffff">ERI</text>
<text x="1105.5" y="701.1" text-anchor="middle" style="font-family:&quot;Liberation Sans&quot;,sans-serif;font-size:10.3px;fill:#ffffff">SLD</text>
<text x="1211.0" y="701.1" text-anchor="middle" style="font-family:&quot;Liberation Sans&quot;,sans-serif;font-size:10.3px;fill:#ffffff">ORS</text>
<text x="1299.5" y="701.1" text-anchor="middle" style="font-family:&quot;Liberation Sans&quot;,sans-serif;font-size:10.3px;fill:#ffffff">GEM</text>
<text x="1123.0" y="684.7" text-anchor="middle" style="font-family:&quot;Liberation Sans&quot;,sans-serif;font-size:10.3px;fill:#ffffff">KUM</text>
<path d="M112.5 834.0h8.8M116.9 829.6v8.8" stroke="#ffffff" stroke-width="2.0" fill="none"/>
<path d="M240.3 834.0h8.8M244.7 829.6v8.8" stroke="#ffffff" stroke-width="2.0" fill="none"/>
<path d="M510.3 834.0h8.8M514.7 829.6v8.8" stroke="#ffffff" stroke-width="2.0" fill="none"/>
<path d="M706.3 834.0h8.8M710.7 829.6v8.8" stroke="#ffffff" stroke-width="2.0" fill="none"/>
<path d="M832.4 834.0h8.8M836.8 829.6v8.8" stroke="#ffffff" stroke-width="2.0" fill="none"/>
<path d="M961.6 834.0h8.8M966.0 829.6v8.8" stroke="#ffffff" stroke-width="2.0" fill="none"/>
<path d="M985.4 834.0h8.8M989.8 829.6v8.8" stroke="#ffffff" stroke-width="2.0" fill="none"/>
<path d="M1115.6 834.0h8.8M1120.0 829.6v8.8" stroke="#ffffff" stroke-width="2.0" fill="none"/>
<path d="M1294.3 834.0h8.8M1298.7 829.6v8.8" stroke="#ffffff" stroke-width="2.0" fill="none"/>
<path d="M1341.6 834.0h8.8M1346.0 829.6v8.8" stroke="#ffffff" stroke-width="2.0" fill="none"/>
<path d="M1412.6 834.0h8.8M1417.0 829.6v8.8" stroke="#ffffff" stroke-width="2.0" fill="none"/>
<path d="M1481.3 834.0h8.8M1485.7 829.6v8.8" stroke="#ffffff" stroke-width="2.0" fill="none"/>
<path d="M1530.6 834.0h8.8M1535.0 829.6v8.8" stroke="#ffffff" stroke-width="2.0" fill="none"/>
<path d="M1731.6 834.0h8.8M1736.0 829.6v8.8" stroke="#ffffff" stroke-width="2.0" fill="none"/>
<path d="M1765.6 834.0h8.8M1770.0 829.6v8.8" stroke="#ffffff" stroke-width="2.0" fill="none"/>
<path d="M171.3 817.7h8.8M175.7 813.3v8.8" stroke="#ffffff" stroke-width="2.0" fill="none"/>
<path d="M255.3 817.7h8.8M259.7 813.3v8.8" stroke="#ffffff" stroke-width="2.0" fill="none"/>
<path d="M322.4 817.7h8.8M326.8 813.3v8.8" stroke="#ffffff" stroke-width="2.0" fill="none"/>
<path d="M436.4 817.7h8.8M440.8 813.3v8.8" stroke="#ffffff" stroke-width="2.0" fill="none"/>
<path d="M598.5 817.7h8.8M602.9 813.3v8.8" stroke="#ffffff" stroke-width="2.0" fill="none"/>
<path d="M716.2 817.7h8.8M720.6 813.3v8.8" stroke="#ffffff" stroke-width="2.0" fill="none"/>
<path d="M792.6 817.7h8.8M797.0 813.3v8.8" stroke="#ffffff" stroke-width="2.0" fill="none"/>
<path d="M938.6 817.7h8.8M943.0 813.3v8.8" stroke="#ffffff" stroke-width="2.0" fill="none"/>
<path d="M1005.6 817.7h8.8M1010.0 813.3v8.8" stroke="#ffffff" stroke-width="2.0" fill="none"/>
<path d="M1152.4 817.7h8.8M1156.8 813.3v8.8" stroke="#ffffff" stroke-width="2.0" fill="none"/>
<path d="M1250.6 817.7h8.8M1255.0 813.3v8.8" stroke="#ffffff" stroke-width="2.0" fill="none"/>
<path d="M1299.6 817.7h8.8M1304.0 813.3v8.8" stroke="#ffffff" stroke-width="2.0" fill="none"/>
<path d="M1348.3 817.7h8.8M1352.7 813.3v8.8" stroke="#ffffff" stroke-width="2.0" fill="none"/>
<path d="M1402.6 817.7h8.8M1407.0 813.3v8.8" stroke="#ffffff" stroke-width="2.0" fill="none"/>
<path d="M1466.4 817.7h8.8M1470.8 813.3v8.8" stroke="#ffffff" stroke-width="2.0" fill="none"/>
<path d="M1554.4 817.7h8.8M1558.8 813.3v8.8" stroke="#ffffff" stroke-width="2.0" fill="none"/>
<path d="M173.4 801.3h8.8M177.8 796.9v8.8" stroke="#ffffff" stroke-width="2.0" fill="none"/>
<path d="M377.6 801.3h8.8M382.0 796.9v8.8" stroke="#ffffff" stroke-width="2.0" fill="none"/>
<path d="M544.3 801.3h8.8M548.7 796.9v8.8" stroke="#ffffff" stroke-width="2.0" fill="none"/>
<path d="M681.3 801.3h8.8M685.7 796.9v8.8" stroke="#ffffff" stroke-width="2.0" fill="none"/>
<path d="M740.3 801.3h8.8M744.7 796.9v8.8" stroke="#ffffff" stroke-width="2.0" fill="none"/>
<path d="M1074.4 801.3h8.8M1078.8 796.9v8.8" stroke="#ffffff" stroke-width="2.0" fill="none"/>
<path d="M1216.6 801.3h8.8M1221.0 796.9v8.8" stroke="#ffffff" stroke-width="2.0" fill="none"/>
<path d="M1304.4 801.3h8.8M1308.8 796.9v8.8" stroke="#ffffff" stroke-width="2.0" fill="none"/>
<path d="M1466.4 801.3h8.8M1470.8 796.9v8.8" stroke="#ffffff" stroke-width="2.0" fill="none"/>
<path d="M1559.5 801.3h8.8M1563.9 796.9v8.8" stroke="#ffffff" stroke-width="2.0" fill="none"/>
<path d="M201.4 785.0h8.8M205.8 780.6v8.8" stroke="#ffffff" stroke-width="2.0" fill="none"/>
<path d="M399.4 785.0h8.8M403.8 780.6v8.8" stroke="#ffffff" stroke-width="2.0" fill="none"/>
<path d="M524.3 785.0h8.8M528.7 780.6v8.8" stroke="#ffffff" stroke-width="2.0" fill="none"/>
<path d="M638.5 785.0h8.8M642.9 780.6v8.8" stroke="#ffffff" stroke-width="2.0" fill="none"/>
<path d="M814.6 785.0h8.8M819.0 780.6v8.8" stroke="#ffffff" stroke-width="2.0" fill="none"/>
<path d="M958.6 785.0h8.8M963.0 780.6v8.8" stroke="#ffffff" stroke-width="2.0" fill="none"/>
<path d="M1039.4 785.0h8.8M1043.8 780.6v8.8" stroke="#ffffff" stroke-width="2.0" fill="none"/>
<path d="M1187.4 785.0h8.8M1191.8 780.6v8.8" stroke="#ffffff" stroke-width="2.0" fill="none"/>
<path d="M1250.6 785.0h8.8M1255.0 780.6v8.8" stroke="#ffffff" stroke-width="2.0" fill="none"/>
<path d="M1324.4 785.0h8.8M1328.8 780.6v8.8" stroke="#ffffff" stroke-width="2.0" fill="none"/>
<path d="M1402.6 785.0h8.8M1407.0 780.6v8.8" stroke="#ffffff" stroke-width="2.0" fill="none"/>
<path d="M1545.3 785.0h8.8M1549.7 780.6v8.8" stroke="#ffffff" stroke-width="2.0" fill="none"/>
<path d="M355.6 768.7h8.8M360.0 764.3v8.8" stroke="#ffffff" stroke-width="2.0" fill="none"/>
<path d="M425.6 768.7h8.8M430.0 764.3v8.8" stroke="#ffffff" stroke-width="2.0" fill="none"/>
<path d="M475.6 768.7h8.8M480.0 764.3v8.8" stroke="#ffffff" stroke-width="2.0" fill="none"/>
<path d="M534.2 768.7h8.8M538.6 764.3v8.8" stroke="#ffffff" stroke-width="2.0" fill="none"/>
<path d="M570.5 768.7h8.8M574.9 764.3v8.8" stroke="#ffffff" stroke-width="2.0" fill="none"/>
<path d="M630.4 768.7h8.8M634.8 764.3v8.8" stroke="#ffffff" stroke-width="2.0" fill="none"/>
<path d="M973.5 768.7h8.8M977.9 764.3v8.8" stroke="#ffffff" stroke-width="2.0" fill="none"/>
<path d="M1069.3 768.7h8.8M1073.7 764.3v8.8" stroke="#ffffff" stroke-width="2.0" fill="none"/>
<path d="M1108.4 768.7h8.8M1112.8 764.3v8.8" stroke="#ffffff" stroke-width="2.0" fill="none"/>
<path d="M1177.6 768.7h8.8M1182.0 764.3v8.8" stroke="#ffffff" stroke-width="2.0" fill="none"/>
<path d="M1255.4 768.7h8.8M1259.8 764.3v8.8" stroke="#ffffff" stroke-width="2.0" fill="none"/>
<path d="M1466.4 768.7h8.8M1470.8 764.3v8.8" stroke="#ffffff" stroke-width="2.0" fill="none"/>
<path d="M426.6 752.4h8.8M431.0 748.0v8.8" stroke="#ffffff" stroke-width="2.0" fill="none"/>
<path d="M539.1 752.4h8.8M543.5 748.0v8.8" stroke="#ffffff" stroke-width="2.0" fill="none"/>
<path d="M573.4 752.4h8.8M577.8 748.0v8.8" stroke="#ffffff" stroke-width="2.0" fill="none"/>
<path d="M703.2 752.4h8.8M707.6 748.0v8.8" stroke="#ffffff" stroke-width="2.0" fill="none"/>
<path d="M1093.5 752.4h8.8M1097.9 748.0v8.8" stroke="#ffffff" stroke-width="2.0" fill="none"/>
<path d="M1270.6 752.4h8.8M1275.0 748.0v8.8" stroke="#ffffff" stroke-width="2.0" fill="none"/>
<path d="M1476.5 752.4h8.8M1480.9 748.0v8.8" stroke="#ffffff" stroke-width="2.0" fill="none"/>
<path d="M436.4 736.0h8.8M440.8 731.6v8.8" stroke="#ffffff" stroke-width="2.0" fill="none"/>
<path d="M630.4 736.0h8.8M634.8 731.6v8.8" stroke="#ffffff" stroke-width="2.0" fill="none"/>
<path d="M1038.2 736.0h8.8M1042.6 731.6v8.8" stroke="#ffffff" stroke-width="2.0" fill="none"/>
<path d="M1167.6 736.0h8.8M1172.0 731.6v8.8" stroke="#ffffff" stroke-width="2.0" fill="none"/>
<path d="M1274.5 736.0h8.8M1278.9 731.6v8.8" stroke="#ffffff" stroke-width="2.0" fill="none"/>
<path d="M1496.5 736.0h8.8M1500.9 731.6v8.8" stroke="#ffffff" stroke-width="2.0" fill="none"/>
<path d="M598.5 719.7h8.8M602.9 715.3v8.8" stroke="#ffffff" stroke-width="2.0" fill="none"/>
<path d="M726.4 719.7h8.8M730.8 715.3v8.8" stroke="#ffffff" stroke-width="2.0" fill="none"/>
<path d="M1187.4 719.7h8.8M1191.8 715.3v8.8" stroke="#ffffff" stroke-width="2.0" fill="none"/>
<path d="M1270.6 719.7h8.8M1275.0 715.3v8.8" stroke="#ffffff" stroke-width="2.0" fill="none"/>
<path d="M686.5 703.4h8.8M690.9 699.0v8.8" stroke="#ffffff" stroke-width="2.0" fill="none"/>
<path d="M1101.2 703.4h8.8M1105.6 699.0v8.8" stroke="#ffffff" stroke-width="2.0" fill="none"/>
<path d="M1206.4 703.4h8.8M1210.8 699.0v8.8" stroke="#ffffff" stroke-width="2.0" fill="none"/>
<path d="M1299.6 703.4h8.8M1304.0 699.0v8.8" stroke="#ffffff" stroke-width="2.0" fill="none"/>
<path d="M1118.3 687.0h8.8M1122.7 682.6v8.8" stroke="#ffffff" stroke-width="2.0" fill="none"/>
<line x1="19.5" y1="842.5" x2="19.5" y2="847.5" stroke="#ffffff" stroke-width="1.0"/>
<text x="19.70" y="862" text-anchor="middle" textLength="8.3" lengthAdjust="spacingAndGlyphs" style="font-family:&quot;Liberation Sans&quot;,sans-serif;font-size:14px;fill:#ffffff">0</text>
<line x1="264.5" y1="842.5" x2="264.5" y2="847.5" stroke="#ffffff" stroke-width="1.0"/>
<text x="264.94" y="862" text-anchor="middle" textLength="16.6" lengthAdjust="spacingAndGlyphs" style="font-family:&quot;Liberation Sans&quot;,sans-serif;font-size:14px;fill:#ffffff">50</text>
<line x1="510.5" y1="842.5" x2="510.5" y2="847.5" stroke="#ffffff" stroke-width="1.0"/>
<text x="510.17" y="862" text-anchor="middle" textLength="24.9" lengthAdjust="spacingAndGlyphs" style="font-family:&quot;Liberation Sans&quot;,sans-serif;font-size:14px;fill:#ffffff">100</text>
<line x1="755.5" y1="842.5" x2="755.5" y2="847.5" stroke="#ffffff" stroke-width="1.0"/>
<text x="755.41" y="862" text-anchor="middle" textLength="24.9" lengthAdjust="spacingAndGlyphs" style="font-family:&quot;Liberation Sans&quot;,sans-serif;font-size:14px;fill:#ffffff">150</text>
<line x1="1000.5" y1="842.5" x2="1000.5" y2="847.5" stroke="#ffffff" stroke-width="1.0"/>
<text x="1000.64" y="862" text-anchor="middle" textLength="24.9" lengthAdjust="spacingAndGlyphs" style="font-family:&quot;Liberation Sans&quot;,sans-serif;font-size:14px;fill:#ffffff">200</text>
<line x1="1245.5" y1="842.5" x2="1245.5" y2="847.5" stroke="#ffffff" stroke-width="1.0"/>
<text x="1245.88" y="862" text-anchor="middle" textLength="24.9" lengthAdjust="spacingAndGlyphs" style="font-family:&quot;Liberation Sans&quot;,sans-serif;font-size:14px;fill:#ffffff">250</text>
<line x1="1491.5" y1="842.5" x2="1491.5" y2="847.5" stroke="#ffffff" stroke-width="1.0"/>
<text x="1491.12" y="862" text-anchor="middle" textLength="24.9" lengthAdjust="spacingAndGlyphs" style="font-family:&quot;Liberation Sans&quot;,sans-serif;font-size:14px;fill:#ffffff">300</text>
<line x1="1736.5" y1="842.5" x2="1736.5" y2="847.5" stroke="#ffffff" stroke-width="1.0"/>
<text x="1736.35" y="862" text-anchor="middle" textLength="24.9" lengthAdjust="spacingAndGlyphs" style="font-family:&quot;Liberation Sans&quot;,sans-serif;font-size:14px;fill:#ffffff">350</text>
<text x="902.5" y="882" text-anchor="middle" textLength="147" lengthAdjust="spacingAndGlyphs" style="font-family:&quot;Liberation Sans&quot;,sans-serif;font-size:14px;fill:#ffffff">Solar longitude (deg)</text>
<text x="315" y="30.0" style="font-family:&quot;Liberation Mono&quot;,monospace;font-size:13.9px;fill:#ffffff;white-space:pre">UK00CC</text>
<text x="315" y="43.0" style="font-family:&quot;Liberation Mono&quot;,monospace;font-size:13.9px;fill:#ffffff;white-space:pre">Beg: 20251019 23:02:58 (sol = 206.46&#176;)</text>
<text x="315" y="55.9" style="font-family:&quot;Liberation Mono&quot;,monospace;font-size:13.9px;fill:#ffffff;white-space:pre">End: 20251020 02:48:19 (sol = 206.62&#176;)</text>
<text x="315" y="68.9" style="font-family:&quot;Liberation Mono&quot;,monospace;font-size:13.9px;fill:#ffffff;white-space:pre">--------------------------------------</text>
<text x="315" y="81.9" style="font-family:&quot;Liberation Mono&quot;,monospace;font-size:13.9px;fill:#ffffff;white-space:pre">...: 20</text>
<text x="315" y="94.9" style="font-family:&quot;Liberation Mono&quot;,monospace;font-size:13.9px;fill:#ffffff;white-space:pre">ORI: 8</text>
<text x="315" y="107.8" style="font-family:&quot;Liberation Mono&quot;,monospace;font-size:13.9px;fill:#ffffff;white-space:pre">STA: 8</text>
</svg></body></html>
